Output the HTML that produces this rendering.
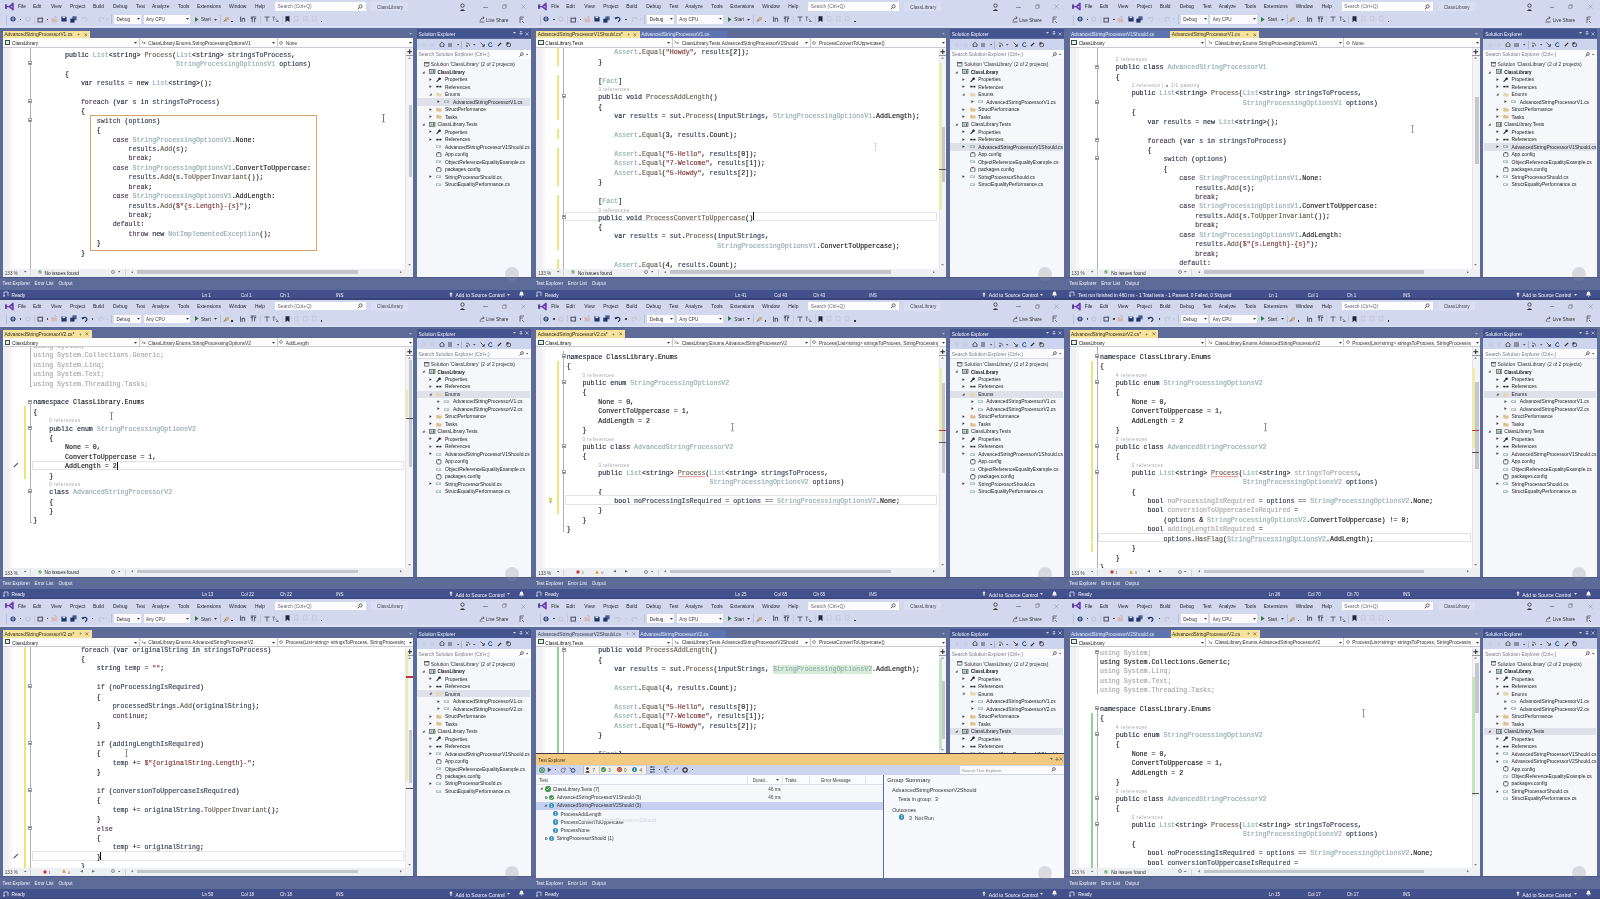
<!DOCTYPE html><html><head><meta charset="utf-8"><style>
html,body{margin:0;padding:0;width:1600px;height:899px;overflow:hidden;background:#5d6b99}
.tile{position:absolute;width:533.333px;height:299.667px;overflow:hidden;background:#5d6b99;filter:blur(0.3px)}
.tile i,.tile b,.tile div{position:absolute;display:block;font-style:normal}
.tile b{white-space:pre}.cd{-webkit-text-stroke:0.15px currentColor}
</style></head><body>
<div class="tile" style="left:0.000px;top:0.000px">
<i style="left:0.00px;top:0.00px;width:533.33px;height:27.70px;background:#d2d8ee;"></i>
<i style="left:0.00px;top:25.90px;width:533.33px;height:1.50px;background:#dce1f4;"></i>
<svg style="position:absolute;left:4.00px;top:2.00px" width="11" height="10" viewBox="0 0 11 10"><rect x="1.0" y="2.4" width="2.1" height="4.4" fill="#5b4596"/><path d="M3 4.6 L5.2 4.6" stroke="#6a48b0" stroke-width="1.2"/><path d="M5.3 4.6 L9.0 1.4 L9.0 7.8 Z" fill="#c6a8ee" stroke="#6a3cb4" stroke-width="1.5" stroke-linejoin="round"/></svg>
<b style="left:18.00px;top:4.46px;font:normal 4.9px/5.88px 'Liberation Sans',sans-serif;color:#1e1e28;">File</b>
<b style="left:33.00px;top:4.46px;font:normal 4.9px/5.88px 'Liberation Sans',sans-serif;color:#1e1e28;">Edit</b>
<b style="left:51.00px;top:4.46px;font:normal 4.9px/5.88px 'Liberation Sans',sans-serif;color:#1e1e28;">View</b>
<b style="left:70.00px;top:4.46px;font:normal 4.9px/5.88px 'Liberation Sans',sans-serif;color:#1e1e28;">Project</b>
<b style="left:93.00px;top:4.46px;font:normal 4.9px/5.88px 'Liberation Sans',sans-serif;color:#1e1e28;">Build</b>
<b style="left:113.00px;top:4.46px;font:normal 4.9px/5.88px 'Liberation Sans',sans-serif;color:#1e1e28;">Debug</b>
<b style="left:136.00px;top:4.46px;font:normal 4.9px/5.88px 'Liberation Sans',sans-serif;color:#1e1e28;">Test</b>
<b style="left:152.00px;top:4.46px;font:normal 4.9px/5.88px 'Liberation Sans',sans-serif;color:#1e1e28;">Analyze</b>
<b style="left:178.00px;top:4.46px;font:normal 4.9px/5.88px 'Liberation Sans',sans-serif;color:#1e1e28;">Tools</b>
<b style="left:197.00px;top:4.46px;font:normal 4.9px/5.88px 'Liberation Sans',sans-serif;color:#1e1e28;">Extensions</b>
<b style="left:229.00px;top:4.46px;font:normal 4.9px/5.88px 'Liberation Sans',sans-serif;color:#1e1e28;">Window</b>
<b style="left:255.00px;top:4.46px;font:normal 4.9px/5.88px 'Liberation Sans',sans-serif;color:#1e1e28;">Help</b>
<i style="left:275.00px;top:2.40px;width:91.00px;height:8.40px;background:#fdfdfe;"></i>
<b style="left:277.50px;top:4.49px;font:normal 4.85px/5.82px 'Liberation Sans',sans-serif;color:#6a6c78;">Search (Ctrl+Q)</b>
<svg style="position:absolute;left:357.00px;top:3.80px" width="6" height="6" viewBox="0 0 6 6"><circle cx="3.6" cy="2.4" r="1.6" fill="none" stroke="#444" stroke-width="0.8"/><path d="M2.5 3.5 L0.8 5.2" stroke="#444" stroke-width="0.9"/></svg>
<i style="left:371.00px;top:2.00px;width:37.00px;height:9.00px;background:#d9def2;"></i>
<b style="left:377.00px;top:4.58px;font:normal 4.7px/5.64px 'Liberation Sans',sans-serif;color:#4a4c58;">ClassLibrary</b>
<svg style="position:absolute;left:459.00px;top:2.50px" width="7" height="8.5" viewBox="0 0 7 8.5"><circle cx="3.5" cy="2.6" r="1.7" fill="none" stroke="#333" stroke-width="0.8"/><path d="M0.8 8 Q3.5 4.3 6.2 8 Z" fill="#333"/></svg>
<i style="left:483.00px;top:6.60px;width:4.50px;height:0.45px;background:#8a8e9c;"></i>
<svg style="position:absolute;left:501.50px;top:4.00px" width="5" height="5" viewBox="0 0 5 5"><path d="M1.3 0.6 L4.4 0.6 L4.4 3.7 M0.6 1.4 L3.6 1.4 L3.6 4.4 L0.6 4.4 Z" stroke="#777b88" stroke-width="0.55" fill="none"/></svg>
<svg style="position:absolute;left:521.00px;top:4.30px" width="5" height="5" viewBox="0 0 5 5"><path d="M0.5 0.5 L4.5 4.5 M4.5 0.5 L0.5 4.5" stroke="#8a8e9c" stroke-width="0.55"/></svg>
<i style="left:6.30px;top:14.50px;width:0.60px;height:10.00px;background:#b9bfd6;"></i>
<svg style="position:absolute;left:10.00px;top:16.20px" width="6" height="6" viewBox="0 0 6 6"><circle cx="3" cy="3" r="2" fill="none" stroke="#1d3a6e" stroke-width="1.2"/><path d="M1.6 3 L4.2 3" stroke="#1d3a6e" stroke-width="0.8"/></svg>
<i style="left:20.00px;top:18.80px;width:1.30px;height:1.10px;background:#444;border-radius:0"></i>
<svg style="position:absolute;left:24.50px;top:16.20px" width="6" height="6" viewBox="0 0 6 6"><circle cx="3" cy="3" r="2" fill="none" stroke="#c0c6dc" stroke-width="1.1"/></svg>
<i style="left:33.50px;top:15.50px;width:0.50px;height:8.00px;background:#c3c8dc;"></i>
<svg style="position:absolute;left:36.50px;top:15.60px" width="7" height="7" viewBox="0 0 7 7"><rect x="1" y="2.2" width="4.4" height="3.8" fill="none" stroke="#4a4e60" stroke-width="1"/><path d="M4.5 0.3 L5.2 1.7 L6.6 2.2 L5.2 2.7" fill="#4a4e60"/></svg>
<i style="left:46.80px;top:18.80px;width:1.30px;height:1.10px;background:#444;border-radius:0"></i>
<svg style="position:absolute;left:50.80px;top:15.80px" width="7" height="7" viewBox="0 0 7 7"><path d="M0.5 2 L2.5 2 L3 2.8 L6 2.8 L6 6.3 L0.5 6.3 Z" fill="#d8b8b0"/><path d="M3.5 0.5 L5.5 1.5" stroke="#b89890" stroke-width="0.8"/></svg>
<svg style="position:absolute;left:61.00px;top:16.30px" width="6" height="6" viewBox="0 0 6 6"><path d="M0.4 0.4 L4.6 0.4 L5.6 1.4 L5.6 5.6 L0.4 5.6 Z" fill="#1d3468"/><rect x="1.6" y="0.4" width="2.6" height="1.8" fill="#d9ddef"/></svg>
<svg style="position:absolute;left:69.50px;top:15.60px" width="7" height="7" viewBox="0 0 7 7"><path d="M2.4 0.3 L6.6 0.3 L6.6 4.3 L2.4 4.3 Z" fill="#4a5d8f"/><path d="M0.3 2.6 L4.5 2.6 L4.5 6.6 L0.3 6.6 Z" fill="#1d3468"/></svg>
<svg style="position:absolute;left:80.50px;top:16.20px" width="7" height="6" viewBox="0 0 7 6"><path d="M1.5 2.5 Q4 0.3 5.8 2.5 Q6.5 4.5 4 5.6" fill="none" stroke="#c3c8dc" stroke-width="1.1"/><path d="M0.4 1 L1.4 3.4 L3.4 2.2 Z" fill="#c3c8dc"/></svg>
<i style="left:92.00px;top:18.80px;width:1.30px;height:1.10px;background:#c3c8dc;border-radius:0"></i>
<svg style="position:absolute;left:97.50px;top:16.20px" width="7" height="6" viewBox="0 0 7 6"><path d="M5.5 2.5 Q3 0.3 1.2 2.5 Q0.5 4.5 3 5.6" fill="none" stroke="#c3c8dc" stroke-width="1.1"/><path d="M6.6 1 L5.6 3.4 L3.6 2.2 Z" fill="#c3c8dc"/></svg>
<i style="left:106.20px;top:18.90px;width:1.80px;height:0.60px;background:#c3c8dc;"></i>
<i style="left:106.80px;top:18.30px;width:0.60px;height:1.80px;background:#c3c8dc;"></i>
<i style="left:111.00px;top:15.00px;width:0.50px;height:8.50px;background:#b9bfd6;"></i>
<i style="left:114.00px;top:15.00px;width:27.00px;height:8.50px;background:#fbfbfd;"></i>
<b style="left:116.50px;top:17.44px;font:normal 4.6px/5.52px 'Liberation Sans',sans-serif;color:#333;">Debug</b>
<svg style="position:absolute;left:137.00px;top:18.40px" width="3" height="2" viewBox="0 0 3 2"><path d="M0 0 L3 0 L1.5 1.8 Z" fill="#333"/></svg>
<i style="left:143.50px;top:15.00px;width:46.50px;height:8.50px;background:#fbfbfd;"></i>
<b style="left:146.00px;top:17.44px;font:normal 4.6px/5.52px 'Liberation Sans',sans-serif;color:#444;">Any CPU</b>
<svg style="position:absolute;left:186.00px;top:18.40px" width="3" height="2" viewBox="0 0 3 2"><path d="M0 0 L3 0 L1.5 1.8 Z" fill="#333"/></svg>
<svg style="position:absolute;left:194.50px;top:16.70px" width="4" height="5" viewBox="0 0 4 5"><path d="M0 0 L3.5 2.5 L0 5 Z" fill="#2c7a3c"/></svg>
<b style="left:201.00px;top:17.34px;font:normal 4.6px/5.52px 'Liberation Sans',sans-serif;color:#333;">Start</b>
<svg style="position:absolute;left:214.00px;top:18.60px" width="3" height="2" viewBox="0 0 3 2"><path d="M0 0 L3 0 L1.5 1.8 Z" fill="#333"/></svg>
<i style="left:220.00px;top:15.00px;width:0.50px;height:8.50px;background:#b9bfd6;"></i>
<svg style="position:absolute;left:222.50px;top:16.20px" width="7" height="6" viewBox="0 0 7 6"><path d="M0.5 5.5 L3 1 L6 1 L6 3.5 L3 5.5 Z" fill="#c9b08a"/><path d="M0.5 5.5 L3 3.5" stroke="#555" stroke-width="0.6"/></svg>
<i style="left:231.30px;top:20.60px;width:1.30px;height:1.30px;background:#333;border-radius:0"></i>
<svg style="position:absolute;left:240.00px;top:16.00px" width="7" height="6.5" viewBox="0 0 7 6.5"><path d="M0.6 0.5 L0.6 5.8 M2.2 2 L2.2 5.8 M2.2 2.3 L4.6 2.3 L4.6 5.8" stroke="#3f4660" stroke-width="0.9" fill="none"/></svg>
<svg style="position:absolute;left:250.00px;top:15.80px" width="7" height="7" viewBox="0 0 7 7"><path d="M0.8 1 L6.2 1 M0.8 2.6 L3 2.6 M4 2.6 L6.2 2.6 M2.2 1 L2.2 6.3 M4.6 2.6 L4.6 6.3" stroke="#454c64" stroke-width="0.9" fill="none"/></svg>
<i style="left:259.50px;top:15.50px;width:0.50px;height:8.00px;background:#c3c8dc;"></i>
<svg style="position:absolute;left:263.50px;top:16.20px" width="6" height="6" viewBox="0 0 6 6"><path d="M0.5 1 L5.5 1 M3 1 L3 5.6" stroke="#5b6275" stroke-width="1.0" fill="none"/></svg>
<svg style="position:absolute;left:272.00px;top:16.20px" width="7" height="6" viewBox="0 0 7 6"><path d="M0.5 1 L3 1 M1.7 1 L1.7 5 M3.5 3 L6.5 5.5 M4 5.5 L6.5 5.5" stroke="#6d7389" stroke-width="0.9" fill="none"/></svg>
<i style="left:281.50px;top:15.50px;width:0.50px;height:8.00px;background:#c3c8dc;"></i>
<svg style="position:absolute;left:285.00px;top:16.00px" width="5" height="6.5" viewBox="0 0 5 6.5"><path d="M0.5 0.3 L4.5 0.3 L4.5 6.2 L2.5 4.6 L0.5 6.2 Z" fill="#1f2640"/></svg>
<svg style="position:absolute;left:294.00px;top:16.00px" width="6" height="6.5" viewBox="0 0 6 6.5"><path d="M0.5 0.5 L4 0.5 L4 5.5 L2.2 4.2 L0.5 5.5 Z" fill="none" stroke="#c3c8dc" stroke-width="0.8"/></svg>
<svg style="position:absolute;left:303.00px;top:16.00px" width="6" height="6.5" viewBox="0 0 6 6.5"><path d="M0.5 0.5 L4 0.5 L4 5.5 L2.2 4.2 L0.5 5.5 Z" fill="none" stroke="#c3c8dc" stroke-width="0.8"/></svg>
<svg style="position:absolute;left:312.00px;top:16.00px" width="6" height="6.5" viewBox="0 0 6 6.5"><path d="M0.5 0.5 L4 0.5 L4 5.5 L2.2 4.2 L0.5 5.5 Z" fill="none" stroke="#c3c8dc" stroke-width="0.8"/></svg>
<i style="left:321.00px;top:20.60px;width:1.30px;height:1.30px;background:#333;border-radius:0"></i>
<svg style="position:absolute;left:478.50px;top:16.30px" width="7" height="6.5" viewBox="0 0 7 6.5"><path d="M0.5 6 L5.5 6 M1.2 4.8 Q2 1.6 4.8 1.8 M3.8 0.6 L5.2 1.8 L3.8 3" stroke="#333" stroke-width="0.7" fill="none"/></svg>
<b style="left:486.00px;top:17.58px;font:normal 4.7px/5.64px 'Liberation Sans',sans-serif;color:#333;">Live Share</b>
<svg style="position:absolute;left:519.00px;top:15.50px" width="6" height="8" viewBox="0 0 6 8"><path d="M1 1 L5 1 M1 3 L4 3 M1 1 L1 7 M3 5 L5 7" stroke="#444" stroke-width="0.7" fill="none"/></svg>
<i style="left:0.00px;top:27.70px;width:533.33px;height:249.20px;background:#5d6b99;"></i>
<i style="left:3.00px;top:30.60px;width:87.30px;height:7.70px;background:#f5e29c;"></i>
<b style="left:4.40px;top:32.29px;font:normal 4.85px/5.82px 'Liberation Sans',sans-serif;color:#2e2a1c;">AdvancedStringProcessorV1.cs</b>
<svg style="position:absolute;left:77.30px;top:33.00px" width="3" height="3" viewBox="0 0 3 3"><path d="M0.5 1.5 L2.5 1.5 M1.5 0.5 L1.5 2.5" stroke="#6b6248" stroke-width="0.6"/></svg>
<svg style="position:absolute;left:83.80px;top:32.60px" width="3.6" height="3.6" viewBox="0 0 3.6 3.6"><path d="M0.4 0.4 L3.2 3.2 M3.2 0.4 L0.4 3.2" stroke="#7a5a30" stroke-width="0.7"/></svg>
<svg style="position:absolute;left:408.80px;top:33.30px" width="3" height="2" viewBox="0 0 3 2"><path d="M0 0 L3 0 L1.5 1.8 Z" fill="#aab2d0"/></svg>
<i style="left:3.00px;top:38.30px;width:410.00px;height:9.10px;background:#fdfdfe;"></i>
<i style="left:3.00px;top:46.80px;width:410.00px;height:0.60px;background:#c9ccd6;"></i>
<i style="left:138.70px;top:38.30px;width:0.60px;height:9.10px;background:#c9ccd6;"></i>
<i style="left:276.70px;top:38.30px;width:0.60px;height:9.10px;background:#c9ccd6;"></i>
<i style="left:4.60px;top:40.00px;width:5.60px;height:5.00px;background:#e8ece8;border:0.8px solid #35503f;box-sizing:border-box"></i>
<b style="left:12.00px;top:41.18px;font:normal 4.7px/5.64px 'Liberation Sans',sans-serif;color:#222;width:120px;overflow:hidden">ClassLibrary</b>
<svg style="position:absolute;left:134.00px;top:42.30px" width="3" height="2" viewBox="0 0 3 2"><path d="M0 0 L3 0 L1.5 1.8 Z" fill="#333"/></svg>
<svg style="position:absolute;left:141.00px;top:40.30px" width="4.5" height="4.5" viewBox="0 0 4.5 4.5"><path d="M0.5 3.5 L2 2 L0.5 0.5" stroke="#8a6a30" stroke-width="0.6" fill="none"/><rect x="2.5" y="2" width="2" height="2" fill="#998"/></svg>
<b style="left:148.30px;top:41.12px;font:normal 4.8px/5.76px 'Liberation Sans',sans-serif;color:#333;width:122px;overflow:hidden">ClassLibrary.Enums.StringProcessingOptionsV1</b>
<svg style="position:absolute;left:272.00px;top:42.30px" width="3" height="2" viewBox="0 0 3 2"><path d="M0 0 L3 0 L1.5 1.8 Z" fill="#333"/></svg>
<svg style="position:absolute;left:279.00px;top:40.50px" width="4" height="4" viewBox="0 0 4 4"><circle cx="2" cy="2" r="1.4" fill="none" stroke="#555" stroke-width="0.6"/></svg>
<b style="left:285.70px;top:41.12px;font:normal 4.8px/5.76px 'Liberation Sans',sans-serif;color:#333;width:119px;overflow:hidden">None</b>
<svg style="position:absolute;left:409.00px;top:42.30px" width="3" height="2" viewBox="0 0 3 2"><path d="M0 0 L3 0 L1.5 1.8 Z" fill="#333"/></svg>
<i style="left:3.00px;top:47.60px;width:410.00px;height:221.20px;background:#ffffff;"></i>
<i style="left:3.00px;top:47.60px;width:9.00px;height:221.20px;background:#f0f0f2;"></i>
<i style="left:9.00px;top:47.60px;width:3.00px;height:221.20px;background:#f7f7f9;"></i>
<i style="left:30.00px;top:47.60px;width:0.60px;height:221.20px;background:#b0b0b8;"></i>
<i style="left:416.60px;top:29.20px;width:114.20px;height:9.20px;background:#44548e;"></i>
<b style="left:418.50px;top:32.49px;font:normal 4.85px/5.82px 'Liberation Sans',sans-serif;color:#f0f2fa;">Solution Explorer</b>
<svg style="position:absolute;left:512.50px;top:32.20px" width="3" height="2.5" viewBox="0 0 3 2.5"><path d="M0 0 L3 0 L1.5 1.8 Z" fill="#dde"/></svg>
<svg style="position:absolute;left:518.50px;top:31.20px" width="4" height="4.5" viewBox="0 0 4 4.5"><path d="M2 0.3 L2 4.2 M0.3 2.6 L3.7 2.6 M0.8 0.5 L3.2 0.5" stroke="#dde" stroke-width="0.6"/></svg>
<svg style="position:absolute;left:524.50px;top:31.50px" width="4" height="4" viewBox="0 0 4 4"><path d="M0.4 0.4 L3.6 3.6 M3.6 0.4 L0.4 3.6" stroke="#dde" stroke-width="0.6"/></svg>
<i style="left:416.60px;top:38.50px;width:114.20px;height:11.00px;background:#cdd5ee;"></i>
<div style="left:0;top:1px">
<i style="left:421.50px;top:41.60px;width:4.40px;height:4.40px;background:#c7cde2;border-radius:50%"></i>
<i style="left:430.00px;top:41.60px;width:4.40px;height:4.40px;background:#c7cde2;border-radius:50%"></i>
<svg style="position:absolute;left:438.50px;top:41.00px" width="6" height="5" viewBox="0 0 6 5"><path d="M0.5 2.6 L3 0.3 L5.5 2.6 M1.2 2.4 L1.2 4.8 L4.8 4.8 L4.8 2.4" stroke="#333" stroke-width="0.8" fill="none"/></svg>
<i style="left:447.50px;top:41.60px;width:4.40px;height:4.40px;background:#8a8fa3;"></i>
<svg style="position:absolute;left:456.50px;top:43.40px" width="2.5" height="1.6" viewBox="0 0 2.5 1.6"><path d="M0 0 L2.5 0 L1.25 1.5 Z" fill="#444"/></svg>
<i style="left:461.00px;top:40.20px;width:0.50px;height:7.60px;background:#aeb5cc;"></i>
<svg style="position:absolute;left:464.50px;top:41.00px" width="6" height="5.5" viewBox="0 0 6 5.5"><path d="M1 1 Q4.5 0.5 4.8 4" stroke="#555" stroke-width="0.8" fill="none"/><circle cx="2" cy="4" r="1" fill="#555"/></svg>
<svg style="position:absolute;left:473.00px;top:43.40px" width="2.5" height="1.6" viewBox="0 0 2.5 1.6"><path d="M0 0 L2.5 0 L1.25 1.5 Z" fill="#444"/></svg>
<svg style="position:absolute;left:479.50px;top:41.00px" width="5" height="5" viewBox="0 0 5 5"><path d="M0.5 0.5 L4 4 M2 4.3 L4.3 4.3 L4.3 2" stroke="#333" stroke-width="0.8" fill="none"/></svg>
<svg style="position:absolute;left:488.30px;top:40.90px" width="5" height="5.5" viewBox="0 0 5 5.5"><path d="M4 1.4 A2 2 0 1 0 4.3 3.6" stroke="#1e4a8a" stroke-width="1.0" fill="none"/></svg>
<svg style="position:absolute;left:497.00px;top:41.20px" width="5" height="5" viewBox="0 0 5 5"><path d="M0.8 4.2 L4.2 0.8" stroke="#222" stroke-width="1.2"/></svg>
<svg style="position:absolute;left:505.50px;top:40.90px" width="5.5" height="5.5" viewBox="0 0 5.5 5.5"><circle cx="2.7" cy="2.9" r="2" fill="none" stroke="#333" stroke-width="0.8"/><rect x="0.5" y="0.3" width="2" height="2" fill="#333"/></svg>
</div>
<i style="left:416.60px;top:49.50px;width:114.20px;height:9.50px;background:#fcfcfe;"></i>
<i style="left:416.60px;top:58.60px;width:114.20px;height:0.50px;background:#d8dbe6;"></i>
<b style="left:418.50px;top:52.43px;font:normal 4.95px/5.94px 'Liberation Sans',sans-serif;color:#7d7f89;">Search Solution Explorer (Ctrl+;)</b>
<svg style="position:absolute;left:518.50px;top:51.60px" width="5" height="5" viewBox="0 0 5 5"><circle cx="3" cy="2" r="1.4" fill="none" stroke="#444" stroke-width="0.7"/><path d="M2 3 L0.5 4.6" stroke="#444" stroke-width="0.8"/></svg>
<svg style="position:absolute;left:525.50px;top:53.60px" width="2.5" height="1.6" viewBox="0 0 2.5 1.6"><path d="M0 0 L2.5 0 L1.25 1.5 Z" fill="#555"/></svg>
<i style="left:416.60px;top:59.00px;width:114.20px;height:217.90px;background:#f6f7fb;"></i>
<svg style="position:absolute;left:424.00px;top:62.00px" width="5.5" height="5" viewBox="0 0 5.5 5"><rect x="0.4" y="0.4" width="4.6" height="3.6" fill="none" stroke="#444" stroke-width="0.6"/><rect x="0.4" y="0.4" width="4.6" height="1" fill="#444"/><path d="M1.5 4.6 L4 4.6" stroke="#666" stroke-width="0.5"/></svg>
<b style="left:430.80px;top:62.33px;font:normal 4.95px/5.94px 'Liberation Sans',sans-serif;color:#333;">Solution 'ClassLibrary' (2 of 2 projects)</b>
<svg style="position:absolute;left:421.80px;top:70.59px" width="3" height="3" viewBox="0 0 3 3"><path d="M2.6 0.3 L2.6 2.6 L0.3 2.6 Z" fill="#333"/></svg>
<svg style="position:absolute;left:429.00px;top:69.49px" width="6.5" height="5" viewBox="0 0 6.5 5"><rect x="0.4" y="0.4" width="5.6" height="4.2" fill="#e9ecef" stroke="#4a5a4e" stroke-width="0.7"/><path d="M1.5 2 L3 2 M1.5 3.2 L3 3.2" stroke="#444" stroke-width="0.6"/><rect x="3.8" y="1.4" width="1.5" height="2.4" fill="#3d6b4d"/></svg>
<b style="left:437.60px;top:70.09px;font:bold 4.5px/5.4px 'Liberation Sans',sans-serif;color:#111;">ClassLibrary</b>
<svg style="position:absolute;left:429.10px;top:77.88px" width="3" height="3.2" viewBox="0 0 3 3.2"><path d="M0.5 0.2 L2.7 1.6 L0.5 3.0 Z" fill="#333"/></svg>
<svg style="position:absolute;left:436.30px;top:76.98px" width="5.5" height="5.5" viewBox="0 0 5.5 5.5"><path d="M0.6 4.8 L3 2.4" stroke="#222" stroke-width="1.1"/><circle cx="3.6" cy="1.8" r="1.3" fill="#222"/></svg>
<b style="left:444.90px;top:77.31px;font:normal 4.95px/5.94px 'Liberation Sans',sans-serif;color:#222;">Properties</b>
<svg style="position:absolute;left:429.10px;top:85.37px" width="3" height="3.2" viewBox="0 0 3 3.2"><path d="M0.5 0.2 L2.7 1.6 L0.5 3.0 Z" fill="#333"/></svg>
<svg style="position:absolute;left:436.30px;top:84.47px" width="6" height="5" viewBox="0 0 6 5"><rect x="0.3" y="1.8" width="2" height="1.6" fill="#222"/><rect x="3.4" y="1.8" width="2" height="1.6" fill="#222"/><path d="M2 2.6 L3.6 2.6" stroke="#222" stroke-width="0.5"/></svg>
<b style="left:444.90px;top:84.80px;font:normal 4.95px/5.94px 'Liberation Sans',sans-serif;color:#222;">References</b>
<svg style="position:absolute;left:429.10px;top:93.06px" width="3" height="3" viewBox="0 0 3 3"><path d="M2.6 0.3 L2.6 2.6 L0.3 2.6 Z" fill="#333"/></svg>
<svg style="position:absolute;left:436.30px;top:91.96px" width="6" height="5" viewBox="0 0 6 5"><path d="M0.3 0.8 L2.4 0.8 L3 1.5 L5.6 1.5 L5.6 4.5 L0.3 4.5 Z" fill="#e6d6b0"/></svg>
<b style="left:444.90px;top:92.29px;font:normal 4.95px/5.94px 'Liberation Sans',sans-serif;color:#222;">Enums</b>
<i style="left:417.10px;top:98.35px;width:112.70px;height:7.30px;background:#dfe1ea;"></i>
<svg style="position:absolute;left:437.20px;top:100.35px" width="3" height="3.2" viewBox="0 0 3 3.2"><path d="M0.5 0.2 L2.7 1.6 L0.5 3.0 Z" fill="#333"/></svg>
<svg style="position:absolute;left:444.40px;top:99.45px" width="6" height="5" viewBox="0 0 6 5"><text x="0" y="4" font-family="Liberation Sans" font-size="4" font-weight="bold" fill="#6a8a78">C#</text></svg>
<b style="left:453.00px;top:99.78px;font:normal 4.95px/5.94px 'Liberation Sans',sans-serif;color:#222;">AdvancedStringProcessorV1.cs</b>
<svg style="position:absolute;left:429.10px;top:107.84px" width="3" height="3.2" viewBox="0 0 3 3.2"><path d="M0.5 0.2 L2.7 1.6 L0.5 3.0 Z" fill="#333"/></svg>
<svg style="position:absolute;left:436.30px;top:106.94px" width="6" height="5" viewBox="0 0 6 5"><path d="M0.3 0.8 L2.4 0.8 L3 1.5 L5.6 1.5 L5.6 4.5 L0.3 4.5 Z" fill="#dcc18c"/></svg>
<b style="left:444.90px;top:107.27px;font:normal 4.95px/5.94px 'Liberation Sans',sans-serif;color:#222;">StructPerformance</b>
<svg style="position:absolute;left:429.10px;top:115.33px" width="3" height="3.2" viewBox="0 0 3 3.2"><path d="M0.5 0.2 L2.7 1.6 L0.5 3.0 Z" fill="#333"/></svg>
<svg style="position:absolute;left:436.30px;top:114.43px" width="6" height="5" viewBox="0 0 6 5"><path d="M0.3 0.8 L2.4 0.8 L3 1.5 L5.6 1.5 L5.6 4.5 L0.3 4.5 Z" fill="#dcc18c"/></svg>
<b style="left:444.90px;top:114.76px;font:normal 4.95px/5.94px 'Liberation Sans',sans-serif;color:#222;">Tasks</b>
<svg style="position:absolute;left:421.80px;top:123.02px" width="3" height="3" viewBox="0 0 3 3"><path d="M2.6 0.3 L2.6 2.6 L0.3 2.6 Z" fill="#333"/></svg>
<svg style="position:absolute;left:429.00px;top:121.92px" width="6.5" height="5" viewBox="0 0 6.5 5"><rect x="0.4" y="0.4" width="5.6" height="4.2" fill="#e9ecef" stroke="#4a5a4e" stroke-width="0.7"/><path d="M1.5 2 L3 2 M1.5 3.2 L3 3.2" stroke="#444" stroke-width="0.6"/><rect x="3.8" y="1.4" width="1.5" height="2.4" fill="#3d6b4d"/></svg>
<b style="left:437.60px;top:122.25px;font:normal 4.95px/5.94px 'Liberation Sans',sans-serif;color:#222;">ClassLibrary.Tests</b>
<svg style="position:absolute;left:429.10px;top:130.31px" width="3" height="3.2" viewBox="0 0 3 3.2"><path d="M0.5 0.2 L2.7 1.6 L0.5 3.0 Z" fill="#333"/></svg>
<svg style="position:absolute;left:436.30px;top:129.41px" width="5.5" height="5.5" viewBox="0 0 5.5 5.5"><path d="M0.6 4.8 L3 2.4" stroke="#222" stroke-width="1.1"/><circle cx="3.6" cy="1.8" r="1.3" fill="#222"/></svg>
<b style="left:444.90px;top:129.74px;font:normal 4.95px/5.94px 'Liberation Sans',sans-serif;color:#222;">Properties</b>
<svg style="position:absolute;left:429.10px;top:137.80px" width="3" height="3.2" viewBox="0 0 3 3.2"><path d="M0.5 0.2 L2.7 1.6 L0.5 3.0 Z" fill="#333"/></svg>
<svg style="position:absolute;left:436.30px;top:136.90px" width="6" height="5" viewBox="0 0 6 5"><rect x="0.3" y="1.8" width="2" height="1.6" fill="#222"/><rect x="3.4" y="1.8" width="2" height="1.6" fill="#222"/><path d="M2 2.6 L3.6 2.6" stroke="#222" stroke-width="0.5"/></svg>
<b style="left:444.90px;top:137.23px;font:normal 4.95px/5.94px 'Liberation Sans',sans-serif;color:#222;">References</b>
<svg style="position:absolute;left:436.30px;top:144.39px" width="6" height="5" viewBox="0 0 6 5"><text x="0" y="4" font-family="Liberation Sans" font-size="4" font-weight="bold" fill="#6a8a78">C#</text></svg>
<b style="left:444.90px;top:144.72px;font:normal 4.95px/5.94px 'Liberation Sans',sans-serif;color:#222;">AdvancedStringProcessorV1Should.cs</b>
<svg style="position:absolute;left:436.30px;top:151.88px" width="6" height="5.5" viewBox="0 0 6 5.5"><rect x="0.6" y="0.6" width="4.4" height="4.4" rx="1.2" fill="none" stroke="#333" stroke-width="0.7"/><path d="M2.8 0 L2.8 1.6" stroke="#333" stroke-width="0.7"/></svg>
<b style="left:444.90px;top:152.21px;font:normal 4.95px/5.94px 'Liberation Sans',sans-serif;color:#222;">App.config</b>
<svg style="position:absolute;left:436.30px;top:159.37px" width="6" height="5" viewBox="0 0 6 5"><text x="0" y="4" font-family="Liberation Sans" font-size="4" font-weight="bold" fill="#6a8a78">C#</text></svg>
<b style="left:444.90px;top:159.70px;font:normal 4.95px/5.94px 'Liberation Sans',sans-serif;color:#222;">ObjectReferenceEqualityExample.cs</b>
<svg style="position:absolute;left:436.30px;top:166.86px" width="6" height="5.5" viewBox="0 0 6 5.5"><rect x="0.6" y="0.6" width="4.4" height="4.4" rx="1.2" fill="none" stroke="#333" stroke-width="0.7"/><path d="M2.8 0 L2.8 1.6" stroke="#333" stroke-width="0.7"/></svg>
<b style="left:444.90px;top:167.19px;font:normal 4.95px/5.94px 'Liberation Sans',sans-serif;color:#222;">packages.config</b>
<svg style="position:absolute;left:429.10px;top:175.25px" width="3" height="3.2" viewBox="0 0 3 3.2"><path d="M0.5 0.2 L2.7 1.6 L0.5 3.0 Z" fill="#333"/></svg>
<svg style="position:absolute;left:436.30px;top:174.35px" width="6" height="5" viewBox="0 0 6 5"><text x="0" y="4" font-family="Liberation Sans" font-size="4" font-weight="bold" fill="#6a8a78">C#</text></svg>
<b style="left:444.90px;top:174.68px;font:normal 4.95px/5.94px 'Liberation Sans',sans-serif;color:#222;">StringProcessorShould.cs</b>
<svg style="position:absolute;left:436.30px;top:181.84px" width="6" height="5" viewBox="0 0 6 5"><text x="0" y="4" font-family="Liberation Sans" font-size="4" font-weight="bold" fill="#6a8a78">C#</text></svg>
<b style="left:444.90px;top:182.17px;font:normal 4.95px/5.94px 'Liberation Sans',sans-serif;color:#222;">StructEqualityPerformance.cs</b>
<i style="left:0.00px;top:276.90px;width:533.33px;height:12.80px;background:#5d6b99;"></i>
<i style="left:0.00px;top:276.90px;width:533.33px;height:0.90px;background:#4f5a88;"></i>
<b style="left:2.60px;top:281.38px;font:normal 4.7px/5.64px 'Liberation Sans',sans-serif;color:#eef0f8;">Test Explorer</b>
<b style="left:34.50px;top:281.38px;font:normal 4.7px/5.64px 'Liberation Sans',sans-serif;color:#eef0f8;">Error List</b>
<b style="left:58.40px;top:281.38px;font:normal 4.7px/5.64px 'Liberation Sans',sans-serif;color:#eef0f8;">Output</b>
<i style="left:0.00px;top:289.70px;width:533.33px;height:9.97px;background:#42508c;"></i>
<i style="left:0.00px;top:298.30px;width:533.33px;height:1.37px;background:#384276;"></i>
<svg style="position:absolute;left:2.50px;top:291.20px" width="6" height="6" viewBox="0 0 6 6"><path d="M1 5.5 L1 1 L5 1 L5 5 M0.2 4.3 L1 5.5 L1.8 4.3" stroke="#eef" stroke-width="0.7" fill="none"/></svg>
<b style="left:11.50px;top:292.55px;font:normal 4.75px/5.7px 'Liberation Sans',sans-serif;color:#f2f3f8;">Ready</b>
<b style="left:202.00px;top:292.60px;font:normal 4.5px/5.4px 'Liberation Sans',sans-serif;color:#f2f3f8;">Ln 1</b>
<b style="left:241.00px;top:292.60px;font:normal 4.5px/5.4px 'Liberation Sans',sans-serif;color:#f2f3f8;">Col 1</b>
<b style="left:280.00px;top:292.60px;font:normal 4.5px/5.4px 'Liberation Sans',sans-serif;color:#f2f3f8;">Ch 1</b>
<b style="left:336.00px;top:292.60px;font:normal 4.5px/5.4px 'Liberation Sans',sans-serif;color:#f2f3f8;">INS</b>
<svg style="position:absolute;left:449.00px;top:291.60px" width="4" height="5" viewBox="0 0 4 5"><path d="M2 0.3 L3.8 2.3 L2.6 2.3 L2.6 4.8 L1.4 4.8 L1.4 2.3 L0.2 2.3 Z" fill="#f2f3f8"/></svg>
<b style="left:455.50px;top:292.40px;font:normal 5.0px/6.0px 'Liberation Sans',sans-serif;color:#f2f3f8;">Add to Source Control</b>
<svg style="position:absolute;left:507.00px;top:293.50px" width="3" height="2" viewBox="0 0 3 2"><path d="M0 0 L3 0 L1.5 1.8 Z" fill="#f2f3f8"/></svg>
<svg style="position:absolute;left:519.00px;top:291.00px" width="5" height="6" viewBox="0 0 5 6"><path d="M2.5 0.3 Q4.3 0.8 4.3 3 L4.8 4.5 L0.2 4.5 L0.7 3 Q0.7 0.8 2.5 0.3 Z M1.8 5 L3.2 5 L2.5 5.8 Z" fill="#f2f3f8"/></svg>
<div style="left:3.0px;top:47.6px;width:402.20px;height:221.20px;overflow:hidden">
<b style="left:30.30px;top:3.19px;font:normal 6.62px/9.42px 'Liberation Mono',monospace" class="cd">        <span style="color:#262a40">public</span> <span style="color:#93acb0">List</span><span style="color:#202020">&lt;</span><span style="color:#262a40">string</span><span style="color:#202020">&gt;</span> <span style="color:#6a6054">Process</span><span style="color:#202020">(</span><span style="color:#93acb0">List</span><span style="color:#202020">&lt;</span><span style="color:#262a40">string</span><span style="color:#202020">&gt;</span> <span style="color:#3c4156">stringsToProcess</span><span style="color:#202020">,</span></b>
<b style="left:30.30px;top:12.61px;font:normal 6.62px/9.42px 'Liberation Mono',monospace" class="cd">                                    <span style="color:#93acb0">StringProcessingOptionsV1</span> <span style="color:#3c4156">options</span><span style="color:#202020">)</span></b>
<b style="left:30.30px;top:22.03px;font:normal 6.62px/9.42px 'Liberation Mono',monospace" class="cd">        <span style="color:#202020">{</span></b>
<b style="left:30.30px;top:31.45px;font:normal 6.62px/9.42px 'Liberation Mono',monospace" class="cd">            <span style="color:#262a40">var</span> <span style="color:#3c4156">results</span> <span style="color:#202020">=</span> <span style="color:#262a40">new</span> <span style="color:#93acb0">List</span><span style="color:#202020">&lt;</span><span style="color:#262a40">string</span><span style="color:#202020">&gt;</span><span style="color:#202020">(</span><span style="color:#202020">)</span><span style="color:#202020">;</span></b>
<b style="left:30.30px;top:40.87px;font:normal 6.62px/9.42px 'Liberation Mono',monospace" class="cd"></b>
<b style="left:30.30px;top:50.29px;font:normal 6.62px/9.42px 'Liberation Mono',monospace" class="cd">            <span style="color:#4a3850">foreach</span> <span style="color:#202020">(</span><span style="color:#262a40">var</span> <span style="color:#3c4156">s</span> <span style="color:#262a40">in</span> <span style="color:#3c4156">stringsToProcess</span><span style="color:#202020">)</span></b>
<b style="left:30.30px;top:59.71px;font:normal 6.62px/9.42px 'Liberation Mono',monospace" class="cd">            <span style="color:#202020">{</span></b>
<b style="left:30.30px;top:69.13px;font:normal 6.62px/9.42px 'Liberation Mono',monospace" class="cd">                <span style="color:#4a3850">switch</span> <span style="color:#202020">(</span><span style="color:#3c4156">options</span><span style="color:#202020">)</span></b>
<b style="left:30.30px;top:78.55px;font:normal 6.62px/9.42px 'Liberation Mono',monospace" class="cd">                <span style="color:#202020">{</span></b>
<b style="left:30.30px;top:87.97px;font:normal 6.62px/9.42px 'Liberation Mono',monospace" class="cd">                    <span style="color:#4a3850">case</span> <span style="color:#93acb0">StringProcessingOptionsV1</span><span style="color:#202020">.</span><span style="color:#202020">None</span><span style="color:#202020">:</span></b>
<b style="left:30.30px;top:97.39px;font:normal 6.62px/9.42px 'Liberation Mono',monospace" class="cd">                        <span style="color:#3c4156">results</span><span style="color:#202020">.</span><span style="color:#6a6054">Add</span><span style="color:#202020">(</span><span style="color:#3c4156">s</span><span style="color:#202020">)</span><span style="color:#202020">;</span></b>
<b style="left:30.30px;top:106.81px;font:normal 6.62px/9.42px 'Liberation Mono',monospace" class="cd">                        <span style="color:#4a3850">break</span><span style="color:#202020">;</span></b>
<b style="left:30.30px;top:116.23px;font:normal 6.62px/9.42px 'Liberation Mono',monospace" class="cd">                    <span style="color:#4a3850">case</span> <span style="color:#93acb0">StringProcessingOptionsV1</span><span style="color:#202020">.</span><span style="color:#202020">ConvertToUppercase</span><span style="color:#202020">:</span></b>
<b style="left:30.30px;top:125.65px;font:normal 6.62px/9.42px 'Liberation Mono',monospace" class="cd">                        <span style="color:#3c4156">results</span><span style="color:#202020">.</span><span style="color:#6a6054">Add</span><span style="color:#202020">(</span><span style="color:#3c4156">s</span><span style="color:#202020">.</span><span style="color:#6a6054">ToUpperInvariant</span><span style="color:#202020">(</span><span style="color:#202020">)</span><span style="color:#202020">)</span><span style="color:#202020">;</span></b>
<b style="left:30.30px;top:135.07px;font:normal 6.62px/9.42px 'Liberation Mono',monospace" class="cd">                        <span style="color:#4a3850">break</span><span style="color:#202020">;</span></b>
<b style="left:30.30px;top:144.49px;font:normal 6.62px/9.42px 'Liberation Mono',monospace" class="cd">                    <span style="color:#4a3850">case</span> <span style="color:#93acb0">StringProcessingOptionsV1</span><span style="color:#202020">.</span><span style="color:#202020">AddLength</span><span style="color:#202020">:</span></b>
<b style="left:30.30px;top:153.91px;font:normal 6.62px/9.42px 'Liberation Mono',monospace" class="cd">                        <span style="color:#3c4156">results</span><span style="color:#202020">.</span><span style="color:#6a6054">Add</span><span style="color:#202020">(</span><span style="color:#7e3434">$"{s.Length}-{s}"</span><span style="color:#202020">)</span><span style="color:#202020">;</span></b>
<b style="left:30.30px;top:163.33px;font:normal 6.62px/9.42px 'Liberation Mono',monospace" class="cd">                        <span style="color:#4a3850">break</span><span style="color:#202020">;</span></b>
<b style="left:30.30px;top:172.75px;font:normal 6.62px/9.42px 'Liberation Mono',monospace" class="cd">                    <span style="color:#4a3850">default</span><span style="color:#202020">:</span></b>
<b style="left:30.30px;top:182.17px;font:normal 6.62px/9.42px 'Liberation Mono',monospace" class="cd">                        <span style="color:#4a3850">throw</span> <span style="color:#262a40">new</span> <span style="color:#93acb0">NotImplementedException</span><span style="color:#202020">(</span><span style="color:#202020">)</span><span style="color:#202020">;</span></b>
<b style="left:30.30px;top:191.59px;font:normal 6.62px/9.42px 'Liberation Mono',monospace" class="cd">                <span style="color:#202020">}</span></b>
<b style="left:30.30px;top:201.01px;font:normal 6.62px/9.42px 'Liberation Mono',monospace" class="cd">            <span style="color:#202020">}</span></b>
</div>
<i style="left:28.3px;top:60.82px;width:4px;height:4px;background:#fff;border:0.6px solid #a0a0a8;box-sizing:border-box"></i>
<i style="left:29.30px;top:62.52px;width:2.00px;height:0.60px;background:#777;"></i>
<i style="left:28.3px;top:99.00px;width:4px;height:4px;background:#fff;border:0.6px solid #a0a0a8;box-sizing:border-box"></i>
<i style="left:29.30px;top:100.70px;width:2.00px;height:0.60px;background:#777;"></i>
<i style="left:28.3px;top:117.84px;width:4px;height:4px;background:#fff;border:0.6px solid #a0a0a8;box-sizing:border-box"></i>
<i style="left:29.30px;top:119.54px;width:2.00px;height:0.60px;background:#777;"></i>
<i style="left:90.10px;top:114.60px;width:227.10px;height:136.10px;background:transparent;border:1.7px solid #d2a46c;box-sizing:border-box"></i>
<svg style="position:absolute;left:381.50px;top:114.30px" width="3" height="8.4" viewBox="0 0 3 8.4"><path d="M0.3 0.4 L1.2 0.4 L1.5 0.8 L1.8 0.4 L2.7 0.4 M1.5 0.8 L1.5 7.6 M0.3 8.0 L1.2 8.0 L1.5 7.6 L1.8 8.0 L2.7 8.0" stroke="#222" stroke-width="0.6" fill="none"/></svg>
<i style="left:405.20px;top:47.60px;width:7.80px;height:221.20px;background:#f4f4f6;"></i>
<i style="left:405.20px;top:47.60px;width:0.50px;height:221.20px;background:#e4e4ea;"></i>
<svg style="position:absolute;left:406.60px;top:49.20px" width="5.5" height="5.5" viewBox="0 0 5.5 5.5"><path d="M2.75 0.3 L2.75 5.2 M0.3 2.75 L5.2 2.75" stroke="#222" stroke-width="1.0"/></svg>
<i style="left:405.70px;top:55.20px;width:7.30px;height:0.50px;background:#999;"></i>
<svg style="position:absolute;left:407.70px;top:57.40px" width="3" height="2" viewBox="0 0 3 2"><path d="M0 1.8 L3 1.8 L1.5 0 Z" fill="#888"/></svg>
<i style="left:408.50px;top:105.00px;width:3.60px;height:72.00px;background:#c6c7cc;"></i>
<svg style="position:absolute;left:407.70px;top:264.30px" width="3" height="2" viewBox="0 0 3 2"><path d="M0 0 L3 0 L1.5 1.8 Z" fill="#888"/></svg>
<i style="left:3.00px;top:268.80px;width:410.00px;height:8.10px;background:#eeeff3;"></i>
<b style="left:4.80px;top:270.89px;font:normal 4.6px/5.52px 'Liberation Sans',sans-serif;color:#444;">133 %</b>
<svg style="position:absolute;left:24.00px;top:271.20px" width="2.5" height="1.6" viewBox="0 0 2.5 1.6"><path d="M0 0 L2.5 0 L1.25 1.5 Z" fill="#555"/></svg>
<i style="left:30.00px;top:269.40px;width:0.50px;height:6.90px;background:#d6d8e0;"></i>
<svg style="position:absolute;left:37.50px;top:270.20px" width="4" height="4" viewBox="0 0 4 4"><circle cx="2" cy="2" r="1.7" fill="#5aa55a"/><path d="M1 2 L1.8 2.8 L3 1.2" stroke="#fff" stroke-width="0.5" fill="none"/></svg>
<b style="left:44.50px;top:270.77px;font:normal 4.8px/5.76px 'Liberation Sans',sans-serif;color:#222;">No issues found</b>
<svg style="position:absolute;left:111.00px;top:270.00px" width="4" height="4" viewBox="0 0 4 4"><circle cx="2" cy="2" r="1.5" fill="none" stroke="#555" stroke-width="0.6"/></svg>
<svg style="position:absolute;left:117.50px;top:271.20px" width="2.5" height="1.6" viewBox="0 0 2.5 1.6"><path d="M0 0 L2.5 0 L1.25 1.5 Z" fill="#555"/></svg>
<i style="left:124.50px;top:269.40px;width:0.50px;height:6.90px;background:#d6d8e0;"></i>
<svg style="position:absolute;left:131.00px;top:270.80px" width="2" height="2.5" viewBox="0 0 2 2.5"><path d="M2 0 L0 1.25 L2 2.5 Z" fill="#777"/></svg>
<i style="left:137.00px;top:270.20px;width:220.70px;height:3.40px;background:#c4c5cb;"></i>
<svg style="position:absolute;left:400.00px;top:270.80px" width="2" height="2.5" viewBox="0 0 2 2.5"><path d="M0 0 L2 1.25 L0 2.5 Z" fill="#777"/></svg>
<i style="left:505.0px;top:267.0px;width:14px;height:14px;border-radius:50%;background:rgba(140,140,150,0.28)"></i>
</div>
<div class="tile" style="left:533.333px;top:0.000px">
<i style="left:0.00px;top:0.00px;width:533.33px;height:27.70px;background:#d2d8ee;"></i>
<i style="left:0.00px;top:25.90px;width:533.33px;height:1.50px;background:#dce1f4;"></i>
<svg style="position:absolute;left:4.00px;top:2.00px" width="11" height="10" viewBox="0 0 11 10"><rect x="1.0" y="2.4" width="2.1" height="4.4" fill="#5b4596"/><path d="M3 4.6 L5.2 4.6" stroke="#6a48b0" stroke-width="1.2"/><path d="M5.3 4.6 L9.0 1.4 L9.0 7.8 Z" fill="#c6a8ee" stroke="#6a3cb4" stroke-width="1.5" stroke-linejoin="round"/></svg>
<b style="left:18.00px;top:4.46px;font:normal 4.9px/5.88px 'Liberation Sans',sans-serif;color:#1e1e28;">File</b>
<b style="left:33.00px;top:4.46px;font:normal 4.9px/5.88px 'Liberation Sans',sans-serif;color:#1e1e28;">Edit</b>
<b style="left:51.00px;top:4.46px;font:normal 4.9px/5.88px 'Liberation Sans',sans-serif;color:#1e1e28;">View</b>
<b style="left:70.00px;top:4.46px;font:normal 4.9px/5.88px 'Liberation Sans',sans-serif;color:#1e1e28;">Project</b>
<b style="left:93.00px;top:4.46px;font:normal 4.9px/5.88px 'Liberation Sans',sans-serif;color:#1e1e28;">Build</b>
<b style="left:113.00px;top:4.46px;font:normal 4.9px/5.88px 'Liberation Sans',sans-serif;color:#1e1e28;">Debug</b>
<b style="left:136.00px;top:4.46px;font:normal 4.9px/5.88px 'Liberation Sans',sans-serif;color:#1e1e28;">Test</b>
<b style="left:152.00px;top:4.46px;font:normal 4.9px/5.88px 'Liberation Sans',sans-serif;color:#1e1e28;">Analyze</b>
<b style="left:178.00px;top:4.46px;font:normal 4.9px/5.88px 'Liberation Sans',sans-serif;color:#1e1e28;">Tools</b>
<b style="left:197.00px;top:4.46px;font:normal 4.9px/5.88px 'Liberation Sans',sans-serif;color:#1e1e28;">Extensions</b>
<b style="left:229.00px;top:4.46px;font:normal 4.9px/5.88px 'Liberation Sans',sans-serif;color:#1e1e28;">Window</b>
<b style="left:255.00px;top:4.46px;font:normal 4.9px/5.88px 'Liberation Sans',sans-serif;color:#1e1e28;">Help</b>
<i style="left:275.00px;top:2.40px;width:91.00px;height:8.40px;background:#fdfdfe;"></i>
<b style="left:277.50px;top:4.49px;font:normal 4.85px/5.82px 'Liberation Sans',sans-serif;color:#6a6c78;">Search (Ctrl+Q)</b>
<svg style="position:absolute;left:357.00px;top:3.80px" width="6" height="6" viewBox="0 0 6 6"><circle cx="3.6" cy="2.4" r="1.6" fill="none" stroke="#444" stroke-width="0.8"/><path d="M2.5 3.5 L0.8 5.2" stroke="#444" stroke-width="0.9"/></svg>
<i style="left:371.00px;top:2.00px;width:37.00px;height:9.00px;background:#d9def2;"></i>
<b style="left:377.00px;top:4.58px;font:normal 4.7px/5.64px 'Liberation Sans',sans-serif;color:#4a4c58;">ClassLibrary</b>
<svg style="position:absolute;left:459.00px;top:2.50px" width="7" height="8.5" viewBox="0 0 7 8.5"><circle cx="3.5" cy="2.6" r="1.7" fill="none" stroke="#333" stroke-width="0.8"/><path d="M0.8 8 Q3.5 4.3 6.2 8 Z" fill="#333"/></svg>
<i style="left:483.00px;top:6.60px;width:4.50px;height:0.45px;background:#8a8e9c;"></i>
<svg style="position:absolute;left:501.50px;top:4.00px" width="5" height="5" viewBox="0 0 5 5"><path d="M1.3 0.6 L4.4 0.6 L4.4 3.7 M0.6 1.4 L3.6 1.4 L3.6 4.4 L0.6 4.4 Z" stroke="#777b88" stroke-width="0.55" fill="none"/></svg>
<svg style="position:absolute;left:521.00px;top:4.30px" width="5" height="5" viewBox="0 0 5 5"><path d="M0.5 0.5 L4.5 4.5 M4.5 0.5 L0.5 4.5" stroke="#8a8e9c" stroke-width="0.55"/></svg>
<i style="left:6.30px;top:14.50px;width:0.60px;height:10.00px;background:#b9bfd6;"></i>
<svg style="position:absolute;left:10.00px;top:16.20px" width="6" height="6" viewBox="0 0 6 6"><circle cx="3" cy="3" r="2" fill="none" stroke="#1d3a6e" stroke-width="1.2"/><path d="M1.6 3 L4.2 3" stroke="#1d3a6e" stroke-width="0.8"/></svg>
<i style="left:20.00px;top:18.80px;width:1.30px;height:1.10px;background:#444;border-radius:0"></i>
<svg style="position:absolute;left:24.50px;top:16.20px" width="6" height="6" viewBox="0 0 6 6"><circle cx="3" cy="3" r="2" fill="none" stroke="#c0c6dc" stroke-width="1.1"/></svg>
<i style="left:33.50px;top:15.50px;width:0.50px;height:8.00px;background:#c3c8dc;"></i>
<svg style="position:absolute;left:36.50px;top:15.60px" width="7" height="7" viewBox="0 0 7 7"><rect x="1" y="2.2" width="4.4" height="3.8" fill="none" stroke="#4a4e60" stroke-width="1"/><path d="M4.5 0.3 L5.2 1.7 L6.6 2.2 L5.2 2.7" fill="#4a4e60"/></svg>
<i style="left:46.80px;top:18.80px;width:1.30px;height:1.10px;background:#444;border-radius:0"></i>
<svg style="position:absolute;left:50.80px;top:15.80px" width="7" height="7" viewBox="0 0 7 7"><path d="M0.5 2 L2.5 2 L3 2.8 L6 2.8 L6 6.3 L0.5 6.3 Z" fill="#d8b8b0"/><path d="M3.5 0.5 L5.5 1.5" stroke="#b89890" stroke-width="0.8"/></svg>
<svg style="position:absolute;left:61.00px;top:16.30px" width="6" height="6" viewBox="0 0 6 6"><path d="M0.4 0.4 L4.6 0.4 L5.6 1.4 L5.6 5.6 L0.4 5.6 Z" fill="#1d3468"/><rect x="1.6" y="0.4" width="2.6" height="1.8" fill="#d9ddef"/></svg>
<svg style="position:absolute;left:69.50px;top:15.60px" width="7" height="7" viewBox="0 0 7 7"><path d="M2.4 0.3 L6.6 0.3 L6.6 4.3 L2.4 4.3 Z" fill="#4a5d8f"/><path d="M0.3 2.6 L4.5 2.6 L4.5 6.6 L0.3 6.6 Z" fill="#1d3468"/></svg>
<svg style="position:absolute;left:80.50px;top:16.20px" width="7" height="6" viewBox="0 0 7 6"><path d="M1.5 2.5 Q4 0.3 5.8 2.5 Q6.5 4.5 4 5.6" fill="none" stroke="#1d3468" stroke-width="1.1"/><path d="M0.4 1 L1.4 3.4 L3.4 2.2 Z" fill="#1d3468"/></svg>
<i style="left:92.00px;top:18.80px;width:1.30px;height:1.10px;background:#444;border-radius:0"></i>
<svg style="position:absolute;left:97.50px;top:16.20px" width="7" height="6" viewBox="0 0 7 6"><path d="M5.5 2.5 Q3 0.3 1.2 2.5 Q0.5 4.5 3 5.6" fill="none" stroke="#c3c8dc" stroke-width="1.1"/><path d="M6.6 1 L5.6 3.4 L3.6 2.2 Z" fill="#c3c8dc"/></svg>
<i style="left:106.20px;top:18.90px;width:1.80px;height:0.60px;background:#c3c8dc;"></i>
<i style="left:106.80px;top:18.30px;width:0.60px;height:1.80px;background:#c3c8dc;"></i>
<i style="left:111.00px;top:15.00px;width:0.50px;height:8.50px;background:#b9bfd6;"></i>
<i style="left:114.00px;top:15.00px;width:27.00px;height:8.50px;background:#fbfbfd;"></i>
<b style="left:116.50px;top:17.44px;font:normal 4.6px/5.52px 'Liberation Sans',sans-serif;color:#333;">Debug</b>
<svg style="position:absolute;left:137.00px;top:18.40px" width="3" height="2" viewBox="0 0 3 2"><path d="M0 0 L3 0 L1.5 1.8 Z" fill="#333"/></svg>
<i style="left:143.50px;top:15.00px;width:46.50px;height:8.50px;background:#fbfbfd;"></i>
<b style="left:146.00px;top:17.44px;font:normal 4.6px/5.52px 'Liberation Sans',sans-serif;color:#444;">Any CPU</b>
<svg style="position:absolute;left:186.00px;top:18.40px" width="3" height="2" viewBox="0 0 3 2"><path d="M0 0 L3 0 L1.5 1.8 Z" fill="#333"/></svg>
<svg style="position:absolute;left:194.50px;top:16.70px" width="4" height="5" viewBox="0 0 4 5"><path d="M0 0 L3.5 2.5 L0 5 Z" fill="#2c7a3c"/></svg>
<b style="left:201.00px;top:17.34px;font:normal 4.6px/5.52px 'Liberation Sans',sans-serif;color:#333;">Start</b>
<svg style="position:absolute;left:214.00px;top:18.60px" width="3" height="2" viewBox="0 0 3 2"><path d="M0 0 L3 0 L1.5 1.8 Z" fill="#333"/></svg>
<i style="left:220.00px;top:15.00px;width:0.50px;height:8.50px;background:#b9bfd6;"></i>
<svg style="position:absolute;left:222.50px;top:16.20px" width="7" height="6" viewBox="0 0 7 6"><path d="M0.5 5.5 L3 1 L6 1 L6 3.5 L3 5.5 Z" fill="#c9b08a"/><path d="M0.5 5.5 L3 3.5" stroke="#555" stroke-width="0.6"/></svg>
<i style="left:231.30px;top:20.60px;width:1.30px;height:1.30px;background:#333;border-radius:0"></i>
<svg style="position:absolute;left:240.00px;top:16.00px" width="7" height="6.5" viewBox="0 0 7 6.5"><path d="M0.6 0.5 L0.6 5.8 M2.2 2 L2.2 5.8 M2.2 2.3 L4.6 2.3 L4.6 5.8" stroke="#3f4660" stroke-width="0.9" fill="none"/></svg>
<svg style="position:absolute;left:250.00px;top:15.80px" width="7" height="7" viewBox="0 0 7 7"><path d="M0.8 1 L6.2 1 M0.8 2.6 L3 2.6 M4 2.6 L6.2 2.6 M2.2 1 L2.2 6.3 M4.6 2.6 L4.6 6.3" stroke="#454c64" stroke-width="0.9" fill="none"/></svg>
<i style="left:259.50px;top:15.50px;width:0.50px;height:8.00px;background:#c3c8dc;"></i>
<svg style="position:absolute;left:263.50px;top:16.20px" width="6" height="6" viewBox="0 0 6 6"><path d="M0.5 1 L5.5 1 M3 1 L3 5.6" stroke="#5b6275" stroke-width="1.0" fill="none"/></svg>
<svg style="position:absolute;left:272.00px;top:16.20px" width="7" height="6" viewBox="0 0 7 6"><path d="M0.5 1 L3 1 M1.7 1 L1.7 5 M3.5 3 L6.5 5.5 M4 5.5 L6.5 5.5" stroke="#6d7389" stroke-width="0.9" fill="none"/></svg>
<i style="left:281.50px;top:15.50px;width:0.50px;height:8.00px;background:#c3c8dc;"></i>
<svg style="position:absolute;left:285.00px;top:16.00px" width="5" height="6.5" viewBox="0 0 5 6.5"><path d="M0.5 0.3 L4.5 0.3 L4.5 6.2 L2.5 4.6 L0.5 6.2 Z" fill="#1f2640"/></svg>
<svg style="position:absolute;left:294.00px;top:16.00px" width="6" height="6.5" viewBox="0 0 6 6.5"><path d="M0.5 0.5 L4 0.5 L4 5.5 L2.2 4.2 L0.5 5.5 Z" fill="none" stroke="#c3c8dc" stroke-width="0.8"/></svg>
<svg style="position:absolute;left:303.00px;top:16.00px" width="6" height="6.5" viewBox="0 0 6 6.5"><path d="M0.5 0.5 L4 0.5 L4 5.5 L2.2 4.2 L0.5 5.5 Z" fill="none" stroke="#c3c8dc" stroke-width="0.8"/></svg>
<svg style="position:absolute;left:312.00px;top:16.00px" width="6" height="6.5" viewBox="0 0 6 6.5"><path d="M0.5 0.5 L4 0.5 L4 5.5 L2.2 4.2 L0.5 5.5 Z" fill="none" stroke="#c3c8dc" stroke-width="0.8"/></svg>
<i style="left:321.00px;top:20.60px;width:1.30px;height:1.30px;background:#333;border-radius:0"></i>
<svg style="position:absolute;left:478.50px;top:16.30px" width="7" height="6.5" viewBox="0 0 7 6.5"><path d="M0.5 6 L5.5 6 M1.2 4.8 Q2 1.6 4.8 1.8 M3.8 0.6 L5.2 1.8 L3.8 3" stroke="#333" stroke-width="0.7" fill="none"/></svg>
<b style="left:486.00px;top:17.58px;font:normal 4.7px/5.64px 'Liberation Sans',sans-serif;color:#333;">Live Share</b>
<svg style="position:absolute;left:519.00px;top:15.50px" width="6" height="8" viewBox="0 0 6 8"><path d="M1 1 L5 1 M1 3 L4 3 M1 1 L1 7 M3 5 L5 7" stroke="#444" stroke-width="0.7" fill="none"/></svg>
<i style="left:0.00px;top:27.70px;width:533.33px;height:249.20px;background:#5d6b99;"></i>
<i style="left:3.00px;top:30.60px;width:103.50px;height:7.70px;background:#f5e29c;"></i>
<b style="left:4.40px;top:32.29px;font:normal 4.85px/5.82px 'Liberation Sans',sans-serif;color:#2e2a1c;">AdvancedStringProcessorV1Should.cs*</b>
<svg style="position:absolute;left:93.50px;top:33.00px" width="3" height="3" viewBox="0 0 3 3"><path d="M0.5 1.5 L2.5 1.5 M1.5 0.5 L1.5 2.5" stroke="#6b6248" stroke-width="0.6"/></svg>
<svg style="position:absolute;left:100.00px;top:32.60px" width="3.6" height="3.6" viewBox="0 0 3.6 3.6"><path d="M0.4 0.4 L3.2 3.2 M3.2 0.4 L0.4 3.2" stroke="#7a5a30" stroke-width="0.7"/></svg>
<i style="left:106.50px;top:30.60px;width:87.50px;height:7.70px;background:#5e74b0;"></i>
<b style="left:107.90px;top:32.29px;font:normal 4.85px/5.82px 'Liberation Sans',sans-serif;color:#e8ecf8;">AdvancedStringProcessorV1.cs</b>
<svg style="position:absolute;left:408.80px;top:33.30px" width="3" height="2" viewBox="0 0 3 2"><path d="M0 0 L3 0 L1.5 1.8 Z" fill="#aab2d0"/></svg>
<i style="left:3.00px;top:38.30px;width:410.00px;height:9.10px;background:#fdfdfe;"></i>
<i style="left:3.00px;top:46.80px;width:410.00px;height:0.60px;background:#c9ccd6;"></i>
<i style="left:138.70px;top:38.30px;width:0.60px;height:9.10px;background:#c9ccd6;"></i>
<i style="left:276.70px;top:38.30px;width:0.60px;height:9.10px;background:#c9ccd6;"></i>
<i style="left:4.60px;top:40.00px;width:5.60px;height:5.00px;background:#e8ece8;border:0.8px solid #35503f;box-sizing:border-box"></i>
<b style="left:12.00px;top:41.18px;font:normal 4.7px/5.64px 'Liberation Sans',sans-serif;color:#222;width:120px;overflow:hidden">ClassLibrary.Tests</b>
<svg style="position:absolute;left:134.00px;top:42.30px" width="3" height="2" viewBox="0 0 3 2"><path d="M0 0 L3 0 L1.5 1.8 Z" fill="#333"/></svg>
<svg style="position:absolute;left:141.00px;top:40.30px" width="4.5" height="4.5" viewBox="0 0 4.5 4.5"><path d="M0.5 3.5 L2 2 L0.5 0.5" stroke="#8a6a30" stroke-width="0.6" fill="none"/><rect x="2.5" y="2" width="2" height="2" fill="#998"/></svg>
<b style="left:148.30px;top:41.12px;font:normal 4.8px/5.76px 'Liberation Sans',sans-serif;color:#333;width:122px;overflow:hidden">ClassLibrary.Tests.AdvancedStringProcessorV1Should</b>
<svg style="position:absolute;left:272.00px;top:42.30px" width="3" height="2" viewBox="0 0 3 2"><path d="M0 0 L3 0 L1.5 1.8 Z" fill="#333"/></svg>
<svg style="position:absolute;left:279.00px;top:40.50px" width="4" height="4" viewBox="0 0 4 4"><circle cx="2" cy="2" r="1.4" fill="none" stroke="#555" stroke-width="0.6"/></svg>
<b style="left:285.70px;top:41.12px;font:normal 4.8px/5.76px 'Liberation Sans',sans-serif;color:#333;width:119px;overflow:hidden">ProcessConvertToUppercase()</b>
<svg style="position:absolute;left:409.00px;top:42.30px" width="3" height="2" viewBox="0 0 3 2"><path d="M0 0 L3 0 L1.5 1.8 Z" fill="#333"/></svg>
<i style="left:3.00px;top:47.60px;width:410.00px;height:221.20px;background:#ffffff;"></i>
<i style="left:3.00px;top:47.60px;width:9.00px;height:221.20px;background:#f0f0f2;"></i>
<i style="left:9.00px;top:47.60px;width:3.00px;height:221.20px;background:#f7f7f9;"></i>
<i style="left:30.00px;top:47.60px;width:0.60px;height:221.20px;background:#b0b0b8;"></i>
<i style="left:416.60px;top:29.20px;width:114.20px;height:9.20px;background:#44548e;"></i>
<b style="left:418.50px;top:32.49px;font:normal 4.85px/5.82px 'Liberation Sans',sans-serif;color:#f0f2fa;">Solution Explorer</b>
<svg style="position:absolute;left:512.50px;top:32.20px" width="3" height="2.5" viewBox="0 0 3 2.5"><path d="M0 0 L3 0 L1.5 1.8 Z" fill="#dde"/></svg>
<svg style="position:absolute;left:518.50px;top:31.20px" width="4" height="4.5" viewBox="0 0 4 4.5"><path d="M2 0.3 L2 4.2 M0.3 2.6 L3.7 2.6 M0.8 0.5 L3.2 0.5" stroke="#dde" stroke-width="0.6"/></svg>
<svg style="position:absolute;left:524.50px;top:31.50px" width="4" height="4" viewBox="0 0 4 4"><path d="M0.4 0.4 L3.6 3.6 M3.6 0.4 L0.4 3.6" stroke="#dde" stroke-width="0.6"/></svg>
<i style="left:416.60px;top:38.50px;width:114.20px;height:11.00px;background:#cdd5ee;"></i>
<div style="left:0;top:1px">
<i style="left:421.50px;top:41.60px;width:4.40px;height:4.40px;background:#c7cde2;border-radius:50%"></i>
<i style="left:430.00px;top:41.60px;width:4.40px;height:4.40px;background:#c7cde2;border-radius:50%"></i>
<svg style="position:absolute;left:438.50px;top:41.00px" width="6" height="5" viewBox="0 0 6 5"><path d="M0.5 2.6 L3 0.3 L5.5 2.6 M1.2 2.4 L1.2 4.8 L4.8 4.8 L4.8 2.4" stroke="#333" stroke-width="0.8" fill="none"/></svg>
<i style="left:447.50px;top:41.60px;width:4.40px;height:4.40px;background:#8a8fa3;"></i>
<svg style="position:absolute;left:456.50px;top:43.40px" width="2.5" height="1.6" viewBox="0 0 2.5 1.6"><path d="M0 0 L2.5 0 L1.25 1.5 Z" fill="#444"/></svg>
<i style="left:461.00px;top:40.20px;width:0.50px;height:7.60px;background:#aeb5cc;"></i>
<svg style="position:absolute;left:464.50px;top:41.00px" width="6" height="5.5" viewBox="0 0 6 5.5"><path d="M1 1 Q4.5 0.5 4.8 4" stroke="#555" stroke-width="0.8" fill="none"/><circle cx="2" cy="4" r="1" fill="#555"/></svg>
<svg style="position:absolute;left:473.00px;top:43.40px" width="2.5" height="1.6" viewBox="0 0 2.5 1.6"><path d="M0 0 L2.5 0 L1.25 1.5 Z" fill="#444"/></svg>
<svg style="position:absolute;left:479.50px;top:41.00px" width="5" height="5" viewBox="0 0 5 5"><path d="M0.5 0.5 L4 4 M2 4.3 L4.3 4.3 L4.3 2" stroke="#333" stroke-width="0.8" fill="none"/></svg>
<svg style="position:absolute;left:488.30px;top:40.90px" width="5" height="5.5" viewBox="0 0 5 5.5"><path d="M4 1.4 A2 2 0 1 0 4.3 3.6" stroke="#1e4a8a" stroke-width="1.0" fill="none"/></svg>
<svg style="position:absolute;left:497.00px;top:41.20px" width="5" height="5" viewBox="0 0 5 5"><path d="M0.8 4.2 L4.2 0.8" stroke="#222" stroke-width="1.2"/></svg>
<svg style="position:absolute;left:505.50px;top:40.90px" width="5.5" height="5.5" viewBox="0 0 5.5 5.5"><circle cx="2.7" cy="2.9" r="2" fill="none" stroke="#333" stroke-width="0.8"/><rect x="0.5" y="0.3" width="2" height="2" fill="#333"/></svg>
</div>
<i style="left:416.60px;top:49.50px;width:114.20px;height:9.50px;background:#fcfcfe;"></i>
<i style="left:416.60px;top:58.60px;width:114.20px;height:0.50px;background:#d8dbe6;"></i>
<b style="left:418.50px;top:52.43px;font:normal 4.95px/5.94px 'Liberation Sans',sans-serif;color:#7d7f89;">Search Solution Explorer (Ctrl+;)</b>
<svg style="position:absolute;left:518.50px;top:51.60px" width="5" height="5" viewBox="0 0 5 5"><circle cx="3" cy="2" r="1.4" fill="none" stroke="#444" stroke-width="0.7"/><path d="M2 3 L0.5 4.6" stroke="#444" stroke-width="0.8"/></svg>
<svg style="position:absolute;left:525.50px;top:53.60px" width="2.5" height="1.6" viewBox="0 0 2.5 1.6"><path d="M0 0 L2.5 0 L1.25 1.5 Z" fill="#555"/></svg>
<i style="left:416.60px;top:59.00px;width:114.20px;height:217.90px;background:#f6f7fb;"></i>
<svg style="position:absolute;left:424.00px;top:62.00px" width="5.5" height="5" viewBox="0 0 5.5 5"><rect x="0.4" y="0.4" width="4.6" height="3.6" fill="none" stroke="#444" stroke-width="0.6"/><rect x="0.4" y="0.4" width="4.6" height="1" fill="#444"/><path d="M1.5 4.6 L4 4.6" stroke="#666" stroke-width="0.5"/></svg>
<b style="left:430.80px;top:62.33px;font:normal 4.95px/5.94px 'Liberation Sans',sans-serif;color:#333;">Solution 'ClassLibrary' (2 of 2 projects)</b>
<svg style="position:absolute;left:421.80px;top:70.59px" width="3" height="3" viewBox="0 0 3 3"><path d="M2.6 0.3 L2.6 2.6 L0.3 2.6 Z" fill="#333"/></svg>
<svg style="position:absolute;left:429.00px;top:69.49px" width="6.5" height="5" viewBox="0 0 6.5 5"><rect x="0.4" y="0.4" width="5.6" height="4.2" fill="#e9ecef" stroke="#4a5a4e" stroke-width="0.7"/><path d="M1.5 2 L3 2 M1.5 3.2 L3 3.2" stroke="#444" stroke-width="0.6"/><rect x="3.8" y="1.4" width="1.5" height="2.4" fill="#3d6b4d"/></svg>
<b style="left:437.60px;top:70.09px;font:bold 4.5px/5.4px 'Liberation Sans',sans-serif;color:#111;">ClassLibrary</b>
<svg style="position:absolute;left:429.10px;top:77.88px" width="3" height="3.2" viewBox="0 0 3 3.2"><path d="M0.5 0.2 L2.7 1.6 L0.5 3.0 Z" fill="#333"/></svg>
<svg style="position:absolute;left:436.30px;top:76.98px" width="5.5" height="5.5" viewBox="0 0 5.5 5.5"><path d="M0.6 4.8 L3 2.4" stroke="#222" stroke-width="1.1"/><circle cx="3.6" cy="1.8" r="1.3" fill="#222"/></svg>
<b style="left:444.90px;top:77.31px;font:normal 4.95px/5.94px 'Liberation Sans',sans-serif;color:#222;">Properties</b>
<svg style="position:absolute;left:429.10px;top:85.37px" width="3" height="3.2" viewBox="0 0 3 3.2"><path d="M0.5 0.2 L2.7 1.6 L0.5 3.0 Z" fill="#333"/></svg>
<svg style="position:absolute;left:436.30px;top:84.47px" width="6" height="5" viewBox="0 0 6 5"><rect x="0.3" y="1.8" width="2" height="1.6" fill="#222"/><rect x="3.4" y="1.8" width="2" height="1.6" fill="#222"/><path d="M2 2.6 L3.6 2.6" stroke="#222" stroke-width="0.5"/></svg>
<b style="left:444.90px;top:84.80px;font:normal 4.95px/5.94px 'Liberation Sans',sans-serif;color:#222;">References</b>
<svg style="position:absolute;left:429.10px;top:93.06px" width="3" height="3" viewBox="0 0 3 3"><path d="M2.6 0.3 L2.6 2.6 L0.3 2.6 Z" fill="#333"/></svg>
<svg style="position:absolute;left:436.30px;top:91.96px" width="6" height="5" viewBox="0 0 6 5"><path d="M0.3 0.8 L2.4 0.8 L3 1.5 L5.6 1.5 L5.6 4.5 L0.3 4.5 Z" fill="#e6d6b0"/></svg>
<b style="left:444.90px;top:92.29px;font:normal 4.95px/5.94px 'Liberation Sans',sans-serif;color:#222;">Enums</b>
<svg style="position:absolute;left:437.20px;top:100.35px" width="3" height="3.2" viewBox="0 0 3 3.2"><path d="M0.5 0.2 L2.7 1.6 L0.5 3.0 Z" fill="#333"/></svg>
<svg style="position:absolute;left:444.40px;top:99.45px" width="6" height="5" viewBox="0 0 6 5"><text x="0" y="4" font-family="Liberation Sans" font-size="4" font-weight="bold" fill="#6a8a78">C#</text></svg>
<b style="left:453.00px;top:99.78px;font:normal 4.95px/5.94px 'Liberation Sans',sans-serif;color:#222;">AdvancedStringProcessorV1.cs</b>
<svg style="position:absolute;left:429.10px;top:107.84px" width="3" height="3.2" viewBox="0 0 3 3.2"><path d="M0.5 0.2 L2.7 1.6 L0.5 3.0 Z" fill="#333"/></svg>
<svg style="position:absolute;left:436.30px;top:106.94px" width="6" height="5" viewBox="0 0 6 5"><path d="M0.3 0.8 L2.4 0.8 L3 1.5 L5.6 1.5 L5.6 4.5 L0.3 4.5 Z" fill="#dcc18c"/></svg>
<b style="left:444.90px;top:107.27px;font:normal 4.95px/5.94px 'Liberation Sans',sans-serif;color:#222;">StructPerformance</b>
<svg style="position:absolute;left:429.10px;top:115.33px" width="3" height="3.2" viewBox="0 0 3 3.2"><path d="M0.5 0.2 L2.7 1.6 L0.5 3.0 Z" fill="#333"/></svg>
<svg style="position:absolute;left:436.30px;top:114.43px" width="6" height="5" viewBox="0 0 6 5"><path d="M0.3 0.8 L2.4 0.8 L3 1.5 L5.6 1.5 L5.6 4.5 L0.3 4.5 Z" fill="#dcc18c"/></svg>
<b style="left:444.90px;top:114.76px;font:normal 4.95px/5.94px 'Liberation Sans',sans-serif;color:#222;">Tasks</b>
<svg style="position:absolute;left:421.80px;top:123.02px" width="3" height="3" viewBox="0 0 3 3"><path d="M2.6 0.3 L2.6 2.6 L0.3 2.6 Z" fill="#333"/></svg>
<svg style="position:absolute;left:429.00px;top:121.92px" width="6.5" height="5" viewBox="0 0 6.5 5"><rect x="0.4" y="0.4" width="5.6" height="4.2" fill="#e9ecef" stroke="#4a5a4e" stroke-width="0.7"/><path d="M1.5 2 L3 2 M1.5 3.2 L3 3.2" stroke="#444" stroke-width="0.6"/><rect x="3.8" y="1.4" width="1.5" height="2.4" fill="#3d6b4d"/></svg>
<b style="left:437.60px;top:122.25px;font:normal 4.95px/5.94px 'Liberation Sans',sans-serif;color:#222;">ClassLibrary.Tests</b>
<svg style="position:absolute;left:429.10px;top:130.31px" width="3" height="3.2" viewBox="0 0 3 3.2"><path d="M0.5 0.2 L2.7 1.6 L0.5 3.0 Z" fill="#333"/></svg>
<svg style="position:absolute;left:436.30px;top:129.41px" width="5.5" height="5.5" viewBox="0 0 5.5 5.5"><path d="M0.6 4.8 L3 2.4" stroke="#222" stroke-width="1.1"/><circle cx="3.6" cy="1.8" r="1.3" fill="#222"/></svg>
<b style="left:444.90px;top:129.74px;font:normal 4.95px/5.94px 'Liberation Sans',sans-serif;color:#222;">Properties</b>
<svg style="position:absolute;left:429.10px;top:137.80px" width="3" height="3.2" viewBox="0 0 3 3.2"><path d="M0.5 0.2 L2.7 1.6 L0.5 3.0 Z" fill="#333"/></svg>
<svg style="position:absolute;left:436.30px;top:136.90px" width="6" height="5" viewBox="0 0 6 5"><rect x="0.3" y="1.8" width="2" height="1.6" fill="#222"/><rect x="3.4" y="1.8" width="2" height="1.6" fill="#222"/><path d="M2 2.6 L3.6 2.6" stroke="#222" stroke-width="0.5"/></svg>
<b style="left:444.90px;top:137.23px;font:normal 4.95px/5.94px 'Liberation Sans',sans-serif;color:#222;">References</b>
<i style="left:417.10px;top:143.29px;width:112.70px;height:7.30px;background:#dfe1ea;"></i>
<svg style="position:absolute;left:429.10px;top:145.29px" width="3" height="3.2" viewBox="0 0 3 3.2"><path d="M0.5 0.2 L2.7 1.6 L0.5 3.0 Z" fill="#333"/></svg>
<svg style="position:absolute;left:436.30px;top:144.39px" width="6" height="5" viewBox="0 0 6 5"><text x="0" y="4" font-family="Liberation Sans" font-size="4" font-weight="bold" fill="#6a8a78">C#</text></svg>
<b style="left:444.90px;top:144.72px;font:normal 4.95px/5.94px 'Liberation Sans',sans-serif;color:#222;">AdvancedStringProcessorV1Should.cs</b>
<svg style="position:absolute;left:436.30px;top:151.88px" width="6" height="5.5" viewBox="0 0 6 5.5"><rect x="0.6" y="0.6" width="4.4" height="4.4" rx="1.2" fill="none" stroke="#333" stroke-width="0.7"/><path d="M2.8 0 L2.8 1.6" stroke="#333" stroke-width="0.7"/></svg>
<b style="left:444.90px;top:152.21px;font:normal 4.95px/5.94px 'Liberation Sans',sans-serif;color:#222;">App.config</b>
<svg style="position:absolute;left:436.30px;top:159.37px" width="6" height="5" viewBox="0 0 6 5"><text x="0" y="4" font-family="Liberation Sans" font-size="4" font-weight="bold" fill="#6a8a78">C#</text></svg>
<b style="left:444.90px;top:159.70px;font:normal 4.95px/5.94px 'Liberation Sans',sans-serif;color:#222;">ObjectReferenceEqualityExample.cs</b>
<svg style="position:absolute;left:436.30px;top:166.86px" width="6" height="5.5" viewBox="0 0 6 5.5"><rect x="0.6" y="0.6" width="4.4" height="4.4" rx="1.2" fill="none" stroke="#333" stroke-width="0.7"/><path d="M2.8 0 L2.8 1.6" stroke="#333" stroke-width="0.7"/></svg>
<b style="left:444.90px;top:167.19px;font:normal 4.95px/5.94px 'Liberation Sans',sans-serif;color:#222;">packages.config</b>
<svg style="position:absolute;left:429.10px;top:175.25px" width="3" height="3.2" viewBox="0 0 3 3.2"><path d="M0.5 0.2 L2.7 1.6 L0.5 3.0 Z" fill="#333"/></svg>
<svg style="position:absolute;left:436.30px;top:174.35px" width="6" height="5" viewBox="0 0 6 5"><text x="0" y="4" font-family="Liberation Sans" font-size="4" font-weight="bold" fill="#6a8a78">C#</text></svg>
<b style="left:444.90px;top:174.68px;font:normal 4.95px/5.94px 'Liberation Sans',sans-serif;color:#222;">StringProcessorShould.cs</b>
<svg style="position:absolute;left:436.30px;top:181.84px" width="6" height="5" viewBox="0 0 6 5"><text x="0" y="4" font-family="Liberation Sans" font-size="4" font-weight="bold" fill="#6a8a78">C#</text></svg>
<b style="left:444.90px;top:182.17px;font:normal 4.95px/5.94px 'Liberation Sans',sans-serif;color:#222;">StructEqualityPerformance.cs</b>
<i style="left:0.00px;top:276.90px;width:533.33px;height:12.80px;background:#5d6b99;"></i>
<i style="left:0.00px;top:276.90px;width:533.33px;height:0.90px;background:#4f5a88;"></i>
<b style="left:2.60px;top:281.38px;font:normal 4.7px/5.64px 'Liberation Sans',sans-serif;color:#eef0f8;">Test Explorer</b>
<b style="left:34.50px;top:281.38px;font:normal 4.7px/5.64px 'Liberation Sans',sans-serif;color:#eef0f8;">Error List</b>
<b style="left:58.40px;top:281.38px;font:normal 4.7px/5.64px 'Liberation Sans',sans-serif;color:#eef0f8;">Output</b>
<i style="left:0.00px;top:289.70px;width:533.33px;height:9.97px;background:#42508c;"></i>
<i style="left:0.00px;top:298.30px;width:533.33px;height:1.37px;background:#384276;"></i>
<svg style="position:absolute;left:2.50px;top:291.20px" width="6" height="6" viewBox="0 0 6 6"><path d="M1 5.5 L1 1 L5 1 L5 5 M0.2 4.3 L1 5.5 L1.8 4.3" stroke="#eef" stroke-width="0.7" fill="none"/></svg>
<b style="left:11.50px;top:292.55px;font:normal 4.75px/5.7px 'Liberation Sans',sans-serif;color:#f2f3f8;">Ready</b>
<b style="left:202.00px;top:292.60px;font:normal 4.5px/5.4px 'Liberation Sans',sans-serif;color:#f2f3f8;">Ln 41</b>
<b style="left:241.00px;top:292.60px;font:normal 4.5px/5.4px 'Liberation Sans',sans-serif;color:#f2f3f8;">Col 43</b>
<b style="left:280.00px;top:292.60px;font:normal 4.5px/5.4px 'Liberation Sans',sans-serif;color:#f2f3f8;">Ch 43</b>
<b style="left:336.00px;top:292.60px;font:normal 4.5px/5.4px 'Liberation Sans',sans-serif;color:#f2f3f8;">INS</b>
<svg style="position:absolute;left:449.00px;top:291.60px" width="4" height="5" viewBox="0 0 4 5"><path d="M2 0.3 L3.8 2.3 L2.6 2.3 L2.6 4.8 L1.4 4.8 L1.4 2.3 L0.2 2.3 Z" fill="#f2f3f8"/></svg>
<b style="left:455.50px;top:292.40px;font:normal 5.0px/6.0px 'Liberation Sans',sans-serif;color:#f2f3f8;">Add to Source Control</b>
<svg style="position:absolute;left:507.00px;top:293.50px" width="3" height="2" viewBox="0 0 3 2"><path d="M0 0 L3 0 L1.5 1.8 Z" fill="#f2f3f8"/></svg>
<svg style="position:absolute;left:519.00px;top:291.00px" width="5" height="6" viewBox="0 0 5 6"><path d="M2.5 0.3 Q4.3 0.8 4.3 3 L4.8 4.5 L0.2 4.5 L0.7 3 Q0.7 0.8 2.5 0.3 Z M1.8 5 L3.2 5 L2.5 5.8 Z" fill="#f2f3f8"/></svg>
<div style="left:3.0px;top:47.6px;width:402.20px;height:221.20px;overflow:hidden">
<i style="left:21.00px;top:-0.71px;width:1.9px;height:9.42px;background:#e8e87a"></i>
<b style="left:30.30px;top:0.89px;font:normal 6.62px/9.42px 'Liberation Mono',monospace" class="cd">            <span style="color:#93acb0">Assert</span><span style="color:#202020">.</span><span style="color:#6a6054">Equal</span><span style="color:#202020">(</span><span style="color:#7e3434">"Howdy"</span><span style="color:#202020">,</span> <span style="color:#3c4156">results</span><span style="color:#202020">[</span><span style="color:#202020">2</span><span style="color:#202020">]</span><span style="color:#202020">)</span><span style="color:#202020">;</span></b>
<i style="left:21.00px;top:8.71px;width:1.9px;height:9.42px;background:#e8e87a"></i>
<b style="left:30.30px;top:10.31px;font:normal 6.62px/9.42px 'Liberation Mono',monospace" class="cd">        <span style="color:#202020">}</span></b>
<b style="left:30.30px;top:19.73px;font:normal 6.62px/9.42px 'Liberation Mono',monospace" class="cd"></b>
<i style="left:21.00px;top:27.55px;width:1.9px;height:9.42px;background:#e8e87a"></i>
<b style="left:30.30px;top:29.15px;font:normal 6.62px/9.42px 'Liberation Mono',monospace" class="cd">        <span style="color:#202020">[</span><span style="color:#93acb0">Fact</span><span style="color:#202020">]</span></b>
<b style="left:62.06px;top:39.68px;font:normal 4.6px/6px 'Liberation Sans',sans-serif;letter-spacing:0.5px;color:#a2a2aa">0 references</b>
<i style="left:21.00px;top:36.97px;width:1.9px;height:16.62px;background:#e8e87a"></i>
<b style="left:30.30px;top:45.77px;font:normal 6.62px/9.42px 'Liberation Mono',monospace" class="cd">        <span style="color:#262a40">public</span> <span style="color:#262a40">void</span> <span style="color:#6a6054">ProcessAddLength</span><span style="color:#202020">(</span><span style="color:#202020">)</span></b>
<i style="left:21.00px;top:53.59px;width:1.9px;height:9.42px;background:#e8e87a"></i>
<b style="left:30.30px;top:55.19px;font:normal 6.62px/9.42px 'Liberation Mono',monospace" class="cd">        <span style="color:#202020">{</span></b>
<i style="left:21.00px;top:63.01px;width:1.9px;height:9.42px;background:#e8e87a"></i>
<b style="left:30.30px;top:64.61px;font:normal 6.62px/9.42px 'Liberation Mono',monospace" class="cd">            <span style="color:#262a40">var</span> <span style="color:#3c4156">results</span> <span style="color:#202020">=</span> <span style="color:#3c4156">sut</span><span style="color:#202020">.</span><span style="color:#6a6054">Process</span><span style="color:#202020">(</span><span style="color:#3c4156">inputStrings</span><span style="color:#202020">,</span> <span style="color:#93acb0">StringProcessingOptionsV1</span><span style="color:#202020">.</span><span style="color:#202020">AddLength</span><span style="color:#202020">)</span><span style="color:#202020">;</span></b>
<b style="left:30.30px;top:74.03px;font:normal 6.62px/9.42px 'Liberation Mono',monospace" class="cd"></b>
<i style="left:21.00px;top:81.85px;width:1.9px;height:9.42px;background:#e8e87a"></i>
<b style="left:30.30px;top:83.45px;font:normal 6.62px/9.42px 'Liberation Mono',monospace" class="cd">            <span style="color:#93acb0">Assert</span><span style="color:#202020">.</span><span style="color:#6a6054">Equal</span><span style="color:#202020">(</span><span style="color:#202020">3</span><span style="color:#202020">,</span> <span style="color:#3c4156">results</span><span style="color:#202020">.</span><span style="color:#202020">Count</span><span style="color:#202020">)</span><span style="color:#202020">;</span></b>
<b style="left:30.30px;top:92.87px;font:normal 6.62px/9.42px 'Liberation Mono',monospace" class="cd"></b>
<i style="left:21.00px;top:100.69px;width:1.9px;height:9.42px;background:#e8e87a"></i>
<b style="left:30.30px;top:102.29px;font:normal 6.62px/9.42px 'Liberation Mono',monospace" class="cd">            <span style="color:#93acb0">Assert</span><span style="color:#202020">.</span><span style="color:#6a6054">Equal</span><span style="color:#202020">(</span><span style="color:#7e3434">"5-Hello"</span><span style="color:#202020">,</span> <span style="color:#3c4156">results</span><span style="color:#202020">[</span><span style="color:#202020">0</span><span style="color:#202020">]</span><span style="color:#202020">)</span><span style="color:#202020">;</span></b>
<i style="left:21.00px;top:110.11px;width:1.9px;height:9.42px;background:#e8e87a"></i>
<b style="left:30.30px;top:111.71px;font:normal 6.62px/9.42px 'Liberation Mono',monospace" class="cd">            <span style="color:#93acb0">Assert</span><span style="color:#202020">.</span><span style="color:#6a6054">Equal</span><span style="color:#202020">(</span><span style="color:#7e3434">"7-Welcome"</span><span style="color:#202020">,</span> <span style="color:#3c4156">results</span><span style="color:#202020">[</span><span style="color:#202020">1</span><span style="color:#202020">]</span><span style="color:#202020">)</span><span style="color:#202020">;</span></b>
<i style="left:21.00px;top:119.53px;width:1.9px;height:9.42px;background:#e8e87a"></i>
<b style="left:30.30px;top:121.13px;font:normal 6.62px/9.42px 'Liberation Mono',monospace" class="cd">            <span style="color:#93acb0">Assert</span><span style="color:#202020">.</span><span style="color:#6a6054">Equal</span><span style="color:#202020">(</span><span style="color:#7e3434">"5-Howdy"</span><span style="color:#202020">,</span> <span style="color:#3c4156">results</span><span style="color:#202020">[</span><span style="color:#202020">2</span><span style="color:#202020">]</span><span style="color:#202020">)</span><span style="color:#202020">;</span></b>
<i style="left:21.00px;top:128.95px;width:1.9px;height:9.42px;background:#e8e87a"></i>
<b style="left:30.30px;top:130.55px;font:normal 6.62px/9.42px 'Liberation Mono',monospace" class="cd">        <span style="color:#202020">}</span></b>
<b style="left:30.30px;top:139.97px;font:normal 6.62px/9.42px 'Liberation Mono',monospace" class="cd"></b>
<i style="left:21.00px;top:147.79px;width:1.9px;height:9.42px;background:#e8e87a"></i>
<b style="left:30.30px;top:149.39px;font:normal 6.62px/9.42px 'Liberation Mono',monospace" class="cd">        <span style="color:#202020">[</span><span style="color:#93acb0">Fact</span><span style="color:#202020">]</span></b>
<b style="left:62.06px;top:159.92px;font:normal 4.6px/6px 'Liberation Sans',sans-serif;letter-spacing:0.5px;color:#a2a2aa">0 references</b>
<i style="left:21.00px;top:157.21px;width:1.9px;height:16.62px;background:#e8e87a"></i>
<i style="left:28.50px;top:164.41px;width:372.50px;height:9.42px;border:0.6px solid #e2e2e6;box-sizing:border-box"></i>
<b style="left:30.30px;top:166.01px;font:normal 6.62px/9.42px 'Liberation Mono',monospace" class="cd">        <span style="color:#262a40">public</span> <span style="color:#262a40">void</span> <span style="color:#6a6054">ProcessConvertToUppercase</span><span style="color:#202020">(</span><span style="color:#202020">)</span></b>
<i style="left:21.00px;top:173.83px;width:1.9px;height:9.42px;background:#e8e87a"></i>
<b style="left:30.30px;top:175.43px;font:normal 6.62px/9.42px 'Liberation Mono',monospace" class="cd">        <span style="color:#202020">{</span></b>
<i style="left:21.00px;top:183.25px;width:1.9px;height:9.42px;background:#e8e87a"></i>
<b style="left:30.30px;top:184.85px;font:normal 6.62px/9.42px 'Liberation Mono',monospace" class="cd">            <span style="color:#262a40">var</span> <span style="color:#3c4156">results</span> <span style="color:#202020">=</span> <span style="color:#3c4156">sut</span><span style="color:#202020">.</span><span style="color:#6a6054">Process</span><span style="color:#202020">(</span><span style="color:#3c4156">inputStrings</span><span style="color:#202020">,</span></b>
<i style="left:21.00px;top:192.67px;width:1.9px;height:9.42px;background:#e8e87a"></i>
<b style="left:30.30px;top:194.27px;font:normal 6.62px/9.42px 'Liberation Mono',monospace" class="cd">                                      <span style="color:#93acb0">StringProcessingOptionsV1</span><span style="color:#202020">.</span><span style="color:#202020">ConvertToUppercase</span><span style="color:#202020">)</span><span style="color:#202020">;</span></b>
<b style="left:30.30px;top:203.69px;font:normal 6.62px/9.42px 'Liberation Mono',monospace" class="cd"></b>
<i style="left:21.00px;top:211.51px;width:1.9px;height:9.42px;background:#e8e87a"></i>
<b style="left:30.30px;top:213.11px;font:normal 6.62px/9.42px 'Liberation Mono',monospace" class="cd">            <span style="color:#93acb0">Assert</span><span style="color:#202020">.</span><span style="color:#6a6054">Equal</span><span style="color:#202020">(</span><span style="color:#202020">4</span><span style="color:#202020">,</span> <span style="color:#3c4156">results</span><span style="color:#202020">.</span><span style="color:#202020">Count</span><span style="color:#202020">)</span><span style="color:#202020">;</span></b>
<b style="left:30.30px;top:222.53px;font:normal 6.62px/9.42px 'Liberation Mono',monospace" class="cd"></b>
</div>
<i style="left:28.3px;top:94.48px;width:4px;height:4px;background:#fff;border:0.6px solid #a0a0a8;box-sizing:border-box"></i>
<i style="left:29.30px;top:96.18px;width:2.00px;height:0.60px;background:#777;"></i>
<i style="left:28.3px;top:214.72px;width:4px;height:4px;background:#fff;border:0.6px solid #a0a0a8;box-sizing:border-box"></i>
<i style="left:29.30px;top:216.42px;width:2.00px;height:0.60px;background:#777;"></i>
<i style="left:220.00px;top:212.40px;width:0.60px;height:8.00px;background:#111;"></i>
<svg style="position:absolute;left:340.50px;top:142.80px" width="3" height="8.4" viewBox="0 0 3 8.4"><path d="M0.3 0.4 L1.2 0.4 L1.5 0.8 L1.8 0.4 L2.7 0.4 M1.5 0.8 L1.5 7.6 M0.3 8.0 L1.2 8.0 L1.5 7.6 L1.8 8.0 L2.7 8.0" stroke="#bbb" stroke-width="0.6" fill="none"/></svg>
<i style="left:405.20px;top:47.60px;width:7.80px;height:221.20px;background:#f4f4f6;"></i>
<i style="left:405.20px;top:47.60px;width:0.50px;height:221.20px;background:#e4e4ea;"></i>
<svg style="position:absolute;left:406.60px;top:49.20px" width="5.5" height="5.5" viewBox="0 0 5.5 5.5"><path d="M2.75 0.3 L2.75 5.2 M0.3 2.75 L5.2 2.75" stroke="#222" stroke-width="1.0"/></svg>
<i style="left:405.70px;top:55.20px;width:7.30px;height:0.50px;background:#999;"></i>
<svg style="position:absolute;left:407.70px;top:57.40px" width="3" height="2" viewBox="0 0 3 2"><path d="M0 1.8 L3 1.8 L1.5 0 Z" fill="#888"/></svg>
<i style="left:408.50px;top:126.80px;width:3.60px;height:54.90px;background:#c6c7cc;"></i>
<svg style="position:absolute;left:407.70px;top:264.30px" width="3" height="2" viewBox="0 0 3 2"><path d="M0 0 L3 0 L1.5 1.8 Z" fill="#888"/></svg>
<i style="left:405.80px;top:63.00px;width:2.60px;height:147.00px;background:#ecebb0;"></i>
<i style="left:405.80px;top:168.50px;width:6.80px;height:1.00px;background:#555;"></i>
<i style="left:3.00px;top:268.80px;width:410.00px;height:8.10px;background:#eeeff3;"></i>
<b style="left:4.80px;top:270.89px;font:normal 4.6px/5.52px 'Liberation Sans',sans-serif;color:#444;">133 %</b>
<svg style="position:absolute;left:24.00px;top:271.20px" width="2.5" height="1.6" viewBox="0 0 2.5 1.6"><path d="M0 0 L2.5 0 L1.25 1.5 Z" fill="#555"/></svg>
<i style="left:30.00px;top:269.40px;width:0.50px;height:6.90px;background:#d6d8e0;"></i>
<svg style="position:absolute;left:37.50px;top:270.20px" width="4" height="4" viewBox="0 0 4 4"><circle cx="2" cy="2" r="1.7" fill="#5aa55a"/><path d="M1 2 L1.8 2.8 L3 1.2" stroke="#fff" stroke-width="0.5" fill="none"/></svg>
<b style="left:44.50px;top:270.77px;font:normal 4.8px/5.76px 'Liberation Sans',sans-serif;color:#222;">No issues found</b>
<svg style="position:absolute;left:111.00px;top:270.00px" width="4" height="4" viewBox="0 0 4 4"><circle cx="2" cy="2" r="1.5" fill="none" stroke="#555" stroke-width="0.6"/></svg>
<svg style="position:absolute;left:117.50px;top:271.20px" width="2.5" height="1.6" viewBox="0 0 2.5 1.6"><path d="M0 0 L2.5 0 L1.25 1.5 Z" fill="#555"/></svg>
<i style="left:124.50px;top:269.40px;width:0.50px;height:6.90px;background:#d6d8e0;"></i>
<svg style="position:absolute;left:131.00px;top:270.80px" width="2" height="2.5" viewBox="0 0 2 2.5"><path d="M2 0 L0 1.25 L2 2.5 Z" fill="#777"/></svg>
<i style="left:137.00px;top:270.20px;width:220.70px;height:3.40px;background:#c4c5cb;"></i>
<svg style="position:absolute;left:400.00px;top:270.80px" width="2" height="2.5" viewBox="0 0 2 2.5"><path d="M0 0 L2 1.25 L0 2.5 Z" fill="#777"/></svg>
<i style="left:505.0px;top:267.0px;width:14px;height:14px;border-radius:50%;background:rgba(140,140,150,0.28)"></i>
</div>
<div class="tile" style="left:1066.667px;top:0.000px">
<i style="left:0.00px;top:0.00px;width:533.33px;height:27.70px;background:#d2d8ee;"></i>
<i style="left:0.00px;top:25.90px;width:533.33px;height:1.50px;background:#dce1f4;"></i>
<svg style="position:absolute;left:4.00px;top:2.00px" width="11" height="10" viewBox="0 0 11 10"><rect x="1.0" y="2.4" width="2.1" height="4.4" fill="#5b4596"/><path d="M3 4.6 L5.2 4.6" stroke="#6a48b0" stroke-width="1.2"/><path d="M5.3 4.6 L9.0 1.4 L9.0 7.8 Z" fill="#c6a8ee" stroke="#6a3cb4" stroke-width="1.5" stroke-linejoin="round"/></svg>
<b style="left:18.00px;top:4.46px;font:normal 4.9px/5.88px 'Liberation Sans',sans-serif;color:#1e1e28;">File</b>
<b style="left:33.00px;top:4.46px;font:normal 4.9px/5.88px 'Liberation Sans',sans-serif;color:#1e1e28;">Edit</b>
<b style="left:51.00px;top:4.46px;font:normal 4.9px/5.88px 'Liberation Sans',sans-serif;color:#1e1e28;">View</b>
<b style="left:70.00px;top:4.46px;font:normal 4.9px/5.88px 'Liberation Sans',sans-serif;color:#1e1e28;">Project</b>
<b style="left:93.00px;top:4.46px;font:normal 4.9px/5.88px 'Liberation Sans',sans-serif;color:#1e1e28;">Build</b>
<b style="left:113.00px;top:4.46px;font:normal 4.9px/5.88px 'Liberation Sans',sans-serif;color:#1e1e28;">Debug</b>
<b style="left:136.00px;top:4.46px;font:normal 4.9px/5.88px 'Liberation Sans',sans-serif;color:#1e1e28;">Test</b>
<b style="left:152.00px;top:4.46px;font:normal 4.9px/5.88px 'Liberation Sans',sans-serif;color:#1e1e28;">Analyze</b>
<b style="left:178.00px;top:4.46px;font:normal 4.9px/5.88px 'Liberation Sans',sans-serif;color:#1e1e28;">Tools</b>
<b style="left:197.00px;top:4.46px;font:normal 4.9px/5.88px 'Liberation Sans',sans-serif;color:#1e1e28;">Extensions</b>
<b style="left:229.00px;top:4.46px;font:normal 4.9px/5.88px 'Liberation Sans',sans-serif;color:#1e1e28;">Window</b>
<b style="left:255.00px;top:4.46px;font:normal 4.9px/5.88px 'Liberation Sans',sans-serif;color:#1e1e28;">Help</b>
<i style="left:275.00px;top:2.40px;width:91.00px;height:8.40px;background:#fdfdfe;"></i>
<b style="left:277.50px;top:4.49px;font:normal 4.85px/5.82px 'Liberation Sans',sans-serif;color:#6a6c78;">Search (Ctrl+Q)</b>
<svg style="position:absolute;left:357.00px;top:3.80px" width="6" height="6" viewBox="0 0 6 6"><circle cx="3.6" cy="2.4" r="1.6" fill="none" stroke="#444" stroke-width="0.8"/><path d="M2.5 3.5 L0.8 5.2" stroke="#444" stroke-width="0.9"/></svg>
<i style="left:371.00px;top:2.00px;width:37.00px;height:9.00px;background:#d9def2;"></i>
<b style="left:377.00px;top:4.58px;font:normal 4.7px/5.64px 'Liberation Sans',sans-serif;color:#4a4c58;">ClassLibrary</b>
<svg style="position:absolute;left:459.00px;top:2.50px" width="7" height="8.5" viewBox="0 0 7 8.5"><circle cx="3.5" cy="2.6" r="1.7" fill="none" stroke="#333" stroke-width="0.8"/><path d="M0.8 8 Q3.5 4.3 6.2 8 Z" fill="#333"/></svg>
<i style="left:483.00px;top:6.60px;width:4.50px;height:0.45px;background:#8a8e9c;"></i>
<svg style="position:absolute;left:501.50px;top:4.00px" width="5" height="5" viewBox="0 0 5 5"><path d="M1.3 0.6 L4.4 0.6 L4.4 3.7 M0.6 1.4 L3.6 1.4 L3.6 4.4 L0.6 4.4 Z" stroke="#777b88" stroke-width="0.55" fill="none"/></svg>
<svg style="position:absolute;left:521.00px;top:4.30px" width="5" height="5" viewBox="0 0 5 5"><path d="M0.5 0.5 L4.5 4.5 M4.5 0.5 L0.5 4.5" stroke="#8a8e9c" stroke-width="0.55"/></svg>
<i style="left:6.30px;top:14.50px;width:0.60px;height:10.00px;background:#b9bfd6;"></i>
<svg style="position:absolute;left:10.00px;top:16.20px" width="6" height="6" viewBox="0 0 6 6"><circle cx="3" cy="3" r="2" fill="none" stroke="#1d3a6e" stroke-width="1.2"/><path d="M1.6 3 L4.2 3" stroke="#1d3a6e" stroke-width="0.8"/></svg>
<i style="left:20.00px;top:18.80px;width:1.30px;height:1.10px;background:#444;border-radius:0"></i>
<svg style="position:absolute;left:24.50px;top:16.20px" width="6" height="6" viewBox="0 0 6 6"><circle cx="3" cy="3" r="2" fill="none" stroke="#c0c6dc" stroke-width="1.1"/></svg>
<i style="left:33.50px;top:15.50px;width:0.50px;height:8.00px;background:#c3c8dc;"></i>
<svg style="position:absolute;left:36.50px;top:15.60px" width="7" height="7" viewBox="0 0 7 7"><rect x="1" y="2.2" width="4.4" height="3.8" fill="none" stroke="#4a4e60" stroke-width="1"/><path d="M4.5 0.3 L5.2 1.7 L6.6 2.2 L5.2 2.7" fill="#4a4e60"/></svg>
<i style="left:46.80px;top:18.80px;width:1.30px;height:1.10px;background:#444;border-radius:0"></i>
<svg style="position:absolute;left:50.80px;top:15.80px" width="7" height="7" viewBox="0 0 7 7"><path d="M0.5 2 L2.5 2 L3 2.8 L6 2.8 L6 6.3 L0.5 6.3 Z" fill="#d8b8b0"/><path d="M3.5 0.5 L5.5 1.5" stroke="#b89890" stroke-width="0.8"/></svg>
<svg style="position:absolute;left:61.00px;top:16.30px" width="6" height="6" viewBox="0 0 6 6"><path d="M0.4 0.4 L4.6 0.4 L5.6 1.4 L5.6 5.6 L0.4 5.6 Z" fill="#1d3468"/><rect x="1.6" y="0.4" width="2.6" height="1.8" fill="#d9ddef"/></svg>
<svg style="position:absolute;left:69.50px;top:15.60px" width="7" height="7" viewBox="0 0 7 7"><path d="M2.4 0.3 L6.6 0.3 L6.6 4.3 L2.4 4.3 Z" fill="#4a5d8f"/><path d="M0.3 2.6 L4.5 2.6 L4.5 6.6 L0.3 6.6 Z" fill="#1d3468"/></svg>
<svg style="position:absolute;left:80.50px;top:16.20px" width="7" height="6" viewBox="0 0 7 6"><path d="M1.5 2.5 Q4 0.3 5.8 2.5 Q6.5 4.5 4 5.6" fill="none" stroke="#c3c8dc" stroke-width="1.1"/><path d="M0.4 1 L1.4 3.4 L3.4 2.2 Z" fill="#c3c8dc"/></svg>
<i style="left:92.00px;top:18.80px;width:1.30px;height:1.10px;background:#c3c8dc;border-radius:0"></i>
<svg style="position:absolute;left:97.50px;top:16.20px" width="7" height="6" viewBox="0 0 7 6"><path d="M5.5 2.5 Q3 0.3 1.2 2.5 Q0.5 4.5 3 5.6" fill="none" stroke="#c3c8dc" stroke-width="1.1"/><path d="M6.6 1 L5.6 3.4 L3.6 2.2 Z" fill="#c3c8dc"/></svg>
<i style="left:106.20px;top:18.90px;width:1.80px;height:0.60px;background:#c3c8dc;"></i>
<i style="left:106.80px;top:18.30px;width:0.60px;height:1.80px;background:#c3c8dc;"></i>
<i style="left:111.00px;top:15.00px;width:0.50px;height:8.50px;background:#b9bfd6;"></i>
<i style="left:114.00px;top:15.00px;width:27.00px;height:8.50px;background:#fbfbfd;"></i>
<b style="left:116.50px;top:17.44px;font:normal 4.6px/5.52px 'Liberation Sans',sans-serif;color:#333;">Debug</b>
<svg style="position:absolute;left:137.00px;top:18.40px" width="3" height="2" viewBox="0 0 3 2"><path d="M0 0 L3 0 L1.5 1.8 Z" fill="#333"/></svg>
<i style="left:143.50px;top:15.00px;width:46.50px;height:8.50px;background:#fbfbfd;"></i>
<b style="left:146.00px;top:17.44px;font:normal 4.6px/5.52px 'Liberation Sans',sans-serif;color:#444;">Any CPU</b>
<svg style="position:absolute;left:186.00px;top:18.40px" width="3" height="2" viewBox="0 0 3 2"><path d="M0 0 L3 0 L1.5 1.8 Z" fill="#333"/></svg>
<svg style="position:absolute;left:194.50px;top:16.70px" width="4" height="5" viewBox="0 0 4 5"><path d="M0 0 L3.5 2.5 L0 5 Z" fill="#2c7a3c"/></svg>
<b style="left:201.00px;top:17.34px;font:normal 4.6px/5.52px 'Liberation Sans',sans-serif;color:#333;">Start</b>
<svg style="position:absolute;left:214.00px;top:18.60px" width="3" height="2" viewBox="0 0 3 2"><path d="M0 0 L3 0 L1.5 1.8 Z" fill="#333"/></svg>
<i style="left:220.00px;top:15.00px;width:0.50px;height:8.50px;background:#b9bfd6;"></i>
<svg style="position:absolute;left:222.50px;top:16.20px" width="7" height="6" viewBox="0 0 7 6"><path d="M0.5 5.5 L3 1 L6 1 L6 3.5 L3 5.5 Z" fill="#c9b08a"/><path d="M0.5 5.5 L3 3.5" stroke="#555" stroke-width="0.6"/></svg>
<i style="left:231.30px;top:20.60px;width:1.30px;height:1.30px;background:#333;border-radius:0"></i>
<svg style="position:absolute;left:240.00px;top:16.00px" width="7" height="6.5" viewBox="0 0 7 6.5"><path d="M0.6 0.5 L0.6 5.8 M2.2 2 L2.2 5.8 M2.2 2.3 L4.6 2.3 L4.6 5.8" stroke="#3f4660" stroke-width="0.9" fill="none"/></svg>
<svg style="position:absolute;left:250.00px;top:15.80px" width="7" height="7" viewBox="0 0 7 7"><path d="M0.8 1 L6.2 1 M0.8 2.6 L3 2.6 M4 2.6 L6.2 2.6 M2.2 1 L2.2 6.3 M4.6 2.6 L4.6 6.3" stroke="#454c64" stroke-width="0.9" fill="none"/></svg>
<i style="left:259.50px;top:15.50px;width:0.50px;height:8.00px;background:#c3c8dc;"></i>
<svg style="position:absolute;left:263.50px;top:16.20px" width="6" height="6" viewBox="0 0 6 6"><path d="M0.5 1 L5.5 1 M3 1 L3 5.6" stroke="#5b6275" stroke-width="1.0" fill="none"/></svg>
<svg style="position:absolute;left:272.00px;top:16.20px" width="7" height="6" viewBox="0 0 7 6"><path d="M0.5 1 L3 1 M1.7 1 L1.7 5 M3.5 3 L6.5 5.5 M4 5.5 L6.5 5.5" stroke="#6d7389" stroke-width="0.9" fill="none"/></svg>
<i style="left:281.50px;top:15.50px;width:0.50px;height:8.00px;background:#c3c8dc;"></i>
<svg style="position:absolute;left:285.00px;top:16.00px" width="5" height="6.5" viewBox="0 0 5 6.5"><path d="M0.5 0.3 L4.5 0.3 L4.5 6.2 L2.5 4.6 L0.5 6.2 Z" fill="#1f2640"/></svg>
<svg style="position:absolute;left:294.00px;top:16.00px" width="6" height="6.5" viewBox="0 0 6 6.5"><path d="M0.5 0.5 L4 0.5 L4 5.5 L2.2 4.2 L0.5 5.5 Z" fill="none" stroke="#c3c8dc" stroke-width="0.8"/></svg>
<svg style="position:absolute;left:303.00px;top:16.00px" width="6" height="6.5" viewBox="0 0 6 6.5"><path d="M0.5 0.5 L4 0.5 L4 5.5 L2.2 4.2 L0.5 5.5 Z" fill="none" stroke="#c3c8dc" stroke-width="0.8"/></svg>
<svg style="position:absolute;left:312.00px;top:16.00px" width="6" height="6.5" viewBox="0 0 6 6.5"><path d="M0.5 0.5 L4 0.5 L4 5.5 L2.2 4.2 L0.5 5.5 Z" fill="none" stroke="#c3c8dc" stroke-width="0.8"/></svg>
<i style="left:321.00px;top:20.60px;width:1.30px;height:1.30px;background:#333;border-radius:0"></i>
<svg style="position:absolute;left:478.50px;top:16.30px" width="7" height="6.5" viewBox="0 0 7 6.5"><path d="M0.5 6 L5.5 6 M1.2 4.8 Q2 1.6 4.8 1.8 M3.8 0.6 L5.2 1.8 L3.8 3" stroke="#333" stroke-width="0.7" fill="none"/></svg>
<b style="left:486.00px;top:17.58px;font:normal 4.7px/5.64px 'Liberation Sans',sans-serif;color:#333;">Live Share</b>
<svg style="position:absolute;left:519.00px;top:15.50px" width="6" height="8" viewBox="0 0 6 8"><path d="M1 1 L5 1 M1 3 L4 3 M1 1 L1 7 M3 5 L5 7" stroke="#444" stroke-width="0.7" fill="none"/></svg>
<i style="left:0.00px;top:27.70px;width:533.33px;height:249.20px;background:#5d6b99;"></i>
<i style="left:3.00px;top:30.60px;width:100.80px;height:7.70px;background:#5e74b0;"></i>
<b style="left:4.40px;top:32.29px;font:normal 4.85px/5.82px 'Liberation Sans',sans-serif;color:#e8ecf8;">AdvancedStringProcessorV1Should.cs</b>
<i style="left:103.80px;top:30.60px;width:88.90px;height:7.70px;background:#f5e29c;"></i>
<b style="left:105.20px;top:32.29px;font:normal 4.85px/5.82px 'Liberation Sans',sans-serif;color:#2e2a1c;">AdvancedStringProcessorV1.cs</b>
<svg style="position:absolute;left:179.70px;top:33.00px" width="3" height="3" viewBox="0 0 3 3"><path d="M0.5 1.5 L2.5 1.5 M1.5 0.5 L1.5 2.5" stroke="#6b6248" stroke-width="0.6"/></svg>
<svg style="position:absolute;left:186.20px;top:32.60px" width="3.6" height="3.6" viewBox="0 0 3.6 3.6"><path d="M0.4 0.4 L3.2 3.2 M3.2 0.4 L0.4 3.2" stroke="#7a5a30" stroke-width="0.7"/></svg>
<svg style="position:absolute;left:408.80px;top:33.30px" width="3" height="2" viewBox="0 0 3 2"><path d="M0 0 L3 0 L1.5 1.8 Z" fill="#aab2d0"/></svg>
<i style="left:3.00px;top:38.30px;width:410.00px;height:9.10px;background:#fdfdfe;"></i>
<i style="left:3.00px;top:46.80px;width:410.00px;height:0.60px;background:#c9ccd6;"></i>
<i style="left:138.70px;top:38.30px;width:0.60px;height:9.10px;background:#c9ccd6;"></i>
<i style="left:276.70px;top:38.30px;width:0.60px;height:9.10px;background:#c9ccd6;"></i>
<i style="left:4.60px;top:40.00px;width:5.60px;height:5.00px;background:#e8ece8;border:0.8px solid #35503f;box-sizing:border-box"></i>
<b style="left:12.00px;top:41.18px;font:normal 4.7px/5.64px 'Liberation Sans',sans-serif;color:#222;width:120px;overflow:hidden">ClassLibrary</b>
<svg style="position:absolute;left:134.00px;top:42.30px" width="3" height="2" viewBox="0 0 3 2"><path d="M0 0 L3 0 L1.5 1.8 Z" fill="#333"/></svg>
<svg style="position:absolute;left:141.00px;top:40.30px" width="4.5" height="4.5" viewBox="0 0 4.5 4.5"><path d="M0.5 3.5 L2 2 L0.5 0.5" stroke="#8a6a30" stroke-width="0.6" fill="none"/><rect x="2.5" y="2" width="2" height="2" fill="#998"/></svg>
<b style="left:148.30px;top:41.12px;font:normal 4.8px/5.76px 'Liberation Sans',sans-serif;color:#333;width:122px;overflow:hidden">ClassLibrary.Enums.StringProcessingOptionsV1</b>
<svg style="position:absolute;left:272.00px;top:42.30px" width="3" height="2" viewBox="0 0 3 2"><path d="M0 0 L3 0 L1.5 1.8 Z" fill="#333"/></svg>
<svg style="position:absolute;left:279.00px;top:40.50px" width="4" height="4" viewBox="0 0 4 4"><circle cx="2" cy="2" r="1.4" fill="none" stroke="#555" stroke-width="0.6"/></svg>
<b style="left:285.70px;top:41.12px;font:normal 4.8px/5.76px 'Liberation Sans',sans-serif;color:#333;width:119px;overflow:hidden">None</b>
<svg style="position:absolute;left:409.00px;top:42.30px" width="3" height="2" viewBox="0 0 3 2"><path d="M0 0 L3 0 L1.5 1.8 Z" fill="#333"/></svg>
<i style="left:3.00px;top:47.60px;width:410.00px;height:221.20px;background:#ffffff;"></i>
<i style="left:3.00px;top:47.60px;width:9.00px;height:221.20px;background:#f0f0f2;"></i>
<i style="left:9.00px;top:47.60px;width:3.00px;height:221.20px;background:#f7f7f9;"></i>
<i style="left:30.00px;top:47.60px;width:0.60px;height:221.20px;background:#b0b0b8;"></i>
<i style="left:416.60px;top:29.20px;width:114.20px;height:9.20px;background:#44548e;"></i>
<b style="left:418.50px;top:32.49px;font:normal 4.85px/5.82px 'Liberation Sans',sans-serif;color:#f0f2fa;">Solution Explorer</b>
<svg style="position:absolute;left:512.50px;top:32.20px" width="3" height="2.5" viewBox="0 0 3 2.5"><path d="M0 0 L3 0 L1.5 1.8 Z" fill="#dde"/></svg>
<svg style="position:absolute;left:518.50px;top:31.20px" width="4" height="4.5" viewBox="0 0 4 4.5"><path d="M2 0.3 L2 4.2 M0.3 2.6 L3.7 2.6 M0.8 0.5 L3.2 0.5" stroke="#dde" stroke-width="0.6"/></svg>
<svg style="position:absolute;left:524.50px;top:31.50px" width="4" height="4" viewBox="0 0 4 4"><path d="M0.4 0.4 L3.6 3.6 M3.6 0.4 L0.4 3.6" stroke="#dde" stroke-width="0.6"/></svg>
<i style="left:416.60px;top:38.50px;width:114.20px;height:11.00px;background:#cdd5ee;"></i>
<div style="left:0;top:1px">
<i style="left:421.50px;top:41.60px;width:4.40px;height:4.40px;background:#c7cde2;border-radius:50%"></i>
<i style="left:430.00px;top:41.60px;width:4.40px;height:4.40px;background:#c7cde2;border-radius:50%"></i>
<svg style="position:absolute;left:438.50px;top:41.00px" width="6" height="5" viewBox="0 0 6 5"><path d="M0.5 2.6 L3 0.3 L5.5 2.6 M1.2 2.4 L1.2 4.8 L4.8 4.8 L4.8 2.4" stroke="#333" stroke-width="0.8" fill="none"/></svg>
<i style="left:447.50px;top:41.60px;width:4.40px;height:4.40px;background:#8a8fa3;"></i>
<svg style="position:absolute;left:456.50px;top:43.40px" width="2.5" height="1.6" viewBox="0 0 2.5 1.6"><path d="M0 0 L2.5 0 L1.25 1.5 Z" fill="#444"/></svg>
<i style="left:461.00px;top:40.20px;width:0.50px;height:7.60px;background:#aeb5cc;"></i>
<svg style="position:absolute;left:464.50px;top:41.00px" width="6" height="5.5" viewBox="0 0 6 5.5"><path d="M1 1 Q4.5 0.5 4.8 4" stroke="#555" stroke-width="0.8" fill="none"/><circle cx="2" cy="4" r="1" fill="#555"/></svg>
<svg style="position:absolute;left:473.00px;top:43.40px" width="2.5" height="1.6" viewBox="0 0 2.5 1.6"><path d="M0 0 L2.5 0 L1.25 1.5 Z" fill="#444"/></svg>
<svg style="position:absolute;left:479.50px;top:41.00px" width="5" height="5" viewBox="0 0 5 5"><path d="M0.5 0.5 L4 4 M2 4.3 L4.3 4.3 L4.3 2" stroke="#333" stroke-width="0.8" fill="none"/></svg>
<svg style="position:absolute;left:488.30px;top:40.90px" width="5" height="5.5" viewBox="0 0 5 5.5"><path d="M4 1.4 A2 2 0 1 0 4.3 3.6" stroke="#1e4a8a" stroke-width="1.0" fill="none"/></svg>
<svg style="position:absolute;left:497.00px;top:41.20px" width="5" height="5" viewBox="0 0 5 5"><path d="M0.8 4.2 L4.2 0.8" stroke="#222" stroke-width="1.2"/></svg>
<svg style="position:absolute;left:505.50px;top:40.90px" width="5.5" height="5.5" viewBox="0 0 5.5 5.5"><circle cx="2.7" cy="2.9" r="2" fill="none" stroke="#333" stroke-width="0.8"/><rect x="0.5" y="0.3" width="2" height="2" fill="#333"/></svg>
</div>
<i style="left:416.60px;top:49.50px;width:114.20px;height:9.50px;background:#fcfcfe;"></i>
<i style="left:416.60px;top:58.60px;width:114.20px;height:0.50px;background:#d8dbe6;"></i>
<b style="left:418.50px;top:52.43px;font:normal 4.95px/5.94px 'Liberation Sans',sans-serif;color:#7d7f89;">Search Solution Explorer (Ctrl+;)</b>
<svg style="position:absolute;left:518.50px;top:51.60px" width="5" height="5" viewBox="0 0 5 5"><circle cx="3" cy="2" r="1.4" fill="none" stroke="#444" stroke-width="0.7"/><path d="M2 3 L0.5 4.6" stroke="#444" stroke-width="0.8"/></svg>
<svg style="position:absolute;left:525.50px;top:53.60px" width="2.5" height="1.6" viewBox="0 0 2.5 1.6"><path d="M0 0 L2.5 0 L1.25 1.5 Z" fill="#555"/></svg>
<i style="left:416.60px;top:59.00px;width:114.20px;height:217.90px;background:#f6f7fb;"></i>
<svg style="position:absolute;left:424.00px;top:62.00px" width="5.5" height="5" viewBox="0 0 5.5 5"><rect x="0.4" y="0.4" width="4.6" height="3.6" fill="none" stroke="#444" stroke-width="0.6"/><rect x="0.4" y="0.4" width="4.6" height="1" fill="#444"/><path d="M1.5 4.6 L4 4.6" stroke="#666" stroke-width="0.5"/></svg>
<b style="left:430.80px;top:62.33px;font:normal 4.95px/5.94px 'Liberation Sans',sans-serif;color:#333;">Solution 'ClassLibrary' (2 of 2 projects)</b>
<svg style="position:absolute;left:421.80px;top:70.59px" width="3" height="3" viewBox="0 0 3 3"><path d="M2.6 0.3 L2.6 2.6 L0.3 2.6 Z" fill="#333"/></svg>
<svg style="position:absolute;left:429.00px;top:69.49px" width="6.5" height="5" viewBox="0 0 6.5 5"><rect x="0.4" y="0.4" width="5.6" height="4.2" fill="#e9ecef" stroke="#4a5a4e" stroke-width="0.7"/><path d="M1.5 2 L3 2 M1.5 3.2 L3 3.2" stroke="#444" stroke-width="0.6"/><rect x="3.8" y="1.4" width="1.5" height="2.4" fill="#3d6b4d"/></svg>
<b style="left:437.60px;top:70.09px;font:bold 4.5px/5.4px 'Liberation Sans',sans-serif;color:#111;">ClassLibrary</b>
<svg style="position:absolute;left:429.10px;top:77.88px" width="3" height="3.2" viewBox="0 0 3 3.2"><path d="M0.5 0.2 L2.7 1.6 L0.5 3.0 Z" fill="#333"/></svg>
<svg style="position:absolute;left:436.30px;top:76.98px" width="5.5" height="5.5" viewBox="0 0 5.5 5.5"><path d="M0.6 4.8 L3 2.4" stroke="#222" stroke-width="1.1"/><circle cx="3.6" cy="1.8" r="1.3" fill="#222"/></svg>
<b style="left:444.90px;top:77.31px;font:normal 4.95px/5.94px 'Liberation Sans',sans-serif;color:#222;">Properties</b>
<svg style="position:absolute;left:429.10px;top:85.37px" width="3" height="3.2" viewBox="0 0 3 3.2"><path d="M0.5 0.2 L2.7 1.6 L0.5 3.0 Z" fill="#333"/></svg>
<svg style="position:absolute;left:436.30px;top:84.47px" width="6" height="5" viewBox="0 0 6 5"><rect x="0.3" y="1.8" width="2" height="1.6" fill="#222"/><rect x="3.4" y="1.8" width="2" height="1.6" fill="#222"/><path d="M2 2.6 L3.6 2.6" stroke="#222" stroke-width="0.5"/></svg>
<b style="left:444.90px;top:84.80px;font:normal 4.95px/5.94px 'Liberation Sans',sans-serif;color:#222;">References</b>
<svg style="position:absolute;left:429.10px;top:93.06px" width="3" height="3" viewBox="0 0 3 3"><path d="M2.6 0.3 L2.6 2.6 L0.3 2.6 Z" fill="#333"/></svg>
<svg style="position:absolute;left:436.30px;top:91.96px" width="6" height="5" viewBox="0 0 6 5"><path d="M0.3 0.8 L2.4 0.8 L3 1.5 L5.6 1.5 L5.6 4.5 L0.3 4.5 Z" fill="#e6d6b0"/></svg>
<b style="left:444.90px;top:92.29px;font:normal 4.95px/5.94px 'Liberation Sans',sans-serif;color:#222;">Enums</b>
<svg style="position:absolute;left:437.20px;top:100.35px" width="3" height="3.2" viewBox="0 0 3 3.2"><path d="M0.5 0.2 L2.7 1.6 L0.5 3.0 Z" fill="#333"/></svg>
<svg style="position:absolute;left:444.40px;top:99.45px" width="6" height="5" viewBox="0 0 6 5"><text x="0" y="4" font-family="Liberation Sans" font-size="4" font-weight="bold" fill="#6a8a78">C#</text></svg>
<b style="left:453.00px;top:99.78px;font:normal 4.95px/5.94px 'Liberation Sans',sans-serif;color:#222;">AdvancedStringProcessorV1.cs</b>
<svg style="position:absolute;left:429.10px;top:107.84px" width="3" height="3.2" viewBox="0 0 3 3.2"><path d="M0.5 0.2 L2.7 1.6 L0.5 3.0 Z" fill="#333"/></svg>
<svg style="position:absolute;left:436.30px;top:106.94px" width="6" height="5" viewBox="0 0 6 5"><path d="M0.3 0.8 L2.4 0.8 L3 1.5 L5.6 1.5 L5.6 4.5 L0.3 4.5 Z" fill="#dcc18c"/></svg>
<b style="left:444.90px;top:107.27px;font:normal 4.95px/5.94px 'Liberation Sans',sans-serif;color:#222;">StructPerformance</b>
<svg style="position:absolute;left:429.10px;top:115.33px" width="3" height="3.2" viewBox="0 0 3 3.2"><path d="M0.5 0.2 L2.7 1.6 L0.5 3.0 Z" fill="#333"/></svg>
<svg style="position:absolute;left:436.30px;top:114.43px" width="6" height="5" viewBox="0 0 6 5"><path d="M0.3 0.8 L2.4 0.8 L3 1.5 L5.6 1.5 L5.6 4.5 L0.3 4.5 Z" fill="#dcc18c"/></svg>
<b style="left:444.90px;top:114.76px;font:normal 4.95px/5.94px 'Liberation Sans',sans-serif;color:#222;">Tasks</b>
<svg style="position:absolute;left:421.80px;top:123.02px" width="3" height="3" viewBox="0 0 3 3"><path d="M2.6 0.3 L2.6 2.6 L0.3 2.6 Z" fill="#333"/></svg>
<svg style="position:absolute;left:429.00px;top:121.92px" width="6.5" height="5" viewBox="0 0 6.5 5"><rect x="0.4" y="0.4" width="5.6" height="4.2" fill="#e9ecef" stroke="#4a5a4e" stroke-width="0.7"/><path d="M1.5 2 L3 2 M1.5 3.2 L3 3.2" stroke="#444" stroke-width="0.6"/><rect x="3.8" y="1.4" width="1.5" height="2.4" fill="#3d6b4d"/></svg>
<b style="left:437.60px;top:122.25px;font:normal 4.95px/5.94px 'Liberation Sans',sans-serif;color:#222;">ClassLibrary.Tests</b>
<svg style="position:absolute;left:429.10px;top:130.31px" width="3" height="3.2" viewBox="0 0 3 3.2"><path d="M0.5 0.2 L2.7 1.6 L0.5 3.0 Z" fill="#333"/></svg>
<svg style="position:absolute;left:436.30px;top:129.41px" width="5.5" height="5.5" viewBox="0 0 5.5 5.5"><path d="M0.6 4.8 L3 2.4" stroke="#222" stroke-width="1.1"/><circle cx="3.6" cy="1.8" r="1.3" fill="#222"/></svg>
<b style="left:444.90px;top:129.74px;font:normal 4.95px/5.94px 'Liberation Sans',sans-serif;color:#222;">Properties</b>
<svg style="position:absolute;left:429.10px;top:137.80px" width="3" height="3.2" viewBox="0 0 3 3.2"><path d="M0.5 0.2 L2.7 1.6 L0.5 3.0 Z" fill="#333"/></svg>
<svg style="position:absolute;left:436.30px;top:136.90px" width="6" height="5" viewBox="0 0 6 5"><rect x="0.3" y="1.8" width="2" height="1.6" fill="#222"/><rect x="3.4" y="1.8" width="2" height="1.6" fill="#222"/><path d="M2 2.6 L3.6 2.6" stroke="#222" stroke-width="0.5"/></svg>
<b style="left:444.90px;top:137.23px;font:normal 4.95px/5.94px 'Liberation Sans',sans-serif;color:#222;">References</b>
<i style="left:417.10px;top:143.29px;width:112.70px;height:7.30px;background:#dfe1ea;"></i>
<svg style="position:absolute;left:429.10px;top:145.29px" width="3" height="3.2" viewBox="0 0 3 3.2"><path d="M0.5 0.2 L2.7 1.6 L0.5 3.0 Z" fill="#333"/></svg>
<svg style="position:absolute;left:436.30px;top:144.39px" width="6" height="5" viewBox="0 0 6 5"><text x="0" y="4" font-family="Liberation Sans" font-size="4" font-weight="bold" fill="#6a8a78">C#</text></svg>
<b style="left:444.90px;top:144.72px;font:normal 4.95px/5.94px 'Liberation Sans',sans-serif;color:#222;">AdvancedStringProcessorV1Should.cs</b>
<svg style="position:absolute;left:436.30px;top:151.88px" width="6" height="5.5" viewBox="0 0 6 5.5"><rect x="0.6" y="0.6" width="4.4" height="4.4" rx="1.2" fill="none" stroke="#333" stroke-width="0.7"/><path d="M2.8 0 L2.8 1.6" stroke="#333" stroke-width="0.7"/></svg>
<b style="left:444.90px;top:152.21px;font:normal 4.95px/5.94px 'Liberation Sans',sans-serif;color:#222;">App.config</b>
<svg style="position:absolute;left:436.30px;top:159.37px" width="6" height="5" viewBox="0 0 6 5"><text x="0" y="4" font-family="Liberation Sans" font-size="4" font-weight="bold" fill="#6a8a78">C#</text></svg>
<b style="left:444.90px;top:159.70px;font:normal 4.95px/5.94px 'Liberation Sans',sans-serif;color:#222;">ObjectReferenceEqualityExample.cs</b>
<svg style="position:absolute;left:436.30px;top:166.86px" width="6" height="5.5" viewBox="0 0 6 5.5"><rect x="0.6" y="0.6" width="4.4" height="4.4" rx="1.2" fill="none" stroke="#333" stroke-width="0.7"/><path d="M2.8 0 L2.8 1.6" stroke="#333" stroke-width="0.7"/></svg>
<b style="left:444.90px;top:167.19px;font:normal 4.95px/5.94px 'Liberation Sans',sans-serif;color:#222;">packages.config</b>
<svg style="position:absolute;left:429.10px;top:175.25px" width="3" height="3.2" viewBox="0 0 3 3.2"><path d="M0.5 0.2 L2.7 1.6 L0.5 3.0 Z" fill="#333"/></svg>
<svg style="position:absolute;left:436.30px;top:174.35px" width="6" height="5" viewBox="0 0 6 5"><text x="0" y="4" font-family="Liberation Sans" font-size="4" font-weight="bold" fill="#6a8a78">C#</text></svg>
<b style="left:444.90px;top:174.68px;font:normal 4.95px/5.94px 'Liberation Sans',sans-serif;color:#222;">StringProcessorShould.cs</b>
<svg style="position:absolute;left:436.30px;top:181.84px" width="6" height="5" viewBox="0 0 6 5"><text x="0" y="4" font-family="Liberation Sans" font-size="4" font-weight="bold" fill="#6a8a78">C#</text></svg>
<b style="left:444.90px;top:182.17px;font:normal 4.95px/5.94px 'Liberation Sans',sans-serif;color:#222;">StructEqualityPerformance.cs</b>
<i style="left:0.00px;top:276.90px;width:533.33px;height:12.80px;background:#5d6b99;"></i>
<i style="left:0.00px;top:276.90px;width:533.33px;height:0.90px;background:#4f5a88;"></i>
<b style="left:2.60px;top:281.38px;font:normal 4.7px/5.64px 'Liberation Sans',sans-serif;color:#eef0f8;">Test Explorer</b>
<b style="left:34.50px;top:281.38px;font:normal 4.7px/5.64px 'Liberation Sans',sans-serif;color:#eef0f8;">Error List</b>
<b style="left:58.40px;top:281.38px;font:normal 4.7px/5.64px 'Liberation Sans',sans-serif;color:#eef0f8;">Output</b>
<i style="left:0.00px;top:289.70px;width:533.33px;height:9.97px;background:#42508c;"></i>
<i style="left:0.00px;top:298.30px;width:533.33px;height:1.37px;background:#384276;"></i>
<svg style="position:absolute;left:2.50px;top:291.20px" width="6" height="6" viewBox="0 0 6 6"><path d="M1 5.5 L1 1 L5 1 L5 5 M0.2 4.3 L1 5.5 L1.8 4.3" stroke="#eef" stroke-width="0.7" fill="none"/></svg>
<b style="left:11.50px;top:292.55px;font:normal 4.75px/5.7px 'Liberation Sans',sans-serif;color:#f2f3f8;">Test run finished in 460 ms - 1 Total tests - 1 Passed, 0 Failed, 0 Skipped</b>
<b style="left:202.00px;top:292.60px;font:normal 4.5px/5.4px 'Liberation Sans',sans-serif;color:#f2f3f8;">Ln 1</b>
<b style="left:241.00px;top:292.60px;font:normal 4.5px/5.4px 'Liberation Sans',sans-serif;color:#f2f3f8;">Col 1</b>
<b style="left:280.00px;top:292.60px;font:normal 4.5px/5.4px 'Liberation Sans',sans-serif;color:#f2f3f8;">Ch 1</b>
<b style="left:336.00px;top:292.60px;font:normal 4.5px/5.4px 'Liberation Sans',sans-serif;color:#f2f3f8;">INS</b>
<svg style="position:absolute;left:449.00px;top:291.60px" width="4" height="5" viewBox="0 0 4 5"><path d="M2 0.3 L3.8 2.3 L2.6 2.3 L2.6 4.8 L1.4 4.8 L1.4 2.3 L0.2 2.3 Z" fill="#f2f3f8"/></svg>
<b style="left:455.50px;top:292.40px;font:normal 5.0px/6.0px 'Liberation Sans',sans-serif;color:#f2f3f8;">Add to Source Control</b>
<svg style="position:absolute;left:507.00px;top:293.50px" width="3" height="2" viewBox="0 0 3 2"><path d="M0 0 L3 0 L1.5 1.8 Z" fill="#f2f3f8"/></svg>
<svg style="position:absolute;left:519.00px;top:291.00px" width="5" height="6" viewBox="0 0 5 6"><path d="M2.5 0.3 Q4.3 0.8 4.3 3 L4.8 4.5 L0.2 4.5 L0.7 3 Q0.7 0.8 2.5 0.3 Z M1.8 5 L3.2 5 L2.5 5.8 Z" fill="#f2f3f8"/></svg>
<div style="left:3.0px;top:47.6px;width:402.20px;height:221.20px;overflow:hidden">
<b style="left:46.18px;top:9.70px;font:normal 4.6px/6px 'Liberation Sans',sans-serif;letter-spacing:0.5px;color:#a2a2aa">2 references</b>
<b style="left:30.30px;top:15.79px;font:normal 6.62px/9.42px 'Liberation Mono',monospace" class="cd">    <span style="color:#262a40">public</span> <span style="color:#262a40">class</span> <span style="color:#93acb0">AdvancedStringProcessorV1</span></b>
<b style="left:30.30px;top:25.21px;font:normal 6.62px/9.42px 'Liberation Mono',monospace" class="cd">    <span style="color:#202020">{</span></b>
<b style="left:62.06px;top:35.74px;font:normal 4.6px/6px 'Liberation Sans',sans-serif;letter-spacing:0.5px;color:#a2a2aa">1 reference | <span style="color:#5a9a5a">●</span> 1/1 passing</b>
<b style="left:30.30px;top:41.83px;font:normal 6.62px/9.42px 'Liberation Mono',monospace" class="cd">        <span style="color:#262a40">public</span> <span style="color:#93acb0">List</span><span style="color:#202020">&lt;</span><span style="color:#262a40">string</span><span style="color:#202020">&gt;</span> <span style="color:#6a6054">Process</span><span style="color:#202020">(</span><span style="color:#93acb0">List</span><span style="color:#202020">&lt;</span><span style="color:#262a40">string</span><span style="color:#202020">&gt;</span> <span style="color:#3c4156">stringsToProcess</span><span style="color:#202020">,</span></b>
<b style="left:30.30px;top:51.25px;font:normal 6.62px/9.42px 'Liberation Mono',monospace" class="cd">                                    <span style="color:#93acb0">StringProcessingOptionsV1</span> <span style="color:#3c4156">options</span><span style="color:#202020">)</span></b>
<b style="left:30.30px;top:60.67px;font:normal 6.62px/9.42px 'Liberation Mono',monospace" class="cd">        <span style="color:#202020">{</span></b>
<b style="left:30.30px;top:70.09px;font:normal 6.62px/9.42px 'Liberation Mono',monospace" class="cd">            <span style="color:#262a40">var</span> <span style="color:#3c4156">results</span> <span style="color:#202020">=</span> <span style="color:#262a40">new</span> <span style="color:#93acb0">List</span><span style="color:#202020">&lt;</span><span style="color:#262a40">string</span><span style="color:#202020">&gt;</span><span style="color:#202020">(</span><span style="color:#202020">)</span><span style="color:#202020">;</span></b>
<b style="left:30.30px;top:79.51px;font:normal 6.62px/9.42px 'Liberation Mono',monospace" class="cd"></b>
<b style="left:30.30px;top:88.93px;font:normal 6.62px/9.42px 'Liberation Mono',monospace" class="cd">            <span style="color:#4a3850">foreach</span> <span style="color:#202020">(</span><span style="color:#262a40">var</span> <span style="color:#3c4156">s</span> <span style="color:#262a40">in</span> <span style="color:#3c4156">stringsToProcess</span><span style="color:#202020">)</span></b>
<b style="left:30.30px;top:98.35px;font:normal 6.62px/9.42px 'Liberation Mono',monospace" class="cd">            <span style="color:#202020">{</span></b>
<b style="left:30.30px;top:107.77px;font:normal 6.62px/9.42px 'Liberation Mono',monospace" class="cd">                <span style="color:#4a3850">switch</span> <span style="color:#202020">(</span><span style="color:#3c4156">options</span><span style="color:#202020">)</span></b>
<b style="left:30.30px;top:117.19px;font:normal 6.62px/9.42px 'Liberation Mono',monospace" class="cd">                <span style="color:#202020">{</span></b>
<b style="left:30.30px;top:126.61px;font:normal 6.62px/9.42px 'Liberation Mono',monospace" class="cd">                    <span style="color:#4a3850">case</span> <span style="color:#93acb0">StringProcessingOptionsV1</span><span style="color:#202020">.</span><span style="color:#202020">None</span><span style="color:#202020">:</span></b>
<b style="left:30.30px;top:136.03px;font:normal 6.62px/9.42px 'Liberation Mono',monospace" class="cd">                        <span style="color:#3c4156">results</span><span style="color:#202020">.</span><span style="color:#6a6054">Add</span><span style="color:#202020">(</span><span style="color:#3c4156">s</span><span style="color:#202020">)</span><span style="color:#202020">;</span></b>
<b style="left:30.30px;top:145.45px;font:normal 6.62px/9.42px 'Liberation Mono',monospace" class="cd">                        <span style="color:#4a3850">break</span><span style="color:#202020">;</span></b>
<b style="left:30.30px;top:154.87px;font:normal 6.62px/9.42px 'Liberation Mono',monospace" class="cd">                    <span style="color:#4a3850">case</span> <span style="color:#93acb0">StringProcessingOptionsV1</span><span style="color:#202020">.</span><span style="color:#202020">ConvertToUppercase</span><span style="color:#202020">:</span></b>
<b style="left:30.30px;top:164.29px;font:normal 6.62px/9.42px 'Liberation Mono',monospace" class="cd">                        <span style="color:#3c4156">results</span><span style="color:#202020">.</span><span style="color:#6a6054">Add</span><span style="color:#202020">(</span><span style="color:#3c4156">s</span><span style="color:#202020">.</span><span style="color:#6a6054">ToUpperInvariant</span><span style="color:#202020">(</span><span style="color:#202020">)</span><span style="color:#202020">)</span><span style="color:#202020">;</span></b>
<b style="left:30.30px;top:173.71px;font:normal 6.62px/9.42px 'Liberation Mono',monospace" class="cd">                        <span style="color:#4a3850">break</span><span style="color:#202020">;</span></b>
<b style="left:30.30px;top:183.13px;font:normal 6.62px/9.42px 'Liberation Mono',monospace" class="cd">                    <span style="color:#4a3850">case</span> <span style="color:#93acb0">StringProcessingOptionsV1</span><span style="color:#202020">.</span><span style="color:#202020">AddLength</span><span style="color:#202020">:</span></b>
<b style="left:30.30px;top:192.55px;font:normal 6.62px/9.42px 'Liberation Mono',monospace" class="cd">                        <span style="color:#3c4156">results</span><span style="color:#202020">.</span><span style="color:#6a6054">Add</span><span style="color:#202020">(</span><span style="color:#7e3434">$"{s.Length}-{s}"</span><span style="color:#202020">)</span><span style="color:#202020">;</span></b>
<b style="left:30.30px;top:201.97px;font:normal 6.62px/9.42px 'Liberation Mono',monospace" class="cd">                        <span style="color:#4a3850">break</span><span style="color:#202020">;</span></b>
<b style="left:30.30px;top:211.39px;font:normal 6.62px/9.42px 'Liberation Mono',monospace" class="cd">                    <span style="color:#4a3850">default</span><span style="color:#202020">:</span></b>
<b style="left:30.30px;top:220.81px;font:normal 6.62px/9.42px 'Liberation Mono',monospace" class="cd">                        <span style="color:#4a3850">throw</span> <span style="color:#262a40">new</span> <span style="color:#93acb0">NotImplementedException</span><span style="color:#202020">(</span><span style="color:#202020">)</span><span style="color:#202020">;</span></b>
</div>
<i style="left:28.3px;top:64.50px;width:4px;height:4px;background:#fff;border:0.6px solid #a0a0a8;box-sizing:border-box"></i>
<i style="left:29.30px;top:66.20px;width:2.00px;height:0.60px;background:#777;"></i>
<i style="left:28.3px;top:99.96px;width:4px;height:4px;background:#fff;border:0.6px solid #a0a0a8;box-sizing:border-box"></i>
<i style="left:29.30px;top:101.66px;width:2.00px;height:0.60px;background:#777;"></i>
<i style="left:28.3px;top:137.64px;width:4px;height:4px;background:#fff;border:0.6px solid #a0a0a8;box-sizing:border-box"></i>
<i style="left:29.30px;top:139.34px;width:2.00px;height:0.60px;background:#777;"></i>
<i style="left:28.3px;top:156.48px;width:4px;height:4px;background:#fff;border:0.6px solid #a0a0a8;box-sizing:border-box"></i>
<i style="left:29.30px;top:158.18px;width:2.00px;height:0.60px;background:#777;"></i>
<svg style="position:absolute;left:344.50px;top:124.80px" width="3" height="8.4" viewBox="0 0 3 8.4"><path d="M0.3 0.4 L1.2 0.4 L1.5 0.8 L1.8 0.4 L2.7 0.4 M1.5 0.8 L1.5 7.6 M0.3 8.0 L1.2 8.0 L1.5 7.6 L1.8 8.0 L2.7 8.0" stroke="#555" stroke-width="0.6" fill="none"/></svg>
<i style="left:405.20px;top:47.60px;width:7.80px;height:221.20px;background:#f4f4f6;"></i>
<i style="left:405.20px;top:47.60px;width:0.50px;height:221.20px;background:#e4e4ea;"></i>
<svg style="position:absolute;left:406.60px;top:49.20px" width="5.5" height="5.5" viewBox="0 0 5.5 5.5"><path d="M2.75 0.3 L2.75 5.2 M0.3 2.75 L5.2 2.75" stroke="#222" stroke-width="1.0"/></svg>
<i style="left:405.70px;top:55.20px;width:7.30px;height:0.50px;background:#999;"></i>
<svg style="position:absolute;left:407.70px;top:57.40px" width="3" height="2" viewBox="0 0 3 2"><path d="M0 1.8 L3 1.8 L1.5 0 Z" fill="#888"/></svg>
<i style="left:408.50px;top:97.00px;width:3.60px;height:67.00px;background:#c6c7cc;"></i>
<svg style="position:absolute;left:407.70px;top:264.30px" width="3" height="2" viewBox="0 0 3 2"><path d="M0 0 L3 0 L1.5 1.8 Z" fill="#888"/></svg>
<i style="left:3.00px;top:268.80px;width:410.00px;height:8.10px;background:#eeeff3;"></i>
<b style="left:4.80px;top:270.89px;font:normal 4.6px/5.52px 'Liberation Sans',sans-serif;color:#444;">133 %</b>
<svg style="position:absolute;left:24.00px;top:271.20px" width="2.5" height="1.6" viewBox="0 0 2.5 1.6"><path d="M0 0 L2.5 0 L1.25 1.5 Z" fill="#555"/></svg>
<i style="left:30.00px;top:269.40px;width:0.50px;height:6.90px;background:#d6d8e0;"></i>
<svg style="position:absolute;left:37.50px;top:270.20px" width="4" height="4" viewBox="0 0 4 4"><circle cx="2" cy="2" r="1.7" fill="#5aa55a"/><path d="M1 2 L1.8 2.8 L3 1.2" stroke="#fff" stroke-width="0.5" fill="none"/></svg>
<b style="left:44.50px;top:270.77px;font:normal 4.8px/5.76px 'Liberation Sans',sans-serif;color:#222;">No issues found</b>
<svg style="position:absolute;left:111.00px;top:270.00px" width="4" height="4" viewBox="0 0 4 4"><circle cx="2" cy="2" r="1.5" fill="none" stroke="#555" stroke-width="0.6"/></svg>
<svg style="position:absolute;left:117.50px;top:271.20px" width="2.5" height="1.6" viewBox="0 0 2.5 1.6"><path d="M0 0 L2.5 0 L1.25 1.5 Z" fill="#555"/></svg>
<i style="left:124.50px;top:269.40px;width:0.50px;height:6.90px;background:#d6d8e0;"></i>
<svg style="position:absolute;left:131.00px;top:270.80px" width="2" height="2.5" viewBox="0 0 2 2.5"><path d="M2 0 L0 1.25 L2 2.5 Z" fill="#777"/></svg>
<i style="left:137.00px;top:270.20px;width:220.70px;height:3.40px;background:#c4c5cb;"></i>
<svg style="position:absolute;left:400.00px;top:270.80px" width="2" height="2.5" viewBox="0 0 2 2.5"><path d="M0 0 L2 1.25 L0 2.5 Z" fill="#777"/></svg>
<i style="left:505.0px;top:267.0px;width:14px;height:14px;border-radius:50%;background:rgba(140,140,150,0.28)"></i>
</div>
<div class="tile" style="left:0.000px;top:299.667px">
<i style="left:0.00px;top:0.00px;width:533.33px;height:27.70px;background:#d2d8ee;"></i>
<i style="left:0.00px;top:25.90px;width:533.33px;height:1.50px;background:#dce1f4;"></i>
<svg style="position:absolute;left:4.00px;top:2.00px" width="11" height="10" viewBox="0 0 11 10"><rect x="1.0" y="2.4" width="2.1" height="4.4" fill="#5b4596"/><path d="M3 4.6 L5.2 4.6" stroke="#6a48b0" stroke-width="1.2"/><path d="M5.3 4.6 L9.0 1.4 L9.0 7.8 Z" fill="#c6a8ee" stroke="#6a3cb4" stroke-width="1.5" stroke-linejoin="round"/></svg>
<b style="left:18.00px;top:4.46px;font:normal 4.9px/5.88px 'Liberation Sans',sans-serif;color:#1e1e28;">File</b>
<b style="left:33.00px;top:4.46px;font:normal 4.9px/5.88px 'Liberation Sans',sans-serif;color:#1e1e28;">Edit</b>
<b style="left:51.00px;top:4.46px;font:normal 4.9px/5.88px 'Liberation Sans',sans-serif;color:#1e1e28;">View</b>
<b style="left:70.00px;top:4.46px;font:normal 4.9px/5.88px 'Liberation Sans',sans-serif;color:#1e1e28;">Project</b>
<b style="left:93.00px;top:4.46px;font:normal 4.9px/5.88px 'Liberation Sans',sans-serif;color:#1e1e28;">Build</b>
<b style="left:113.00px;top:4.46px;font:normal 4.9px/5.88px 'Liberation Sans',sans-serif;color:#1e1e28;">Debug</b>
<b style="left:136.00px;top:4.46px;font:normal 4.9px/5.88px 'Liberation Sans',sans-serif;color:#1e1e28;">Test</b>
<b style="left:152.00px;top:4.46px;font:normal 4.9px/5.88px 'Liberation Sans',sans-serif;color:#1e1e28;">Analyze</b>
<b style="left:178.00px;top:4.46px;font:normal 4.9px/5.88px 'Liberation Sans',sans-serif;color:#1e1e28;">Tools</b>
<b style="left:197.00px;top:4.46px;font:normal 4.9px/5.88px 'Liberation Sans',sans-serif;color:#1e1e28;">Extensions</b>
<b style="left:229.00px;top:4.46px;font:normal 4.9px/5.88px 'Liberation Sans',sans-serif;color:#1e1e28;">Window</b>
<b style="left:255.00px;top:4.46px;font:normal 4.9px/5.88px 'Liberation Sans',sans-serif;color:#1e1e28;">Help</b>
<i style="left:275.00px;top:2.40px;width:91.00px;height:8.40px;background:#fdfdfe;"></i>
<b style="left:277.50px;top:4.49px;font:normal 4.85px/5.82px 'Liberation Sans',sans-serif;color:#6a6c78;">Search (Ctrl+Q)</b>
<svg style="position:absolute;left:357.00px;top:3.80px" width="6" height="6" viewBox="0 0 6 6"><circle cx="3.6" cy="2.4" r="1.6" fill="none" stroke="#444" stroke-width="0.8"/><path d="M2.5 3.5 L0.8 5.2" stroke="#444" stroke-width="0.9"/></svg>
<i style="left:371.00px;top:2.00px;width:37.00px;height:9.00px;background:#d9def2;"></i>
<b style="left:377.00px;top:4.58px;font:normal 4.7px/5.64px 'Liberation Sans',sans-serif;color:#4a4c58;">ClassLibrary</b>
<svg style="position:absolute;left:459.00px;top:2.50px" width="7" height="8.5" viewBox="0 0 7 8.5"><circle cx="3.5" cy="2.6" r="1.7" fill="none" stroke="#333" stroke-width="0.8"/><path d="M0.8 8 Q3.5 4.3 6.2 8 Z" fill="#333"/></svg>
<i style="left:483.00px;top:6.60px;width:4.50px;height:0.45px;background:#8a8e9c;"></i>
<svg style="position:absolute;left:501.50px;top:4.00px" width="5" height="5" viewBox="0 0 5 5"><path d="M1.3 0.6 L4.4 0.6 L4.4 3.7 M0.6 1.4 L3.6 1.4 L3.6 4.4 L0.6 4.4 Z" stroke="#777b88" stroke-width="0.55" fill="none"/></svg>
<svg style="position:absolute;left:521.00px;top:4.30px" width="5" height="5" viewBox="0 0 5 5"><path d="M0.5 0.5 L4.5 4.5 M4.5 0.5 L0.5 4.5" stroke="#8a8e9c" stroke-width="0.55"/></svg>
<i style="left:6.30px;top:14.50px;width:0.60px;height:10.00px;background:#b9bfd6;"></i>
<svg style="position:absolute;left:10.00px;top:16.20px" width="6" height="6" viewBox="0 0 6 6"><circle cx="3" cy="3" r="2" fill="none" stroke="#1d3a6e" stroke-width="1.2"/><path d="M1.6 3 L4.2 3" stroke="#1d3a6e" stroke-width="0.8"/></svg>
<i style="left:20.00px;top:18.80px;width:1.30px;height:1.10px;background:#444;border-radius:0"></i>
<svg style="position:absolute;left:24.50px;top:16.20px" width="6" height="6" viewBox="0 0 6 6"><circle cx="3" cy="3" r="2" fill="none" stroke="#c0c6dc" stroke-width="1.1"/></svg>
<i style="left:33.50px;top:15.50px;width:0.50px;height:8.00px;background:#c3c8dc;"></i>
<svg style="position:absolute;left:36.50px;top:15.60px" width="7" height="7" viewBox="0 0 7 7"><rect x="1" y="2.2" width="4.4" height="3.8" fill="none" stroke="#4a4e60" stroke-width="1"/><path d="M4.5 0.3 L5.2 1.7 L6.6 2.2 L5.2 2.7" fill="#4a4e60"/></svg>
<i style="left:46.80px;top:18.80px;width:1.30px;height:1.10px;background:#444;border-radius:0"></i>
<svg style="position:absolute;left:50.80px;top:15.80px" width="7" height="7" viewBox="0 0 7 7"><path d="M0.5 2 L2.5 2 L3 2.8 L6 2.8 L6 6.3 L0.5 6.3 Z" fill="#d8b8b0"/><path d="M3.5 0.5 L5.5 1.5" stroke="#b89890" stroke-width="0.8"/></svg>
<svg style="position:absolute;left:61.00px;top:16.30px" width="6" height="6" viewBox="0 0 6 6"><path d="M0.4 0.4 L4.6 0.4 L5.6 1.4 L5.6 5.6 L0.4 5.6 Z" fill="#1d3468"/><rect x="1.6" y="0.4" width="2.6" height="1.8" fill="#d9ddef"/></svg>
<svg style="position:absolute;left:69.50px;top:15.60px" width="7" height="7" viewBox="0 0 7 7"><path d="M2.4 0.3 L6.6 0.3 L6.6 4.3 L2.4 4.3 Z" fill="#4a5d8f"/><path d="M0.3 2.6 L4.5 2.6 L4.5 6.6 L0.3 6.6 Z" fill="#1d3468"/></svg>
<svg style="position:absolute;left:80.50px;top:16.20px" width="7" height="6" viewBox="0 0 7 6"><path d="M1.5 2.5 Q4 0.3 5.8 2.5 Q6.5 4.5 4 5.6" fill="none" stroke="#1d3468" stroke-width="1.1"/><path d="M0.4 1 L1.4 3.4 L3.4 2.2 Z" fill="#1d3468"/></svg>
<i style="left:92.00px;top:18.80px;width:1.30px;height:1.10px;background:#444;border-radius:0"></i>
<svg style="position:absolute;left:97.50px;top:16.20px" width="7" height="6" viewBox="0 0 7 6"><path d="M5.5 2.5 Q3 0.3 1.2 2.5 Q0.5 4.5 3 5.6" fill="none" stroke="#c3c8dc" stroke-width="1.1"/><path d="M6.6 1 L5.6 3.4 L3.6 2.2 Z" fill="#c3c8dc"/></svg>
<i style="left:106.20px;top:18.90px;width:1.80px;height:0.60px;background:#c3c8dc;"></i>
<i style="left:106.80px;top:18.30px;width:0.60px;height:1.80px;background:#c3c8dc;"></i>
<i style="left:111.00px;top:15.00px;width:0.50px;height:8.50px;background:#b9bfd6;"></i>
<i style="left:114.00px;top:15.00px;width:27.00px;height:8.50px;background:#fbfbfd;"></i>
<b style="left:116.50px;top:17.44px;font:normal 4.6px/5.52px 'Liberation Sans',sans-serif;color:#333;">Debug</b>
<svg style="position:absolute;left:137.00px;top:18.40px" width="3" height="2" viewBox="0 0 3 2"><path d="M0 0 L3 0 L1.5 1.8 Z" fill="#333"/></svg>
<i style="left:143.50px;top:15.00px;width:46.50px;height:8.50px;background:#fbfbfd;"></i>
<b style="left:146.00px;top:17.44px;font:normal 4.6px/5.52px 'Liberation Sans',sans-serif;color:#444;">Any CPU</b>
<svg style="position:absolute;left:186.00px;top:18.40px" width="3" height="2" viewBox="0 0 3 2"><path d="M0 0 L3 0 L1.5 1.8 Z" fill="#333"/></svg>
<svg style="position:absolute;left:194.50px;top:16.70px" width="4" height="5" viewBox="0 0 4 5"><path d="M0 0 L3.5 2.5 L0 5 Z" fill="#2c7a3c"/></svg>
<b style="left:201.00px;top:17.34px;font:normal 4.6px/5.52px 'Liberation Sans',sans-serif;color:#333;">Start</b>
<svg style="position:absolute;left:214.00px;top:18.60px" width="3" height="2" viewBox="0 0 3 2"><path d="M0 0 L3 0 L1.5 1.8 Z" fill="#333"/></svg>
<i style="left:220.00px;top:15.00px;width:0.50px;height:8.50px;background:#b9bfd6;"></i>
<svg style="position:absolute;left:222.50px;top:16.20px" width="7" height="6" viewBox="0 0 7 6"><path d="M0.5 5.5 L3 1 L6 1 L6 3.5 L3 5.5 Z" fill="#c9b08a"/><path d="M0.5 5.5 L3 3.5" stroke="#555" stroke-width="0.6"/></svg>
<i style="left:231.30px;top:20.60px;width:1.30px;height:1.30px;background:#333;border-radius:0"></i>
<svg style="position:absolute;left:240.00px;top:16.00px" width="7" height="6.5" viewBox="0 0 7 6.5"><path d="M0.6 0.5 L0.6 5.8 M2.2 2 L2.2 5.8 M2.2 2.3 L4.6 2.3 L4.6 5.8" stroke="#3f4660" stroke-width="0.9" fill="none"/></svg>
<svg style="position:absolute;left:250.00px;top:15.80px" width="7" height="7" viewBox="0 0 7 7"><path d="M0.8 1 L6.2 1 M0.8 2.6 L3 2.6 M4 2.6 L6.2 2.6 M2.2 1 L2.2 6.3 M4.6 2.6 L4.6 6.3" stroke="#454c64" stroke-width="0.9" fill="none"/></svg>
<i style="left:259.50px;top:15.50px;width:0.50px;height:8.00px;background:#c3c8dc;"></i>
<svg style="position:absolute;left:263.50px;top:16.20px" width="6" height="6" viewBox="0 0 6 6"><path d="M0.5 1 L5.5 1 M3 1 L3 5.6" stroke="#5b6275" stroke-width="1.0" fill="none"/></svg>
<svg style="position:absolute;left:272.00px;top:16.20px" width="7" height="6" viewBox="0 0 7 6"><path d="M0.5 1 L3 1 M1.7 1 L1.7 5 M3.5 3 L6.5 5.5 M4 5.5 L6.5 5.5" stroke="#6d7389" stroke-width="0.9" fill="none"/></svg>
<i style="left:281.50px;top:15.50px;width:0.50px;height:8.00px;background:#c3c8dc;"></i>
<svg style="position:absolute;left:285.00px;top:16.00px" width="5" height="6.5" viewBox="0 0 5 6.5"><path d="M0.5 0.3 L4.5 0.3 L4.5 6.2 L2.5 4.6 L0.5 6.2 Z" fill="#1f2640"/></svg>
<svg style="position:absolute;left:294.00px;top:16.00px" width="6" height="6.5" viewBox="0 0 6 6.5"><path d="M0.5 0.5 L4 0.5 L4 5.5 L2.2 4.2 L0.5 5.5 Z" fill="none" stroke="#c3c8dc" stroke-width="0.8"/></svg>
<svg style="position:absolute;left:303.00px;top:16.00px" width="6" height="6.5" viewBox="0 0 6 6.5"><path d="M0.5 0.5 L4 0.5 L4 5.5 L2.2 4.2 L0.5 5.5 Z" fill="none" stroke="#c3c8dc" stroke-width="0.8"/></svg>
<svg style="position:absolute;left:312.00px;top:16.00px" width="6" height="6.5" viewBox="0 0 6 6.5"><path d="M0.5 0.5 L4 0.5 L4 5.5 L2.2 4.2 L0.5 5.5 Z" fill="none" stroke="#c3c8dc" stroke-width="0.8"/></svg>
<i style="left:321.00px;top:20.60px;width:1.30px;height:1.30px;background:#333;border-radius:0"></i>
<svg style="position:absolute;left:478.50px;top:16.30px" width="7" height="6.5" viewBox="0 0 7 6.5"><path d="M0.5 6 L5.5 6 M1.2 4.8 Q2 1.6 4.8 1.8 M3.8 0.6 L5.2 1.8 L3.8 3" stroke="#333" stroke-width="0.7" fill="none"/></svg>
<b style="left:486.00px;top:17.58px;font:normal 4.7px/5.64px 'Liberation Sans',sans-serif;color:#333;">Live Share</b>
<svg style="position:absolute;left:519.00px;top:15.50px" width="6" height="8" viewBox="0 0 6 8"><path d="M1 1 L5 1 M1 3 L4 3 M1 1 L1 7 M3 5 L5 7" stroke="#444" stroke-width="0.7" fill="none"/></svg>
<i style="left:0.00px;top:27.70px;width:533.33px;height:249.20px;background:#5d6b99;"></i>
<i style="left:3.00px;top:30.60px;width:88.70px;height:7.70px;background:#f5e29c;"></i>
<b style="left:4.40px;top:32.29px;font:normal 4.85px/5.82px 'Liberation Sans',sans-serif;color:#2e2a1c;">AdvancedStringProcessorV2.cs*</b>
<svg style="position:absolute;left:78.70px;top:33.00px" width="3" height="3" viewBox="0 0 3 3"><path d="M0.5 1.5 L2.5 1.5 M1.5 0.5 L1.5 2.5" stroke="#6b6248" stroke-width="0.6"/></svg>
<svg style="position:absolute;left:85.20px;top:32.60px" width="3.6" height="3.6" viewBox="0 0 3.6 3.6"><path d="M0.4 0.4 L3.2 3.2 M3.2 0.4 L0.4 3.2" stroke="#7a5a30" stroke-width="0.7"/></svg>
<svg style="position:absolute;left:408.80px;top:33.30px" width="3" height="2" viewBox="0 0 3 2"><path d="M0 0 L3 0 L1.5 1.8 Z" fill="#aab2d0"/></svg>
<i style="left:3.00px;top:38.30px;width:410.00px;height:9.10px;background:#fdfdfe;"></i>
<i style="left:3.00px;top:46.80px;width:410.00px;height:0.60px;background:#c9ccd6;"></i>
<i style="left:138.70px;top:38.30px;width:0.60px;height:9.10px;background:#c9ccd6;"></i>
<i style="left:276.70px;top:38.30px;width:0.60px;height:9.10px;background:#c9ccd6;"></i>
<i style="left:4.60px;top:40.00px;width:5.60px;height:5.00px;background:#e8ece8;border:0.8px solid #35503f;box-sizing:border-box"></i>
<b style="left:12.00px;top:41.18px;font:normal 4.7px/5.64px 'Liberation Sans',sans-serif;color:#222;width:120px;overflow:hidden">ClassLibrary</b>
<svg style="position:absolute;left:134.00px;top:42.30px" width="3" height="2" viewBox="0 0 3 2"><path d="M0 0 L3 0 L1.5 1.8 Z" fill="#333"/></svg>
<svg style="position:absolute;left:141.00px;top:40.30px" width="4.5" height="4.5" viewBox="0 0 4.5 4.5"><path d="M0.5 3.5 L2 2 L0.5 0.5" stroke="#8a6a30" stroke-width="0.6" fill="none"/><rect x="2.5" y="2" width="2" height="2" fill="#998"/></svg>
<b style="left:148.30px;top:41.12px;font:normal 4.8px/5.76px 'Liberation Sans',sans-serif;color:#333;width:122px;overflow:hidden">ClassLibrary.Enums.StringProcessingOptionsV2</b>
<svg style="position:absolute;left:272.00px;top:42.30px" width="3" height="2" viewBox="0 0 3 2"><path d="M0 0 L3 0 L1.5 1.8 Z" fill="#333"/></svg>
<svg style="position:absolute;left:279.00px;top:40.50px" width="4" height="4" viewBox="0 0 4 4"><circle cx="2" cy="2" r="1.4" fill="none" stroke="#555" stroke-width="0.6"/></svg>
<b style="left:285.70px;top:41.12px;font:normal 4.8px/5.76px 'Liberation Sans',sans-serif;color:#333;width:119px;overflow:hidden">AddLength</b>
<svg style="position:absolute;left:409.00px;top:42.30px" width="3" height="2" viewBox="0 0 3 2"><path d="M0 0 L3 0 L1.5 1.8 Z" fill="#333"/></svg>
<i style="left:3.00px;top:47.60px;width:410.00px;height:221.20px;background:#ffffff;"></i>
<i style="left:3.00px;top:47.60px;width:9.00px;height:221.20px;background:#f0f0f2;"></i>
<i style="left:9.00px;top:47.60px;width:3.00px;height:221.20px;background:#f7f7f9;"></i>
<i style="left:416.60px;top:29.20px;width:114.20px;height:9.20px;background:#44548e;"></i>
<b style="left:418.50px;top:32.49px;font:normal 4.85px/5.82px 'Liberation Sans',sans-serif;color:#f0f2fa;">Solution Explorer</b>
<svg style="position:absolute;left:512.50px;top:32.20px" width="3" height="2.5" viewBox="0 0 3 2.5"><path d="M0 0 L3 0 L1.5 1.8 Z" fill="#dde"/></svg>
<svg style="position:absolute;left:518.50px;top:31.20px" width="4" height="4.5" viewBox="0 0 4 4.5"><path d="M2 0.3 L2 4.2 M0.3 2.6 L3.7 2.6 M0.8 0.5 L3.2 0.5" stroke="#dde" stroke-width="0.6"/></svg>
<svg style="position:absolute;left:524.50px;top:31.50px" width="4" height="4" viewBox="0 0 4 4"><path d="M0.4 0.4 L3.6 3.6 M3.6 0.4 L0.4 3.6" stroke="#dde" stroke-width="0.6"/></svg>
<i style="left:416.60px;top:38.50px;width:114.20px;height:11.00px;background:#cdd5ee;"></i>
<div style="left:0;top:1px">
<i style="left:421.50px;top:41.60px;width:4.40px;height:4.40px;background:#c7cde2;border-radius:50%"></i>
<i style="left:430.00px;top:41.60px;width:4.40px;height:4.40px;background:#c7cde2;border-radius:50%"></i>
<svg style="position:absolute;left:438.50px;top:41.00px" width="6" height="5" viewBox="0 0 6 5"><path d="M0.5 2.6 L3 0.3 L5.5 2.6 M1.2 2.4 L1.2 4.8 L4.8 4.8 L4.8 2.4" stroke="#333" stroke-width="0.8" fill="none"/></svg>
<i style="left:447.50px;top:41.60px;width:4.40px;height:4.40px;background:#8a8fa3;"></i>
<svg style="position:absolute;left:456.50px;top:43.40px" width="2.5" height="1.6" viewBox="0 0 2.5 1.6"><path d="M0 0 L2.5 0 L1.25 1.5 Z" fill="#444"/></svg>
<i style="left:461.00px;top:40.20px;width:0.50px;height:7.60px;background:#aeb5cc;"></i>
<svg style="position:absolute;left:464.50px;top:41.00px" width="6" height="5.5" viewBox="0 0 6 5.5"><path d="M1 1 Q4.5 0.5 4.8 4" stroke="#555" stroke-width="0.8" fill="none"/><circle cx="2" cy="4" r="1" fill="#555"/></svg>
<svg style="position:absolute;left:473.00px;top:43.40px" width="2.5" height="1.6" viewBox="0 0 2.5 1.6"><path d="M0 0 L2.5 0 L1.25 1.5 Z" fill="#444"/></svg>
<svg style="position:absolute;left:479.50px;top:41.00px" width="5" height="5" viewBox="0 0 5 5"><path d="M0.5 0.5 L4 4 M2 4.3 L4.3 4.3 L4.3 2" stroke="#333" stroke-width="0.8" fill="none"/></svg>
<svg style="position:absolute;left:488.30px;top:40.90px" width="5" height="5.5" viewBox="0 0 5 5.5"><path d="M4 1.4 A2 2 0 1 0 4.3 3.6" stroke="#1e4a8a" stroke-width="1.0" fill="none"/></svg>
<svg style="position:absolute;left:497.00px;top:41.20px" width="5" height="5" viewBox="0 0 5 5"><path d="M0.8 4.2 L4.2 0.8" stroke="#222" stroke-width="1.2"/></svg>
<svg style="position:absolute;left:505.50px;top:40.90px" width="5.5" height="5.5" viewBox="0 0 5.5 5.5"><circle cx="2.7" cy="2.9" r="2" fill="none" stroke="#333" stroke-width="0.8"/><rect x="0.5" y="0.3" width="2" height="2" fill="#333"/></svg>
</div>
<i style="left:416.60px;top:49.50px;width:114.20px;height:9.50px;background:#fcfcfe;"></i>
<i style="left:416.60px;top:58.60px;width:114.20px;height:0.50px;background:#d8dbe6;"></i>
<b style="left:418.50px;top:52.43px;font:normal 4.95px/5.94px 'Liberation Sans',sans-serif;color:#7d7f89;">Search Solution Explorer (Ctrl+;)</b>
<svg style="position:absolute;left:518.50px;top:51.60px" width="5" height="5" viewBox="0 0 5 5"><circle cx="3" cy="2" r="1.4" fill="none" stroke="#444" stroke-width="0.7"/><path d="M2 3 L0.5 4.6" stroke="#444" stroke-width="0.8"/></svg>
<svg style="position:absolute;left:525.50px;top:53.60px" width="2.5" height="1.6" viewBox="0 0 2.5 1.6"><path d="M0 0 L2.5 0 L1.25 1.5 Z" fill="#555"/></svg>
<i style="left:416.60px;top:59.00px;width:114.20px;height:217.90px;background:#f6f7fb;"></i>
<svg style="position:absolute;left:424.00px;top:62.00px" width="5.5" height="5" viewBox="0 0 5.5 5"><rect x="0.4" y="0.4" width="4.6" height="3.6" fill="none" stroke="#444" stroke-width="0.6"/><rect x="0.4" y="0.4" width="4.6" height="1" fill="#444"/><path d="M1.5 4.6 L4 4.6" stroke="#666" stroke-width="0.5"/></svg>
<b style="left:430.80px;top:62.33px;font:normal 4.95px/5.94px 'Liberation Sans',sans-serif;color:#333;">Solution 'ClassLibrary' (2 of 2 projects)</b>
<svg style="position:absolute;left:421.80px;top:70.59px" width="3" height="3" viewBox="0 0 3 3"><path d="M2.6 0.3 L2.6 2.6 L0.3 2.6 Z" fill="#333"/></svg>
<svg style="position:absolute;left:429.00px;top:69.49px" width="6.5" height="5" viewBox="0 0 6.5 5"><rect x="0.4" y="0.4" width="5.6" height="4.2" fill="#e9ecef" stroke="#4a5a4e" stroke-width="0.7"/><path d="M1.5 2 L3 2 M1.5 3.2 L3 3.2" stroke="#444" stroke-width="0.6"/><rect x="3.8" y="1.4" width="1.5" height="2.4" fill="#3d6b4d"/></svg>
<b style="left:437.60px;top:70.09px;font:bold 4.5px/5.4px 'Liberation Sans',sans-serif;color:#111;">ClassLibrary</b>
<svg style="position:absolute;left:429.10px;top:77.88px" width="3" height="3.2" viewBox="0 0 3 3.2"><path d="M0.5 0.2 L2.7 1.6 L0.5 3.0 Z" fill="#333"/></svg>
<svg style="position:absolute;left:436.30px;top:76.98px" width="5.5" height="5.5" viewBox="0 0 5.5 5.5"><path d="M0.6 4.8 L3 2.4" stroke="#222" stroke-width="1.1"/><circle cx="3.6" cy="1.8" r="1.3" fill="#222"/></svg>
<b style="left:444.90px;top:77.31px;font:normal 4.95px/5.94px 'Liberation Sans',sans-serif;color:#222;">Properties</b>
<svg style="position:absolute;left:429.10px;top:85.37px" width="3" height="3.2" viewBox="0 0 3 3.2"><path d="M0.5 0.2 L2.7 1.6 L0.5 3.0 Z" fill="#333"/></svg>
<svg style="position:absolute;left:436.30px;top:84.47px" width="6" height="5" viewBox="0 0 6 5"><rect x="0.3" y="1.8" width="2" height="1.6" fill="#222"/><rect x="3.4" y="1.8" width="2" height="1.6" fill="#222"/><path d="M2 2.6 L3.6 2.6" stroke="#222" stroke-width="0.5"/></svg>
<b style="left:444.90px;top:84.80px;font:normal 4.95px/5.94px 'Liberation Sans',sans-serif;color:#222;">References</b>
<i style="left:417.10px;top:90.86px;width:112.70px;height:7.30px;background:#dfe1ea;"></i>
<svg style="position:absolute;left:429.10px;top:93.06px" width="3" height="3" viewBox="0 0 3 3"><path d="M2.6 0.3 L2.6 2.6 L0.3 2.6 Z" fill="#333"/></svg>
<svg style="position:absolute;left:436.30px;top:91.96px" width="6" height="5" viewBox="0 0 6 5"><path d="M0.3 0.8 L2.4 0.8 L3 1.5 L5.6 1.5 L5.6 4.5 L0.3 4.5 Z" fill="#e6d6b0"/></svg>
<b style="left:444.90px;top:92.29px;font:normal 4.95px/5.94px 'Liberation Sans',sans-serif;color:#222;">Enums</b>
<svg style="position:absolute;left:437.20px;top:100.35px" width="3" height="3.2" viewBox="0 0 3 3.2"><path d="M0.5 0.2 L2.7 1.6 L0.5 3.0 Z" fill="#333"/></svg>
<svg style="position:absolute;left:444.40px;top:99.45px" width="6" height="5" viewBox="0 0 6 5"><text x="0" y="4" font-family="Liberation Sans" font-size="4" font-weight="bold" fill="#6a8a78">C#</text></svg>
<b style="left:453.00px;top:99.78px;font:normal 4.95px/5.94px 'Liberation Sans',sans-serif;color:#222;">AdvancedStringProcessorV1.cs</b>
<svg style="position:absolute;left:437.20px;top:107.84px" width="3" height="3.2" viewBox="0 0 3 3.2"><path d="M0.5 0.2 L2.7 1.6 L0.5 3.0 Z" fill="#333"/></svg>
<svg style="position:absolute;left:444.40px;top:106.94px" width="6" height="5" viewBox="0 0 6 5"><text x="0" y="4" font-family="Liberation Sans" font-size="4" font-weight="bold" fill="#6a8a78">C#</text></svg>
<b style="left:453.00px;top:107.27px;font:normal 4.95px/5.94px 'Liberation Sans',sans-serif;color:#222;">AdvancedStringProcessorV2.cs</b>
<svg style="position:absolute;left:429.10px;top:115.33px" width="3" height="3.2" viewBox="0 0 3 3.2"><path d="M0.5 0.2 L2.7 1.6 L0.5 3.0 Z" fill="#333"/></svg>
<svg style="position:absolute;left:436.30px;top:114.43px" width="6" height="5" viewBox="0 0 6 5"><path d="M0.3 0.8 L2.4 0.8 L3 1.5 L5.6 1.5 L5.6 4.5 L0.3 4.5 Z" fill="#dcc18c"/></svg>
<b style="left:444.90px;top:114.76px;font:normal 4.95px/5.94px 'Liberation Sans',sans-serif;color:#222;">StructPerformance</b>
<svg style="position:absolute;left:429.10px;top:122.82px" width="3" height="3.2" viewBox="0 0 3 3.2"><path d="M0.5 0.2 L2.7 1.6 L0.5 3.0 Z" fill="#333"/></svg>
<svg style="position:absolute;left:436.30px;top:121.92px" width="6" height="5" viewBox="0 0 6 5"><path d="M0.3 0.8 L2.4 0.8 L3 1.5 L5.6 1.5 L5.6 4.5 L0.3 4.5 Z" fill="#dcc18c"/></svg>
<b style="left:444.90px;top:122.25px;font:normal 4.95px/5.94px 'Liberation Sans',sans-serif;color:#222;">Tasks</b>
<svg style="position:absolute;left:421.80px;top:130.51px" width="3" height="3" viewBox="0 0 3 3"><path d="M2.6 0.3 L2.6 2.6 L0.3 2.6 Z" fill="#333"/></svg>
<svg style="position:absolute;left:429.00px;top:129.41px" width="6.5" height="5" viewBox="0 0 6.5 5"><rect x="0.4" y="0.4" width="5.6" height="4.2" fill="#e9ecef" stroke="#4a5a4e" stroke-width="0.7"/><path d="M1.5 2 L3 2 M1.5 3.2 L3 3.2" stroke="#444" stroke-width="0.6"/><rect x="3.8" y="1.4" width="1.5" height="2.4" fill="#3d6b4d"/></svg>
<b style="left:437.60px;top:129.74px;font:normal 4.95px/5.94px 'Liberation Sans',sans-serif;color:#222;">ClassLibrary.Tests</b>
<svg style="position:absolute;left:429.10px;top:137.80px" width="3" height="3.2" viewBox="0 0 3 3.2"><path d="M0.5 0.2 L2.7 1.6 L0.5 3.0 Z" fill="#333"/></svg>
<svg style="position:absolute;left:436.30px;top:136.90px" width="5.5" height="5.5" viewBox="0 0 5.5 5.5"><path d="M0.6 4.8 L3 2.4" stroke="#222" stroke-width="1.1"/><circle cx="3.6" cy="1.8" r="1.3" fill="#222"/></svg>
<b style="left:444.90px;top:137.23px;font:normal 4.95px/5.94px 'Liberation Sans',sans-serif;color:#222;">Properties</b>
<svg style="position:absolute;left:429.10px;top:145.29px" width="3" height="3.2" viewBox="0 0 3 3.2"><path d="M0.5 0.2 L2.7 1.6 L0.5 3.0 Z" fill="#333"/></svg>
<svg style="position:absolute;left:436.30px;top:144.39px" width="6" height="5" viewBox="0 0 6 5"><rect x="0.3" y="1.8" width="2" height="1.6" fill="#222"/><rect x="3.4" y="1.8" width="2" height="1.6" fill="#222"/><path d="M2 2.6 L3.6 2.6" stroke="#222" stroke-width="0.5"/></svg>
<b style="left:444.90px;top:144.72px;font:normal 4.95px/5.94px 'Liberation Sans',sans-serif;color:#222;">References</b>
<svg style="position:absolute;left:429.10px;top:152.78px" width="3" height="3.2" viewBox="0 0 3 3.2"><path d="M0.5 0.2 L2.7 1.6 L0.5 3.0 Z" fill="#333"/></svg>
<svg style="position:absolute;left:436.30px;top:151.88px" width="6" height="5" viewBox="0 0 6 5"><text x="0" y="4" font-family="Liberation Sans" font-size="4" font-weight="bold" fill="#6a8a78">C#</text></svg>
<b style="left:444.90px;top:152.21px;font:normal 4.95px/5.94px 'Liberation Sans',sans-serif;color:#222;">AdvancedStringProcessorV1Should.cs</b>
<svg style="position:absolute;left:436.30px;top:159.37px" width="6" height="5.5" viewBox="0 0 6 5.5"><rect x="0.6" y="0.6" width="4.4" height="4.4" rx="1.2" fill="none" stroke="#333" stroke-width="0.7"/><path d="M2.8 0 L2.8 1.6" stroke="#333" stroke-width="0.7"/></svg>
<b style="left:444.90px;top:159.70px;font:normal 4.95px/5.94px 'Liberation Sans',sans-serif;color:#222;">App.config</b>
<svg style="position:absolute;left:436.30px;top:166.86px" width="6" height="5" viewBox="0 0 6 5"><text x="0" y="4" font-family="Liberation Sans" font-size="4" font-weight="bold" fill="#6a8a78">C#</text></svg>
<b style="left:444.90px;top:167.19px;font:normal 4.95px/5.94px 'Liberation Sans',sans-serif;color:#222;">ObjectReferenceEqualityExample.cs</b>
<svg style="position:absolute;left:436.30px;top:174.35px" width="6" height="5.5" viewBox="0 0 6 5.5"><rect x="0.6" y="0.6" width="4.4" height="4.4" rx="1.2" fill="none" stroke="#333" stroke-width="0.7"/><path d="M2.8 0 L2.8 1.6" stroke="#333" stroke-width="0.7"/></svg>
<b style="left:444.90px;top:174.68px;font:normal 4.95px/5.94px 'Liberation Sans',sans-serif;color:#222;">packages.config</b>
<svg style="position:absolute;left:429.10px;top:182.74px" width="3" height="3.2" viewBox="0 0 3 3.2"><path d="M0.5 0.2 L2.7 1.6 L0.5 3.0 Z" fill="#333"/></svg>
<svg style="position:absolute;left:436.30px;top:181.84px" width="6" height="5" viewBox="0 0 6 5"><text x="0" y="4" font-family="Liberation Sans" font-size="4" font-weight="bold" fill="#6a8a78">C#</text></svg>
<b style="left:444.90px;top:182.17px;font:normal 4.95px/5.94px 'Liberation Sans',sans-serif;color:#222;">StringProcessorShould.cs</b>
<svg style="position:absolute;left:436.30px;top:189.33px" width="6" height="5" viewBox="0 0 6 5"><text x="0" y="4" font-family="Liberation Sans" font-size="4" font-weight="bold" fill="#6a8a78">C#</text></svg>
<b style="left:444.90px;top:189.66px;font:normal 4.95px/5.94px 'Liberation Sans',sans-serif;color:#222;">StructEqualityPerformance.cs</b>
<i style="left:0.00px;top:276.90px;width:533.33px;height:12.80px;background:#5d6b99;"></i>
<i style="left:0.00px;top:276.90px;width:533.33px;height:0.90px;background:#4f5a88;"></i>
<b style="left:2.60px;top:281.38px;font:normal 4.7px/5.64px 'Liberation Sans',sans-serif;color:#eef0f8;">Test Explorer</b>
<b style="left:34.50px;top:281.38px;font:normal 4.7px/5.64px 'Liberation Sans',sans-serif;color:#eef0f8;">Error List</b>
<b style="left:58.40px;top:281.38px;font:normal 4.7px/5.64px 'Liberation Sans',sans-serif;color:#eef0f8;">Output</b>
<i style="left:0.00px;top:289.70px;width:533.33px;height:9.97px;background:#42508c;"></i>
<i style="left:0.00px;top:298.30px;width:533.33px;height:1.37px;background:#384276;"></i>
<svg style="position:absolute;left:2.50px;top:291.20px" width="6" height="6" viewBox="0 0 6 6"><path d="M1 5.5 L1 1 L5 1 L5 5 M0.2 4.3 L1 5.5 L1.8 4.3" stroke="#eef" stroke-width="0.7" fill="none"/></svg>
<b style="left:11.50px;top:292.55px;font:normal 4.75px/5.7px 'Liberation Sans',sans-serif;color:#f2f3f8;">Ready</b>
<b style="left:202.00px;top:292.60px;font:normal 4.5px/5.4px 'Liberation Sans',sans-serif;color:#f2f3f8;">Ln 13</b>
<b style="left:241.00px;top:292.60px;font:normal 4.5px/5.4px 'Liberation Sans',sans-serif;color:#f2f3f8;">Col 22</b>
<b style="left:280.00px;top:292.60px;font:normal 4.5px/5.4px 'Liberation Sans',sans-serif;color:#f2f3f8;">Ch 22</b>
<b style="left:336.00px;top:292.60px;font:normal 4.5px/5.4px 'Liberation Sans',sans-serif;color:#f2f3f8;">INS</b>
<svg style="position:absolute;left:449.00px;top:291.60px" width="4" height="5" viewBox="0 0 4 5"><path d="M2 0.3 L3.8 2.3 L2.6 2.3 L2.6 4.8 L1.4 4.8 L1.4 2.3 L0.2 2.3 Z" fill="#f2f3f8"/></svg>
<b style="left:455.50px;top:292.40px;font:normal 5.0px/6.0px 'Liberation Sans',sans-serif;color:#f2f3f8;">Add to Source Control</b>
<svg style="position:absolute;left:507.00px;top:293.50px" width="3" height="2" viewBox="0 0 3 2"><path d="M0 0 L3 0 L1.5 1.8 Z" fill="#f2f3f8"/></svg>
<svg style="position:absolute;left:519.00px;top:291.00px" width="5" height="6" viewBox="0 0 5 6"><path d="M2.5 0.3 Q4.3 0.8 4.3 3 L4.8 4.5 L0.2 4.5 L0.7 3 Q0.7 0.8 2.5 0.3 Z M1.8 5 L3.2 5 L2.5 5.8 Z" fill="#f2f3f8"/></svg>
<div style="left:3.0px;top:47.6px;width:402.20px;height:221.20px;overflow:hidden">
<b style="left:30.30px;top:-5.31px;font:normal 6.62px/9.42px 'Liberation Mono',monospace" class="cd"><span style="color:#a8a8ac">using System;</span></b>
<b style="left:30.30px;top:4.11px;font:normal 6.62px/9.42px 'Liberation Mono',monospace" class="cd"><span style="color:#a8a8ac">using System.Collections.Generic;</span></b>
<b style="left:30.30px;top:13.53px;font:normal 6.62px/9.42px 'Liberation Mono',monospace" class="cd"><span style="color:#a8a8ac">using System.Linq;</span></b>
<b style="left:30.30px;top:22.95px;font:normal 6.62px/9.42px 'Liberation Mono',monospace" class="cd"><span style="color:#a8a8ac">using System.Text;</span></b>
<b style="left:30.30px;top:32.37px;font:normal 6.62px/9.42px 'Liberation Mono',monospace" class="cd"><span style="color:#a8a8ac">using System.Threading.Tasks;</span></b>
<b style="left:30.30px;top:41.79px;font:normal 6.62px/9.42px 'Liberation Mono',monospace" class="cd"></b>
<b style="left:30.30px;top:51.21px;font:normal 6.62px/9.42px 'Liberation Mono',monospace" class="cd"><span style="color:#262a40">namespace</span> <span style="color:#202020">ClassLibrary</span><span style="color:#202020">.</span><span style="color:#202020">Enums</span></b>
<i style="left:21.00px;top:59.03px;width:1.9px;height:9.42px;background:#e8e87a"></i>
<b style="left:30.30px;top:60.63px;font:normal 6.62px/9.42px 'Liberation Mono',monospace" class="cd"><span style="color:#202020">{</span></b>
<b style="left:46.18px;top:71.16px;font:normal 4.6px/6px 'Liberation Sans',sans-serif;letter-spacing:0.5px;color:#a2a2aa">0 references</b>
<i style="left:21.00px;top:68.45px;width:1.9px;height:16.62px;background:#e8e87a"></i>
<b style="left:30.30px;top:77.25px;font:normal 6.62px/9.42px 'Liberation Mono',monospace" class="cd">    <span style="color:#262a40">public</span> <span style="color:#262a40">enum</span> <span style="color:#93acb0">StringProcessingOptionsV2</span></b>
<i style="left:21.00px;top:85.07px;width:1.9px;height:9.42px;background:#e8e87a"></i>
<b style="left:30.30px;top:86.67px;font:normal 6.62px/9.42px 'Liberation Mono',monospace" class="cd">    <span style="color:#202020">{</span></b>
<i style="left:21.00px;top:94.49px;width:1.9px;height:9.42px;background:#e8e87a"></i>
<b style="left:30.30px;top:96.09px;font:normal 6.62px/9.42px 'Liberation Mono',monospace" class="cd">        <span style="color:#202020">None</span> <span style="color:#202020">=</span> <span style="color:#202020">0</span><span style="color:#202020">,</span></b>
<i style="left:21.00px;top:103.91px;width:1.9px;height:9.42px;background:#e8e87a"></i>
<b style="left:30.30px;top:105.51px;font:normal 6.62px/9.42px 'Liberation Mono',monospace" class="cd">        <span style="color:#202020">ConvertToUppercase</span> <span style="color:#202020">=</span> <span style="color:#202020">1</span><span style="color:#202020">,</span></b>
<i style="left:21.00px;top:113.33px;width:1.9px;height:9.42px;background:#e8e87a"></i>
<i style="left:28.50px;top:113.33px;width:372.50px;height:9.42px;border:0.6px solid #e2e2e6;box-sizing:border-box"></i>
<b style="left:30.30px;top:114.93px;font:normal 6.62px/9.42px 'Liberation Mono',monospace" class="cd">        <span style="color:#202020">AddLength</span> <span style="color:#202020">=</span> <span style="color:#202020">2</span></b>
<i style="left:21.00px;top:122.75px;width:1.9px;height:9.42px;background:#e8e87a"></i>
<b style="left:30.30px;top:124.35px;font:normal 6.62px/9.42px 'Liberation Mono',monospace" class="cd">    <span style="color:#202020">}</span></b>
<b style="left:46.18px;top:134.88px;font:normal 4.6px/6px 'Liberation Sans',sans-serif;letter-spacing:0.5px;color:#a2a2aa">0 references</b>
<b style="left:30.30px;top:140.97px;font:normal 6.62px/9.42px 'Liberation Mono',monospace" class="cd">    <span style="color:#262a40">class</span> <span style="color:#93acb0">AdvancedStringProcessorV2</span></b>
<b style="left:30.30px;top:150.39px;font:normal 6.62px/9.42px 'Liberation Mono',monospace" class="cd">    <span style="color:#202020">{</span></b>
<b style="left:30.30px;top:159.81px;font:normal 6.62px/9.42px 'Liberation Mono',monospace" class="cd">    <span style="color:#202020">}</span></b>
<b style="left:30.30px;top:169.23px;font:normal 6.62px/9.42px 'Liberation Mono',monospace" class="cd"><span style="color:#202020">}</span></b>
</div>
<i style="left:30.00px;top:47.60px;width:0.60px;height:39.48px;background:#b0b0b8;"></i>
<i style="left:30.00px;top:86.68px;width:1.80px;height:0.60px;background:#b0b0b8;"></i>
<i style="left:30.00px;top:101.92px;width:0.60px;height:121.02px;background:#b0b0b8;"></i>
<i style="left:30.00px;top:222.54px;width:1.80px;height:0.60px;background:#b0b0b8;"></i>
<i style="left:28.3px;top:99.92px;width:4px;height:4px;background:#fff;border:0.6px solid #a0a0a8;box-sizing:border-box"></i>
<i style="left:29.30px;top:101.62px;width:2.00px;height:0.60px;background:#777;"></i>
<i style="left:28.3px;top:125.96px;width:4px;height:4px;background:#fff;border:0.6px solid #a0a0a8;box-sizing:border-box"></i>
<i style="left:29.30px;top:127.66px;width:2.00px;height:0.60px;background:#777;"></i>
<i style="left:28.3px;top:189.68px;width:4px;height:4px;background:#fff;border:0.6px solid #a0a0a8;box-sizing:border-box"></i>
<i style="left:29.30px;top:191.38px;width:2.00px;height:0.60px;background:#777;"></i>
<i style="left:116.50px;top:162.34px;width:0.60px;height:8.00px;background:#111;"></i>
<svg style="position:absolute;left:109.50px;top:112.10px" width="3" height="8.4" viewBox="0 0 3 8.4"><path d="M0.3 0.4 L1.2 0.4 L1.5 0.8 L1.8 0.4 L2.7 0.4 M1.5 0.8 L1.5 7.6 M0.3 8.0 L1.2 8.0 L1.5 7.6 L1.8 8.0 L2.7 8.0" stroke="#333" stroke-width="0.6" fill="none"/></svg>
<svg style="position:absolute;left:13.00px;top:162.64px" width="6" height="6" viewBox="0 0 6 6"><path d="M0.8 5.2 L4.8 1.2" stroke="#555" stroke-width="1.2"/></svg>
<i style="left:405.20px;top:47.60px;width:7.80px;height:221.20px;background:#f4f4f6;"></i>
<i style="left:405.20px;top:47.60px;width:0.50px;height:221.20px;background:#e4e4ea;"></i>
<svg style="position:absolute;left:406.60px;top:49.20px" width="5.5" height="5.5" viewBox="0 0 5.5 5.5"><path d="M2.75 0.3 L2.75 5.2 M0.3 2.75 L5.2 2.75" stroke="#222" stroke-width="1.0"/></svg>
<i style="left:405.70px;top:55.20px;width:7.30px;height:0.50px;background:#999;"></i>
<svg style="position:absolute;left:407.70px;top:57.40px" width="3" height="2" viewBox="0 0 3 2"><path d="M0 1.8 L3 1.8 L1.5 0 Z" fill="#888"/></svg>
<i style="left:408.50px;top:60.30px;width:3.60px;height:106.70px;background:#c6c7cc;"></i>
<svg style="position:absolute;left:407.70px;top:264.30px" width="3" height="2" viewBox="0 0 3 2"><path d="M0 0 L3 0 L1.5 1.8 Z" fill="#888"/></svg>
<i style="left:405.80px;top:90.00px;width:2.60px;height:27.00px;background:#ecebb0;"></i>
<i style="left:405.80px;top:118.30px;width:6.80px;height:1.00px;background:#555;"></i>
<i style="left:3.00px;top:268.80px;width:410.00px;height:8.10px;background:#eeeff3;"></i>
<b style="left:4.80px;top:270.89px;font:normal 4.6px/5.52px 'Liberation Sans',sans-serif;color:#444;">133 %</b>
<svg style="position:absolute;left:24.00px;top:271.20px" width="2.5" height="1.6" viewBox="0 0 2.5 1.6"><path d="M0 0 L2.5 0 L1.25 1.5 Z" fill="#555"/></svg>
<i style="left:30.00px;top:269.40px;width:0.50px;height:6.90px;background:#d6d8e0;"></i>
<svg style="position:absolute;left:37.50px;top:270.20px" width="4" height="4" viewBox="0 0 4 4"><circle cx="2" cy="2" r="1.7" fill="#5aa55a"/><path d="M1 2 L1.8 2.8 L3 1.2" stroke="#fff" stroke-width="0.5" fill="none"/></svg>
<b style="left:44.50px;top:270.77px;font:normal 4.8px/5.76px 'Liberation Sans',sans-serif;color:#222;">No issues found</b>
<svg style="position:absolute;left:111.00px;top:270.00px" width="4" height="4" viewBox="0 0 4 4"><circle cx="2" cy="2" r="1.5" fill="none" stroke="#555" stroke-width="0.6"/></svg>
<svg style="position:absolute;left:117.50px;top:271.20px" width="2.5" height="1.6" viewBox="0 0 2.5 1.6"><path d="M0 0 L2.5 0 L1.25 1.5 Z" fill="#555"/></svg>
<i style="left:124.50px;top:269.40px;width:0.50px;height:6.90px;background:#d6d8e0;"></i>
<svg style="position:absolute;left:131.00px;top:270.80px" width="2" height="2.5" viewBox="0 0 2 2.5"><path d="M2 0 L0 1.25 L2 2.5 Z" fill="#777"/></svg>
<i style="left:137.00px;top:270.20px;width:220.70px;height:3.40px;background:#c4c5cb;"></i>
<svg style="position:absolute;left:400.00px;top:270.80px" width="2" height="2.5" viewBox="0 0 2 2.5"><path d="M0 0 L2 1.25 L0 2.5 Z" fill="#777"/></svg>
<i style="left:505.0px;top:267.0px;width:14px;height:14px;border-radius:50%;background:rgba(140,140,150,0.28)"></i>
</div>
<div class="tile" style="left:533.333px;top:299.667px">
<i style="left:0.00px;top:0.00px;width:533.33px;height:27.70px;background:#d2d8ee;"></i>
<i style="left:0.00px;top:25.90px;width:533.33px;height:1.50px;background:#dce1f4;"></i>
<svg style="position:absolute;left:4.00px;top:2.00px" width="11" height="10" viewBox="0 0 11 10"><rect x="1.0" y="2.4" width="2.1" height="4.4" fill="#5b4596"/><path d="M3 4.6 L5.2 4.6" stroke="#6a48b0" stroke-width="1.2"/><path d="M5.3 4.6 L9.0 1.4 L9.0 7.8 Z" fill="#c6a8ee" stroke="#6a3cb4" stroke-width="1.5" stroke-linejoin="round"/></svg>
<b style="left:18.00px;top:4.46px;font:normal 4.9px/5.88px 'Liberation Sans',sans-serif;color:#1e1e28;">File</b>
<b style="left:33.00px;top:4.46px;font:normal 4.9px/5.88px 'Liberation Sans',sans-serif;color:#1e1e28;">Edit</b>
<b style="left:51.00px;top:4.46px;font:normal 4.9px/5.88px 'Liberation Sans',sans-serif;color:#1e1e28;">View</b>
<b style="left:70.00px;top:4.46px;font:normal 4.9px/5.88px 'Liberation Sans',sans-serif;color:#1e1e28;">Project</b>
<b style="left:93.00px;top:4.46px;font:normal 4.9px/5.88px 'Liberation Sans',sans-serif;color:#1e1e28;">Build</b>
<b style="left:113.00px;top:4.46px;font:normal 4.9px/5.88px 'Liberation Sans',sans-serif;color:#1e1e28;">Debug</b>
<b style="left:136.00px;top:4.46px;font:normal 4.9px/5.88px 'Liberation Sans',sans-serif;color:#1e1e28;">Test</b>
<b style="left:152.00px;top:4.46px;font:normal 4.9px/5.88px 'Liberation Sans',sans-serif;color:#1e1e28;">Analyze</b>
<b style="left:178.00px;top:4.46px;font:normal 4.9px/5.88px 'Liberation Sans',sans-serif;color:#1e1e28;">Tools</b>
<b style="left:197.00px;top:4.46px;font:normal 4.9px/5.88px 'Liberation Sans',sans-serif;color:#1e1e28;">Extensions</b>
<b style="left:229.00px;top:4.46px;font:normal 4.9px/5.88px 'Liberation Sans',sans-serif;color:#1e1e28;">Window</b>
<b style="left:255.00px;top:4.46px;font:normal 4.9px/5.88px 'Liberation Sans',sans-serif;color:#1e1e28;">Help</b>
<i style="left:275.00px;top:2.40px;width:91.00px;height:8.40px;background:#fdfdfe;"></i>
<b style="left:277.50px;top:4.49px;font:normal 4.85px/5.82px 'Liberation Sans',sans-serif;color:#6a6c78;">Search (Ctrl+Q)</b>
<svg style="position:absolute;left:357.00px;top:3.80px" width="6" height="6" viewBox="0 0 6 6"><circle cx="3.6" cy="2.4" r="1.6" fill="none" stroke="#444" stroke-width="0.8"/><path d="M2.5 3.5 L0.8 5.2" stroke="#444" stroke-width="0.9"/></svg>
<i style="left:371.00px;top:2.00px;width:37.00px;height:9.00px;background:#d9def2;"></i>
<b style="left:377.00px;top:4.58px;font:normal 4.7px/5.64px 'Liberation Sans',sans-serif;color:#4a4c58;">ClassLibrary</b>
<svg style="position:absolute;left:459.00px;top:2.50px" width="7" height="8.5" viewBox="0 0 7 8.5"><circle cx="3.5" cy="2.6" r="1.7" fill="none" stroke="#333" stroke-width="0.8"/><path d="M0.8 8 Q3.5 4.3 6.2 8 Z" fill="#333"/></svg>
<i style="left:483.00px;top:6.60px;width:4.50px;height:0.45px;background:#8a8e9c;"></i>
<svg style="position:absolute;left:501.50px;top:4.00px" width="5" height="5" viewBox="0 0 5 5"><path d="M1.3 0.6 L4.4 0.6 L4.4 3.7 M0.6 1.4 L3.6 1.4 L3.6 4.4 L0.6 4.4 Z" stroke="#777b88" stroke-width="0.55" fill="none"/></svg>
<svg style="position:absolute;left:521.00px;top:4.30px" width="5" height="5" viewBox="0 0 5 5"><path d="M0.5 0.5 L4.5 4.5 M4.5 0.5 L0.5 4.5" stroke="#8a8e9c" stroke-width="0.55"/></svg>
<i style="left:6.30px;top:14.50px;width:0.60px;height:10.00px;background:#b9bfd6;"></i>
<svg style="position:absolute;left:10.00px;top:16.20px" width="6" height="6" viewBox="0 0 6 6"><circle cx="3" cy="3" r="2" fill="none" stroke="#1d3a6e" stroke-width="1.2"/><path d="M1.6 3 L4.2 3" stroke="#1d3a6e" stroke-width="0.8"/></svg>
<i style="left:20.00px;top:18.80px;width:1.30px;height:1.10px;background:#444;border-radius:0"></i>
<svg style="position:absolute;left:24.50px;top:16.20px" width="6" height="6" viewBox="0 0 6 6"><circle cx="3" cy="3" r="2" fill="none" stroke="#c0c6dc" stroke-width="1.1"/></svg>
<i style="left:33.50px;top:15.50px;width:0.50px;height:8.00px;background:#c3c8dc;"></i>
<svg style="position:absolute;left:36.50px;top:15.60px" width="7" height="7" viewBox="0 0 7 7"><rect x="1" y="2.2" width="4.4" height="3.8" fill="none" stroke="#4a4e60" stroke-width="1"/><path d="M4.5 0.3 L5.2 1.7 L6.6 2.2 L5.2 2.7" fill="#4a4e60"/></svg>
<i style="left:46.80px;top:18.80px;width:1.30px;height:1.10px;background:#444;border-radius:0"></i>
<svg style="position:absolute;left:50.80px;top:15.80px" width="7" height="7" viewBox="0 0 7 7"><path d="M0.5 2 L2.5 2 L3 2.8 L6 2.8 L6 6.3 L0.5 6.3 Z" fill="#d8b8b0"/><path d="M3.5 0.5 L5.5 1.5" stroke="#b89890" stroke-width="0.8"/></svg>
<svg style="position:absolute;left:61.00px;top:16.30px" width="6" height="6" viewBox="0 0 6 6"><path d="M0.4 0.4 L4.6 0.4 L5.6 1.4 L5.6 5.6 L0.4 5.6 Z" fill="#1d3468"/><rect x="1.6" y="0.4" width="2.6" height="1.8" fill="#d9ddef"/></svg>
<svg style="position:absolute;left:69.50px;top:15.60px" width="7" height="7" viewBox="0 0 7 7"><path d="M2.4 0.3 L6.6 0.3 L6.6 4.3 L2.4 4.3 Z" fill="#4a5d8f"/><path d="M0.3 2.6 L4.5 2.6 L4.5 6.6 L0.3 6.6 Z" fill="#1d3468"/></svg>
<svg style="position:absolute;left:80.50px;top:16.20px" width="7" height="6" viewBox="0 0 7 6"><path d="M1.5 2.5 Q4 0.3 5.8 2.5 Q6.5 4.5 4 5.6" fill="none" stroke="#1d3468" stroke-width="1.1"/><path d="M0.4 1 L1.4 3.4 L3.4 2.2 Z" fill="#1d3468"/></svg>
<i style="left:92.00px;top:18.80px;width:1.30px;height:1.10px;background:#444;border-radius:0"></i>
<svg style="position:absolute;left:97.50px;top:16.20px" width="7" height="6" viewBox="0 0 7 6"><path d="M5.5 2.5 Q3 0.3 1.2 2.5 Q0.5 4.5 3 5.6" fill="none" stroke="#c3c8dc" stroke-width="1.1"/><path d="M6.6 1 L5.6 3.4 L3.6 2.2 Z" fill="#c3c8dc"/></svg>
<i style="left:106.20px;top:18.90px;width:1.80px;height:0.60px;background:#c3c8dc;"></i>
<i style="left:106.80px;top:18.30px;width:0.60px;height:1.80px;background:#c3c8dc;"></i>
<i style="left:111.00px;top:15.00px;width:0.50px;height:8.50px;background:#b9bfd6;"></i>
<i style="left:114.00px;top:15.00px;width:27.00px;height:8.50px;background:#fbfbfd;"></i>
<b style="left:116.50px;top:17.44px;font:normal 4.6px/5.52px 'Liberation Sans',sans-serif;color:#333;">Debug</b>
<svg style="position:absolute;left:137.00px;top:18.40px" width="3" height="2" viewBox="0 0 3 2"><path d="M0 0 L3 0 L1.5 1.8 Z" fill="#333"/></svg>
<i style="left:143.50px;top:15.00px;width:46.50px;height:8.50px;background:#fbfbfd;"></i>
<b style="left:146.00px;top:17.44px;font:normal 4.6px/5.52px 'Liberation Sans',sans-serif;color:#444;">Any CPU</b>
<svg style="position:absolute;left:186.00px;top:18.40px" width="3" height="2" viewBox="0 0 3 2"><path d="M0 0 L3 0 L1.5 1.8 Z" fill="#333"/></svg>
<svg style="position:absolute;left:194.50px;top:16.70px" width="4" height="5" viewBox="0 0 4 5"><path d="M0 0 L3.5 2.5 L0 5 Z" fill="#2c7a3c"/></svg>
<b style="left:201.00px;top:17.34px;font:normal 4.6px/5.52px 'Liberation Sans',sans-serif;color:#333;">Start</b>
<svg style="position:absolute;left:214.00px;top:18.60px" width="3" height="2" viewBox="0 0 3 2"><path d="M0 0 L3 0 L1.5 1.8 Z" fill="#333"/></svg>
<i style="left:220.00px;top:15.00px;width:0.50px;height:8.50px;background:#b9bfd6;"></i>
<svg style="position:absolute;left:222.50px;top:16.20px" width="7" height="6" viewBox="0 0 7 6"><path d="M0.5 5.5 L3 1 L6 1 L6 3.5 L3 5.5 Z" fill="#c9b08a"/><path d="M0.5 5.5 L3 3.5" stroke="#555" stroke-width="0.6"/></svg>
<i style="left:231.30px;top:20.60px;width:1.30px;height:1.30px;background:#333;border-radius:0"></i>
<svg style="position:absolute;left:240.00px;top:16.00px" width="7" height="6.5" viewBox="0 0 7 6.5"><path d="M0.6 0.5 L0.6 5.8 M2.2 2 L2.2 5.8 M2.2 2.3 L4.6 2.3 L4.6 5.8" stroke="#3f4660" stroke-width="0.9" fill="none"/></svg>
<svg style="position:absolute;left:250.00px;top:15.80px" width="7" height="7" viewBox="0 0 7 7"><path d="M0.8 1 L6.2 1 M0.8 2.6 L3 2.6 M4 2.6 L6.2 2.6 M2.2 1 L2.2 6.3 M4.6 2.6 L4.6 6.3" stroke="#454c64" stroke-width="0.9" fill="none"/></svg>
<i style="left:259.50px;top:15.50px;width:0.50px;height:8.00px;background:#c3c8dc;"></i>
<svg style="position:absolute;left:263.50px;top:16.20px" width="6" height="6" viewBox="0 0 6 6"><path d="M0.5 1 L5.5 1 M3 1 L3 5.6" stroke="#5b6275" stroke-width="1.0" fill="none"/></svg>
<svg style="position:absolute;left:272.00px;top:16.20px" width="7" height="6" viewBox="0 0 7 6"><path d="M0.5 1 L3 1 M1.7 1 L1.7 5 M3.5 3 L6.5 5.5 M4 5.5 L6.5 5.5" stroke="#6d7389" stroke-width="0.9" fill="none"/></svg>
<i style="left:281.50px;top:15.50px;width:0.50px;height:8.00px;background:#c3c8dc;"></i>
<svg style="position:absolute;left:285.00px;top:16.00px" width="5" height="6.5" viewBox="0 0 5 6.5"><path d="M0.5 0.3 L4.5 0.3 L4.5 6.2 L2.5 4.6 L0.5 6.2 Z" fill="#1f2640"/></svg>
<svg style="position:absolute;left:294.00px;top:16.00px" width="6" height="6.5" viewBox="0 0 6 6.5"><path d="M0.5 0.5 L4 0.5 L4 5.5 L2.2 4.2 L0.5 5.5 Z" fill="none" stroke="#c3c8dc" stroke-width="0.8"/></svg>
<svg style="position:absolute;left:303.00px;top:16.00px" width="6" height="6.5" viewBox="0 0 6 6.5"><path d="M0.5 0.5 L4 0.5 L4 5.5 L2.2 4.2 L0.5 5.5 Z" fill="none" stroke="#c3c8dc" stroke-width="0.8"/></svg>
<svg style="position:absolute;left:312.00px;top:16.00px" width="6" height="6.5" viewBox="0 0 6 6.5"><path d="M0.5 0.5 L4 0.5 L4 5.5 L2.2 4.2 L0.5 5.5 Z" fill="none" stroke="#c3c8dc" stroke-width="0.8"/></svg>
<i style="left:321.00px;top:20.60px;width:1.30px;height:1.30px;background:#333;border-radius:0"></i>
<svg style="position:absolute;left:478.50px;top:16.30px" width="7" height="6.5" viewBox="0 0 7 6.5"><path d="M0.5 6 L5.5 6 M1.2 4.8 Q2 1.6 4.8 1.8 M3.8 0.6 L5.2 1.8 L3.8 3" stroke="#333" stroke-width="0.7" fill="none"/></svg>
<b style="left:486.00px;top:17.58px;font:normal 4.7px/5.64px 'Liberation Sans',sans-serif;color:#333;">Live Share</b>
<svg style="position:absolute;left:519.00px;top:15.50px" width="6" height="8" viewBox="0 0 6 8"><path d="M1 1 L5 1 M1 3 L4 3 M1 1 L1 7 M3 5 L5 7" stroke="#444" stroke-width="0.7" fill="none"/></svg>
<i style="left:0.00px;top:27.70px;width:533.33px;height:249.20px;background:#5d6b99;"></i>
<i style="left:3.00px;top:30.60px;width:88.80px;height:7.70px;background:#f5e29c;"></i>
<b style="left:4.40px;top:32.29px;font:normal 4.85px/5.82px 'Liberation Sans',sans-serif;color:#2e2a1c;">AdvancedStringProcessorV2.cs*</b>
<svg style="position:absolute;left:78.80px;top:33.00px" width="3" height="3" viewBox="0 0 3 3"><path d="M0.5 1.5 L2.5 1.5 M1.5 0.5 L1.5 2.5" stroke="#6b6248" stroke-width="0.6"/></svg>
<svg style="position:absolute;left:85.30px;top:32.60px" width="3.6" height="3.6" viewBox="0 0 3.6 3.6"><path d="M0.4 0.4 L3.2 3.2 M3.2 0.4 L0.4 3.2" stroke="#7a5a30" stroke-width="0.7"/></svg>
<svg style="position:absolute;left:408.80px;top:33.30px" width="3" height="2" viewBox="0 0 3 2"><path d="M0 0 L3 0 L1.5 1.8 Z" fill="#aab2d0"/></svg>
<i style="left:3.00px;top:38.30px;width:410.00px;height:9.10px;background:#fdfdfe;"></i>
<i style="left:3.00px;top:46.80px;width:410.00px;height:0.60px;background:#c9ccd6;"></i>
<i style="left:138.70px;top:38.30px;width:0.60px;height:9.10px;background:#c9ccd6;"></i>
<i style="left:276.70px;top:38.30px;width:0.60px;height:9.10px;background:#c9ccd6;"></i>
<i style="left:4.60px;top:40.00px;width:5.60px;height:5.00px;background:#e8ece8;border:0.8px solid #35503f;box-sizing:border-box"></i>
<b style="left:12.00px;top:41.18px;font:normal 4.7px/5.64px 'Liberation Sans',sans-serif;color:#222;width:120px;overflow:hidden">ClassLibrary</b>
<svg style="position:absolute;left:134.00px;top:42.30px" width="3" height="2" viewBox="0 0 3 2"><path d="M0 0 L3 0 L1.5 1.8 Z" fill="#333"/></svg>
<svg style="position:absolute;left:141.00px;top:40.30px" width="4.5" height="4.5" viewBox="0 0 4.5 4.5"><path d="M0.5 3.5 L2 2 L0.5 0.5" stroke="#8a6a30" stroke-width="0.6" fill="none"/><rect x="2.5" y="2" width="2" height="2" fill="#998"/></svg>
<b style="left:148.30px;top:41.12px;font:normal 4.8px/5.76px 'Liberation Sans',sans-serif;color:#333;width:122px;overflow:hidden">ClassLibrary.Enums.AdvancedStringProcessorV2</b>
<svg style="position:absolute;left:272.00px;top:42.30px" width="3" height="2" viewBox="0 0 3 2"><path d="M0 0 L3 0 L1.5 1.8 Z" fill="#333"/></svg>
<svg style="position:absolute;left:279.00px;top:40.50px" width="4" height="4" viewBox="0 0 4 4"><circle cx="2" cy="2" r="1.4" fill="none" stroke="#555" stroke-width="0.6"/></svg>
<b style="left:285.70px;top:41.12px;font:normal 4.8px/5.76px 'Liberation Sans',sans-serif;color:#333;width:119px;overflow:hidden">Process(List&lt;string&gt; stringsToProcess, StringProcessingOptionsV2 options)</b>
<svg style="position:absolute;left:409.00px;top:42.30px" width="3" height="2" viewBox="0 0 3 2"><path d="M0 0 L3 0 L1.5 1.8 Z" fill="#333"/></svg>
<i style="left:3.00px;top:47.60px;width:410.00px;height:221.20px;background:#ffffff;"></i>
<i style="left:3.00px;top:47.60px;width:9.00px;height:221.20px;background:#f0f0f2;"></i>
<i style="left:9.00px;top:47.60px;width:3.00px;height:221.20px;background:#f7f7f9;"></i>
<i style="left:416.60px;top:29.20px;width:114.20px;height:9.20px;background:#44548e;"></i>
<b style="left:418.50px;top:32.49px;font:normal 4.85px/5.82px 'Liberation Sans',sans-serif;color:#f0f2fa;">Solution Explorer</b>
<svg style="position:absolute;left:512.50px;top:32.20px" width="3" height="2.5" viewBox="0 0 3 2.5"><path d="M0 0 L3 0 L1.5 1.8 Z" fill="#dde"/></svg>
<svg style="position:absolute;left:518.50px;top:31.20px" width="4" height="4.5" viewBox="0 0 4 4.5"><path d="M2 0.3 L2 4.2 M0.3 2.6 L3.7 2.6 M0.8 0.5 L3.2 0.5" stroke="#dde" stroke-width="0.6"/></svg>
<svg style="position:absolute;left:524.50px;top:31.50px" width="4" height="4" viewBox="0 0 4 4"><path d="M0.4 0.4 L3.6 3.6 M3.6 0.4 L0.4 3.6" stroke="#dde" stroke-width="0.6"/></svg>
<i style="left:416.60px;top:38.50px;width:114.20px;height:11.00px;background:#cdd5ee;"></i>
<div style="left:0;top:1px">
<i style="left:421.50px;top:41.60px;width:4.40px;height:4.40px;background:#c7cde2;border-radius:50%"></i>
<i style="left:430.00px;top:41.60px;width:4.40px;height:4.40px;background:#c7cde2;border-radius:50%"></i>
<svg style="position:absolute;left:438.50px;top:41.00px" width="6" height="5" viewBox="0 0 6 5"><path d="M0.5 2.6 L3 0.3 L5.5 2.6 M1.2 2.4 L1.2 4.8 L4.8 4.8 L4.8 2.4" stroke="#333" stroke-width="0.8" fill="none"/></svg>
<i style="left:447.50px;top:41.60px;width:4.40px;height:4.40px;background:#8a8fa3;"></i>
<svg style="position:absolute;left:456.50px;top:43.40px" width="2.5" height="1.6" viewBox="0 0 2.5 1.6"><path d="M0 0 L2.5 0 L1.25 1.5 Z" fill="#444"/></svg>
<i style="left:461.00px;top:40.20px;width:0.50px;height:7.60px;background:#aeb5cc;"></i>
<svg style="position:absolute;left:464.50px;top:41.00px" width="6" height="5.5" viewBox="0 0 6 5.5"><path d="M1 1 Q4.5 0.5 4.8 4" stroke="#555" stroke-width="0.8" fill="none"/><circle cx="2" cy="4" r="1" fill="#555"/></svg>
<svg style="position:absolute;left:473.00px;top:43.40px" width="2.5" height="1.6" viewBox="0 0 2.5 1.6"><path d="M0 0 L2.5 0 L1.25 1.5 Z" fill="#444"/></svg>
<svg style="position:absolute;left:479.50px;top:41.00px" width="5" height="5" viewBox="0 0 5 5"><path d="M0.5 0.5 L4 4 M2 4.3 L4.3 4.3 L4.3 2" stroke="#333" stroke-width="0.8" fill="none"/></svg>
<svg style="position:absolute;left:488.30px;top:40.90px" width="5" height="5.5" viewBox="0 0 5 5.5"><path d="M4 1.4 A2 2 0 1 0 4.3 3.6" stroke="#1e4a8a" stroke-width="1.0" fill="none"/></svg>
<svg style="position:absolute;left:497.00px;top:41.20px" width="5" height="5" viewBox="0 0 5 5"><path d="M0.8 4.2 L4.2 0.8" stroke="#222" stroke-width="1.2"/></svg>
<svg style="position:absolute;left:505.50px;top:40.90px" width="5.5" height="5.5" viewBox="0 0 5.5 5.5"><circle cx="2.7" cy="2.9" r="2" fill="none" stroke="#333" stroke-width="0.8"/><rect x="0.5" y="0.3" width="2" height="2" fill="#333"/></svg>
</div>
<i style="left:416.60px;top:49.50px;width:114.20px;height:9.50px;background:#fcfcfe;"></i>
<i style="left:416.60px;top:58.60px;width:114.20px;height:0.50px;background:#d8dbe6;"></i>
<b style="left:418.50px;top:52.43px;font:normal 4.95px/5.94px 'Liberation Sans',sans-serif;color:#7d7f89;">Search Solution Explorer (Ctrl+;)</b>
<svg style="position:absolute;left:518.50px;top:51.60px" width="5" height="5" viewBox="0 0 5 5"><circle cx="3" cy="2" r="1.4" fill="none" stroke="#444" stroke-width="0.7"/><path d="M2 3 L0.5 4.6" stroke="#444" stroke-width="0.8"/></svg>
<svg style="position:absolute;left:525.50px;top:53.60px" width="2.5" height="1.6" viewBox="0 0 2.5 1.6"><path d="M0 0 L2.5 0 L1.25 1.5 Z" fill="#555"/></svg>
<i style="left:416.60px;top:59.00px;width:114.20px;height:217.90px;background:#f6f7fb;"></i>
<svg style="position:absolute;left:424.00px;top:62.00px" width="5.5" height="5" viewBox="0 0 5.5 5"><rect x="0.4" y="0.4" width="4.6" height="3.6" fill="none" stroke="#444" stroke-width="0.6"/><rect x="0.4" y="0.4" width="4.6" height="1" fill="#444"/><path d="M1.5 4.6 L4 4.6" stroke="#666" stroke-width="0.5"/></svg>
<b style="left:430.80px;top:62.33px;font:normal 4.95px/5.94px 'Liberation Sans',sans-serif;color:#333;">Solution 'ClassLibrary' (2 of 2 projects)</b>
<svg style="position:absolute;left:421.80px;top:70.59px" width="3" height="3" viewBox="0 0 3 3"><path d="M2.6 0.3 L2.6 2.6 L0.3 2.6 Z" fill="#333"/></svg>
<svg style="position:absolute;left:429.00px;top:69.49px" width="6.5" height="5" viewBox="0 0 6.5 5"><rect x="0.4" y="0.4" width="5.6" height="4.2" fill="#e9ecef" stroke="#4a5a4e" stroke-width="0.7"/><path d="M1.5 2 L3 2 M1.5 3.2 L3 3.2" stroke="#444" stroke-width="0.6"/><rect x="3.8" y="1.4" width="1.5" height="2.4" fill="#3d6b4d"/></svg>
<b style="left:437.60px;top:70.09px;font:bold 4.5px/5.4px 'Liberation Sans',sans-serif;color:#111;">ClassLibrary</b>
<svg style="position:absolute;left:429.10px;top:77.88px" width="3" height="3.2" viewBox="0 0 3 3.2"><path d="M0.5 0.2 L2.7 1.6 L0.5 3.0 Z" fill="#333"/></svg>
<svg style="position:absolute;left:436.30px;top:76.98px" width="5.5" height="5.5" viewBox="0 0 5.5 5.5"><path d="M0.6 4.8 L3 2.4" stroke="#222" stroke-width="1.1"/><circle cx="3.6" cy="1.8" r="1.3" fill="#222"/></svg>
<b style="left:444.90px;top:77.31px;font:normal 4.95px/5.94px 'Liberation Sans',sans-serif;color:#222;">Properties</b>
<svg style="position:absolute;left:429.10px;top:85.37px" width="3" height="3.2" viewBox="0 0 3 3.2"><path d="M0.5 0.2 L2.7 1.6 L0.5 3.0 Z" fill="#333"/></svg>
<svg style="position:absolute;left:436.30px;top:84.47px" width="6" height="5" viewBox="0 0 6 5"><rect x="0.3" y="1.8" width="2" height="1.6" fill="#222"/><rect x="3.4" y="1.8" width="2" height="1.6" fill="#222"/><path d="M2 2.6 L3.6 2.6" stroke="#222" stroke-width="0.5"/></svg>
<b style="left:444.90px;top:84.80px;font:normal 4.95px/5.94px 'Liberation Sans',sans-serif;color:#222;">References</b>
<i style="left:417.10px;top:90.86px;width:112.70px;height:7.30px;background:#dfe1ea;"></i>
<svg style="position:absolute;left:429.10px;top:93.06px" width="3" height="3" viewBox="0 0 3 3"><path d="M2.6 0.3 L2.6 2.6 L0.3 2.6 Z" fill="#333"/></svg>
<svg style="position:absolute;left:436.30px;top:91.96px" width="6" height="5" viewBox="0 0 6 5"><path d="M0.3 0.8 L2.4 0.8 L3 1.5 L5.6 1.5 L5.6 4.5 L0.3 4.5 Z" fill="#e6d6b0"/></svg>
<b style="left:444.90px;top:92.29px;font:normal 4.95px/5.94px 'Liberation Sans',sans-serif;color:#222;">Enums</b>
<svg style="position:absolute;left:437.20px;top:100.35px" width="3" height="3.2" viewBox="0 0 3 3.2"><path d="M0.5 0.2 L2.7 1.6 L0.5 3.0 Z" fill="#333"/></svg>
<svg style="position:absolute;left:444.40px;top:99.45px" width="6" height="5" viewBox="0 0 6 5"><text x="0" y="4" font-family="Liberation Sans" font-size="4" font-weight="bold" fill="#6a8a78">C#</text></svg>
<b style="left:453.00px;top:99.78px;font:normal 4.95px/5.94px 'Liberation Sans',sans-serif;color:#222;">AdvancedStringProcessorV1.cs</b>
<svg style="position:absolute;left:437.20px;top:107.84px" width="3" height="3.2" viewBox="0 0 3 3.2"><path d="M0.5 0.2 L2.7 1.6 L0.5 3.0 Z" fill="#333"/></svg>
<svg style="position:absolute;left:444.40px;top:106.94px" width="6" height="5" viewBox="0 0 6 5"><text x="0" y="4" font-family="Liberation Sans" font-size="4" font-weight="bold" fill="#6a8a78">C#</text></svg>
<b style="left:453.00px;top:107.27px;font:normal 4.95px/5.94px 'Liberation Sans',sans-serif;color:#222;">AdvancedStringProcessorV2.cs</b>
<svg style="position:absolute;left:429.10px;top:115.33px" width="3" height="3.2" viewBox="0 0 3 3.2"><path d="M0.5 0.2 L2.7 1.6 L0.5 3.0 Z" fill="#333"/></svg>
<svg style="position:absolute;left:436.30px;top:114.43px" width="6" height="5" viewBox="0 0 6 5"><path d="M0.3 0.8 L2.4 0.8 L3 1.5 L5.6 1.5 L5.6 4.5 L0.3 4.5 Z" fill="#dcc18c"/></svg>
<b style="left:444.90px;top:114.76px;font:normal 4.95px/5.94px 'Liberation Sans',sans-serif;color:#222;">StructPerformance</b>
<svg style="position:absolute;left:429.10px;top:122.82px" width="3" height="3.2" viewBox="0 0 3 3.2"><path d="M0.5 0.2 L2.7 1.6 L0.5 3.0 Z" fill="#333"/></svg>
<svg style="position:absolute;left:436.30px;top:121.92px" width="6" height="5" viewBox="0 0 6 5"><path d="M0.3 0.8 L2.4 0.8 L3 1.5 L5.6 1.5 L5.6 4.5 L0.3 4.5 Z" fill="#dcc18c"/></svg>
<b style="left:444.90px;top:122.25px;font:normal 4.95px/5.94px 'Liberation Sans',sans-serif;color:#222;">Tasks</b>
<svg style="position:absolute;left:421.80px;top:130.51px" width="3" height="3" viewBox="0 0 3 3"><path d="M2.6 0.3 L2.6 2.6 L0.3 2.6 Z" fill="#333"/></svg>
<svg style="position:absolute;left:429.00px;top:129.41px" width="6.5" height="5" viewBox="0 0 6.5 5"><rect x="0.4" y="0.4" width="5.6" height="4.2" fill="#e9ecef" stroke="#4a5a4e" stroke-width="0.7"/><path d="M1.5 2 L3 2 M1.5 3.2 L3 3.2" stroke="#444" stroke-width="0.6"/><rect x="3.8" y="1.4" width="1.5" height="2.4" fill="#3d6b4d"/></svg>
<b style="left:437.60px;top:129.74px;font:normal 4.95px/5.94px 'Liberation Sans',sans-serif;color:#222;">ClassLibrary.Tests</b>
<svg style="position:absolute;left:429.10px;top:137.80px" width="3" height="3.2" viewBox="0 0 3 3.2"><path d="M0.5 0.2 L2.7 1.6 L0.5 3.0 Z" fill="#333"/></svg>
<svg style="position:absolute;left:436.30px;top:136.90px" width="5.5" height="5.5" viewBox="0 0 5.5 5.5"><path d="M0.6 4.8 L3 2.4" stroke="#222" stroke-width="1.1"/><circle cx="3.6" cy="1.8" r="1.3" fill="#222"/></svg>
<b style="left:444.90px;top:137.23px;font:normal 4.95px/5.94px 'Liberation Sans',sans-serif;color:#222;">Properties</b>
<svg style="position:absolute;left:429.10px;top:145.29px" width="3" height="3.2" viewBox="0 0 3 3.2"><path d="M0.5 0.2 L2.7 1.6 L0.5 3.0 Z" fill="#333"/></svg>
<svg style="position:absolute;left:436.30px;top:144.39px" width="6" height="5" viewBox="0 0 6 5"><rect x="0.3" y="1.8" width="2" height="1.6" fill="#222"/><rect x="3.4" y="1.8" width="2" height="1.6" fill="#222"/><path d="M2 2.6 L3.6 2.6" stroke="#222" stroke-width="0.5"/></svg>
<b style="left:444.90px;top:144.72px;font:normal 4.95px/5.94px 'Liberation Sans',sans-serif;color:#222;">References</b>
<svg style="position:absolute;left:429.10px;top:152.78px" width="3" height="3.2" viewBox="0 0 3 3.2"><path d="M0.5 0.2 L2.7 1.6 L0.5 3.0 Z" fill="#333"/></svg>
<svg style="position:absolute;left:436.30px;top:151.88px" width="6" height="5" viewBox="0 0 6 5"><text x="0" y="4" font-family="Liberation Sans" font-size="4" font-weight="bold" fill="#6a8a78">C#</text></svg>
<b style="left:444.90px;top:152.21px;font:normal 4.95px/5.94px 'Liberation Sans',sans-serif;color:#222;">AdvancedStringProcessorV1Should.cs</b>
<svg style="position:absolute;left:436.30px;top:159.37px" width="6" height="5.5" viewBox="0 0 6 5.5"><rect x="0.6" y="0.6" width="4.4" height="4.4" rx="1.2" fill="none" stroke="#333" stroke-width="0.7"/><path d="M2.8 0 L2.8 1.6" stroke="#333" stroke-width="0.7"/></svg>
<b style="left:444.90px;top:159.70px;font:normal 4.95px/5.94px 'Liberation Sans',sans-serif;color:#222;">App.config</b>
<svg style="position:absolute;left:436.30px;top:166.86px" width="6" height="5" viewBox="0 0 6 5"><text x="0" y="4" font-family="Liberation Sans" font-size="4" font-weight="bold" fill="#6a8a78">C#</text></svg>
<b style="left:444.90px;top:167.19px;font:normal 4.95px/5.94px 'Liberation Sans',sans-serif;color:#222;">ObjectReferenceEqualityExample.cs</b>
<svg style="position:absolute;left:436.30px;top:174.35px" width="6" height="5.5" viewBox="0 0 6 5.5"><rect x="0.6" y="0.6" width="4.4" height="4.4" rx="1.2" fill="none" stroke="#333" stroke-width="0.7"/><path d="M2.8 0 L2.8 1.6" stroke="#333" stroke-width="0.7"/></svg>
<b style="left:444.90px;top:174.68px;font:normal 4.95px/5.94px 'Liberation Sans',sans-serif;color:#222;">packages.config</b>
<svg style="position:absolute;left:429.10px;top:182.74px" width="3" height="3.2" viewBox="0 0 3 3.2"><path d="M0.5 0.2 L2.7 1.6 L0.5 3.0 Z" fill="#333"/></svg>
<svg style="position:absolute;left:436.30px;top:181.84px" width="6" height="5" viewBox="0 0 6 5"><text x="0" y="4" font-family="Liberation Sans" font-size="4" font-weight="bold" fill="#6a8a78">C#</text></svg>
<b style="left:444.90px;top:182.17px;font:normal 4.95px/5.94px 'Liberation Sans',sans-serif;color:#222;">StringProcessorShould.cs</b>
<svg style="position:absolute;left:436.30px;top:189.33px" width="6" height="5" viewBox="0 0 6 5"><text x="0" y="4" font-family="Liberation Sans" font-size="4" font-weight="bold" fill="#6a8a78">C#</text></svg>
<b style="left:444.90px;top:189.66px;font:normal 4.95px/5.94px 'Liberation Sans',sans-serif;color:#222;">StructEqualityPerformance.cs</b>
<i style="left:0.00px;top:276.90px;width:533.33px;height:12.80px;background:#5d6b99;"></i>
<i style="left:0.00px;top:276.90px;width:533.33px;height:0.90px;background:#4f5a88;"></i>
<b style="left:2.60px;top:281.38px;font:normal 4.7px/5.64px 'Liberation Sans',sans-serif;color:#eef0f8;">Test Explorer</b>
<b style="left:34.50px;top:281.38px;font:normal 4.7px/5.64px 'Liberation Sans',sans-serif;color:#eef0f8;">Error List</b>
<b style="left:58.40px;top:281.38px;font:normal 4.7px/5.64px 'Liberation Sans',sans-serif;color:#eef0f8;">Output</b>
<i style="left:0.00px;top:289.70px;width:533.33px;height:9.97px;background:#42508c;"></i>
<i style="left:0.00px;top:298.30px;width:533.33px;height:1.37px;background:#384276;"></i>
<svg style="position:absolute;left:2.50px;top:291.20px" width="6" height="6" viewBox="0 0 6 6"><path d="M1 5.5 L1 1 L5 1 L5 5 M0.2 4.3 L1 5.5 L1.8 4.3" stroke="#eef" stroke-width="0.7" fill="none"/></svg>
<b style="left:11.50px;top:292.55px;font:normal 4.75px/5.7px 'Liberation Sans',sans-serif;color:#f2f3f8;">Ready</b>
<b style="left:202.00px;top:292.60px;font:normal 4.5px/5.4px 'Liberation Sans',sans-serif;color:#f2f3f8;">Ln 25</b>
<b style="left:241.00px;top:292.60px;font:normal 4.5px/5.4px 'Liberation Sans',sans-serif;color:#f2f3f8;">Col 65</b>
<b style="left:280.00px;top:292.60px;font:normal 4.5px/5.4px 'Liberation Sans',sans-serif;color:#f2f3f8;">Ch 65</b>
<b style="left:336.00px;top:292.60px;font:normal 4.5px/5.4px 'Liberation Sans',sans-serif;color:#f2f3f8;">INS</b>
<svg style="position:absolute;left:449.00px;top:291.60px" width="4" height="5" viewBox="0 0 4 5"><path d="M2 0.3 L3.8 2.3 L2.6 2.3 L2.6 4.8 L1.4 4.8 L1.4 2.3 L0.2 2.3 Z" fill="#f2f3f8"/></svg>
<b style="left:455.50px;top:292.40px;font:normal 5.0px/6.0px 'Liberation Sans',sans-serif;color:#f2f3f8;">Add to Source Control</b>
<svg style="position:absolute;left:507.00px;top:293.50px" width="3" height="2" viewBox="0 0 3 2"><path d="M0 0 L3 0 L1.5 1.8 Z" fill="#f2f3f8"/></svg>
<svg style="position:absolute;left:519.00px;top:291.00px" width="5" height="6" viewBox="0 0 5 6"><path d="M2.5 0.3 Q4.3 0.8 4.3 3 L4.8 4.5 L0.2 4.5 L0.7 3 Q0.7 0.8 2.5 0.3 Z M1.8 5 L3.2 5 L2.5 5.8 Z" fill="#f2f3f8"/></svg>
<i style="left:30.00px;top:51.00px;width:0.60px;height:181.72px;background:#b0b0b8;"></i>
<div style="left:3.0px;top:47.6px;width:402.20px;height:221.20px;overflow:hidden">
<b style="left:30.30px;top:5.69px;font:normal 6.62px/9.42px 'Liberation Mono',monospace" class="cd"><span style="color:#262a40">namespace</span> <span style="color:#202020">ClassLibrary</span><span style="color:#202020">.</span><span style="color:#202020">Enums</span></b>
<i style="left:21.00px;top:13.51px;width:1.9px;height:9.42px;background:#e8e87a"></i>
<b style="left:30.30px;top:15.11px;font:normal 6.62px/9.42px 'Liberation Mono',monospace" class="cd"><span style="color:#202020">{</span></b>
<b style="left:46.18px;top:25.64px;font:normal 4.6px/6px 'Liberation Sans',sans-serif;letter-spacing:0.5px;color:#a2a2aa">0 references</b>
<i style="left:21.00px;top:22.93px;width:1.9px;height:16.62px;background:#e8e87a"></i>
<b style="left:30.30px;top:31.73px;font:normal 6.62px/9.42px 'Liberation Mono',monospace" class="cd">    <span style="color:#262a40">public</span> <span style="color:#262a40">enum</span> <span style="color:#93acb0">StringProcessingOptionsV2</span></b>
<i style="left:21.00px;top:39.55px;width:1.9px;height:9.42px;background:#e8e87a"></i>
<b style="left:30.30px;top:41.15px;font:normal 6.62px/9.42px 'Liberation Mono',monospace" class="cd">    <span style="color:#202020">{</span></b>
<i style="left:21.00px;top:48.97px;width:1.9px;height:9.42px;background:#e8e87a"></i>
<b style="left:30.30px;top:50.57px;font:normal 6.62px/9.42px 'Liberation Mono',monospace" class="cd">        <span style="color:#202020">None</span> <span style="color:#202020">=</span> <span style="color:#202020">0</span><span style="color:#202020">,</span></b>
<i style="left:21.00px;top:58.39px;width:1.9px;height:9.42px;background:#e8e87a"></i>
<b style="left:30.30px;top:59.99px;font:normal 6.62px/9.42px 'Liberation Mono',monospace" class="cd">        <span style="color:#202020">ConvertToUppercase</span> <span style="color:#202020">=</span> <span style="color:#202020">1</span><span style="color:#202020">,</span></b>
<i style="left:21.00px;top:67.81px;width:1.9px;height:9.42px;background:#e8e87a"></i>
<b style="left:30.30px;top:69.41px;font:normal 6.62px/9.42px 'Liberation Mono',monospace" class="cd">        <span style="color:#202020">AddLength</span> <span style="color:#202020">=</span> <span style="color:#202020">2</span></b>
<i style="left:21.00px;top:77.23px;width:1.9px;height:9.42px;background:#e8e87a"></i>
<b style="left:30.30px;top:78.83px;font:normal 6.62px/9.42px 'Liberation Mono',monospace" class="cd">    <span style="color:#202020">}</span></b>
<b style="left:46.18px;top:89.36px;font:normal 4.6px/6px 'Liberation Sans',sans-serif;letter-spacing:0.5px;color:#a2a2aa">0 references</b>
<i style="left:21.00px;top:86.65px;width:1.9px;height:16.62px;background:#e8e87a"></i>
<b style="left:30.30px;top:95.45px;font:normal 6.62px/9.42px 'Liberation Mono',monospace" class="cd">    <span style="color:#262a40">public</span> <span style="color:#262a40">class</span> <span style="color:#93acb0">AdvancedStringProcessorV2</span></b>
<i style="left:21.00px;top:103.27px;width:1.9px;height:9.42px;background:#e8e87a"></i>
<b style="left:30.30px;top:104.87px;font:normal 6.62px/9.42px 'Liberation Mono',monospace" class="cd">    <span style="color:#202020">{</span></b>
<b style="left:62.06px;top:115.40px;font:normal 4.6px/6px 'Liberation Sans',sans-serif;letter-spacing:0.5px;color:#a2a2aa">0 references</b>
<i style="left:21.00px;top:112.69px;width:1.9px;height:16.62px;background:#e8e87a"></i>
<b style="left:30.30px;top:121.49px;font:normal 6.62px/9.42px 'Liberation Mono',monospace" class="cd">        <span style="color:#262a40">public</span> <span style="color:#93acb0">List</span><span style="color:#202020">&lt;</span><span style="color:#262a40">string</span><span style="color:#202020">&gt;</span> <span style="color:#6a6054">Process</span><span style="color:#202020">(</span><span style="color:#93acb0">List</span><span style="color:#202020">&lt;</span><span style="color:#262a40">string</span><span style="color:#202020">&gt;</span> <span style="color:#3c4156">stringsToProcess</span><span style="color:#202020">,</span></b>
<i style="left:21.00px;top:129.31px;width:1.9px;height:9.42px;background:#e8e87a"></i>
<b style="left:30.30px;top:130.91px;font:normal 6.62px/9.42px 'Liberation Mono',monospace" class="cd">                                    <span style="color:#93acb0">StringProcessingOptionsV2</span> <span style="color:#3c4156">options</span><span style="color:#202020">)</span></b>
<i style="left:21.00px;top:138.73px;width:1.9px;height:9.42px;background:#e8e87a"></i>
<b style="left:30.30px;top:140.33px;font:normal 6.62px/9.42px 'Liberation Mono',monospace" class="cd">        <span style="color:#202020">{</span></b>
<i style="left:21.00px;top:148.15px;width:1.9px;height:9.42px;background:#e8e87a"></i>
<i style="left:28.50px;top:148.15px;width:372.50px;height:9.42px;border:0.6px solid #e2e2e6;box-sizing:border-box"></i>
<b style="left:30.30px;top:149.75px;font:normal 6.62px/9.42px 'Liberation Mono',monospace" class="cd">            <span style="color:#262a40">bool</span> <span style="color:#3c4156">noProcessingIsRequired</span> <span style="color:#202020">=</span> <span style="color:#3c4156">options</span> <span style="color:#202020">=</span><span style="color:#202020">=</span> <span style="color:#93acb0">StringProcessingOptionsV2</span><span style="color:#202020">.</span><span style="color:#202020">None</span><span style="color:#202020">;</span></b>
<i style="left:21.00px;top:157.57px;width:1.9px;height:9.42px;background:#e8e87a"></i>
<b style="left:30.30px;top:159.17px;font:normal 6.62px/9.42px 'Liberation Mono',monospace" class="cd">        <span style="color:#202020">}</span></b>
<b style="left:30.30px;top:168.59px;font:normal 6.62px/9.42px 'Liberation Mono',monospace" class="cd">    <span style="color:#202020">}</span></b>
<b style="left:30.30px;top:178.01px;font:normal 6.62px/9.42px 'Liberation Mono',monospace" class="cd"><span style="color:#202020">}</span></b>
</div>
<i style="left:28.3px;top:54.40px;width:4px;height:4px;background:#fff;border:0.6px solid #a0a0a8;box-sizing:border-box"></i>
<i style="left:29.30px;top:56.10px;width:2.00px;height:0.60px;background:#777;"></i>
<i style="left:28.3px;top:80.44px;width:4px;height:4px;background:#fff;border:0.6px solid #a0a0a8;box-sizing:border-box"></i>
<i style="left:29.30px;top:82.14px;width:2.00px;height:0.60px;background:#777;"></i>
<i style="left:28.3px;top:144.16px;width:4px;height:4px;background:#fff;border:0.6px solid #a0a0a8;box-sizing:border-box"></i>
<i style="left:29.30px;top:145.86px;width:2.00px;height:0.60px;background:#777;"></i>
<i style="left:28.3px;top:170.20px;width:4px;height:4px;background:#fff;border:0.6px solid #a0a0a8;box-sizing:border-box"></i>
<i style="left:29.30px;top:171.90px;width:2.00px;height:0.60px;background:#777;"></i>
<svg style="position:absolute;left:144.46px;top:176.80px" width="27.790000000000003" height="1.5" viewBox="0 0 27.790000000000003 1.5"><path d="M0 1.2 L0.80 0.2 L1.60 1.2 L2.40 0.2 L3.20 1.2 L4.00 0.2 L4.80 1.2 L5.60 0.2 L6.40 1.2 L7.20 0.2 L8.00 1.2 L8.80 0.2 L9.60 1.2 L10.40 0.2 L11.20 1.2 L12.00 0.2 L12.80 1.2 L13.60 0.2 L14.40 1.2 L15.20 0.2 L16.00 1.2 L16.80 0.2 L17.60 1.2 L18.40 0.2 L19.20 1.2 L20.00 0.2 L20.80 1.2 L21.60 0.2 L22.40 1.2 L23.20 0.2 L24.00 1.2 L24.80 0.2 L25.60 1.2 L26.40 0.2 L27.20 1.2" stroke="#d03a3a" stroke-width="0.5" fill="none"/></svg>
<svg style="position:absolute;left:14.50px;top:197.46px" width="5" height="6" viewBox="0 0 5 6"><circle cx="2.5" cy="2.3" r="1.8" fill="#e8d25a"/><rect x="1.6" y="4" width="1.8" height="1.6" fill="#888"/></svg>
<svg style="position:absolute;left:197.50px;top:123.60px" width="3" height="8.4" viewBox="0 0 3 8.4"><path d="M0.3 0.4 L1.2 0.4 L1.5 0.8 L1.8 0.4 L2.7 0.4 M1.5 0.8 L1.5 7.6 M0.3 8.0 L1.2 8.0 L1.5 7.6 L1.8 8.0 L2.7 8.0" stroke="#444" stroke-width="0.6" fill="none"/></svg>
<i style="left:405.20px;top:47.60px;width:7.80px;height:221.20px;background:#f4f4f6;"></i>
<i style="left:405.20px;top:47.60px;width:0.50px;height:221.20px;background:#e4e4ea;"></i>
<svg style="position:absolute;left:406.60px;top:49.20px" width="5.5" height="5.5" viewBox="0 0 5.5 5.5"><path d="M2.75 0.3 L2.75 5.2 M0.3 2.75 L5.2 2.75" stroke="#222" stroke-width="1.0"/></svg>
<i style="left:405.70px;top:55.20px;width:7.30px;height:0.50px;background:#999;"></i>
<svg style="position:absolute;left:407.70px;top:57.40px" width="3" height="2" viewBox="0 0 3 2"><path d="M0 1.8 L3 1.8 L1.5 0 Z" fill="#888"/></svg>
<i style="left:408.50px;top:83.50px;width:3.60px;height:90.20px;background:#c6c7cc;"></i>
<svg style="position:absolute;left:407.70px;top:264.30px" width="3" height="2" viewBox="0 0 3 2"><path d="M0 0 L3 0 L1.5 1.8 Z" fill="#888"/></svg>
<i style="left:405.80px;top:68.00px;width:2.60px;height:73.00px;background:#ecebb0;"></i>
<i style="left:405.80px;top:130.50px;width:6.80px;height:1.20px;background:#c03040;"></i>
<i style="left:405.80px;top:142.80px;width:6.80px;height:1.00px;background:#555;"></i>
<i style="left:3.00px;top:268.80px;width:410.00px;height:8.10px;background:#eeeff3;"></i>
<b style="left:4.80px;top:270.89px;font:normal 4.6px/5.52px 'Liberation Sans',sans-serif;color:#444;">133 %</b>
<svg style="position:absolute;left:24.00px;top:271.20px" width="2.5" height="1.6" viewBox="0 0 2.5 1.6"><path d="M0 0 L2.5 0 L1.25 1.5 Z" fill="#555"/></svg>
<i style="left:30.00px;top:269.40px;width:0.50px;height:6.90px;background:#d6d8e0;"></i>
<svg style="position:absolute;left:43.00px;top:270.20px" width="4" height="4" viewBox="0 0 4 4"><circle cx="2" cy="2" r="1.7" fill="#c53a3a"/></svg>
<b style="left:48.50px;top:271.25px;font:normal 4.0px/4.8px 'Liberation Sans',sans-serif;color:#666;">1</b>
<svg style="position:absolute;left:62.00px;top:270.10px" width="4" height="4" viewBox="0 0 4 4"><path d="M2 0.2 L3.9 3.8 L0.1 3.8 Z" fill="#d9a12e"/></svg>
<b style="left:68.00px;top:271.25px;font:normal 4.0px/4.8px 'Liberation Sans',sans-serif;color:#666;">0</b>
<svg style="position:absolute;left:80.00px;top:270.80px" width="3" height="2.5" viewBox="0 0 3 2.5"><path d="M0 1.25 L3 0 L3 2.5 Z" fill="#666"/></svg>
<svg style="position:absolute;left:92.00px;top:270.80px" width="3" height="2.5" viewBox="0 0 3 2.5"><path d="M3 1.25 L0 0 L0 2.5 Z" fill="#666"/></svg>
<svg style="position:absolute;left:111.00px;top:270.00px" width="4" height="4" viewBox="0 0 4 4"><circle cx="2" cy="2" r="1.5" fill="none" stroke="#555" stroke-width="0.6"/></svg>
<svg style="position:absolute;left:117.50px;top:271.20px" width="2.5" height="1.6" viewBox="0 0 2.5 1.6"><path d="M0 0 L2.5 0 L1.25 1.5 Z" fill="#555"/></svg>
<i style="left:124.50px;top:269.40px;width:0.50px;height:6.90px;background:#d6d8e0;"></i>
<svg style="position:absolute;left:131.00px;top:270.80px" width="2" height="2.5" viewBox="0 0 2 2.5"><path d="M2 0 L0 1.25 L2 2.5 Z" fill="#777"/></svg>
<i style="left:137.00px;top:270.20px;width:220.70px;height:3.40px;background:#c4c5cb;"></i>
<svg style="position:absolute;left:400.00px;top:270.80px" width="2" height="2.5" viewBox="0 0 2 2.5"><path d="M0 0 L2 1.25 L0 2.5 Z" fill="#777"/></svg>
<i style="left:505.0px;top:267.0px;width:14px;height:14px;border-radius:50%;background:rgba(140,140,150,0.28)"></i>
</div>
<div class="tile" style="left:1066.667px;top:299.667px">
<i style="left:0.00px;top:0.00px;width:533.33px;height:27.70px;background:#d2d8ee;"></i>
<i style="left:0.00px;top:25.90px;width:533.33px;height:1.50px;background:#dce1f4;"></i>
<svg style="position:absolute;left:4.00px;top:2.00px" width="11" height="10" viewBox="0 0 11 10"><rect x="1.0" y="2.4" width="2.1" height="4.4" fill="#5b4596"/><path d="M3 4.6 L5.2 4.6" stroke="#6a48b0" stroke-width="1.2"/><path d="M5.3 4.6 L9.0 1.4 L9.0 7.8 Z" fill="#c6a8ee" stroke="#6a3cb4" stroke-width="1.5" stroke-linejoin="round"/></svg>
<b style="left:18.00px;top:4.46px;font:normal 4.9px/5.88px 'Liberation Sans',sans-serif;color:#1e1e28;">File</b>
<b style="left:33.00px;top:4.46px;font:normal 4.9px/5.88px 'Liberation Sans',sans-serif;color:#1e1e28;">Edit</b>
<b style="left:51.00px;top:4.46px;font:normal 4.9px/5.88px 'Liberation Sans',sans-serif;color:#1e1e28;">View</b>
<b style="left:70.00px;top:4.46px;font:normal 4.9px/5.88px 'Liberation Sans',sans-serif;color:#1e1e28;">Project</b>
<b style="left:93.00px;top:4.46px;font:normal 4.9px/5.88px 'Liberation Sans',sans-serif;color:#1e1e28;">Build</b>
<b style="left:113.00px;top:4.46px;font:normal 4.9px/5.88px 'Liberation Sans',sans-serif;color:#1e1e28;">Debug</b>
<b style="left:136.00px;top:4.46px;font:normal 4.9px/5.88px 'Liberation Sans',sans-serif;color:#1e1e28;">Test</b>
<b style="left:152.00px;top:4.46px;font:normal 4.9px/5.88px 'Liberation Sans',sans-serif;color:#1e1e28;">Analyze</b>
<b style="left:178.00px;top:4.46px;font:normal 4.9px/5.88px 'Liberation Sans',sans-serif;color:#1e1e28;">Tools</b>
<b style="left:197.00px;top:4.46px;font:normal 4.9px/5.88px 'Liberation Sans',sans-serif;color:#1e1e28;">Extensions</b>
<b style="left:229.00px;top:4.46px;font:normal 4.9px/5.88px 'Liberation Sans',sans-serif;color:#1e1e28;">Window</b>
<b style="left:255.00px;top:4.46px;font:normal 4.9px/5.88px 'Liberation Sans',sans-serif;color:#1e1e28;">Help</b>
<i style="left:275.00px;top:2.40px;width:91.00px;height:8.40px;background:#fdfdfe;"></i>
<b style="left:277.50px;top:4.49px;font:normal 4.85px/5.82px 'Liberation Sans',sans-serif;color:#6a6c78;">Search (Ctrl+Q)</b>
<svg style="position:absolute;left:357.00px;top:3.80px" width="6" height="6" viewBox="0 0 6 6"><circle cx="3.6" cy="2.4" r="1.6" fill="none" stroke="#444" stroke-width="0.8"/><path d="M2.5 3.5 L0.8 5.2" stroke="#444" stroke-width="0.9"/></svg>
<i style="left:371.00px;top:2.00px;width:37.00px;height:9.00px;background:#d9def2;"></i>
<b style="left:377.00px;top:4.58px;font:normal 4.7px/5.64px 'Liberation Sans',sans-serif;color:#4a4c58;">ClassLibrary</b>
<svg style="position:absolute;left:459.00px;top:2.50px" width="7" height="8.5" viewBox="0 0 7 8.5"><circle cx="3.5" cy="2.6" r="1.7" fill="none" stroke="#333" stroke-width="0.8"/><path d="M0.8 8 Q3.5 4.3 6.2 8 Z" fill="#333"/></svg>
<i style="left:483.00px;top:6.60px;width:4.50px;height:0.45px;background:#8a8e9c;"></i>
<svg style="position:absolute;left:501.50px;top:4.00px" width="5" height="5" viewBox="0 0 5 5"><path d="M1.3 0.6 L4.4 0.6 L4.4 3.7 M0.6 1.4 L3.6 1.4 L3.6 4.4 L0.6 4.4 Z" stroke="#777b88" stroke-width="0.55" fill="none"/></svg>
<svg style="position:absolute;left:521.00px;top:4.30px" width="5" height="5" viewBox="0 0 5 5"><path d="M0.5 0.5 L4.5 4.5 M4.5 0.5 L0.5 4.5" stroke="#8a8e9c" stroke-width="0.55"/></svg>
<i style="left:6.30px;top:14.50px;width:0.60px;height:10.00px;background:#b9bfd6;"></i>
<svg style="position:absolute;left:10.00px;top:16.20px" width="6" height="6" viewBox="0 0 6 6"><circle cx="3" cy="3" r="2" fill="none" stroke="#1d3a6e" stroke-width="1.2"/><path d="M1.6 3 L4.2 3" stroke="#1d3a6e" stroke-width="0.8"/></svg>
<i style="left:20.00px;top:18.80px;width:1.30px;height:1.10px;background:#444;border-radius:0"></i>
<svg style="position:absolute;left:24.50px;top:16.20px" width="6" height="6" viewBox="0 0 6 6"><circle cx="3" cy="3" r="2" fill="none" stroke="#c0c6dc" stroke-width="1.1"/></svg>
<i style="left:33.50px;top:15.50px;width:0.50px;height:8.00px;background:#c3c8dc;"></i>
<svg style="position:absolute;left:36.50px;top:15.60px" width="7" height="7" viewBox="0 0 7 7"><rect x="1" y="2.2" width="4.4" height="3.8" fill="none" stroke="#4a4e60" stroke-width="1"/><path d="M4.5 0.3 L5.2 1.7 L6.6 2.2 L5.2 2.7" fill="#4a4e60"/></svg>
<i style="left:46.80px;top:18.80px;width:1.30px;height:1.10px;background:#444;border-radius:0"></i>
<svg style="position:absolute;left:50.80px;top:15.80px" width="7" height="7" viewBox="0 0 7 7"><path d="M0.5 2 L2.5 2 L3 2.8 L6 2.8 L6 6.3 L0.5 6.3 Z" fill="#d8b8b0"/><path d="M3.5 0.5 L5.5 1.5" stroke="#b89890" stroke-width="0.8"/></svg>
<svg style="position:absolute;left:61.00px;top:16.30px" width="6" height="6" viewBox="0 0 6 6"><path d="M0.4 0.4 L4.6 0.4 L5.6 1.4 L5.6 5.6 L0.4 5.6 Z" fill="#1d3468"/><rect x="1.6" y="0.4" width="2.6" height="1.8" fill="#d9ddef"/></svg>
<svg style="position:absolute;left:69.50px;top:15.60px" width="7" height="7" viewBox="0 0 7 7"><path d="M2.4 0.3 L6.6 0.3 L6.6 4.3 L2.4 4.3 Z" fill="#4a5d8f"/><path d="M0.3 2.6 L4.5 2.6 L4.5 6.6 L0.3 6.6 Z" fill="#1d3468"/></svg>
<svg style="position:absolute;left:80.50px;top:16.20px" width="7" height="6" viewBox="0 0 7 6"><path d="M1.5 2.5 Q4 0.3 5.8 2.5 Q6.5 4.5 4 5.6" fill="none" stroke="#1d3468" stroke-width="1.1"/><path d="M0.4 1 L1.4 3.4 L3.4 2.2 Z" fill="#1d3468"/></svg>
<i style="left:92.00px;top:18.80px;width:1.30px;height:1.10px;background:#444;border-radius:0"></i>
<svg style="position:absolute;left:97.50px;top:16.20px" width="7" height="6" viewBox="0 0 7 6"><path d="M5.5 2.5 Q3 0.3 1.2 2.5 Q0.5 4.5 3 5.6" fill="none" stroke="#c3c8dc" stroke-width="1.1"/><path d="M6.6 1 L5.6 3.4 L3.6 2.2 Z" fill="#c3c8dc"/></svg>
<i style="left:106.20px;top:18.90px;width:1.80px;height:0.60px;background:#c3c8dc;"></i>
<i style="left:106.80px;top:18.30px;width:0.60px;height:1.80px;background:#c3c8dc;"></i>
<i style="left:111.00px;top:15.00px;width:0.50px;height:8.50px;background:#b9bfd6;"></i>
<i style="left:114.00px;top:15.00px;width:27.00px;height:8.50px;background:#fbfbfd;"></i>
<b style="left:116.50px;top:17.44px;font:normal 4.6px/5.52px 'Liberation Sans',sans-serif;color:#333;">Debug</b>
<svg style="position:absolute;left:137.00px;top:18.40px" width="3" height="2" viewBox="0 0 3 2"><path d="M0 0 L3 0 L1.5 1.8 Z" fill="#333"/></svg>
<i style="left:143.50px;top:15.00px;width:46.50px;height:8.50px;background:#fbfbfd;"></i>
<b style="left:146.00px;top:17.44px;font:normal 4.6px/5.52px 'Liberation Sans',sans-serif;color:#444;">Any CPU</b>
<svg style="position:absolute;left:186.00px;top:18.40px" width="3" height="2" viewBox="0 0 3 2"><path d="M0 0 L3 0 L1.5 1.8 Z" fill="#333"/></svg>
<svg style="position:absolute;left:194.50px;top:16.70px" width="4" height="5" viewBox="0 0 4 5"><path d="M0 0 L3.5 2.5 L0 5 Z" fill="#2c7a3c"/></svg>
<b style="left:201.00px;top:17.34px;font:normal 4.6px/5.52px 'Liberation Sans',sans-serif;color:#333;">Start</b>
<svg style="position:absolute;left:214.00px;top:18.60px" width="3" height="2" viewBox="0 0 3 2"><path d="M0 0 L3 0 L1.5 1.8 Z" fill="#333"/></svg>
<i style="left:220.00px;top:15.00px;width:0.50px;height:8.50px;background:#b9bfd6;"></i>
<svg style="position:absolute;left:222.50px;top:16.20px" width="7" height="6" viewBox="0 0 7 6"><path d="M0.5 5.5 L3 1 L6 1 L6 3.5 L3 5.5 Z" fill="#c9b08a"/><path d="M0.5 5.5 L3 3.5" stroke="#555" stroke-width="0.6"/></svg>
<i style="left:231.30px;top:20.60px;width:1.30px;height:1.30px;background:#333;border-radius:0"></i>
<svg style="position:absolute;left:240.00px;top:16.00px" width="7" height="6.5" viewBox="0 0 7 6.5"><path d="M0.6 0.5 L0.6 5.8 M2.2 2 L2.2 5.8 M2.2 2.3 L4.6 2.3 L4.6 5.8" stroke="#3f4660" stroke-width="0.9" fill="none"/></svg>
<svg style="position:absolute;left:250.00px;top:15.80px" width="7" height="7" viewBox="0 0 7 7"><path d="M0.8 1 L6.2 1 M0.8 2.6 L3 2.6 M4 2.6 L6.2 2.6 M2.2 1 L2.2 6.3 M4.6 2.6 L4.6 6.3" stroke="#454c64" stroke-width="0.9" fill="none"/></svg>
<i style="left:259.50px;top:15.50px;width:0.50px;height:8.00px;background:#c3c8dc;"></i>
<svg style="position:absolute;left:263.50px;top:16.20px" width="6" height="6" viewBox="0 0 6 6"><path d="M0.5 1 L5.5 1 M3 1 L3 5.6" stroke="#5b6275" stroke-width="1.0" fill="none"/></svg>
<svg style="position:absolute;left:272.00px;top:16.20px" width="7" height="6" viewBox="0 0 7 6"><path d="M0.5 1 L3 1 M1.7 1 L1.7 5 M3.5 3 L6.5 5.5 M4 5.5 L6.5 5.5" stroke="#6d7389" stroke-width="0.9" fill="none"/></svg>
<i style="left:281.50px;top:15.50px;width:0.50px;height:8.00px;background:#c3c8dc;"></i>
<svg style="position:absolute;left:285.00px;top:16.00px" width="5" height="6.5" viewBox="0 0 5 6.5"><path d="M0.5 0.3 L4.5 0.3 L4.5 6.2 L2.5 4.6 L0.5 6.2 Z" fill="#1f2640"/></svg>
<svg style="position:absolute;left:294.00px;top:16.00px" width="6" height="6.5" viewBox="0 0 6 6.5"><path d="M0.5 0.5 L4 0.5 L4 5.5 L2.2 4.2 L0.5 5.5 Z" fill="none" stroke="#c3c8dc" stroke-width="0.8"/></svg>
<svg style="position:absolute;left:303.00px;top:16.00px" width="6" height="6.5" viewBox="0 0 6 6.5"><path d="M0.5 0.5 L4 0.5 L4 5.5 L2.2 4.2 L0.5 5.5 Z" fill="none" stroke="#c3c8dc" stroke-width="0.8"/></svg>
<svg style="position:absolute;left:312.00px;top:16.00px" width="6" height="6.5" viewBox="0 0 6 6.5"><path d="M0.5 0.5 L4 0.5 L4 5.5 L2.2 4.2 L0.5 5.5 Z" fill="none" stroke="#c3c8dc" stroke-width="0.8"/></svg>
<i style="left:321.00px;top:20.60px;width:1.30px;height:1.30px;background:#333;border-radius:0"></i>
<svg style="position:absolute;left:478.50px;top:16.30px" width="7" height="6.5" viewBox="0 0 7 6.5"><path d="M0.5 6 L5.5 6 M1.2 4.8 Q2 1.6 4.8 1.8 M3.8 0.6 L5.2 1.8 L3.8 3" stroke="#333" stroke-width="0.7" fill="none"/></svg>
<b style="left:486.00px;top:17.58px;font:normal 4.7px/5.64px 'Liberation Sans',sans-serif;color:#333;">Live Share</b>
<svg style="position:absolute;left:519.00px;top:15.50px" width="6" height="8" viewBox="0 0 6 8"><path d="M1 1 L5 1 M1 3 L4 3 M1 1 L1 7 M3 5 L5 7" stroke="#444" stroke-width="0.7" fill="none"/></svg>
<i style="left:0.00px;top:27.70px;width:533.33px;height:249.20px;background:#5d6b99;"></i>
<i style="left:3.00px;top:30.60px;width:88.80px;height:7.70px;background:#f5e29c;"></i>
<b style="left:4.40px;top:32.29px;font:normal 4.85px/5.82px 'Liberation Sans',sans-serif;color:#2e2a1c;">AdvancedStringProcessorV2.cs*</b>
<svg style="position:absolute;left:78.80px;top:33.00px" width="3" height="3" viewBox="0 0 3 3"><path d="M0.5 1.5 L2.5 1.5 M1.5 0.5 L1.5 2.5" stroke="#6b6248" stroke-width="0.6"/></svg>
<svg style="position:absolute;left:85.30px;top:32.60px" width="3.6" height="3.6" viewBox="0 0 3.6 3.6"><path d="M0.4 0.4 L3.2 3.2 M3.2 0.4 L0.4 3.2" stroke="#7a5a30" stroke-width="0.7"/></svg>
<svg style="position:absolute;left:408.80px;top:33.30px" width="3" height="2" viewBox="0 0 3 2"><path d="M0 0 L3 0 L1.5 1.8 Z" fill="#aab2d0"/></svg>
<i style="left:3.00px;top:38.30px;width:410.00px;height:9.10px;background:#fdfdfe;"></i>
<i style="left:3.00px;top:46.80px;width:410.00px;height:0.60px;background:#c9ccd6;"></i>
<i style="left:138.70px;top:38.30px;width:0.60px;height:9.10px;background:#c9ccd6;"></i>
<i style="left:276.70px;top:38.30px;width:0.60px;height:9.10px;background:#c9ccd6;"></i>
<i style="left:4.60px;top:40.00px;width:5.60px;height:5.00px;background:#e8ece8;border:0.8px solid #35503f;box-sizing:border-box"></i>
<b style="left:12.00px;top:41.18px;font:normal 4.7px/5.64px 'Liberation Sans',sans-serif;color:#222;width:120px;overflow:hidden">ClassLibrary</b>
<svg style="position:absolute;left:134.00px;top:42.30px" width="3" height="2" viewBox="0 0 3 2"><path d="M0 0 L3 0 L1.5 1.8 Z" fill="#333"/></svg>
<svg style="position:absolute;left:141.00px;top:40.30px" width="4.5" height="4.5" viewBox="0 0 4.5 4.5"><path d="M0.5 3.5 L2 2 L0.5 0.5" stroke="#8a6a30" stroke-width="0.6" fill="none"/><rect x="2.5" y="2" width="2" height="2" fill="#998"/></svg>
<b style="left:148.30px;top:41.12px;font:normal 4.8px/5.76px 'Liberation Sans',sans-serif;color:#333;width:122px;overflow:hidden">ClassLibrary.Enums.AdvancedStringProcessorV2</b>
<svg style="position:absolute;left:272.00px;top:42.30px" width="3" height="2" viewBox="0 0 3 2"><path d="M0 0 L3 0 L1.5 1.8 Z" fill="#333"/></svg>
<svg style="position:absolute;left:279.00px;top:40.50px" width="4" height="4" viewBox="0 0 4 4"><circle cx="2" cy="2" r="1.4" fill="none" stroke="#555" stroke-width="0.6"/></svg>
<b style="left:285.70px;top:41.12px;font:normal 4.8px/5.76px 'Liberation Sans',sans-serif;color:#333;width:119px;overflow:hidden">Process(List&lt;string&gt; stringsToProcess, StringProcessingOptionsV2 options)</b>
<svg style="position:absolute;left:409.00px;top:42.30px" width="3" height="2" viewBox="0 0 3 2"><path d="M0 0 L3 0 L1.5 1.8 Z" fill="#333"/></svg>
<i style="left:3.00px;top:47.60px;width:410.00px;height:221.20px;background:#ffffff;"></i>
<i style="left:3.00px;top:47.60px;width:9.00px;height:221.20px;background:#f0f0f2;"></i>
<i style="left:9.00px;top:47.60px;width:3.00px;height:221.20px;background:#f7f7f9;"></i>
<i style="left:30.00px;top:47.60px;width:0.60px;height:221.20px;background:#b0b0b8;"></i>
<i style="left:416.60px;top:29.20px;width:114.20px;height:9.20px;background:#44548e;"></i>
<b style="left:418.50px;top:32.49px;font:normal 4.85px/5.82px 'Liberation Sans',sans-serif;color:#f0f2fa;">Solution Explorer</b>
<svg style="position:absolute;left:512.50px;top:32.20px" width="3" height="2.5" viewBox="0 0 3 2.5"><path d="M0 0 L3 0 L1.5 1.8 Z" fill="#dde"/></svg>
<svg style="position:absolute;left:518.50px;top:31.20px" width="4" height="4.5" viewBox="0 0 4 4.5"><path d="M2 0.3 L2 4.2 M0.3 2.6 L3.7 2.6 M0.8 0.5 L3.2 0.5" stroke="#dde" stroke-width="0.6"/></svg>
<svg style="position:absolute;left:524.50px;top:31.50px" width="4" height="4" viewBox="0 0 4 4"><path d="M0.4 0.4 L3.6 3.6 M3.6 0.4 L0.4 3.6" stroke="#dde" stroke-width="0.6"/></svg>
<i style="left:416.60px;top:38.50px;width:114.20px;height:11.00px;background:#cdd5ee;"></i>
<div style="left:0;top:1px">
<i style="left:421.50px;top:41.60px;width:4.40px;height:4.40px;background:#c7cde2;border-radius:50%"></i>
<i style="left:430.00px;top:41.60px;width:4.40px;height:4.40px;background:#c7cde2;border-radius:50%"></i>
<svg style="position:absolute;left:438.50px;top:41.00px" width="6" height="5" viewBox="0 0 6 5"><path d="M0.5 2.6 L3 0.3 L5.5 2.6 M1.2 2.4 L1.2 4.8 L4.8 4.8 L4.8 2.4" stroke="#333" stroke-width="0.8" fill="none"/></svg>
<i style="left:447.50px;top:41.60px;width:4.40px;height:4.40px;background:#8a8fa3;"></i>
<svg style="position:absolute;left:456.50px;top:43.40px" width="2.5" height="1.6" viewBox="0 0 2.5 1.6"><path d="M0 0 L2.5 0 L1.25 1.5 Z" fill="#444"/></svg>
<i style="left:461.00px;top:40.20px;width:0.50px;height:7.60px;background:#aeb5cc;"></i>
<svg style="position:absolute;left:464.50px;top:41.00px" width="6" height="5.5" viewBox="0 0 6 5.5"><path d="M1 1 Q4.5 0.5 4.8 4" stroke="#555" stroke-width="0.8" fill="none"/><circle cx="2" cy="4" r="1" fill="#555"/></svg>
<svg style="position:absolute;left:473.00px;top:43.40px" width="2.5" height="1.6" viewBox="0 0 2.5 1.6"><path d="M0 0 L2.5 0 L1.25 1.5 Z" fill="#444"/></svg>
<svg style="position:absolute;left:479.50px;top:41.00px" width="5" height="5" viewBox="0 0 5 5"><path d="M0.5 0.5 L4 4 M2 4.3 L4.3 4.3 L4.3 2" stroke="#333" stroke-width="0.8" fill="none"/></svg>
<svg style="position:absolute;left:488.30px;top:40.90px" width="5" height="5.5" viewBox="0 0 5 5.5"><path d="M4 1.4 A2 2 0 1 0 4.3 3.6" stroke="#1e4a8a" stroke-width="1.0" fill="none"/></svg>
<svg style="position:absolute;left:497.00px;top:41.20px" width="5" height="5" viewBox="0 0 5 5"><path d="M0.8 4.2 L4.2 0.8" stroke="#222" stroke-width="1.2"/></svg>
<svg style="position:absolute;left:505.50px;top:40.90px" width="5.5" height="5.5" viewBox="0 0 5.5 5.5"><circle cx="2.7" cy="2.9" r="2" fill="none" stroke="#333" stroke-width="0.8"/><rect x="0.5" y="0.3" width="2" height="2" fill="#333"/></svg>
</div>
<i style="left:416.60px;top:49.50px;width:114.20px;height:9.50px;background:#fcfcfe;"></i>
<i style="left:416.60px;top:58.60px;width:114.20px;height:0.50px;background:#d8dbe6;"></i>
<b style="left:418.50px;top:52.43px;font:normal 4.95px/5.94px 'Liberation Sans',sans-serif;color:#7d7f89;">Search Solution Explorer (Ctrl+;)</b>
<svg style="position:absolute;left:518.50px;top:51.60px" width="5" height="5" viewBox="0 0 5 5"><circle cx="3" cy="2" r="1.4" fill="none" stroke="#444" stroke-width="0.7"/><path d="M2 3 L0.5 4.6" stroke="#444" stroke-width="0.8"/></svg>
<svg style="position:absolute;left:525.50px;top:53.60px" width="2.5" height="1.6" viewBox="0 0 2.5 1.6"><path d="M0 0 L2.5 0 L1.25 1.5 Z" fill="#555"/></svg>
<i style="left:416.60px;top:59.00px;width:114.20px;height:217.90px;background:#f6f7fb;"></i>
<svg style="position:absolute;left:424.00px;top:62.00px" width="5.5" height="5" viewBox="0 0 5.5 5"><rect x="0.4" y="0.4" width="4.6" height="3.6" fill="none" stroke="#444" stroke-width="0.6"/><rect x="0.4" y="0.4" width="4.6" height="1" fill="#444"/><path d="M1.5 4.6 L4 4.6" stroke="#666" stroke-width="0.5"/></svg>
<b style="left:430.80px;top:62.33px;font:normal 4.95px/5.94px 'Liberation Sans',sans-serif;color:#333;">Solution 'ClassLibrary' (2 of 2 projects)</b>
<svg style="position:absolute;left:421.80px;top:70.59px" width="3" height="3" viewBox="0 0 3 3"><path d="M2.6 0.3 L2.6 2.6 L0.3 2.6 Z" fill="#333"/></svg>
<svg style="position:absolute;left:429.00px;top:69.49px" width="6.5" height="5" viewBox="0 0 6.5 5"><rect x="0.4" y="0.4" width="5.6" height="4.2" fill="#e9ecef" stroke="#4a5a4e" stroke-width="0.7"/><path d="M1.5 2 L3 2 M1.5 3.2 L3 3.2" stroke="#444" stroke-width="0.6"/><rect x="3.8" y="1.4" width="1.5" height="2.4" fill="#3d6b4d"/></svg>
<b style="left:437.60px;top:70.09px;font:bold 4.5px/5.4px 'Liberation Sans',sans-serif;color:#111;">ClassLibrary</b>
<svg style="position:absolute;left:429.10px;top:77.88px" width="3" height="3.2" viewBox="0 0 3 3.2"><path d="M0.5 0.2 L2.7 1.6 L0.5 3.0 Z" fill="#333"/></svg>
<svg style="position:absolute;left:436.30px;top:76.98px" width="5.5" height="5.5" viewBox="0 0 5.5 5.5"><path d="M0.6 4.8 L3 2.4" stroke="#222" stroke-width="1.1"/><circle cx="3.6" cy="1.8" r="1.3" fill="#222"/></svg>
<b style="left:444.90px;top:77.31px;font:normal 4.95px/5.94px 'Liberation Sans',sans-serif;color:#222;">Properties</b>
<svg style="position:absolute;left:429.10px;top:85.37px" width="3" height="3.2" viewBox="0 0 3 3.2"><path d="M0.5 0.2 L2.7 1.6 L0.5 3.0 Z" fill="#333"/></svg>
<svg style="position:absolute;left:436.30px;top:84.47px" width="6" height="5" viewBox="0 0 6 5"><rect x="0.3" y="1.8" width="2" height="1.6" fill="#222"/><rect x="3.4" y="1.8" width="2" height="1.6" fill="#222"/><path d="M2 2.6 L3.6 2.6" stroke="#222" stroke-width="0.5"/></svg>
<b style="left:444.90px;top:84.80px;font:normal 4.95px/5.94px 'Liberation Sans',sans-serif;color:#222;">References</b>
<i style="left:417.10px;top:90.86px;width:112.70px;height:7.30px;background:#dfe1ea;"></i>
<svg style="position:absolute;left:429.10px;top:93.06px" width="3" height="3" viewBox="0 0 3 3"><path d="M2.6 0.3 L2.6 2.6 L0.3 2.6 Z" fill="#333"/></svg>
<svg style="position:absolute;left:436.30px;top:91.96px" width="6" height="5" viewBox="0 0 6 5"><path d="M0.3 0.8 L2.4 0.8 L3 1.5 L5.6 1.5 L5.6 4.5 L0.3 4.5 Z" fill="#e6d6b0"/></svg>
<b style="left:444.90px;top:92.29px;font:normal 4.95px/5.94px 'Liberation Sans',sans-serif;color:#222;">Enums</b>
<svg style="position:absolute;left:437.20px;top:100.35px" width="3" height="3.2" viewBox="0 0 3 3.2"><path d="M0.5 0.2 L2.7 1.6 L0.5 3.0 Z" fill="#333"/></svg>
<svg style="position:absolute;left:444.40px;top:99.45px" width="6" height="5" viewBox="0 0 6 5"><text x="0" y="4" font-family="Liberation Sans" font-size="4" font-weight="bold" fill="#6a8a78">C#</text></svg>
<b style="left:453.00px;top:99.78px;font:normal 4.95px/5.94px 'Liberation Sans',sans-serif;color:#222;">AdvancedStringProcessorV1.cs</b>
<svg style="position:absolute;left:437.20px;top:107.84px" width="3" height="3.2" viewBox="0 0 3 3.2"><path d="M0.5 0.2 L2.7 1.6 L0.5 3.0 Z" fill="#333"/></svg>
<svg style="position:absolute;left:444.40px;top:106.94px" width="6" height="5" viewBox="0 0 6 5"><text x="0" y="4" font-family="Liberation Sans" font-size="4" font-weight="bold" fill="#6a8a78">C#</text></svg>
<b style="left:453.00px;top:107.27px;font:normal 4.95px/5.94px 'Liberation Sans',sans-serif;color:#222;">AdvancedStringProcessorV2.cs</b>
<svg style="position:absolute;left:429.10px;top:115.33px" width="3" height="3.2" viewBox="0 0 3 3.2"><path d="M0.5 0.2 L2.7 1.6 L0.5 3.0 Z" fill="#333"/></svg>
<svg style="position:absolute;left:436.30px;top:114.43px" width="6" height="5" viewBox="0 0 6 5"><path d="M0.3 0.8 L2.4 0.8 L3 1.5 L5.6 1.5 L5.6 4.5 L0.3 4.5 Z" fill="#dcc18c"/></svg>
<b style="left:444.90px;top:114.76px;font:normal 4.95px/5.94px 'Liberation Sans',sans-serif;color:#222;">StructPerformance</b>
<svg style="position:absolute;left:429.10px;top:122.82px" width="3" height="3.2" viewBox="0 0 3 3.2"><path d="M0.5 0.2 L2.7 1.6 L0.5 3.0 Z" fill="#333"/></svg>
<svg style="position:absolute;left:436.30px;top:121.92px" width="6" height="5" viewBox="0 0 6 5"><path d="M0.3 0.8 L2.4 0.8 L3 1.5 L5.6 1.5 L5.6 4.5 L0.3 4.5 Z" fill="#dcc18c"/></svg>
<b style="left:444.90px;top:122.25px;font:normal 4.95px/5.94px 'Liberation Sans',sans-serif;color:#222;">Tasks</b>
<svg style="position:absolute;left:421.80px;top:130.51px" width="3" height="3" viewBox="0 0 3 3"><path d="M2.6 0.3 L2.6 2.6 L0.3 2.6 Z" fill="#333"/></svg>
<svg style="position:absolute;left:429.00px;top:129.41px" width="6.5" height="5" viewBox="0 0 6.5 5"><rect x="0.4" y="0.4" width="5.6" height="4.2" fill="#e9ecef" stroke="#4a5a4e" stroke-width="0.7"/><path d="M1.5 2 L3 2 M1.5 3.2 L3 3.2" stroke="#444" stroke-width="0.6"/><rect x="3.8" y="1.4" width="1.5" height="2.4" fill="#3d6b4d"/></svg>
<b style="left:437.60px;top:129.74px;font:normal 4.95px/5.94px 'Liberation Sans',sans-serif;color:#222;">ClassLibrary.Tests</b>
<svg style="position:absolute;left:429.10px;top:137.80px" width="3" height="3.2" viewBox="0 0 3 3.2"><path d="M0.5 0.2 L2.7 1.6 L0.5 3.0 Z" fill="#333"/></svg>
<svg style="position:absolute;left:436.30px;top:136.90px" width="5.5" height="5.5" viewBox="0 0 5.5 5.5"><path d="M0.6 4.8 L3 2.4" stroke="#222" stroke-width="1.1"/><circle cx="3.6" cy="1.8" r="1.3" fill="#222"/></svg>
<b style="left:444.90px;top:137.23px;font:normal 4.95px/5.94px 'Liberation Sans',sans-serif;color:#222;">Properties</b>
<svg style="position:absolute;left:429.10px;top:145.29px" width="3" height="3.2" viewBox="0 0 3 3.2"><path d="M0.5 0.2 L2.7 1.6 L0.5 3.0 Z" fill="#333"/></svg>
<svg style="position:absolute;left:436.30px;top:144.39px" width="6" height="5" viewBox="0 0 6 5"><rect x="0.3" y="1.8" width="2" height="1.6" fill="#222"/><rect x="3.4" y="1.8" width="2" height="1.6" fill="#222"/><path d="M2 2.6 L3.6 2.6" stroke="#222" stroke-width="0.5"/></svg>
<b style="left:444.90px;top:144.72px;font:normal 4.95px/5.94px 'Liberation Sans',sans-serif;color:#222;">References</b>
<svg style="position:absolute;left:429.10px;top:152.78px" width="3" height="3.2" viewBox="0 0 3 3.2"><path d="M0.5 0.2 L2.7 1.6 L0.5 3.0 Z" fill="#333"/></svg>
<svg style="position:absolute;left:436.30px;top:151.88px" width="6" height="5" viewBox="0 0 6 5"><text x="0" y="4" font-family="Liberation Sans" font-size="4" font-weight="bold" fill="#6a8a78">C#</text></svg>
<b style="left:444.90px;top:152.21px;font:normal 4.95px/5.94px 'Liberation Sans',sans-serif;color:#222;">AdvancedStringProcessorV1Should.cs</b>
<svg style="position:absolute;left:436.30px;top:159.37px" width="6" height="5.5" viewBox="0 0 6 5.5"><rect x="0.6" y="0.6" width="4.4" height="4.4" rx="1.2" fill="none" stroke="#333" stroke-width="0.7"/><path d="M2.8 0 L2.8 1.6" stroke="#333" stroke-width="0.7"/></svg>
<b style="left:444.90px;top:159.70px;font:normal 4.95px/5.94px 'Liberation Sans',sans-serif;color:#222;">App.config</b>
<svg style="position:absolute;left:436.30px;top:166.86px" width="6" height="5" viewBox="0 0 6 5"><text x="0" y="4" font-family="Liberation Sans" font-size="4" font-weight="bold" fill="#6a8a78">C#</text></svg>
<b style="left:444.90px;top:167.19px;font:normal 4.95px/5.94px 'Liberation Sans',sans-serif;color:#222;">ObjectReferenceEqualityExample.cs</b>
<svg style="position:absolute;left:436.30px;top:174.35px" width="6" height="5.5" viewBox="0 0 6 5.5"><rect x="0.6" y="0.6" width="4.4" height="4.4" rx="1.2" fill="none" stroke="#333" stroke-width="0.7"/><path d="M2.8 0 L2.8 1.6" stroke="#333" stroke-width="0.7"/></svg>
<b style="left:444.90px;top:174.68px;font:normal 4.95px/5.94px 'Liberation Sans',sans-serif;color:#222;">packages.config</b>
<svg style="position:absolute;left:429.10px;top:182.74px" width="3" height="3.2" viewBox="0 0 3 3.2"><path d="M0.5 0.2 L2.7 1.6 L0.5 3.0 Z" fill="#333"/></svg>
<svg style="position:absolute;left:436.30px;top:181.84px" width="6" height="5" viewBox="0 0 6 5"><text x="0" y="4" font-family="Liberation Sans" font-size="4" font-weight="bold" fill="#6a8a78">C#</text></svg>
<b style="left:444.90px;top:182.17px;font:normal 4.95px/5.94px 'Liberation Sans',sans-serif;color:#222;">StringProcessorShould.cs</b>
<svg style="position:absolute;left:436.30px;top:189.33px" width="6" height="5" viewBox="0 0 6 5"><text x="0" y="4" font-family="Liberation Sans" font-size="4" font-weight="bold" fill="#6a8a78">C#</text></svg>
<b style="left:444.90px;top:189.66px;font:normal 4.95px/5.94px 'Liberation Sans',sans-serif;color:#222;">StructEqualityPerformance.cs</b>
<i style="left:0.00px;top:276.90px;width:533.33px;height:12.80px;background:#5d6b99;"></i>
<i style="left:0.00px;top:276.90px;width:533.33px;height:0.90px;background:#4f5a88;"></i>
<b style="left:2.60px;top:281.38px;font:normal 4.7px/5.64px 'Liberation Sans',sans-serif;color:#eef0f8;">Test Explorer</b>
<b style="left:34.50px;top:281.38px;font:normal 4.7px/5.64px 'Liberation Sans',sans-serif;color:#eef0f8;">Error List</b>
<b style="left:58.40px;top:281.38px;font:normal 4.7px/5.64px 'Liberation Sans',sans-serif;color:#eef0f8;">Output</b>
<i style="left:0.00px;top:289.70px;width:533.33px;height:9.97px;background:#42508c;"></i>
<i style="left:0.00px;top:298.30px;width:533.33px;height:1.37px;background:#384276;"></i>
<svg style="position:absolute;left:2.50px;top:291.20px" width="6" height="6" viewBox="0 0 6 6"><path d="M1 5.5 L1 1 L5 1 L5 5 M0.2 4.3 L1 5.5 L1.8 4.3" stroke="#eef" stroke-width="0.7" fill="none"/></svg>
<b style="left:11.50px;top:292.55px;font:normal 4.75px/5.7px 'Liberation Sans',sans-serif;color:#f2f3f8;">Ready</b>
<b style="left:202.00px;top:292.60px;font:normal 4.5px/5.4px 'Liberation Sans',sans-serif;color:#f2f3f8;">Ln 28</b>
<b style="left:241.00px;top:292.60px;font:normal 4.5px/5.4px 'Liberation Sans',sans-serif;color:#f2f3f8;">Col 70</b>
<b style="left:280.00px;top:292.60px;font:normal 4.5px/5.4px 'Liberation Sans',sans-serif;color:#f2f3f8;">Ch 70</b>
<b style="left:336.00px;top:292.60px;font:normal 4.5px/5.4px 'Liberation Sans',sans-serif;color:#f2f3f8;">INS</b>
<svg style="position:absolute;left:449.00px;top:291.60px" width="4" height="5" viewBox="0 0 4 5"><path d="M2 0.3 L3.8 2.3 L2.6 2.3 L2.6 4.8 L1.4 4.8 L1.4 2.3 L0.2 2.3 Z" fill="#f2f3f8"/></svg>
<b style="left:455.50px;top:292.40px;font:normal 5.0px/6.0px 'Liberation Sans',sans-serif;color:#f2f3f8;">Add to Source Control</b>
<svg style="position:absolute;left:507.00px;top:293.50px" width="3" height="2" viewBox="0 0 3 2"><path d="M0 0 L3 0 L1.5 1.8 Z" fill="#f2f3f8"/></svg>
<svg style="position:absolute;left:519.00px;top:291.00px" width="5" height="6" viewBox="0 0 5 6"><path d="M2.5 0.3 Q4.3 0.8 4.3 3 L4.8 4.5 L0.2 4.5 L0.7 3 Q0.7 0.8 2.5 0.3 Z M1.8 5 L3.2 5 L2.5 5.8 Z" fill="#f2f3f8"/></svg>
<div style="left:3.0px;top:47.6px;width:402.20px;height:221.20px;overflow:hidden">
<b style="left:30.30px;top:5.69px;font:normal 6.62px/9.42px 'Liberation Mono',monospace" class="cd"><span style="color:#262a40">namespace</span> <span style="color:#202020">ClassLibrary</span><span style="color:#202020">.</span><span style="color:#202020">Enums</span></b>
<i style="left:21.00px;top:13.51px;width:1.9px;height:9.42px;background:#e8e87a"></i>
<b style="left:30.30px;top:15.11px;font:normal 6.62px/9.42px 'Liberation Mono',monospace" class="cd"><span style="color:#202020">{</span></b>
<b style="left:46.18px;top:25.64px;font:normal 4.6px/6px 'Liberation Sans',sans-serif;letter-spacing:0.5px;color:#a2a2aa">4 references</b>
<i style="left:21.00px;top:22.93px;width:1.9px;height:16.62px;background:#e8e87a"></i>
<b style="left:30.30px;top:31.73px;font:normal 6.62px/9.42px 'Liberation Mono',monospace" class="cd">    <span style="color:#262a40">public</span> <span style="color:#262a40">enum</span> <span style="color:#93acb0">StringProcessingOptionsV2</span></b>
<i style="left:21.00px;top:39.55px;width:1.9px;height:9.42px;background:#e8e87a"></i>
<b style="left:30.30px;top:41.15px;font:normal 6.62px/9.42px 'Liberation Mono',monospace" class="cd">    <span style="color:#202020">{</span></b>
<i style="left:21.00px;top:48.97px;width:1.9px;height:9.42px;background:#e8e87a"></i>
<b style="left:30.30px;top:50.57px;font:normal 6.62px/9.42px 'Liberation Mono',monospace" class="cd">        <span style="color:#202020">None</span> <span style="color:#202020">=</span> <span style="color:#202020">0</span><span style="color:#202020">,</span></b>
<i style="left:21.00px;top:58.39px;width:1.9px;height:9.42px;background:#e8e87a"></i>
<b style="left:30.30px;top:59.99px;font:normal 6.62px/9.42px 'Liberation Mono',monospace" class="cd">        <span style="color:#202020">ConvertToUppercase</span> <span style="color:#202020">=</span> <span style="color:#202020">1</span><span style="color:#202020">,</span></b>
<i style="left:21.00px;top:67.81px;width:1.9px;height:9.42px;background:#e8e87a"></i>
<b style="left:30.30px;top:69.41px;font:normal 6.62px/9.42px 'Liberation Mono',monospace" class="cd">        <span style="color:#202020">AddLength</span> <span style="color:#202020">=</span> <span style="color:#202020">2</span></b>
<i style="left:21.00px;top:77.23px;width:1.9px;height:9.42px;background:#e8e87a"></i>
<b style="left:30.30px;top:78.83px;font:normal 6.62px/9.42px 'Liberation Mono',monospace" class="cd">    <span style="color:#202020">}</span></b>
<b style="left:46.18px;top:89.36px;font:normal 4.6px/6px 'Liberation Sans',sans-serif;letter-spacing:0.5px;color:#a2a2aa">0 references</b>
<i style="left:21.00px;top:86.65px;width:1.9px;height:16.62px;background:#e8e87a"></i>
<b style="left:30.30px;top:95.45px;font:normal 6.62px/9.42px 'Liberation Mono',monospace" class="cd">    <span style="color:#262a40">public</span> <span style="color:#262a40">class</span> <span style="color:#93acb0">AdvancedStringProcessorV2</span></b>
<i style="left:21.00px;top:103.27px;width:1.9px;height:9.42px;background:#e8e87a"></i>
<b style="left:30.30px;top:104.87px;font:normal 6.62px/9.42px 'Liberation Mono',monospace" class="cd">    <span style="color:#202020">{</span></b>
<b style="left:62.06px;top:115.40px;font:normal 4.6px/6px 'Liberation Sans',sans-serif;letter-spacing:0.5px;color:#a2a2aa">0 references</b>
<i style="left:21.00px;top:112.69px;width:1.9px;height:16.62px;background:#e8e87a"></i>
<b style="left:30.30px;top:121.49px;font:normal 6.62px/9.42px 'Liberation Mono',monospace" class="cd">        <span style="color:#262a40">public</span> <span style="color:#93acb0">List</span><span style="color:#202020">&lt;</span><span style="color:#262a40">string</span><span style="color:#202020">&gt;</span> <span style="color:#6a6054">Process</span><span style="color:#202020">(</span><span style="color:#93acb0">List</span><span style="color:#202020">&lt;</span><span style="color:#262a40">string</span><span style="color:#202020">&gt;</span> <span style="color:#a8a8ac">stringsToProcess</span><span style="color:#202020">,</span></b>
<i style="left:21.00px;top:129.31px;width:1.9px;height:9.42px;background:#e8e87a"></i>
<b style="left:30.30px;top:130.91px;font:normal 6.62px/9.42px 'Liberation Mono',monospace" class="cd">                                    <span style="color:#93acb0">StringProcessingOptionsV2</span> <span style="color:#3c4156">options</span><span style="color:#202020">)</span></b>
<i style="left:21.00px;top:138.73px;width:1.9px;height:9.42px;background:#e8e87a"></i>
<b style="left:30.30px;top:140.33px;font:normal 6.62px/9.42px 'Liberation Mono',monospace" class="cd">        <span style="color:#202020">{</span></b>
<i style="left:21.00px;top:148.15px;width:1.9px;height:9.42px;background:#e8e87a"></i>
<b style="left:30.30px;top:149.75px;font:normal 6.62px/9.42px 'Liberation Mono',monospace" class="cd">            <span style="color:#262a40">bool</span> <span style="color:#a8a8ac">noProcessingIsRequired</span> <span style="color:#202020">=</span> <span style="color:#3c4156">options</span> <span style="color:#202020">=</span><span style="color:#202020">=</span> <span style="color:#93acb0">StringProcessingOptionsV2</span><span style="color:#202020">.</span><span style="color:#202020">None</span><span style="color:#202020">;</span></b>
<i style="left:21.00px;top:157.57px;width:1.9px;height:9.42px;background:#e8e87a"></i>
<b style="left:30.30px;top:159.17px;font:normal 6.62px/9.42px 'Liberation Mono',monospace" class="cd">            <span style="color:#262a40">bool</span> <span style="color:#a8a8ac">conversionToUppercaseIsRequired</span> <span style="color:#202020">=</span></b>
<i style="left:21.00px;top:166.99px;width:1.9px;height:9.42px;background:#e8e87a"></i>
<b style="left:30.30px;top:168.59px;font:normal 6.62px/9.42px 'Liberation Mono',monospace" class="cd">                <span style="color:#202020">(</span><span style="color:#3c4156">options</span> <span style="color:#202020">&amp;</span> <span style="color:#93acb0">StringProcessingOptionsV2</span><span style="color:#202020">.</span><span style="color:#202020">ConvertToUppercase</span><span style="color:#202020">)</span> <span style="color:#202020">!</span><span style="color:#202020">=</span> <span style="color:#202020">0</span><span style="color:#202020">;</span></b>
<i style="left:21.00px;top:176.41px;width:1.9px;height:9.42px;background:#e8e87a"></i>
<b style="left:30.30px;top:178.01px;font:normal 6.62px/9.42px 'Liberation Mono',monospace" class="cd">            <span style="color:#262a40">bool</span> <span style="color:#a8a8ac">addingLengthIsRequired</span> <span style="color:#202020">=</span></b>
<i style="left:21.00px;top:185.83px;width:1.9px;height:9.42px;background:#e8e87a"></i>
<i style="left:28.50px;top:185.83px;width:372.50px;height:9.42px;border:0.6px solid #e2e2e6;box-sizing:border-box"></i>
<b style="left:30.30px;top:187.43px;font:normal 6.62px/9.42px 'Liberation Mono',monospace" class="cd">                <span style="color:#3c4156">options</span><span style="color:#202020">.</span><span style="color:#6a6054">HasFlag</span><span style="color:#202020">(</span><span style="color:#93acb0">StringProcessingOptionsV2</span><span style="color:#202020">.</span><span style="color:#202020">AddLength</span><span style="color:#202020">)</span><span style="color:#202020">;</span></b>
<i style="left:21.00px;top:195.25px;width:1.9px;height:9.42px;background:#e8e87a"></i>
<b style="left:30.30px;top:196.85px;font:normal 6.62px/9.42px 'Liberation Mono',monospace" class="cd">        <span style="color:#202020">}</span></b>
<b style="left:30.30px;top:206.27px;font:normal 6.62px/9.42px 'Liberation Mono',monospace" class="cd">    <span style="color:#202020">}</span></b>
<b style="left:30.30px;top:215.69px;font:normal 6.62px/9.42px 'Liberation Mono',monospace" class="cd"><span style="color:#202020">}</span></b>
</div>
<i style="left:28.3px;top:54.40px;width:4px;height:4px;background:#fff;border:0.6px solid #a0a0a8;box-sizing:border-box"></i>
<i style="left:29.30px;top:56.10px;width:2.00px;height:0.60px;background:#777;"></i>
<i style="left:28.3px;top:80.44px;width:4px;height:4px;background:#fff;border:0.6px solid #a0a0a8;box-sizing:border-box"></i>
<i style="left:29.30px;top:82.14px;width:2.00px;height:0.60px;background:#777;"></i>
<i style="left:28.3px;top:144.16px;width:4px;height:4px;background:#fff;border:0.6px solid #a0a0a8;box-sizing:border-box"></i>
<i style="left:29.30px;top:145.86px;width:2.00px;height:0.60px;background:#777;"></i>
<i style="left:28.3px;top:170.20px;width:4px;height:4px;background:#fff;border:0.6px solid #a0a0a8;box-sizing:border-box"></i>
<i style="left:29.30px;top:171.90px;width:2.00px;height:0.60px;background:#777;"></i>
<svg style="position:absolute;left:144.46px;top:176.80px" width="27.790000000000003" height="1.5" viewBox="0 0 27.790000000000003 1.5"><path d="M0 1.2 L0.80 0.2 L1.60 1.2 L2.40 0.2 L3.20 1.2 L4.00 0.2 L4.80 1.2 L5.60 0.2 L6.40 1.2 L7.20 0.2 L8.00 1.2 L8.80 0.2 L9.60 1.2 L10.40 0.2 L11.20 1.2 L12.00 0.2 L12.80 1.2 L13.60 0.2 L14.40 1.2 L15.20 0.2 L16.00 1.2 L16.80 0.2 L17.60 1.2 L18.40 0.2 L19.20 1.2 L20.00 0.2 L20.80 1.2 L21.60 0.2 L22.40 1.2 L23.20 0.2 L24.00 1.2 L24.80 0.2 L25.60 1.2 L26.40 0.2 L27.20 1.2" stroke="#d03a3a" stroke-width="0.5" fill="none"/></svg>
<svg style="position:absolute;left:197.50px;top:123.60px" width="3" height="8.4" viewBox="0 0 3 8.4"><path d="M0.3 0.4 L1.2 0.4 L1.5 0.8 L1.8 0.4 L2.7 0.4 M1.5 0.8 L1.5 7.6 M0.3 8.0 L1.2 8.0 L1.5 7.6 L1.8 8.0 L2.7 8.0" stroke="#444" stroke-width="0.6" fill="none"/></svg>
<i style="left:405.20px;top:47.60px;width:7.80px;height:221.20px;background:#f4f4f6;"></i>
<i style="left:405.20px;top:47.60px;width:0.50px;height:221.20px;background:#e4e4ea;"></i>
<svg style="position:absolute;left:406.60px;top:49.20px" width="5.5" height="5.5" viewBox="0 0 5.5 5.5"><path d="M2.75 0.3 L2.75 5.2 M0.3 2.75 L5.2 2.75" stroke="#222" stroke-width="1.0"/></svg>
<i style="left:405.70px;top:55.20px;width:7.30px;height:0.50px;background:#999;"></i>
<svg style="position:absolute;left:407.70px;top:57.40px" width="3" height="2" viewBox="0 0 3 2"><path d="M0 1.8 L3 1.8 L1.5 0 Z" fill="#888"/></svg>
<i style="left:408.50px;top:82.00px;width:3.60px;height:87.00px;background:#c6c7cc;"></i>
<svg style="position:absolute;left:407.70px;top:264.30px" width="3" height="2" viewBox="0 0 3 2"><path d="M0 0 L3 0 L1.5 1.8 Z" fill="#888"/></svg>
<i style="left:405.80px;top:68.00px;width:2.60px;height:80.00px;background:#ecebb0;"></i>
<i style="left:405.80px;top:130.50px;width:6.80px;height:1.20px;background:#c03040;"></i>
<i style="left:405.80px;top:152.30px;width:6.80px;height:1.00px;background:#555;"></i>
<i style="left:3.00px;top:268.80px;width:410.00px;height:8.10px;background:#eeeff3;"></i>
<b style="left:4.80px;top:270.89px;font:normal 4.6px/5.52px 'Liberation Sans',sans-serif;color:#444;">133 %</b>
<svg style="position:absolute;left:24.00px;top:271.20px" width="2.5" height="1.6" viewBox="0 0 2.5 1.6"><path d="M0 0 L2.5 0 L1.25 1.5 Z" fill="#555"/></svg>
<i style="left:30.00px;top:269.40px;width:0.50px;height:6.90px;background:#d6d8e0;"></i>
<svg style="position:absolute;left:43.00px;top:270.20px" width="4" height="4" viewBox="0 0 4 4"><circle cx="2" cy="2" r="1.7" fill="#c53a3a"/></svg>
<b style="left:48.50px;top:271.25px;font:normal 4.0px/4.8px 'Liberation Sans',sans-serif;color:#666;">1</b>
<svg style="position:absolute;left:62.00px;top:270.10px" width="4" height="4" viewBox="0 0 4 4"><path d="M2 0.2 L3.9 3.8 L0.1 3.8 Z" fill="#d9a12e"/></svg>
<b style="left:68.00px;top:271.25px;font:normal 4.0px/4.8px 'Liberation Sans',sans-serif;color:#666;">0</b>
<svg style="position:absolute;left:80.00px;top:270.80px" width="3" height="2.5" viewBox="0 0 3 2.5"><path d="M0 1.25 L3 0 L3 2.5 Z" fill="#666"/></svg>
<svg style="position:absolute;left:92.00px;top:270.80px" width="3" height="2.5" viewBox="0 0 3 2.5"><path d="M3 1.25 L0 0 L0 2.5 Z" fill="#666"/></svg>
<svg style="position:absolute;left:111.00px;top:270.00px" width="4" height="4" viewBox="0 0 4 4"><circle cx="2" cy="2" r="1.5" fill="none" stroke="#555" stroke-width="0.6"/></svg>
<svg style="position:absolute;left:117.50px;top:271.20px" width="2.5" height="1.6" viewBox="0 0 2.5 1.6"><path d="M0 0 L2.5 0 L1.25 1.5 Z" fill="#555"/></svg>
<i style="left:124.50px;top:269.40px;width:0.50px;height:6.90px;background:#d6d8e0;"></i>
<svg style="position:absolute;left:131.00px;top:270.80px" width="2" height="2.5" viewBox="0 0 2 2.5"><path d="M2 0 L0 1.25 L2 2.5 Z" fill="#777"/></svg>
<i style="left:137.00px;top:270.20px;width:220.70px;height:3.40px;background:#c4c5cb;"></i>
<svg style="position:absolute;left:400.00px;top:270.80px" width="2" height="2.5" viewBox="0 0 2 2.5"><path d="M0 0 L2 1.25 L0 2.5 Z" fill="#777"/></svg>
<i style="left:505.0px;top:267.0px;width:14px;height:14px;border-radius:50%;background:rgba(140,140,150,0.28)"></i>
</div>
<div class="tile" style="left:0.000px;top:599.333px">
<i style="left:0.00px;top:0.00px;width:533.33px;height:27.70px;background:#d2d8ee;"></i>
<i style="left:0.00px;top:25.90px;width:533.33px;height:1.50px;background:#dce1f4;"></i>
<svg style="position:absolute;left:4.00px;top:2.00px" width="11" height="10" viewBox="0 0 11 10"><rect x="1.0" y="2.4" width="2.1" height="4.4" fill="#5b4596"/><path d="M3 4.6 L5.2 4.6" stroke="#6a48b0" stroke-width="1.2"/><path d="M5.3 4.6 L9.0 1.4 L9.0 7.8 Z" fill="#c6a8ee" stroke="#6a3cb4" stroke-width="1.5" stroke-linejoin="round"/></svg>
<b style="left:18.00px;top:4.46px;font:normal 4.9px/5.88px 'Liberation Sans',sans-serif;color:#1e1e28;">File</b>
<b style="left:33.00px;top:4.46px;font:normal 4.9px/5.88px 'Liberation Sans',sans-serif;color:#1e1e28;">Edit</b>
<b style="left:51.00px;top:4.46px;font:normal 4.9px/5.88px 'Liberation Sans',sans-serif;color:#1e1e28;">View</b>
<b style="left:70.00px;top:4.46px;font:normal 4.9px/5.88px 'Liberation Sans',sans-serif;color:#1e1e28;">Project</b>
<b style="left:93.00px;top:4.46px;font:normal 4.9px/5.88px 'Liberation Sans',sans-serif;color:#1e1e28;">Build</b>
<b style="left:113.00px;top:4.46px;font:normal 4.9px/5.88px 'Liberation Sans',sans-serif;color:#1e1e28;">Debug</b>
<b style="left:136.00px;top:4.46px;font:normal 4.9px/5.88px 'Liberation Sans',sans-serif;color:#1e1e28;">Test</b>
<b style="left:152.00px;top:4.46px;font:normal 4.9px/5.88px 'Liberation Sans',sans-serif;color:#1e1e28;">Analyze</b>
<b style="left:178.00px;top:4.46px;font:normal 4.9px/5.88px 'Liberation Sans',sans-serif;color:#1e1e28;">Tools</b>
<b style="left:197.00px;top:4.46px;font:normal 4.9px/5.88px 'Liberation Sans',sans-serif;color:#1e1e28;">Extensions</b>
<b style="left:229.00px;top:4.46px;font:normal 4.9px/5.88px 'Liberation Sans',sans-serif;color:#1e1e28;">Window</b>
<b style="left:255.00px;top:4.46px;font:normal 4.9px/5.88px 'Liberation Sans',sans-serif;color:#1e1e28;">Help</b>
<i style="left:275.00px;top:2.40px;width:91.00px;height:8.40px;background:#fdfdfe;"></i>
<b style="left:277.50px;top:4.49px;font:normal 4.85px/5.82px 'Liberation Sans',sans-serif;color:#6a6c78;">Search (Ctrl+Q)</b>
<svg style="position:absolute;left:357.00px;top:3.80px" width="6" height="6" viewBox="0 0 6 6"><circle cx="3.6" cy="2.4" r="1.6" fill="none" stroke="#444" stroke-width="0.8"/><path d="M2.5 3.5 L0.8 5.2" stroke="#444" stroke-width="0.9"/></svg>
<i style="left:371.00px;top:2.00px;width:37.00px;height:9.00px;background:#d9def2;"></i>
<b style="left:377.00px;top:4.58px;font:normal 4.7px/5.64px 'Liberation Sans',sans-serif;color:#4a4c58;">ClassLibrary</b>
<svg style="position:absolute;left:459.00px;top:2.50px" width="7" height="8.5" viewBox="0 0 7 8.5"><circle cx="3.5" cy="2.6" r="1.7" fill="none" stroke="#333" stroke-width="0.8"/><path d="M0.8 8 Q3.5 4.3 6.2 8 Z" fill="#333"/></svg>
<i style="left:483.00px;top:6.60px;width:4.50px;height:0.45px;background:#8a8e9c;"></i>
<svg style="position:absolute;left:501.50px;top:4.00px" width="5" height="5" viewBox="0 0 5 5"><path d="M1.3 0.6 L4.4 0.6 L4.4 3.7 M0.6 1.4 L3.6 1.4 L3.6 4.4 L0.6 4.4 Z" stroke="#777b88" stroke-width="0.55" fill="none"/></svg>
<svg style="position:absolute;left:521.00px;top:4.30px" width="5" height="5" viewBox="0 0 5 5"><path d="M0.5 0.5 L4.5 4.5 M4.5 0.5 L0.5 4.5" stroke="#8a8e9c" stroke-width="0.55"/></svg>
<i style="left:6.30px;top:14.50px;width:0.60px;height:10.00px;background:#b9bfd6;"></i>
<svg style="position:absolute;left:10.00px;top:16.20px" width="6" height="6" viewBox="0 0 6 6"><circle cx="3" cy="3" r="2" fill="none" stroke="#1d3a6e" stroke-width="1.2"/><path d="M1.6 3 L4.2 3" stroke="#1d3a6e" stroke-width="0.8"/></svg>
<i style="left:20.00px;top:18.80px;width:1.30px;height:1.10px;background:#444;border-radius:0"></i>
<svg style="position:absolute;left:24.50px;top:16.20px" width="6" height="6" viewBox="0 0 6 6"><circle cx="3" cy="3" r="2" fill="none" stroke="#c0c6dc" stroke-width="1.1"/></svg>
<i style="left:33.50px;top:15.50px;width:0.50px;height:8.00px;background:#c3c8dc;"></i>
<svg style="position:absolute;left:36.50px;top:15.60px" width="7" height="7" viewBox="0 0 7 7"><rect x="1" y="2.2" width="4.4" height="3.8" fill="none" stroke="#4a4e60" stroke-width="1"/><path d="M4.5 0.3 L5.2 1.7 L6.6 2.2 L5.2 2.7" fill="#4a4e60"/></svg>
<i style="left:46.80px;top:18.80px;width:1.30px;height:1.10px;background:#444;border-radius:0"></i>
<svg style="position:absolute;left:50.80px;top:15.80px" width="7" height="7" viewBox="0 0 7 7"><path d="M0.5 2 L2.5 2 L3 2.8 L6 2.8 L6 6.3 L0.5 6.3 Z" fill="#d8b8b0"/><path d="M3.5 0.5 L5.5 1.5" stroke="#b89890" stroke-width="0.8"/></svg>
<svg style="position:absolute;left:61.00px;top:16.30px" width="6" height="6" viewBox="0 0 6 6"><path d="M0.4 0.4 L4.6 0.4 L5.6 1.4 L5.6 5.6 L0.4 5.6 Z" fill="#1d3468"/><rect x="1.6" y="0.4" width="2.6" height="1.8" fill="#d9ddef"/></svg>
<svg style="position:absolute;left:69.50px;top:15.60px" width="7" height="7" viewBox="0 0 7 7"><path d="M2.4 0.3 L6.6 0.3 L6.6 4.3 L2.4 4.3 Z" fill="#4a5d8f"/><path d="M0.3 2.6 L4.5 2.6 L4.5 6.6 L0.3 6.6 Z" fill="#1d3468"/></svg>
<svg style="position:absolute;left:80.50px;top:16.20px" width="7" height="6" viewBox="0 0 7 6"><path d="M1.5 2.5 Q4 0.3 5.8 2.5 Q6.5 4.5 4 5.6" fill="none" stroke="#1d3468" stroke-width="1.1"/><path d="M0.4 1 L1.4 3.4 L3.4 2.2 Z" fill="#1d3468"/></svg>
<i style="left:92.00px;top:18.80px;width:1.30px;height:1.10px;background:#444;border-radius:0"></i>
<svg style="position:absolute;left:97.50px;top:16.20px" width="7" height="6" viewBox="0 0 7 6"><path d="M5.5 2.5 Q3 0.3 1.2 2.5 Q0.5 4.5 3 5.6" fill="none" stroke="#c3c8dc" stroke-width="1.1"/><path d="M6.6 1 L5.6 3.4 L3.6 2.2 Z" fill="#c3c8dc"/></svg>
<i style="left:106.20px;top:18.90px;width:1.80px;height:0.60px;background:#c3c8dc;"></i>
<i style="left:106.80px;top:18.30px;width:0.60px;height:1.80px;background:#c3c8dc;"></i>
<i style="left:111.00px;top:15.00px;width:0.50px;height:8.50px;background:#b9bfd6;"></i>
<i style="left:114.00px;top:15.00px;width:27.00px;height:8.50px;background:#fbfbfd;"></i>
<b style="left:116.50px;top:17.44px;font:normal 4.6px/5.52px 'Liberation Sans',sans-serif;color:#333;">Debug</b>
<svg style="position:absolute;left:137.00px;top:18.40px" width="3" height="2" viewBox="0 0 3 2"><path d="M0 0 L3 0 L1.5 1.8 Z" fill="#333"/></svg>
<i style="left:143.50px;top:15.00px;width:46.50px;height:8.50px;background:#fbfbfd;"></i>
<b style="left:146.00px;top:17.44px;font:normal 4.6px/5.52px 'Liberation Sans',sans-serif;color:#444;">Any CPU</b>
<svg style="position:absolute;left:186.00px;top:18.40px" width="3" height="2" viewBox="0 0 3 2"><path d="M0 0 L3 0 L1.5 1.8 Z" fill="#333"/></svg>
<svg style="position:absolute;left:194.50px;top:16.70px" width="4" height="5" viewBox="0 0 4 5"><path d="M0 0 L3.5 2.5 L0 5 Z" fill="#2c7a3c"/></svg>
<b style="left:201.00px;top:17.34px;font:normal 4.6px/5.52px 'Liberation Sans',sans-serif;color:#333;">Start</b>
<svg style="position:absolute;left:214.00px;top:18.60px" width="3" height="2" viewBox="0 0 3 2"><path d="M0 0 L3 0 L1.5 1.8 Z" fill="#333"/></svg>
<i style="left:220.00px;top:15.00px;width:0.50px;height:8.50px;background:#b9bfd6;"></i>
<svg style="position:absolute;left:222.50px;top:16.20px" width="7" height="6" viewBox="0 0 7 6"><path d="M0.5 5.5 L3 1 L6 1 L6 3.5 L3 5.5 Z" fill="#c9b08a"/><path d="M0.5 5.5 L3 3.5" stroke="#555" stroke-width="0.6"/></svg>
<i style="left:231.30px;top:20.60px;width:1.30px;height:1.30px;background:#333;border-radius:0"></i>
<svg style="position:absolute;left:240.00px;top:16.00px" width="7" height="6.5" viewBox="0 0 7 6.5"><path d="M0.6 0.5 L0.6 5.8 M2.2 2 L2.2 5.8 M2.2 2.3 L4.6 2.3 L4.6 5.8" stroke="#3f4660" stroke-width="0.9" fill="none"/></svg>
<svg style="position:absolute;left:250.00px;top:15.80px" width="7" height="7" viewBox="0 0 7 7"><path d="M0.8 1 L6.2 1 M0.8 2.6 L3 2.6 M4 2.6 L6.2 2.6 M2.2 1 L2.2 6.3 M4.6 2.6 L4.6 6.3" stroke="#454c64" stroke-width="0.9" fill="none"/></svg>
<i style="left:259.50px;top:15.50px;width:0.50px;height:8.00px;background:#c3c8dc;"></i>
<svg style="position:absolute;left:263.50px;top:16.20px" width="6" height="6" viewBox="0 0 6 6"><path d="M0.5 1 L5.5 1 M3 1 L3 5.6" stroke="#5b6275" stroke-width="1.0" fill="none"/></svg>
<svg style="position:absolute;left:272.00px;top:16.20px" width="7" height="6" viewBox="0 0 7 6"><path d="M0.5 1 L3 1 M1.7 1 L1.7 5 M3.5 3 L6.5 5.5 M4 5.5 L6.5 5.5" stroke="#6d7389" stroke-width="0.9" fill="none"/></svg>
<i style="left:281.50px;top:15.50px;width:0.50px;height:8.00px;background:#c3c8dc;"></i>
<svg style="position:absolute;left:285.00px;top:16.00px" width="5" height="6.5" viewBox="0 0 5 6.5"><path d="M0.5 0.3 L4.5 0.3 L4.5 6.2 L2.5 4.6 L0.5 6.2 Z" fill="#1f2640"/></svg>
<svg style="position:absolute;left:294.00px;top:16.00px" width="6" height="6.5" viewBox="0 0 6 6.5"><path d="M0.5 0.5 L4 0.5 L4 5.5 L2.2 4.2 L0.5 5.5 Z" fill="none" stroke="#c3c8dc" stroke-width="0.8"/></svg>
<svg style="position:absolute;left:303.00px;top:16.00px" width="6" height="6.5" viewBox="0 0 6 6.5"><path d="M0.5 0.5 L4 0.5 L4 5.5 L2.2 4.2 L0.5 5.5 Z" fill="none" stroke="#c3c8dc" stroke-width="0.8"/></svg>
<svg style="position:absolute;left:312.00px;top:16.00px" width="6" height="6.5" viewBox="0 0 6 6.5"><path d="M0.5 0.5 L4 0.5 L4 5.5 L2.2 4.2 L0.5 5.5 Z" fill="none" stroke="#c3c8dc" stroke-width="0.8"/></svg>
<i style="left:321.00px;top:20.60px;width:1.30px;height:1.30px;background:#333;border-radius:0"></i>
<svg style="position:absolute;left:478.50px;top:16.30px" width="7" height="6.5" viewBox="0 0 7 6.5"><path d="M0.5 6 L5.5 6 M1.2 4.8 Q2 1.6 4.8 1.8 M3.8 0.6 L5.2 1.8 L3.8 3" stroke="#333" stroke-width="0.7" fill="none"/></svg>
<b style="left:486.00px;top:17.58px;font:normal 4.7px/5.64px 'Liberation Sans',sans-serif;color:#333;">Live Share</b>
<svg style="position:absolute;left:519.00px;top:15.50px" width="6" height="8" viewBox="0 0 6 8"><path d="M1 1 L5 1 M1 3 L4 3 M1 1 L1 7 M3 5 L5 7" stroke="#444" stroke-width="0.7" fill="none"/></svg>
<i style="left:0.00px;top:27.70px;width:533.33px;height:249.20px;background:#5d6b99;"></i>
<i style="left:3.00px;top:30.60px;width:88.80px;height:7.70px;background:#f5e29c;"></i>
<b style="left:4.40px;top:32.29px;font:normal 4.85px/5.82px 'Liberation Sans',sans-serif;color:#2e2a1c;">AdvancedStringProcessorV2.cs*</b>
<svg style="position:absolute;left:78.80px;top:33.00px" width="3" height="3" viewBox="0 0 3 3"><path d="M0.5 1.5 L2.5 1.5 M1.5 0.5 L1.5 2.5" stroke="#6b6248" stroke-width="0.6"/></svg>
<svg style="position:absolute;left:85.30px;top:32.60px" width="3.6" height="3.6" viewBox="0 0 3.6 3.6"><path d="M0.4 0.4 L3.2 3.2 M3.2 0.4 L0.4 3.2" stroke="#7a5a30" stroke-width="0.7"/></svg>
<svg style="position:absolute;left:408.80px;top:33.30px" width="3" height="2" viewBox="0 0 3 2"><path d="M0 0 L3 0 L1.5 1.8 Z" fill="#aab2d0"/></svg>
<i style="left:3.00px;top:38.30px;width:410.00px;height:9.10px;background:#fdfdfe;"></i>
<i style="left:3.00px;top:46.80px;width:410.00px;height:0.60px;background:#c9ccd6;"></i>
<i style="left:138.70px;top:38.30px;width:0.60px;height:9.10px;background:#c9ccd6;"></i>
<i style="left:276.70px;top:38.30px;width:0.60px;height:9.10px;background:#c9ccd6;"></i>
<i style="left:4.60px;top:40.00px;width:5.60px;height:5.00px;background:#e8ece8;border:0.8px solid #35503f;box-sizing:border-box"></i>
<b style="left:12.00px;top:41.18px;font:normal 4.7px/5.64px 'Liberation Sans',sans-serif;color:#222;width:120px;overflow:hidden">ClassLibrary</b>
<svg style="position:absolute;left:134.00px;top:42.30px" width="3" height="2" viewBox="0 0 3 2"><path d="M0 0 L3 0 L1.5 1.8 Z" fill="#333"/></svg>
<svg style="position:absolute;left:141.00px;top:40.30px" width="4.5" height="4.5" viewBox="0 0 4.5 4.5"><path d="M0.5 3.5 L2 2 L0.5 0.5" stroke="#8a6a30" stroke-width="0.6" fill="none"/><rect x="2.5" y="2" width="2" height="2" fill="#998"/></svg>
<b style="left:148.30px;top:41.12px;font:normal 4.8px/5.76px 'Liberation Sans',sans-serif;color:#333;width:122px;overflow:hidden">ClassLibrary.Enums.AdvancedStringProcessorV2</b>
<svg style="position:absolute;left:272.00px;top:42.30px" width="3" height="2" viewBox="0 0 3 2"><path d="M0 0 L3 0 L1.5 1.8 Z" fill="#333"/></svg>
<svg style="position:absolute;left:279.00px;top:40.50px" width="4" height="4" viewBox="0 0 4 4"><circle cx="2" cy="2" r="1.4" fill="none" stroke="#555" stroke-width="0.6"/></svg>
<b style="left:285.70px;top:41.12px;font:normal 4.8px/5.76px 'Liberation Sans',sans-serif;color:#333;width:119px;overflow:hidden">Process(List&lt;string&gt; stringsToProcess, StringProcessingOptionsV2 options)</b>
<svg style="position:absolute;left:409.00px;top:42.30px" width="3" height="2" viewBox="0 0 3 2"><path d="M0 0 L3 0 L1.5 1.8 Z" fill="#333"/></svg>
<i style="left:3.00px;top:47.60px;width:410.00px;height:221.20px;background:#ffffff;"></i>
<i style="left:3.00px;top:47.60px;width:9.00px;height:221.20px;background:#f0f0f2;"></i>
<i style="left:9.00px;top:47.60px;width:3.00px;height:221.20px;background:#f7f7f9;"></i>
<i style="left:30.00px;top:47.60px;width:0.60px;height:221.20px;background:#b0b0b8;"></i>
<i style="left:416.60px;top:29.20px;width:114.20px;height:9.20px;background:#44548e;"></i>
<b style="left:418.50px;top:32.49px;font:normal 4.85px/5.82px 'Liberation Sans',sans-serif;color:#f0f2fa;">Solution Explorer</b>
<svg style="position:absolute;left:512.50px;top:32.20px" width="3" height="2.5" viewBox="0 0 3 2.5"><path d="M0 0 L3 0 L1.5 1.8 Z" fill="#dde"/></svg>
<svg style="position:absolute;left:518.50px;top:31.20px" width="4" height="4.5" viewBox="0 0 4 4.5"><path d="M2 0.3 L2 4.2 M0.3 2.6 L3.7 2.6 M0.8 0.5 L3.2 0.5" stroke="#dde" stroke-width="0.6"/></svg>
<svg style="position:absolute;left:524.50px;top:31.50px" width="4" height="4" viewBox="0 0 4 4"><path d="M0.4 0.4 L3.6 3.6 M3.6 0.4 L0.4 3.6" stroke="#dde" stroke-width="0.6"/></svg>
<i style="left:416.60px;top:38.50px;width:114.20px;height:11.00px;background:#cdd5ee;"></i>
<div style="left:0;top:1px">
<i style="left:421.50px;top:41.60px;width:4.40px;height:4.40px;background:#c7cde2;border-radius:50%"></i>
<i style="left:430.00px;top:41.60px;width:4.40px;height:4.40px;background:#c7cde2;border-radius:50%"></i>
<svg style="position:absolute;left:438.50px;top:41.00px" width="6" height="5" viewBox="0 0 6 5"><path d="M0.5 2.6 L3 0.3 L5.5 2.6 M1.2 2.4 L1.2 4.8 L4.8 4.8 L4.8 2.4" stroke="#333" stroke-width="0.8" fill="none"/></svg>
<i style="left:447.50px;top:41.60px;width:4.40px;height:4.40px;background:#8a8fa3;"></i>
<svg style="position:absolute;left:456.50px;top:43.40px" width="2.5" height="1.6" viewBox="0 0 2.5 1.6"><path d="M0 0 L2.5 0 L1.25 1.5 Z" fill="#444"/></svg>
<i style="left:461.00px;top:40.20px;width:0.50px;height:7.60px;background:#aeb5cc;"></i>
<svg style="position:absolute;left:464.50px;top:41.00px" width="6" height="5.5" viewBox="0 0 6 5.5"><path d="M1 1 Q4.5 0.5 4.8 4" stroke="#555" stroke-width="0.8" fill="none"/><circle cx="2" cy="4" r="1" fill="#555"/></svg>
<svg style="position:absolute;left:473.00px;top:43.40px" width="2.5" height="1.6" viewBox="0 0 2.5 1.6"><path d="M0 0 L2.5 0 L1.25 1.5 Z" fill="#444"/></svg>
<svg style="position:absolute;left:479.50px;top:41.00px" width="5" height="5" viewBox="0 0 5 5"><path d="M0.5 0.5 L4 4 M2 4.3 L4.3 4.3 L4.3 2" stroke="#333" stroke-width="0.8" fill="none"/></svg>
<svg style="position:absolute;left:488.30px;top:40.90px" width="5" height="5.5" viewBox="0 0 5 5.5"><path d="M4 1.4 A2 2 0 1 0 4.3 3.6" stroke="#1e4a8a" stroke-width="1.0" fill="none"/></svg>
<svg style="position:absolute;left:497.00px;top:41.20px" width="5" height="5" viewBox="0 0 5 5"><path d="M0.8 4.2 L4.2 0.8" stroke="#222" stroke-width="1.2"/></svg>
<svg style="position:absolute;left:505.50px;top:40.90px" width="5.5" height="5.5" viewBox="0 0 5.5 5.5"><circle cx="2.7" cy="2.9" r="2" fill="none" stroke="#333" stroke-width="0.8"/><rect x="0.5" y="0.3" width="2" height="2" fill="#333"/></svg>
</div>
<i style="left:416.60px;top:49.50px;width:114.20px;height:9.50px;background:#fcfcfe;"></i>
<i style="left:416.60px;top:58.60px;width:114.20px;height:0.50px;background:#d8dbe6;"></i>
<b style="left:418.50px;top:52.43px;font:normal 4.95px/5.94px 'Liberation Sans',sans-serif;color:#7d7f89;">Search Solution Explorer (Ctrl+;)</b>
<svg style="position:absolute;left:518.50px;top:51.60px" width="5" height="5" viewBox="0 0 5 5"><circle cx="3" cy="2" r="1.4" fill="none" stroke="#444" stroke-width="0.7"/><path d="M2 3 L0.5 4.6" stroke="#444" stroke-width="0.8"/></svg>
<svg style="position:absolute;left:525.50px;top:53.60px" width="2.5" height="1.6" viewBox="0 0 2.5 1.6"><path d="M0 0 L2.5 0 L1.25 1.5 Z" fill="#555"/></svg>
<i style="left:416.60px;top:59.00px;width:114.20px;height:217.90px;background:#f6f7fb;"></i>
<svg style="position:absolute;left:424.00px;top:62.00px" width="5.5" height="5" viewBox="0 0 5.5 5"><rect x="0.4" y="0.4" width="4.6" height="3.6" fill="none" stroke="#444" stroke-width="0.6"/><rect x="0.4" y="0.4" width="4.6" height="1" fill="#444"/><path d="M1.5 4.6 L4 4.6" stroke="#666" stroke-width="0.5"/></svg>
<b style="left:430.80px;top:62.33px;font:normal 4.95px/5.94px 'Liberation Sans',sans-serif;color:#333;">Solution 'ClassLibrary' (2 of 2 projects)</b>
<svg style="position:absolute;left:421.80px;top:70.59px" width="3" height="3" viewBox="0 0 3 3"><path d="M2.6 0.3 L2.6 2.6 L0.3 2.6 Z" fill="#333"/></svg>
<svg style="position:absolute;left:429.00px;top:69.49px" width="6.5" height="5" viewBox="0 0 6.5 5"><rect x="0.4" y="0.4" width="5.6" height="4.2" fill="#e9ecef" stroke="#4a5a4e" stroke-width="0.7"/><path d="M1.5 2 L3 2 M1.5 3.2 L3 3.2" stroke="#444" stroke-width="0.6"/><rect x="3.8" y="1.4" width="1.5" height="2.4" fill="#3d6b4d"/></svg>
<b style="left:437.60px;top:70.09px;font:bold 4.5px/5.4px 'Liberation Sans',sans-serif;color:#111;">ClassLibrary</b>
<svg style="position:absolute;left:429.10px;top:77.88px" width="3" height="3.2" viewBox="0 0 3 3.2"><path d="M0.5 0.2 L2.7 1.6 L0.5 3.0 Z" fill="#333"/></svg>
<svg style="position:absolute;left:436.30px;top:76.98px" width="5.5" height="5.5" viewBox="0 0 5.5 5.5"><path d="M0.6 4.8 L3 2.4" stroke="#222" stroke-width="1.1"/><circle cx="3.6" cy="1.8" r="1.3" fill="#222"/></svg>
<b style="left:444.90px;top:77.31px;font:normal 4.95px/5.94px 'Liberation Sans',sans-serif;color:#222;">Properties</b>
<svg style="position:absolute;left:429.10px;top:85.37px" width="3" height="3.2" viewBox="0 0 3 3.2"><path d="M0.5 0.2 L2.7 1.6 L0.5 3.0 Z" fill="#333"/></svg>
<svg style="position:absolute;left:436.30px;top:84.47px" width="6" height="5" viewBox="0 0 6 5"><rect x="0.3" y="1.8" width="2" height="1.6" fill="#222"/><rect x="3.4" y="1.8" width="2" height="1.6" fill="#222"/><path d="M2 2.6 L3.6 2.6" stroke="#222" stroke-width="0.5"/></svg>
<b style="left:444.90px;top:84.80px;font:normal 4.95px/5.94px 'Liberation Sans',sans-serif;color:#222;">References</b>
<i style="left:417.10px;top:90.86px;width:112.70px;height:7.30px;background:#dfe1ea;"></i>
<svg style="position:absolute;left:429.10px;top:93.06px" width="3" height="3" viewBox="0 0 3 3"><path d="M2.6 0.3 L2.6 2.6 L0.3 2.6 Z" fill="#333"/></svg>
<svg style="position:absolute;left:436.30px;top:91.96px" width="6" height="5" viewBox="0 0 6 5"><path d="M0.3 0.8 L2.4 0.8 L3 1.5 L5.6 1.5 L5.6 4.5 L0.3 4.5 Z" fill="#e6d6b0"/></svg>
<b style="left:444.90px;top:92.29px;font:normal 4.95px/5.94px 'Liberation Sans',sans-serif;color:#222;">Enums</b>
<svg style="position:absolute;left:437.20px;top:100.35px" width="3" height="3.2" viewBox="0 0 3 3.2"><path d="M0.5 0.2 L2.7 1.6 L0.5 3.0 Z" fill="#333"/></svg>
<svg style="position:absolute;left:444.40px;top:99.45px" width="6" height="5" viewBox="0 0 6 5"><text x="0" y="4" font-family="Liberation Sans" font-size="4" font-weight="bold" fill="#6a8a78">C#</text></svg>
<b style="left:453.00px;top:99.78px;font:normal 4.95px/5.94px 'Liberation Sans',sans-serif;color:#222;">AdvancedStringProcessorV1.cs</b>
<svg style="position:absolute;left:437.20px;top:107.84px" width="3" height="3.2" viewBox="0 0 3 3.2"><path d="M0.5 0.2 L2.7 1.6 L0.5 3.0 Z" fill="#333"/></svg>
<svg style="position:absolute;left:444.40px;top:106.94px" width="6" height="5" viewBox="0 0 6 5"><text x="0" y="4" font-family="Liberation Sans" font-size="4" font-weight="bold" fill="#6a8a78">C#</text></svg>
<b style="left:453.00px;top:107.27px;font:normal 4.95px/5.94px 'Liberation Sans',sans-serif;color:#222;">AdvancedStringProcessorV2.cs</b>
<svg style="position:absolute;left:429.10px;top:115.33px" width="3" height="3.2" viewBox="0 0 3 3.2"><path d="M0.5 0.2 L2.7 1.6 L0.5 3.0 Z" fill="#333"/></svg>
<svg style="position:absolute;left:436.30px;top:114.43px" width="6" height="5" viewBox="0 0 6 5"><path d="M0.3 0.8 L2.4 0.8 L3 1.5 L5.6 1.5 L5.6 4.5 L0.3 4.5 Z" fill="#dcc18c"/></svg>
<b style="left:444.90px;top:114.76px;font:normal 4.95px/5.94px 'Liberation Sans',sans-serif;color:#222;">StructPerformance</b>
<svg style="position:absolute;left:429.10px;top:122.82px" width="3" height="3.2" viewBox="0 0 3 3.2"><path d="M0.5 0.2 L2.7 1.6 L0.5 3.0 Z" fill="#333"/></svg>
<svg style="position:absolute;left:436.30px;top:121.92px" width="6" height="5" viewBox="0 0 6 5"><path d="M0.3 0.8 L2.4 0.8 L3 1.5 L5.6 1.5 L5.6 4.5 L0.3 4.5 Z" fill="#dcc18c"/></svg>
<b style="left:444.90px;top:122.25px;font:normal 4.95px/5.94px 'Liberation Sans',sans-serif;color:#222;">Tasks</b>
<svg style="position:absolute;left:421.80px;top:130.51px" width="3" height="3" viewBox="0 0 3 3"><path d="M2.6 0.3 L2.6 2.6 L0.3 2.6 Z" fill="#333"/></svg>
<svg style="position:absolute;left:429.00px;top:129.41px" width="6.5" height="5" viewBox="0 0 6.5 5"><rect x="0.4" y="0.4" width="5.6" height="4.2" fill="#e9ecef" stroke="#4a5a4e" stroke-width="0.7"/><path d="M1.5 2 L3 2 M1.5 3.2 L3 3.2" stroke="#444" stroke-width="0.6"/><rect x="3.8" y="1.4" width="1.5" height="2.4" fill="#3d6b4d"/></svg>
<b style="left:437.60px;top:129.74px;font:normal 4.95px/5.94px 'Liberation Sans',sans-serif;color:#222;">ClassLibrary.Tests</b>
<svg style="position:absolute;left:429.10px;top:137.80px" width="3" height="3.2" viewBox="0 0 3 3.2"><path d="M0.5 0.2 L2.7 1.6 L0.5 3.0 Z" fill="#333"/></svg>
<svg style="position:absolute;left:436.30px;top:136.90px" width="5.5" height="5.5" viewBox="0 0 5.5 5.5"><path d="M0.6 4.8 L3 2.4" stroke="#222" stroke-width="1.1"/><circle cx="3.6" cy="1.8" r="1.3" fill="#222"/></svg>
<b style="left:444.90px;top:137.23px;font:normal 4.95px/5.94px 'Liberation Sans',sans-serif;color:#222;">Properties</b>
<svg style="position:absolute;left:429.10px;top:145.29px" width="3" height="3.2" viewBox="0 0 3 3.2"><path d="M0.5 0.2 L2.7 1.6 L0.5 3.0 Z" fill="#333"/></svg>
<svg style="position:absolute;left:436.30px;top:144.39px" width="6" height="5" viewBox="0 0 6 5"><rect x="0.3" y="1.8" width="2" height="1.6" fill="#222"/><rect x="3.4" y="1.8" width="2" height="1.6" fill="#222"/><path d="M2 2.6 L3.6 2.6" stroke="#222" stroke-width="0.5"/></svg>
<b style="left:444.90px;top:144.72px;font:normal 4.95px/5.94px 'Liberation Sans',sans-serif;color:#222;">References</b>
<svg style="position:absolute;left:429.10px;top:152.78px" width="3" height="3.2" viewBox="0 0 3 3.2"><path d="M0.5 0.2 L2.7 1.6 L0.5 3.0 Z" fill="#333"/></svg>
<svg style="position:absolute;left:436.30px;top:151.88px" width="6" height="5" viewBox="0 0 6 5"><text x="0" y="4" font-family="Liberation Sans" font-size="4" font-weight="bold" fill="#6a8a78">C#</text></svg>
<b style="left:444.90px;top:152.21px;font:normal 4.95px/5.94px 'Liberation Sans',sans-serif;color:#222;">AdvancedStringProcessorV1Should.cs</b>
<svg style="position:absolute;left:436.30px;top:159.37px" width="6" height="5.5" viewBox="0 0 6 5.5"><rect x="0.6" y="0.6" width="4.4" height="4.4" rx="1.2" fill="none" stroke="#333" stroke-width="0.7"/><path d="M2.8 0 L2.8 1.6" stroke="#333" stroke-width="0.7"/></svg>
<b style="left:444.90px;top:159.70px;font:normal 4.95px/5.94px 'Liberation Sans',sans-serif;color:#222;">App.config</b>
<svg style="position:absolute;left:436.30px;top:166.86px" width="6" height="5" viewBox="0 0 6 5"><text x="0" y="4" font-family="Liberation Sans" font-size="4" font-weight="bold" fill="#6a8a78">C#</text></svg>
<b style="left:444.90px;top:167.19px;font:normal 4.95px/5.94px 'Liberation Sans',sans-serif;color:#222;">ObjectReferenceEqualityExample.cs</b>
<svg style="position:absolute;left:436.30px;top:174.35px" width="6" height="5.5" viewBox="0 0 6 5.5"><rect x="0.6" y="0.6" width="4.4" height="4.4" rx="1.2" fill="none" stroke="#333" stroke-width="0.7"/><path d="M2.8 0 L2.8 1.6" stroke="#333" stroke-width="0.7"/></svg>
<b style="left:444.90px;top:174.68px;font:normal 4.95px/5.94px 'Liberation Sans',sans-serif;color:#222;">packages.config</b>
<svg style="position:absolute;left:429.10px;top:182.74px" width="3" height="3.2" viewBox="0 0 3 3.2"><path d="M0.5 0.2 L2.7 1.6 L0.5 3.0 Z" fill="#333"/></svg>
<svg style="position:absolute;left:436.30px;top:181.84px" width="6" height="5" viewBox="0 0 6 5"><text x="0" y="4" font-family="Liberation Sans" font-size="4" font-weight="bold" fill="#6a8a78">C#</text></svg>
<b style="left:444.90px;top:182.17px;font:normal 4.95px/5.94px 'Liberation Sans',sans-serif;color:#222;">StringProcessorShould.cs</b>
<svg style="position:absolute;left:436.30px;top:189.33px" width="6" height="5" viewBox="0 0 6 5"><text x="0" y="4" font-family="Liberation Sans" font-size="4" font-weight="bold" fill="#6a8a78">C#</text></svg>
<b style="left:444.90px;top:189.66px;font:normal 4.95px/5.94px 'Liberation Sans',sans-serif;color:#222;">StructEqualityPerformance.cs</b>
<i style="left:0.00px;top:276.90px;width:533.33px;height:12.80px;background:#5d6b99;"></i>
<i style="left:0.00px;top:276.90px;width:533.33px;height:0.90px;background:#4f5a88;"></i>
<b style="left:2.60px;top:281.38px;font:normal 4.7px/5.64px 'Liberation Sans',sans-serif;color:#eef0f8;">Test Explorer</b>
<b style="left:34.50px;top:281.38px;font:normal 4.7px/5.64px 'Liberation Sans',sans-serif;color:#eef0f8;">Error List</b>
<b style="left:58.40px;top:281.38px;font:normal 4.7px/5.64px 'Liberation Sans',sans-serif;color:#eef0f8;">Output</b>
<i style="left:0.00px;top:289.70px;width:533.33px;height:9.97px;background:#42508c;"></i>
<i style="left:0.00px;top:298.30px;width:533.33px;height:1.37px;background:#384276;"></i>
<svg style="position:absolute;left:2.50px;top:291.20px" width="6" height="6" viewBox="0 0 6 6"><path d="M1 5.5 L1 1 L5 1 L5 5 M0.2 4.3 L1 5.5 L1.8 4.3" stroke="#eef" stroke-width="0.7" fill="none"/></svg>
<b style="left:11.50px;top:292.55px;font:normal 4.75px/5.7px 'Liberation Sans',sans-serif;color:#f2f3f8;">Ready</b>
<b style="left:202.00px;top:292.60px;font:normal 4.5px/5.4px 'Liberation Sans',sans-serif;color:#f2f3f8;">Ln 50</b>
<b style="left:241.00px;top:292.60px;font:normal 4.5px/5.4px 'Liberation Sans',sans-serif;color:#f2f3f8;">Col 18</b>
<b style="left:280.00px;top:292.60px;font:normal 4.5px/5.4px 'Liberation Sans',sans-serif;color:#f2f3f8;">Ch 18</b>
<b style="left:336.00px;top:292.60px;font:normal 4.5px/5.4px 'Liberation Sans',sans-serif;color:#f2f3f8;">INS</b>
<svg style="position:absolute;left:449.00px;top:291.60px" width="4" height="5" viewBox="0 0 4 5"><path d="M2 0.3 L3.8 2.3 L2.6 2.3 L2.6 4.8 L1.4 4.8 L1.4 2.3 L0.2 2.3 Z" fill="#f2f3f8"/></svg>
<b style="left:455.50px;top:292.40px;font:normal 5.0px/6.0px 'Liberation Sans',sans-serif;color:#f2f3f8;">Add to Source Control</b>
<svg style="position:absolute;left:507.00px;top:293.50px" width="3" height="2" viewBox="0 0 3 2"><path d="M0 0 L3 0 L1.5 1.8 Z" fill="#f2f3f8"/></svg>
<svg style="position:absolute;left:519.00px;top:291.00px" width="5" height="6" viewBox="0 0 5 6"><path d="M2.5 0.3 Q4.3 0.8 4.3 3 L4.8 4.5 L0.2 4.5 L0.7 3 Q0.7 0.8 2.5 0.3 Z M1.8 5 L3.2 5 L2.5 5.8 Z" fill="#f2f3f8"/></svg>
<div style="left:3.0px;top:47.6px;width:402.20px;height:221.20px;overflow:hidden">
<i style="left:21.00px;top:-2.91px;width:1.9px;height:9.42px;background:#e8e87a"></i>
<b style="left:30.30px;top:-1.31px;font:normal 6.62px/9.42px 'Liberation Mono',monospace" class="cd">            <span style="color:#4a3850">foreach</span> <span style="color:#202020">(</span><span style="color:#262a40">var</span> <span style="color:#3c4156">originalString</span> <span style="color:#262a40">in</span> <span style="color:#3c4156">stringsToProcess</span><span style="color:#202020">)</span></b>
<i style="left:21.00px;top:6.51px;width:1.9px;height:9.42px;background:#e8e87a"></i>
<b style="left:30.30px;top:8.11px;font:normal 6.62px/9.42px 'Liberation Mono',monospace" class="cd">            <span style="color:#202020">{</span></b>
<i style="left:21.00px;top:15.93px;width:1.9px;height:9.42px;background:#e8e87a"></i>
<b style="left:30.30px;top:17.53px;font:normal 6.62px/9.42px 'Liberation Mono',monospace" class="cd">                <span style="color:#262a40">string</span> <span style="color:#3c4156">temp</span> <span style="color:#202020">=</span> <span style="color:#7e3434">""</span><span style="color:#202020">;</span></b>
<i style="left:21.00px;top:25.35px;width:1.9px;height:9.42px;background:#e8e87a"></i>
<b style="left:30.30px;top:26.95px;font:normal 6.62px/9.42px 'Liberation Mono',monospace" class="cd"></b>
<i style="left:21.00px;top:34.77px;width:1.9px;height:9.42px;background:#e8e87a"></i>
<b style="left:30.30px;top:36.37px;font:normal 6.62px/9.42px 'Liberation Mono',monospace" class="cd">                <span style="color:#4a3850">if</span> <span style="color:#202020">(</span><span style="color:#3c4156">noProcessingIsRequired</span><span style="color:#202020">)</span></b>
<i style="left:21.00px;top:44.19px;width:1.9px;height:9.42px;background:#e8e87a"></i>
<b style="left:30.30px;top:45.79px;font:normal 6.62px/9.42px 'Liberation Mono',monospace" class="cd">                <span style="color:#202020">{</span></b>
<i style="left:21.00px;top:53.61px;width:1.9px;height:9.42px;background:#e8e87a"></i>
<b style="left:30.30px;top:55.21px;font:normal 6.62px/9.42px 'Liberation Mono',monospace" class="cd">                    <span style="color:#3c4156">processedStrings</span><span style="color:#202020">.</span><span style="color:#6a6054">Add</span><span style="color:#202020">(</span><span style="color:#3c4156">originalString</span><span style="color:#202020">)</span><span style="color:#202020">;</span></b>
<i style="left:21.00px;top:63.03px;width:1.9px;height:9.42px;background:#e8e87a"></i>
<b style="left:30.30px;top:64.63px;font:normal 6.62px/9.42px 'Liberation Mono',monospace" class="cd">                    <span style="color:#4a3850">continue</span><span style="color:#202020">;</span></b>
<i style="left:21.00px;top:72.45px;width:1.9px;height:9.42px;background:#e8e87a"></i>
<b style="left:30.30px;top:74.05px;font:normal 6.62px/9.42px 'Liberation Mono',monospace" class="cd">                <span style="color:#202020">}</span></b>
<i style="left:21.00px;top:81.87px;width:1.9px;height:9.42px;background:#e8e87a"></i>
<b style="left:30.30px;top:83.47px;font:normal 6.62px/9.42px 'Liberation Mono',monospace" class="cd"></b>
<i style="left:21.00px;top:91.29px;width:1.9px;height:9.42px;background:#e8e87a"></i>
<b style="left:30.30px;top:92.89px;font:normal 6.62px/9.42px 'Liberation Mono',monospace" class="cd">                <span style="color:#4a3850">if</span> <span style="color:#202020">(</span><span style="color:#3c4156">addingLengthIsRequired</span><span style="color:#202020">)</span></b>
<i style="left:21.00px;top:100.71px;width:1.9px;height:9.42px;background:#e8e87a"></i>
<b style="left:30.30px;top:102.31px;font:normal 6.62px/9.42px 'Liberation Mono',monospace" class="cd">                <span style="color:#202020">{</span></b>
<i style="left:21.00px;top:110.13px;width:1.9px;height:9.42px;background:#e8e87a"></i>
<b style="left:30.30px;top:111.73px;font:normal 6.62px/9.42px 'Liberation Mono',monospace" class="cd">                    <span style="color:#3c4156">temp</span> <span style="color:#202020">+</span><span style="color:#202020">=</span> <span style="color:#7e3434">$"{originalString.Length}-"</span><span style="color:#202020">;</span></b>
<i style="left:21.00px;top:119.55px;width:1.9px;height:9.42px;background:#e8e87a"></i>
<b style="left:30.30px;top:121.15px;font:normal 6.62px/9.42px 'Liberation Mono',monospace" class="cd">                <span style="color:#202020">}</span></b>
<i style="left:21.00px;top:128.97px;width:1.9px;height:9.42px;background:#e8e87a"></i>
<b style="left:30.30px;top:130.57px;font:normal 6.62px/9.42px 'Liberation Mono',monospace" class="cd"></b>
<i style="left:21.00px;top:138.39px;width:1.9px;height:9.42px;background:#e8e87a"></i>
<b style="left:30.30px;top:139.99px;font:normal 6.62px/9.42px 'Liberation Mono',monospace" class="cd">                <span style="color:#4a3850">if</span> <span style="color:#202020">(</span><span style="color:#3c4156">conversionToUppercaseIsRequired</span><span style="color:#202020">)</span></b>
<i style="left:21.00px;top:147.81px;width:1.9px;height:9.42px;background:#e8e87a"></i>
<b style="left:30.30px;top:149.41px;font:normal 6.62px/9.42px 'Liberation Mono',monospace" class="cd">                <span style="color:#202020">{</span></b>
<i style="left:21.00px;top:157.23px;width:1.9px;height:9.42px;background:#e8e87a"></i>
<b style="left:30.30px;top:158.83px;font:normal 6.62px/9.42px 'Liberation Mono',monospace" class="cd">                    <span style="color:#3c4156">temp</span> <span style="color:#202020">+</span><span style="color:#202020">=</span> <span style="color:#3c4156">originalString</span><span style="color:#202020">.</span><span style="color:#6a6054">ToUpperInvariant</span><span style="color:#202020">(</span><span style="color:#202020">)</span><span style="color:#202020">;</span></b>
<i style="left:21.00px;top:166.65px;width:1.9px;height:9.42px;background:#e8e87a"></i>
<b style="left:30.30px;top:168.25px;font:normal 6.62px/9.42px 'Liberation Mono',monospace" class="cd">                <span style="color:#202020">}</span></b>
<i style="left:21.00px;top:176.07px;width:1.9px;height:9.42px;background:#e8e87a"></i>
<b style="left:30.30px;top:177.67px;font:normal 6.62px/9.42px 'Liberation Mono',monospace" class="cd">                <span style="color:#4a3850">else</span></b>
<i style="left:21.00px;top:185.49px;width:1.9px;height:9.42px;background:#e8e87a"></i>
<b style="left:30.30px;top:187.09px;font:normal 6.62px/9.42px 'Liberation Mono',monospace" class="cd">                <span style="color:#202020">{</span></b>
<i style="left:21.00px;top:194.91px;width:1.9px;height:9.42px;background:#e8e87a"></i>
<b style="left:30.30px;top:196.51px;font:normal 6.62px/9.42px 'Liberation Mono',monospace" class="cd">                    <span style="color:#3c4156">temp</span> <span style="color:#202020">+</span><span style="color:#202020">=</span> <span style="color:#3c4156">originalString</span><span style="color:#202020">;</span></b>
<i style="left:21.00px;top:204.33px;width:1.9px;height:9.42px;background:#e8e87a"></i>
<i style="left:28.50px;top:204.33px;width:372.50px;height:9.42px;border:0.6px solid #e2e2e6;box-sizing:border-box"></i>
<b style="left:30.30px;top:205.93px;font:normal 6.62px/9.42px 'Liberation Mono',monospace" class="cd">                <span style="color:#202020">}</span></b>
<i style="left:21.00px;top:213.75px;width:1.9px;height:9.42px;background:#e8e87a"></i>
<b style="left:30.30px;top:215.35px;font:normal 6.62px/9.42px 'Liberation Mono',monospace" class="cd">            <span style="color:#202020">}</span></b>
</div>
<i style="left:28.3px;top:85.08px;width:4px;height:4px;background:#fff;border:0.6px solid #a0a0a8;box-sizing:border-box"></i>
<i style="left:29.30px;top:86.78px;width:2.00px;height:0.60px;background:#777;"></i>
<i style="left:28.3px;top:141.60px;width:4px;height:4px;background:#fff;border:0.6px solid #a0a0a8;box-sizing:border-box"></i>
<i style="left:29.30px;top:143.30px;width:2.00px;height:0.60px;background:#777;"></i>
<i style="left:28.3px;top:188.70px;width:4px;height:4px;background:#fff;border:0.6px solid #a0a0a8;box-sizing:border-box"></i>
<i style="left:29.30px;top:190.40px;width:2.00px;height:0.60px;background:#777;"></i>
<i style="left:28.3px;top:226.38px;width:4px;height:4px;background:#fff;border:0.6px solid #a0a0a8;box-sizing:border-box"></i>
<i style="left:29.30px;top:228.08px;width:2.00px;height:0.60px;background:#777;"></i>
<i style="left:100.00px;top:252.64px;width:0.60px;height:8.00px;background:#111;"></i>
<svg style="position:absolute;left:13.00px;top:253.64px" width="6" height="6" viewBox="0 0 6 6"><path d="M0.8 5.2 L4.8 1.2" stroke="#555" stroke-width="1.2"/></svg>
<svg style="position:absolute;left:125.00px;top:149.50px" width="3" height="8.4" viewBox="0 0 3 8.4"><path d="M0.3 0.4 L1.2 0.4 L1.5 0.8 L1.8 0.4 L2.7 0.4 M1.5 0.8 L1.5 7.6 M0.3 8.0 L1.2 8.0 L1.5 7.6 L1.8 8.0 L2.7 8.0" stroke="#444" stroke-width="0.6" fill="none"/></svg>
<i style="left:405.20px;top:47.60px;width:7.80px;height:221.20px;background:#f4f4f6;"></i>
<i style="left:405.20px;top:47.60px;width:0.50px;height:221.20px;background:#e4e4ea;"></i>
<svg style="position:absolute;left:406.60px;top:49.20px" width="5.5" height="5.5" viewBox="0 0 5.5 5.5"><path d="M2.75 0.3 L2.75 5.2 M0.3 2.75 L5.2 2.75" stroke="#222" stroke-width="1.0"/></svg>
<i style="left:405.70px;top:55.20px;width:7.30px;height:0.50px;background:#999;"></i>
<svg style="position:absolute;left:407.70px;top:57.40px" width="3" height="2" viewBox="0 0 3 2"><path d="M0 1.8 L3 1.8 L1.5 0 Z" fill="#888"/></svg>
<i style="left:408.50px;top:130.90px;width:3.60px;height:53.10px;background:#c6c7cc;"></i>
<svg style="position:absolute;left:407.70px;top:264.30px" width="3" height="2" viewBox="0 0 3 2"><path d="M0 0 L3 0 L1.5 1.8 Z" fill="#888"/></svg>
<i style="left:405.80px;top:52.00px;width:2.60px;height:130.00px;background:#ecebb0;"></i>
<i style="left:405.80px;top:77.00px;width:6.80px;height:1.20px;background:#c03040;"></i>
<i style="left:405.80px;top:188.20px;width:6.80px;height:1.00px;background:#555;"></i>
<i style="left:3.00px;top:268.80px;width:410.00px;height:8.10px;background:#eeeff3;"></i>
<b style="left:4.80px;top:270.89px;font:normal 4.6px/5.52px 'Liberation Sans',sans-serif;color:#444;">133 %</b>
<svg style="position:absolute;left:24.00px;top:271.20px" width="2.5" height="1.6" viewBox="0 0 2.5 1.6"><path d="M0 0 L2.5 0 L1.25 1.5 Z" fill="#555"/></svg>
<i style="left:30.00px;top:269.40px;width:0.50px;height:6.90px;background:#d6d8e0;"></i>
<svg style="position:absolute;left:43.00px;top:270.20px" width="4" height="4" viewBox="0 0 4 4"><circle cx="2" cy="2" r="1.7" fill="#c53a3a"/></svg>
<b style="left:48.50px;top:271.25px;font:normal 4.0px/4.8px 'Liberation Sans',sans-serif;color:#666;">1</b>
<svg style="position:absolute;left:62.00px;top:270.10px" width="4" height="4" viewBox="0 0 4 4"><path d="M2 0.2 L3.9 3.8 L0.1 3.8 Z" fill="#d9a12e"/></svg>
<b style="left:68.00px;top:271.25px;font:normal 4.0px/4.8px 'Liberation Sans',sans-serif;color:#666;">0</b>
<svg style="position:absolute;left:80.00px;top:270.80px" width="3" height="2.5" viewBox="0 0 3 2.5"><path d="M0 1.25 L3 0 L3 2.5 Z" fill="#666"/></svg>
<svg style="position:absolute;left:92.00px;top:270.80px" width="3" height="2.5" viewBox="0 0 3 2.5"><path d="M3 1.25 L0 0 L0 2.5 Z" fill="#666"/></svg>
<svg style="position:absolute;left:111.00px;top:270.00px" width="4" height="4" viewBox="0 0 4 4"><circle cx="2" cy="2" r="1.5" fill="none" stroke="#555" stroke-width="0.6"/></svg>
<svg style="position:absolute;left:117.50px;top:271.20px" width="2.5" height="1.6" viewBox="0 0 2.5 1.6"><path d="M0 0 L2.5 0 L1.25 1.5 Z" fill="#555"/></svg>
<i style="left:124.50px;top:269.40px;width:0.50px;height:6.90px;background:#d6d8e0;"></i>
<svg style="position:absolute;left:131.00px;top:270.80px" width="2" height="2.5" viewBox="0 0 2 2.5"><path d="M2 0 L0 1.25 L2 2.5 Z" fill="#777"/></svg>
<i style="left:137.00px;top:270.20px;width:220.70px;height:3.40px;background:#c4c5cb;"></i>
<svg style="position:absolute;left:400.00px;top:270.80px" width="2" height="2.5" viewBox="0 0 2 2.5"><path d="M0 0 L2 1.25 L0 2.5 Z" fill="#777"/></svg>
<i style="left:505.0px;top:267.0px;width:14px;height:14px;border-radius:50%;background:rgba(140,140,150,0.28)"></i>
</div>
<div class="tile" style="left:533.333px;top:599.333px">
<i style="left:0.00px;top:0.00px;width:533.33px;height:27.70px;background:#d2d8ee;"></i>
<i style="left:0.00px;top:25.90px;width:533.33px;height:1.50px;background:#dce1f4;"></i>
<svg style="position:absolute;left:4.00px;top:2.00px" width="11" height="10" viewBox="0 0 11 10"><rect x="1.0" y="2.4" width="2.1" height="4.4" fill="#5b4596"/><path d="M3 4.6 L5.2 4.6" stroke="#6a48b0" stroke-width="1.2"/><path d="M5.3 4.6 L9.0 1.4 L9.0 7.8 Z" fill="#c6a8ee" stroke="#6a3cb4" stroke-width="1.5" stroke-linejoin="round"/></svg>
<b style="left:18.00px;top:4.46px;font:normal 4.9px/5.88px 'Liberation Sans',sans-serif;color:#1e1e28;">File</b>
<b style="left:33.00px;top:4.46px;font:normal 4.9px/5.88px 'Liberation Sans',sans-serif;color:#1e1e28;">Edit</b>
<b style="left:51.00px;top:4.46px;font:normal 4.9px/5.88px 'Liberation Sans',sans-serif;color:#1e1e28;">View</b>
<b style="left:70.00px;top:4.46px;font:normal 4.9px/5.88px 'Liberation Sans',sans-serif;color:#1e1e28;">Project</b>
<b style="left:93.00px;top:4.46px;font:normal 4.9px/5.88px 'Liberation Sans',sans-serif;color:#1e1e28;">Build</b>
<b style="left:113.00px;top:4.46px;font:normal 4.9px/5.88px 'Liberation Sans',sans-serif;color:#1e1e28;">Debug</b>
<b style="left:136.00px;top:4.46px;font:normal 4.9px/5.88px 'Liberation Sans',sans-serif;color:#1e1e28;">Test</b>
<b style="left:152.00px;top:4.46px;font:normal 4.9px/5.88px 'Liberation Sans',sans-serif;color:#1e1e28;">Analyze</b>
<b style="left:178.00px;top:4.46px;font:normal 4.9px/5.88px 'Liberation Sans',sans-serif;color:#1e1e28;">Tools</b>
<b style="left:197.00px;top:4.46px;font:normal 4.9px/5.88px 'Liberation Sans',sans-serif;color:#1e1e28;">Extensions</b>
<b style="left:229.00px;top:4.46px;font:normal 4.9px/5.88px 'Liberation Sans',sans-serif;color:#1e1e28;">Window</b>
<b style="left:255.00px;top:4.46px;font:normal 4.9px/5.88px 'Liberation Sans',sans-serif;color:#1e1e28;">Help</b>
<i style="left:275.00px;top:2.40px;width:91.00px;height:8.40px;background:#fdfdfe;"></i>
<b style="left:277.50px;top:4.49px;font:normal 4.85px/5.82px 'Liberation Sans',sans-serif;color:#6a6c78;">Search (Ctrl+Q)</b>
<svg style="position:absolute;left:357.00px;top:3.80px" width="6" height="6" viewBox="0 0 6 6"><circle cx="3.6" cy="2.4" r="1.6" fill="none" stroke="#444" stroke-width="0.8"/><path d="M2.5 3.5 L0.8 5.2" stroke="#444" stroke-width="0.9"/></svg>
<i style="left:371.00px;top:2.00px;width:37.00px;height:9.00px;background:#d9def2;"></i>
<b style="left:377.00px;top:4.58px;font:normal 4.7px/5.64px 'Liberation Sans',sans-serif;color:#4a4c58;">ClassLibrary</b>
<svg style="position:absolute;left:459.00px;top:2.50px" width="7" height="8.5" viewBox="0 0 7 8.5"><circle cx="3.5" cy="2.6" r="1.7" fill="none" stroke="#333" stroke-width="0.8"/><path d="M0.8 8 Q3.5 4.3 6.2 8 Z" fill="#333"/></svg>
<i style="left:483.00px;top:6.60px;width:4.50px;height:0.45px;background:#8a8e9c;"></i>
<svg style="position:absolute;left:501.50px;top:4.00px" width="5" height="5" viewBox="0 0 5 5"><path d="M1.3 0.6 L4.4 0.6 L4.4 3.7 M0.6 1.4 L3.6 1.4 L3.6 4.4 L0.6 4.4 Z" stroke="#777b88" stroke-width="0.55" fill="none"/></svg>
<svg style="position:absolute;left:521.00px;top:4.30px" width="5" height="5" viewBox="0 0 5 5"><path d="M0.5 0.5 L4.5 4.5 M4.5 0.5 L0.5 4.5" stroke="#8a8e9c" stroke-width="0.55"/></svg>
<i style="left:6.30px;top:14.50px;width:0.60px;height:10.00px;background:#b9bfd6;"></i>
<svg style="position:absolute;left:10.00px;top:16.20px" width="6" height="6" viewBox="0 0 6 6"><circle cx="3" cy="3" r="2" fill="none" stroke="#1d3a6e" stroke-width="1.2"/><path d="M1.6 3 L4.2 3" stroke="#1d3a6e" stroke-width="0.8"/></svg>
<i style="left:20.00px;top:18.80px;width:1.30px;height:1.10px;background:#444;border-radius:0"></i>
<svg style="position:absolute;left:24.50px;top:16.20px" width="6" height="6" viewBox="0 0 6 6"><circle cx="3" cy="3" r="2" fill="none" stroke="#c0c6dc" stroke-width="1.1"/></svg>
<i style="left:33.50px;top:15.50px;width:0.50px;height:8.00px;background:#c3c8dc;"></i>
<svg style="position:absolute;left:36.50px;top:15.60px" width="7" height="7" viewBox="0 0 7 7"><rect x="1" y="2.2" width="4.4" height="3.8" fill="none" stroke="#4a4e60" stroke-width="1"/><path d="M4.5 0.3 L5.2 1.7 L6.6 2.2 L5.2 2.7" fill="#4a4e60"/></svg>
<i style="left:46.80px;top:18.80px;width:1.30px;height:1.10px;background:#444;border-radius:0"></i>
<svg style="position:absolute;left:50.80px;top:15.80px" width="7" height="7" viewBox="0 0 7 7"><path d="M0.5 2 L2.5 2 L3 2.8 L6 2.8 L6 6.3 L0.5 6.3 Z" fill="#d8b8b0"/><path d="M3.5 0.5 L5.5 1.5" stroke="#b89890" stroke-width="0.8"/></svg>
<svg style="position:absolute;left:61.00px;top:16.30px" width="6" height="6" viewBox="0 0 6 6"><path d="M0.4 0.4 L4.6 0.4 L5.6 1.4 L5.6 5.6 L0.4 5.6 Z" fill="#1d3468"/><rect x="1.6" y="0.4" width="2.6" height="1.8" fill="#d9ddef"/></svg>
<svg style="position:absolute;left:69.50px;top:15.60px" width="7" height="7" viewBox="0 0 7 7"><path d="M2.4 0.3 L6.6 0.3 L6.6 4.3 L2.4 4.3 Z" fill="#4a5d8f"/><path d="M0.3 2.6 L4.5 2.6 L4.5 6.6 L0.3 6.6 Z" fill="#1d3468"/></svg>
<svg style="position:absolute;left:80.50px;top:16.20px" width="7" height="6" viewBox="0 0 7 6"><path d="M1.5 2.5 Q4 0.3 5.8 2.5 Q6.5 4.5 4 5.6" fill="none" stroke="#c3c8dc" stroke-width="1.1"/><path d="M0.4 1 L1.4 3.4 L3.4 2.2 Z" fill="#c3c8dc"/></svg>
<i style="left:92.00px;top:18.80px;width:1.30px;height:1.10px;background:#c3c8dc;border-radius:0"></i>
<svg style="position:absolute;left:97.50px;top:16.20px" width="7" height="6" viewBox="0 0 7 6"><path d="M5.5 2.5 Q3 0.3 1.2 2.5 Q0.5 4.5 3 5.6" fill="none" stroke="#c3c8dc" stroke-width="1.1"/><path d="M6.6 1 L5.6 3.4 L3.6 2.2 Z" fill="#c3c8dc"/></svg>
<i style="left:106.20px;top:18.90px;width:1.80px;height:0.60px;background:#c3c8dc;"></i>
<i style="left:106.80px;top:18.30px;width:0.60px;height:1.80px;background:#c3c8dc;"></i>
<i style="left:111.00px;top:15.00px;width:0.50px;height:8.50px;background:#b9bfd6;"></i>
<i style="left:114.00px;top:15.00px;width:27.00px;height:8.50px;background:#fbfbfd;"></i>
<b style="left:116.50px;top:17.44px;font:normal 4.6px/5.52px 'Liberation Sans',sans-serif;color:#333;">Debug</b>
<svg style="position:absolute;left:137.00px;top:18.40px" width="3" height="2" viewBox="0 0 3 2"><path d="M0 0 L3 0 L1.5 1.8 Z" fill="#333"/></svg>
<i style="left:143.50px;top:15.00px;width:46.50px;height:8.50px;background:#fbfbfd;"></i>
<b style="left:146.00px;top:17.44px;font:normal 4.6px/5.52px 'Liberation Sans',sans-serif;color:#444;">Any CPU</b>
<svg style="position:absolute;left:186.00px;top:18.40px" width="3" height="2" viewBox="0 0 3 2"><path d="M0 0 L3 0 L1.5 1.8 Z" fill="#333"/></svg>
<svg style="position:absolute;left:194.50px;top:16.70px" width="4" height="5" viewBox="0 0 4 5"><path d="M0 0 L3.5 2.5 L0 5 Z" fill="#2c7a3c"/></svg>
<b style="left:201.00px;top:17.34px;font:normal 4.6px/5.52px 'Liberation Sans',sans-serif;color:#333;">Start</b>
<svg style="position:absolute;left:214.00px;top:18.60px" width="3" height="2" viewBox="0 0 3 2"><path d="M0 0 L3 0 L1.5 1.8 Z" fill="#333"/></svg>
<i style="left:220.00px;top:15.00px;width:0.50px;height:8.50px;background:#b9bfd6;"></i>
<svg style="position:absolute;left:222.50px;top:16.20px" width="7" height="6" viewBox="0 0 7 6"><path d="M0.5 5.5 L3 1 L6 1 L6 3.5 L3 5.5 Z" fill="#c9b08a"/><path d="M0.5 5.5 L3 3.5" stroke="#555" stroke-width="0.6"/></svg>
<i style="left:231.30px;top:20.60px;width:1.30px;height:1.30px;background:#333;border-radius:0"></i>
<svg style="position:absolute;left:240.00px;top:16.00px" width="7" height="6.5" viewBox="0 0 7 6.5"><path d="M0.6 0.5 L0.6 5.8 M2.2 2 L2.2 5.8 M2.2 2.3 L4.6 2.3 L4.6 5.8" stroke="#3f4660" stroke-width="0.9" fill="none"/></svg>
<svg style="position:absolute;left:250.00px;top:15.80px" width="7" height="7" viewBox="0 0 7 7"><path d="M0.8 1 L6.2 1 M0.8 2.6 L3 2.6 M4 2.6 L6.2 2.6 M2.2 1 L2.2 6.3 M4.6 2.6 L4.6 6.3" stroke="#454c64" stroke-width="0.9" fill="none"/></svg>
<i style="left:259.50px;top:15.50px;width:0.50px;height:8.00px;background:#c3c8dc;"></i>
<svg style="position:absolute;left:263.50px;top:16.20px" width="6" height="6" viewBox="0 0 6 6"><path d="M0.5 1 L5.5 1 M3 1 L3 5.6" stroke="#5b6275" stroke-width="1.0" fill="none"/></svg>
<svg style="position:absolute;left:272.00px;top:16.20px" width="7" height="6" viewBox="0 0 7 6"><path d="M0.5 1 L3 1 M1.7 1 L1.7 5 M3.5 3 L6.5 5.5 M4 5.5 L6.5 5.5" stroke="#6d7389" stroke-width="0.9" fill="none"/></svg>
<i style="left:281.50px;top:15.50px;width:0.50px;height:8.00px;background:#c3c8dc;"></i>
<svg style="position:absolute;left:285.00px;top:16.00px" width="5" height="6.5" viewBox="0 0 5 6.5"><path d="M0.5 0.3 L4.5 0.3 L4.5 6.2 L2.5 4.6 L0.5 6.2 Z" fill="#1f2640"/></svg>
<svg style="position:absolute;left:294.00px;top:16.00px" width="6" height="6.5" viewBox="0 0 6 6.5"><path d="M0.5 0.5 L4 0.5 L4 5.5 L2.2 4.2 L0.5 5.5 Z" fill="none" stroke="#c3c8dc" stroke-width="0.8"/></svg>
<svg style="position:absolute;left:303.00px;top:16.00px" width="6" height="6.5" viewBox="0 0 6 6.5"><path d="M0.5 0.5 L4 0.5 L4 5.5 L2.2 4.2 L0.5 5.5 Z" fill="none" stroke="#c3c8dc" stroke-width="0.8"/></svg>
<svg style="position:absolute;left:312.00px;top:16.00px" width="6" height="6.5" viewBox="0 0 6 6.5"><path d="M0.5 0.5 L4 0.5 L4 5.5 L2.2 4.2 L0.5 5.5 Z" fill="none" stroke="#c3c8dc" stroke-width="0.8"/></svg>
<i style="left:321.00px;top:20.60px;width:1.30px;height:1.30px;background:#333;border-radius:0"></i>
<svg style="position:absolute;left:478.50px;top:16.30px" width="7" height="6.5" viewBox="0 0 7 6.5"><path d="M0.5 6 L5.5 6 M1.2 4.8 Q2 1.6 4.8 1.8 M3.8 0.6 L5.2 1.8 L3.8 3" stroke="#333" stroke-width="0.7" fill="none"/></svg>
<b style="left:486.00px;top:17.58px;font:normal 4.7px/5.64px 'Liberation Sans',sans-serif;color:#333;">Live Share</b>
<svg style="position:absolute;left:519.00px;top:15.50px" width="6" height="8" viewBox="0 0 6 8"><path d="M1 1 L5 1 M1 3 L4 3 M1 1 L1 7 M3 5 L5 7" stroke="#444" stroke-width="0.7" fill="none"/></svg>
<i style="left:0.00px;top:27.70px;width:533.33px;height:249.20px;background:#5d6b99;"></i>
<i style="left:3.00px;top:30.60px;width:102.50px;height:7.70px;background:#ccd3ec;"></i>
<b style="left:4.40px;top:32.29px;font:normal 4.85px/5.82px 'Liberation Sans',sans-serif;color:#303848;">AdvancedStringProcessorV2Should.cs</b>
<svg style="position:absolute;left:92.50px;top:33.00px" width="3" height="3" viewBox="0 0 3 3"><path d="M0.5 1.5 L2.5 1.5 M1.5 0.5 L1.5 2.5" stroke="#778" stroke-width="0.6"/></svg>
<svg style="position:absolute;left:99.00px;top:32.60px" width="3.6" height="3.6" viewBox="0 0 3.6 3.6"><path d="M0.4 0.4 L3.2 3.2 M3.2 0.4 L0.4 3.2" stroke="#778" stroke-width="0.7"/></svg>
<i style="left:105.50px;top:30.60px;width:87.40px;height:7.70px;background:#5e74b0;"></i>
<b style="left:106.90px;top:32.29px;font:normal 4.85px/5.82px 'Liberation Sans',sans-serif;color:#e8ecf8;">AdvancedStringProcessorV2.cs</b>
<svg style="position:absolute;left:408.80px;top:33.30px" width="3" height="2" viewBox="0 0 3 2"><path d="M0 0 L3 0 L1.5 1.8 Z" fill="#aab2d0"/></svg>
<i style="left:3.00px;top:38.30px;width:410.00px;height:9.10px;background:#fdfdfe;"></i>
<i style="left:3.00px;top:46.80px;width:410.00px;height:0.60px;background:#c9ccd6;"></i>
<i style="left:138.70px;top:38.30px;width:0.60px;height:9.10px;background:#c9ccd6;"></i>
<i style="left:276.70px;top:38.30px;width:0.60px;height:9.10px;background:#c9ccd6;"></i>
<i style="left:4.60px;top:40.00px;width:5.60px;height:5.00px;background:#e8ece8;border:0.8px solid #35503f;box-sizing:border-box"></i>
<b style="left:12.00px;top:41.18px;font:normal 4.7px/5.64px 'Liberation Sans',sans-serif;color:#222;width:120px;overflow:hidden">ClassLibrary.Tests</b>
<svg style="position:absolute;left:134.00px;top:42.30px" width="3" height="2" viewBox="0 0 3 2"><path d="M0 0 L3 0 L1.5 1.8 Z" fill="#333"/></svg>
<svg style="position:absolute;left:141.00px;top:40.30px" width="4.5" height="4.5" viewBox="0 0 4.5 4.5"><path d="M0.5 3.5 L2 2 L0.5 0.5" stroke="#8a6a30" stroke-width="0.6" fill="none"/><rect x="2.5" y="2" width="2" height="2" fill="#998"/></svg>
<b style="left:148.30px;top:41.12px;font:normal 4.8px/5.76px 'Liberation Sans',sans-serif;color:#333;width:122px;overflow:hidden">ClassLibrary.Tests.AdvancedStringProcessorV2Should</b>
<svg style="position:absolute;left:272.00px;top:42.30px" width="3" height="2" viewBox="0 0 3 2"><path d="M0 0 L3 0 L1.5 1.8 Z" fill="#333"/></svg>
<svg style="position:absolute;left:279.00px;top:40.50px" width="4" height="4" viewBox="0 0 4 4"><circle cx="2" cy="2" r="1.4" fill="none" stroke="#555" stroke-width="0.6"/></svg>
<b style="left:285.70px;top:41.12px;font:normal 4.8px/5.76px 'Liberation Sans',sans-serif;color:#333;width:119px;overflow:hidden">ProcessConvertToUppercase()</b>
<svg style="position:absolute;left:409.00px;top:42.30px" width="3" height="2" viewBox="0 0 3 2"><path d="M0 0 L3 0 L1.5 1.8 Z" fill="#333"/></svg>
<i style="left:3.00px;top:47.60px;width:410.00px;height:106.60px;background:#ffffff;"></i>
<i style="left:3.00px;top:47.60px;width:9.00px;height:106.60px;background:#f0f0f2;"></i>
<i style="left:9.00px;top:47.60px;width:3.00px;height:106.60px;background:#f7f7f9;"></i>
<i style="left:30.00px;top:47.60px;width:0.60px;height:106.60px;background:#b0b0b8;"></i>
<i style="left:416.60px;top:29.20px;width:114.20px;height:9.20px;background:#44548e;"></i>
<b style="left:418.50px;top:32.49px;font:normal 4.85px/5.82px 'Liberation Sans',sans-serif;color:#f0f2fa;">Solution Explorer</b>
<svg style="position:absolute;left:512.50px;top:32.20px" width="3" height="2.5" viewBox="0 0 3 2.5"><path d="M0 0 L3 0 L1.5 1.8 Z" fill="#dde"/></svg>
<svg style="position:absolute;left:518.50px;top:31.20px" width="4" height="4.5" viewBox="0 0 4 4.5"><path d="M2 0.3 L2 4.2 M0.3 2.6 L3.7 2.6 M0.8 0.5 L3.2 0.5" stroke="#dde" stroke-width="0.6"/></svg>
<svg style="position:absolute;left:524.50px;top:31.50px" width="4" height="4" viewBox="0 0 4 4"><path d="M0.4 0.4 L3.6 3.6 M3.6 0.4 L0.4 3.6" stroke="#dde" stroke-width="0.6"/></svg>
<i style="left:416.60px;top:38.50px;width:114.20px;height:11.00px;background:#cdd5ee;"></i>
<div style="left:0;top:1px">
<i style="left:421.50px;top:41.60px;width:4.40px;height:4.40px;background:#c7cde2;border-radius:50%"></i>
<i style="left:430.00px;top:41.60px;width:4.40px;height:4.40px;background:#c7cde2;border-radius:50%"></i>
<svg style="position:absolute;left:438.50px;top:41.00px" width="6" height="5" viewBox="0 0 6 5"><path d="M0.5 2.6 L3 0.3 L5.5 2.6 M1.2 2.4 L1.2 4.8 L4.8 4.8 L4.8 2.4" stroke="#333" stroke-width="0.8" fill="none"/></svg>
<i style="left:447.50px;top:41.60px;width:4.40px;height:4.40px;background:#8a8fa3;"></i>
<svg style="position:absolute;left:456.50px;top:43.40px" width="2.5" height="1.6" viewBox="0 0 2.5 1.6"><path d="M0 0 L2.5 0 L1.25 1.5 Z" fill="#444"/></svg>
<i style="left:461.00px;top:40.20px;width:0.50px;height:7.60px;background:#aeb5cc;"></i>
<svg style="position:absolute;left:464.50px;top:41.00px" width="6" height="5.5" viewBox="0 0 6 5.5"><path d="M1 1 Q4.5 0.5 4.8 4" stroke="#555" stroke-width="0.8" fill="none"/><circle cx="2" cy="4" r="1" fill="#555"/></svg>
<svg style="position:absolute;left:473.00px;top:43.40px" width="2.5" height="1.6" viewBox="0 0 2.5 1.6"><path d="M0 0 L2.5 0 L1.25 1.5 Z" fill="#444"/></svg>
<svg style="position:absolute;left:479.50px;top:41.00px" width="5" height="5" viewBox="0 0 5 5"><path d="M0.5 0.5 L4 4 M2 4.3 L4.3 4.3 L4.3 2" stroke="#333" stroke-width="0.8" fill="none"/></svg>
<svg style="position:absolute;left:488.30px;top:40.90px" width="5" height="5.5" viewBox="0 0 5 5.5"><path d="M4 1.4 A2 2 0 1 0 4.3 3.6" stroke="#1e4a8a" stroke-width="1.0" fill="none"/></svg>
<svg style="position:absolute;left:497.00px;top:41.20px" width="5" height="5" viewBox="0 0 5 5"><path d="M0.8 4.2 L4.2 0.8" stroke="#222" stroke-width="1.2"/></svg>
<svg style="position:absolute;left:505.50px;top:40.90px" width="5.5" height="5.5" viewBox="0 0 5.5 5.5"><circle cx="2.7" cy="2.9" r="2" fill="none" stroke="#333" stroke-width="0.8"/><rect x="0.5" y="0.3" width="2" height="2" fill="#333"/></svg>
</div>
<i style="left:416.60px;top:49.50px;width:114.20px;height:9.50px;background:#fcfcfe;"></i>
<i style="left:416.60px;top:58.60px;width:114.20px;height:0.50px;background:#d8dbe6;"></i>
<b style="left:418.50px;top:52.43px;font:normal 4.95px/5.94px 'Liberation Sans',sans-serif;color:#7d7f89;">Search Solution Explorer (Ctrl+;)</b>
<svg style="position:absolute;left:518.50px;top:51.60px" width="5" height="5" viewBox="0 0 5 5"><circle cx="3" cy="2" r="1.4" fill="none" stroke="#444" stroke-width="0.7"/><path d="M2 3 L0.5 4.6" stroke="#444" stroke-width="0.8"/></svg>
<svg style="position:absolute;left:525.50px;top:53.60px" width="2.5" height="1.6" viewBox="0 0 2.5 1.6"><path d="M0 0 L2.5 0 L1.25 1.5 Z" fill="#555"/></svg>
<i style="left:416.60px;top:59.00px;width:114.20px;height:217.90px;background:#f6f7fb;"></i>
<svg style="position:absolute;left:424.00px;top:62.00px" width="5.5" height="5" viewBox="0 0 5.5 5"><rect x="0.4" y="0.4" width="4.6" height="3.6" fill="none" stroke="#444" stroke-width="0.6"/><rect x="0.4" y="0.4" width="4.6" height="1" fill="#444"/><path d="M1.5 4.6 L4 4.6" stroke="#666" stroke-width="0.5"/></svg>
<b style="left:430.80px;top:62.33px;font:normal 4.95px/5.94px 'Liberation Sans',sans-serif;color:#333;">Solution 'ClassLibrary' (2 of 2 projects)</b>
<svg style="position:absolute;left:421.80px;top:70.59px" width="3" height="3" viewBox="0 0 3 3"><path d="M2.6 0.3 L2.6 2.6 L0.3 2.6 Z" fill="#333"/></svg>
<svg style="position:absolute;left:429.00px;top:69.49px" width="6.5" height="5" viewBox="0 0 6.5 5"><rect x="0.4" y="0.4" width="5.6" height="4.2" fill="#e9ecef" stroke="#4a5a4e" stroke-width="0.7"/><path d="M1.5 2 L3 2 M1.5 3.2 L3 3.2" stroke="#444" stroke-width="0.6"/><rect x="3.8" y="1.4" width="1.5" height="2.4" fill="#3d6b4d"/></svg>
<b style="left:437.60px;top:70.09px;font:bold 4.5px/5.4px 'Liberation Sans',sans-serif;color:#111;">ClassLibrary</b>
<svg style="position:absolute;left:429.10px;top:77.88px" width="3" height="3.2" viewBox="0 0 3 3.2"><path d="M0.5 0.2 L2.7 1.6 L0.5 3.0 Z" fill="#333"/></svg>
<svg style="position:absolute;left:436.30px;top:76.98px" width="5.5" height="5.5" viewBox="0 0 5.5 5.5"><path d="M0.6 4.8 L3 2.4" stroke="#222" stroke-width="1.1"/><circle cx="3.6" cy="1.8" r="1.3" fill="#222"/></svg>
<b style="left:444.90px;top:77.31px;font:normal 4.95px/5.94px 'Liberation Sans',sans-serif;color:#222;">Properties</b>
<svg style="position:absolute;left:429.10px;top:85.37px" width="3" height="3.2" viewBox="0 0 3 3.2"><path d="M0.5 0.2 L2.7 1.6 L0.5 3.0 Z" fill="#333"/></svg>
<svg style="position:absolute;left:436.30px;top:84.47px" width="6" height="5" viewBox="0 0 6 5"><rect x="0.3" y="1.8" width="2" height="1.6" fill="#222"/><rect x="3.4" y="1.8" width="2" height="1.6" fill="#222"/><path d="M2 2.6 L3.6 2.6" stroke="#222" stroke-width="0.5"/></svg>
<b style="left:444.90px;top:84.80px;font:normal 4.95px/5.94px 'Liberation Sans',sans-serif;color:#222;">References</b>
<svg style="position:absolute;left:429.10px;top:93.06px" width="3" height="3" viewBox="0 0 3 3"><path d="M2.6 0.3 L2.6 2.6 L0.3 2.6 Z" fill="#333"/></svg>
<svg style="position:absolute;left:436.30px;top:91.96px" width="6" height="5" viewBox="0 0 6 5"><path d="M0.3 0.8 L2.4 0.8 L3 1.5 L5.6 1.5 L5.6 4.5 L0.3 4.5 Z" fill="#e6d6b0"/></svg>
<b style="left:444.90px;top:92.29px;font:normal 4.95px/5.94px 'Liberation Sans',sans-serif;color:#222;">Enums</b>
<svg style="position:absolute;left:437.20px;top:100.35px" width="3" height="3.2" viewBox="0 0 3 3.2"><path d="M0.5 0.2 L2.7 1.6 L0.5 3.0 Z" fill="#333"/></svg>
<svg style="position:absolute;left:444.40px;top:99.45px" width="6" height="5" viewBox="0 0 6 5"><text x="0" y="4" font-family="Liberation Sans" font-size="4" font-weight="bold" fill="#6a8a78">C#</text></svg>
<b style="left:453.00px;top:99.78px;font:normal 4.95px/5.94px 'Liberation Sans',sans-serif;color:#222;">AdvancedStringProcessorV1.cs</b>
<svg style="position:absolute;left:437.20px;top:107.84px" width="3" height="3.2" viewBox="0 0 3 3.2"><path d="M0.5 0.2 L2.7 1.6 L0.5 3.0 Z" fill="#333"/></svg>
<svg style="position:absolute;left:444.40px;top:106.94px" width="6" height="5" viewBox="0 0 6 5"><text x="0" y="4" font-family="Liberation Sans" font-size="4" font-weight="bold" fill="#6a8a78">C#</text></svg>
<b style="left:453.00px;top:107.27px;font:normal 4.95px/5.94px 'Liberation Sans',sans-serif;color:#222;">AdvancedStringProcessorV2.cs</b>
<svg style="position:absolute;left:429.10px;top:115.33px" width="3" height="3.2" viewBox="0 0 3 3.2"><path d="M0.5 0.2 L2.7 1.6 L0.5 3.0 Z" fill="#333"/></svg>
<svg style="position:absolute;left:436.30px;top:114.43px" width="6" height="5" viewBox="0 0 6 5"><path d="M0.3 0.8 L2.4 0.8 L3 1.5 L5.6 1.5 L5.6 4.5 L0.3 4.5 Z" fill="#dcc18c"/></svg>
<b style="left:444.90px;top:114.76px;font:normal 4.95px/5.94px 'Liberation Sans',sans-serif;color:#222;">StructPerformance</b>
<svg style="position:absolute;left:429.10px;top:122.82px" width="3" height="3.2" viewBox="0 0 3 3.2"><path d="M0.5 0.2 L2.7 1.6 L0.5 3.0 Z" fill="#333"/></svg>
<svg style="position:absolute;left:436.30px;top:121.92px" width="6" height="5" viewBox="0 0 6 5"><path d="M0.3 0.8 L2.4 0.8 L3 1.5 L5.6 1.5 L5.6 4.5 L0.3 4.5 Z" fill="#dcc18c"/></svg>
<b style="left:444.90px;top:122.25px;font:normal 4.95px/5.94px 'Liberation Sans',sans-serif;color:#222;">Tasks</b>
<i style="left:417.10px;top:128.31px;width:112.70px;height:7.30px;background:#dfe1ea;"></i>
<svg style="position:absolute;left:421.80px;top:130.51px" width="3" height="3" viewBox="0 0 3 3"><path d="M2.6 0.3 L2.6 2.6 L0.3 2.6 Z" fill="#333"/></svg>
<svg style="position:absolute;left:429.00px;top:129.41px" width="6.5" height="5" viewBox="0 0 6.5 5"><rect x="0.4" y="0.4" width="5.6" height="4.2" fill="#e9ecef" stroke="#4a5a4e" stroke-width="0.7"/><path d="M1.5 2 L3 2 M1.5 3.2 L3 3.2" stroke="#444" stroke-width="0.6"/><rect x="3.8" y="1.4" width="1.5" height="2.4" fill="#3d6b4d"/></svg>
<b style="left:437.60px;top:129.74px;font:normal 4.95px/5.94px 'Liberation Sans',sans-serif;color:#222;">ClassLibrary.Tests</b>
<svg style="position:absolute;left:429.10px;top:137.80px" width="3" height="3.2" viewBox="0 0 3 3.2"><path d="M0.5 0.2 L2.7 1.6 L0.5 3.0 Z" fill="#333"/></svg>
<svg style="position:absolute;left:436.30px;top:136.90px" width="5.5" height="5.5" viewBox="0 0 5.5 5.5"><path d="M0.6 4.8 L3 2.4" stroke="#222" stroke-width="1.1"/><circle cx="3.6" cy="1.8" r="1.3" fill="#222"/></svg>
<b style="left:444.90px;top:137.23px;font:normal 4.95px/5.94px 'Liberation Sans',sans-serif;color:#222;">Properties</b>
<svg style="position:absolute;left:429.10px;top:145.29px" width="3" height="3.2" viewBox="0 0 3 3.2"><path d="M0.5 0.2 L2.7 1.6 L0.5 3.0 Z" fill="#333"/></svg>
<svg style="position:absolute;left:436.30px;top:144.39px" width="6" height="5" viewBox="0 0 6 5"><rect x="0.3" y="1.8" width="2" height="1.6" fill="#222"/><rect x="3.4" y="1.8" width="2" height="1.6" fill="#222"/><path d="M2 2.6 L3.6 2.6" stroke="#222" stroke-width="0.5"/></svg>
<b style="left:444.90px;top:144.72px;font:normal 4.95px/5.94px 'Liberation Sans',sans-serif;color:#222;">References</b>
<svg style="position:absolute;left:429.10px;top:152.78px" width="3" height="3.2" viewBox="0 0 3 3.2"><path d="M0.5 0.2 L2.7 1.6 L0.5 3.0 Z" fill="#333"/></svg>
<svg style="position:absolute;left:436.30px;top:151.88px" width="6" height="5" viewBox="0 0 6 5"><text x="0" y="4" font-family="Liberation Sans" font-size="4" font-weight="bold" fill="#6a8a78">C#</text></svg>
<b style="left:444.90px;top:152.21px;font:normal 4.95px/5.94px 'Liberation Sans',sans-serif;color:#222;">AdvancedStringProcessorV1Should.cs</b>
<svg style="position:absolute;left:429.10px;top:160.27px" width="3" height="3.2" viewBox="0 0 3 3.2"><path d="M0.5 0.2 L2.7 1.6 L0.5 3.0 Z" fill="#333"/></svg>
<svg style="position:absolute;left:436.30px;top:159.37px" width="6" height="5" viewBox="0 0 6 5"><text x="0" y="4" font-family="Liberation Sans" font-size="4" font-weight="bold" fill="#6a8a78">C#</text></svg>
<b style="left:444.90px;top:159.70px;font:normal 4.95px/5.94px 'Liberation Sans',sans-serif;color:#222;">AdvancedStringProcessorV2Should.cs</b>
<svg style="position:absolute;left:436.30px;top:166.86px" width="6" height="5.5" viewBox="0 0 6 5.5"><rect x="0.6" y="0.6" width="4.4" height="4.4" rx="1.2" fill="none" stroke="#333" stroke-width="0.7"/><path d="M2.8 0 L2.8 1.6" stroke="#333" stroke-width="0.7"/></svg>
<b style="left:444.90px;top:167.19px;font:normal 4.95px/5.94px 'Liberation Sans',sans-serif;color:#222;">App.config</b>
<svg style="position:absolute;left:436.30px;top:174.35px" width="6" height="5" viewBox="0 0 6 5"><text x="0" y="4" font-family="Liberation Sans" font-size="4" font-weight="bold" fill="#6a8a78">C#</text></svg>
<b style="left:444.90px;top:174.68px;font:normal 4.95px/5.94px 'Liberation Sans',sans-serif;color:#222;">ObjectReferenceEqualityExample.cs</b>
<svg style="position:absolute;left:436.30px;top:181.84px" width="6" height="5.5" viewBox="0 0 6 5.5"><rect x="0.6" y="0.6" width="4.4" height="4.4" rx="1.2" fill="none" stroke="#333" stroke-width="0.7"/><path d="M2.8 0 L2.8 1.6" stroke="#333" stroke-width="0.7"/></svg>
<b style="left:444.90px;top:182.17px;font:normal 4.95px/5.94px 'Liberation Sans',sans-serif;color:#222;">packages.config</b>
<svg style="position:absolute;left:429.10px;top:190.23px" width="3" height="3.2" viewBox="0 0 3 3.2"><path d="M0.5 0.2 L2.7 1.6 L0.5 3.0 Z" fill="#333"/></svg>
<svg style="position:absolute;left:436.30px;top:189.33px" width="6" height="5" viewBox="0 0 6 5"><text x="0" y="4" font-family="Liberation Sans" font-size="4" font-weight="bold" fill="#6a8a78">C#</text></svg>
<b style="left:444.90px;top:189.66px;font:normal 4.95px/5.94px 'Liberation Sans',sans-serif;color:#222;">StringProcessorShould.cs</b>
<svg style="position:absolute;left:436.30px;top:196.82px" width="6" height="5" viewBox="0 0 6 5"><text x="0" y="4" font-family="Liberation Sans" font-size="4" font-weight="bold" fill="#6a8a78">C#</text></svg>
<b style="left:444.90px;top:197.15px;font:normal 4.95px/5.94px 'Liberation Sans',sans-serif;color:#222;">StructEqualityPerformance.cs</b>
<i style="left:0.00px;top:276.90px;width:533.33px;height:12.80px;background:#5d6b99;"></i>
<i style="left:0.00px;top:276.90px;width:533.33px;height:0.90px;background:#4f5a88;"></i>
<b style="left:2.60px;top:281.38px;font:normal 4.7px/5.64px 'Liberation Sans',sans-serif;color:#eef0f8;">Test Explorer</b>
<b style="left:34.50px;top:281.38px;font:normal 4.7px/5.64px 'Liberation Sans',sans-serif;color:#eef0f8;">Error List</b>
<b style="left:58.40px;top:281.38px;font:normal 4.7px/5.64px 'Liberation Sans',sans-serif;color:#eef0f8;">Output</b>
<i style="left:0.00px;top:289.70px;width:533.33px;height:9.97px;background:#42508c;"></i>
<i style="left:0.00px;top:298.30px;width:533.33px;height:1.37px;background:#384276;"></i>
<svg style="position:absolute;left:2.50px;top:291.20px" width="6" height="6" viewBox="0 0 6 6"><path d="M1 5.5 L1 1 L5 1 L5 5 M0.2 4.3 L1 5.5 L1.8 4.3" stroke="#eef" stroke-width="0.7" fill="none"/></svg>
<b style="left:11.50px;top:292.55px;font:normal 4.75px/5.7px 'Liberation Sans',sans-serif;color:#f2f3f8;">Ready</b>
<b style="left:202.00px;top:292.60px;font:normal 4.5px/5.4px 'Liberation Sans',sans-serif;color:#f2f3f8;"></b>
<b style="left:241.00px;top:292.60px;font:normal 4.5px/5.4px 'Liberation Sans',sans-serif;color:#f2f3f8;"></b>
<b style="left:280.00px;top:292.60px;font:normal 4.5px/5.4px 'Liberation Sans',sans-serif;color:#f2f3f8;"></b>
<svg style="position:absolute;left:449.00px;top:291.60px" width="4" height="5" viewBox="0 0 4 5"><path d="M2 0.3 L3.8 2.3 L2.6 2.3 L2.6 4.8 L1.4 4.8 L1.4 2.3 L0.2 2.3 Z" fill="#f2f3f8"/></svg>
<b style="left:455.50px;top:292.40px;font:normal 5.0px/6.0px 'Liberation Sans',sans-serif;color:#f2f3f8;">Add to Source Control</b>
<svg style="position:absolute;left:507.00px;top:293.50px" width="3" height="2" viewBox="0 0 3 2"><path d="M0 0 L3 0 L1.5 1.8 Z" fill="#f2f3f8"/></svg>
<svg style="position:absolute;left:519.00px;top:291.00px" width="5" height="6" viewBox="0 0 5 6"><path d="M2.5 0.3 Q4.3 0.8 4.3 3 L4.8 4.5 L0.2 4.5 L0.7 3 Q0.7 0.8 2.5 0.3 Z M1.8 5 L3.2 5 L2.5 5.8 Z" fill="#f2f3f8"/></svg>
<i style="left:239.74px;top:66.04px;width:99.25px;height:8.20px;background:#d8ecd8;"></i>
<div style="left:3.0px;top:47.6px;width:402.20px;height:106.60px;overflow:hidden">
<i style="left:21.00px;top:-2.11px;width:1.9px;height:9.42px;background:#8fd48f"></i>
<b style="left:30.30px;top:-0.51px;font:normal 6.62px/9.42px 'Liberation Mono',monospace" class="cd">        <span style="color:#262a40">public</span> <span style="color:#262a40">void</span> <span style="color:#6a6054">ProcessAddLength</span><span style="color:#202020">(</span><span style="color:#202020">)</span></b>
<i style="left:21.00px;top:7.31px;width:1.9px;height:9.42px;background:#8fd48f"></i>
<b style="left:30.30px;top:8.91px;font:normal 6.62px/9.42px 'Liberation Mono',monospace" class="cd">        <span style="color:#202020">{</span></b>
<i style="left:21.00px;top:16.73px;width:1.9px;height:9.42px;background:#8fd48f"></i>
<b style="left:30.30px;top:18.33px;font:normal 6.62px/9.42px 'Liberation Mono',monospace" class="cd">            <span style="color:#262a40">var</span> <span style="color:#3c4156">results</span> <span style="color:#202020">=</span> <span style="color:#3c4156">sut</span><span style="color:#202020">.</span><span style="color:#6a6054">Process</span><span style="color:#202020">(</span><span style="color:#3c4156">inputStrings</span><span style="color:#202020">,</span> <span style="color:#93acb0">StringProcessingOptionsV2</span><span style="color:#202020">.</span><span style="color:#202020">AddLength</span><span style="color:#202020">)</span><span style="color:#202020">;</span></b>
<i style="left:21.00px;top:26.15px;width:1.9px;height:9.42px;background:#8fd48f"></i>
<b style="left:30.30px;top:27.75px;font:normal 6.62px/9.42px 'Liberation Mono',monospace" class="cd"></b>
<i style="left:21.00px;top:35.57px;width:1.9px;height:9.42px;background:#8fd48f"></i>
<b style="left:30.30px;top:37.17px;font:normal 6.62px/9.42px 'Liberation Mono',monospace" class="cd">            <span style="color:#93acb0">Assert</span><span style="color:#202020">.</span><span style="color:#6a6054">Equal</span><span style="color:#202020">(</span><span style="color:#202020">4</span><span style="color:#202020">,</span> <span style="color:#3c4156">results</span><span style="color:#202020">.</span><span style="color:#202020">Count</span><span style="color:#202020">)</span><span style="color:#202020">;</span></b>
<i style="left:21.00px;top:44.99px;width:1.9px;height:9.42px;background:#8fd48f"></i>
<b style="left:30.30px;top:46.59px;font:normal 6.62px/9.42px 'Liberation Mono',monospace" class="cd"></b>
<i style="left:21.00px;top:54.41px;width:1.9px;height:9.42px;background:#8fd48f"></i>
<b style="left:30.30px;top:56.01px;font:normal 6.62px/9.42px 'Liberation Mono',monospace" class="cd">            <span style="color:#93acb0">Assert</span><span style="color:#202020">.</span><span style="color:#6a6054">Equal</span><span style="color:#202020">(</span><span style="color:#7e3434">"5-Hello"</span><span style="color:#202020">,</span> <span style="color:#3c4156">results</span><span style="color:#202020">[</span><span style="color:#202020">0</span><span style="color:#202020">]</span><span style="color:#202020">)</span><span style="color:#202020">;</span></b>
<i style="left:21.00px;top:63.83px;width:1.9px;height:9.42px;background:#8fd48f"></i>
<b style="left:30.30px;top:65.43px;font:normal 6.62px/9.42px 'Liberation Mono',monospace" class="cd">            <span style="color:#93acb0">Assert</span><span style="color:#202020">.</span><span style="color:#6a6054">Equal</span><span style="color:#202020">(</span><span style="color:#7e3434">"7-Welcome"</span><span style="color:#202020">,</span> <span style="color:#3c4156">results</span><span style="color:#202020">[</span><span style="color:#202020">1</span><span style="color:#202020">]</span><span style="color:#202020">)</span><span style="color:#202020">;</span></b>
<i style="left:21.00px;top:73.25px;width:1.9px;height:9.42px;background:#8fd48f"></i>
<b style="left:30.30px;top:74.85px;font:normal 6.62px/9.42px 'Liberation Mono',monospace" class="cd">            <span style="color:#93acb0">Assert</span><span style="color:#202020">.</span><span style="color:#6a6054">Equal</span><span style="color:#202020">(</span><span style="color:#7e3434">"5-Howdy"</span><span style="color:#202020">,</span> <span style="color:#3c4156">results</span><span style="color:#202020">[</span><span style="color:#202020">2</span><span style="color:#202020">]</span><span style="color:#202020">)</span><span style="color:#202020">;</span></b>
<i style="left:21.00px;top:82.67px;width:1.9px;height:9.42px;background:#8fd48f"></i>
<b style="left:30.30px;top:84.27px;font:normal 6.62px/9.42px 'Liberation Mono',monospace" class="cd">        <span style="color:#202020">}</span></b>
<i style="left:21.00px;top:92.09px;width:1.9px;height:9.42px;background:#8fd48f"></i>
<b style="left:30.30px;top:93.69px;font:normal 6.62px/9.42px 'Liberation Mono',monospace" class="cd"></b>
<i style="left:21.00px;top:101.51px;width:1.9px;height:9.42px;background:#8fd48f"></i>
<b style="left:30.30px;top:103.11px;font:normal 6.62px/9.42px 'Liberation Mono',monospace" class="cd">        <span style="color:#202020">[</span><span style="color:#93acb0">Fact</span><span style="color:#202020">]</span></b>
</div>
<i style="left:28.3px;top:48.20px;width:4px;height:4px;background:#fff;border:0.6px solid #a0a0a8;box-sizing:border-box"></i>
<i style="left:29.30px;top:49.90px;width:2.00px;height:0.60px;background:#777;"></i>
<i style="left:405.20px;top:47.60px;width:7.80px;height:106.60px;background:#f4f4f6;"></i>
<i style="left:405.20px;top:47.60px;width:0.50px;height:106.60px;background:#e4e4ea;"></i>
<svg style="position:absolute;left:406.60px;top:49.20px" width="5.5" height="5.5" viewBox="0 0 5.5 5.5"><path d="M2.75 0.3 L2.75 5.2 M0.3 2.75 L5.2 2.75" stroke="#222" stroke-width="1.0"/></svg>
<i style="left:405.70px;top:55.20px;width:7.30px;height:0.50px;background:#999;"></i>
<svg style="position:absolute;left:407.70px;top:57.40px" width="3" height="2" viewBox="0 0 3 2"><path d="M0 1.8 L3 1.8 L1.5 0 Z" fill="#888"/></svg>
<i style="left:408.50px;top:81.70px;width:3.60px;height:58.30px;background:#c6c7cc;"></i>
<svg style="position:absolute;left:407.70px;top:149.70px" width="3" height="2" viewBox="0 0 3 2"><path d="M0 0 L3 0 L1.5 1.8 Z" fill="#888"/></svg>
<i style="left:405.80px;top:60.00px;width:2.60px;height:90.00px;background:#bfe6bf;"></i>
<i style="left:3.00px;top:153.80px;width:527.80px;height:1.20px;background:#3a3a44;"></i>
<i style="left:3.00px;top:155.00px;width:527.80px;height:10.40px;background:#f2c980;"></i>
<b style="left:5.00px;top:158.48px;font:normal 4.7px/5.64px 'Liberation Sans',sans-serif;color:#4a3818;">Test Explorer</b>
<svg style="position:absolute;left:517.00px;top:158.50px" width="3" height="2.5" viewBox="0 0 3 2.5"><path d="M0 0 L3 0 L1.5 1.8 Z" fill="#554"/></svg>
<svg style="position:absolute;left:521.50px;top:157.60px" width="4" height="4.5" viewBox="0 0 4 4.5"><path d="M2 0.3 L2 4.2 M0.3 2.6 L3.7 2.6" stroke="#554" stroke-width="0.6"/></svg>
<svg style="position:absolute;left:526.00px;top:157.80px" width="4" height="4" viewBox="0 0 4 4"><path d="M0.4 0.4 L3.6 3.6 M3.6 0.4 L0.4 3.6" stroke="#554" stroke-width="0.6"/></svg>
<i style="left:3.00px;top:165.40px;width:527.80px;height:10.10px;background:#cdd5ee;"></i>
<svg style="position:absolute;left:5.50px;top:167.40px" width="6" height="6" viewBox="0 0 6 6"><circle cx="3" cy="3" r="2.3" fill="none" stroke="#3a8a50" stroke-width="1.1"/><path d="M2.4 1.6 L4.2 3 L2.4 4.4 Z" fill="#3a8a50"/></svg>
<svg style="position:absolute;left:14.00px;top:167.60px" width="5" height="5.5" viewBox="0 0 5 5.5"><path d="M0.8 0.4 L4.4 2.7 L0.8 5 Z" fill="#3c4a6a"/></svg>
<i style="left:21.50px;top:169.80px;width:1.30px;height:1.00px;background:#444;"></i>
<svg style="position:absolute;left:26.50px;top:167.20px" width="7" height="6.5" viewBox="0 0 7 6.5"><circle cx="3" cy="3.4" r="2" fill="none" stroke="#6a7090" stroke-width="0.8"/><path d="M4.2 0.6 L6 2" stroke="#6a7090" stroke-width="0.8"/></svg>
<svg style="position:absolute;left:35.50px;top:167.60px" width="7" height="6" viewBox="0 0 7 6"><circle cx="4" cy="3.4" r="1.9" fill="none" stroke="#2e4070" stroke-width="1.0"/><path d="M0.5 0.8 L2 2" stroke="#2e4070" stroke-width="0.8"/></svg>
<i style="left:49.60px;top:166.40px;width:0.50px;height:8.40px;background:#b8bed6;"></i>
<i style="left:50.30px;top:166.60px;width:15.60px;height:8.00px;background:#f2efe4;"></i>
<i style="left:65.90px;top:166.60px;width:0.50px;height:8.00px;background:#c8ccdc;"></i>
<svg style="position:absolute;left:52.10px;top:167.40px" width="5" height="6" viewBox="0 0 5 6"><circle cx="2.5" cy="1.6" r="1.3" fill="#333"/><path d="M0.3 5.8 Q2.5 1.8 4.7 5.8 Z" fill="#333"/></svg>
<b style="left:59.10px;top:168.64px;font:normal 4.6px/5.52px 'Liberation Sans',sans-serif;color:#555;">7</b>
<i style="left:66.20px;top:166.60px;width:15.40px;height:8.00px;background:#f2efe4;"></i>
<i style="left:81.60px;top:166.60px;width:0.50px;height:8.00px;background:#c8ccdc;"></i>
<i style="left:67.80px;top:168.10px;width:5.00px;height:5.00px;background:#3a9a4a;border-radius:50%"></i>
<svg style="position:absolute;left:67.80px;top:168.10px" width="5" height="5" viewBox="0 0 5 5"><path d="M1.2 2.6 L2.2 3.6 L3.9 1.5" stroke="#fff" stroke-width="0.7" fill="none"/></svg>
<b style="left:75.00px;top:168.64px;font:normal 4.6px/5.52px 'Liberation Sans',sans-serif;color:#555;">3</b>
<i style="left:81.80px;top:166.60px;width:15.40px;height:8.00px;background:#f2efe4;"></i>
<i style="left:97.20px;top:166.60px;width:0.50px;height:8.00px;background:#c8ccdc;"></i>
<i style="left:83.40px;top:168.10px;width:5.00px;height:5.00px;background:#c03a2a;border-radius:50%"></i>
<svg style="position:absolute;left:83.40px;top:168.10px" width="5" height="5" viewBox="0 0 5 5"><path d="M1.5 1.5 L3.5 3.5 M3.5 1.5 L1.5 3.5" stroke="#fff" stroke-width="0.7"/></svg>
<b style="left:90.60px;top:168.64px;font:normal 4.6px/5.52px 'Liberation Sans',sans-serif;color:#555;">0</b>
<i style="left:97.40px;top:166.60px;width:15.40px;height:8.00px;background:#f2efe4;"></i>
<i style="left:112.80px;top:166.60px;width:0.50px;height:8.00px;background:#c8ccdc;"></i>
<i style="left:99.00px;top:168.10px;width:5.00px;height:5.00px;background:#2a8ab8;border-radius:50%"></i>
<svg style="position:absolute;left:99.00px;top:168.10px" width="5" height="5" viewBox="0 0 5 5"><path d="M2.5 2.2 L2.5 4" stroke="#fff" stroke-width="0.7"/><circle cx="2.5" cy="1.3" r="0.45" fill="#fff"/></svg>
<b style="left:106.20px;top:168.64px;font:normal 4.6px/5.52px 'Liberation Sans',sans-serif;color:#555;">4</b>
<i style="left:112.50px;top:166.40px;width:0.50px;height:8.40px;background:#b8bed6;"></i>
<svg style="position:absolute;left:116.00px;top:167.00px" width="7" height="7" viewBox="0 0 7 7"><path d="M1 1 L6 1 M1 3.5 L6 3.5 M1 6 L6 6 M2.5 0 L2.5 2 M4.5 2.5 L4.5 4.5 M2 5 L2 7" stroke="#3c4660" stroke-width="0.8"/></svg>
<i style="left:125.50px;top:169.80px;width:1.30px;height:1.00px;background:#444;"></i>
<svg style="position:absolute;left:130.50px;top:167.00px" width="6" height="7" viewBox="0 0 6 7"><path d="M1 1 L1 6 L3 6 M1 1 L4 1 M3 3.5 L5 3.5" stroke="#4a5470" stroke-width="0.8" fill="none"/></svg>
<svg style="position:absolute;left:139.50px;top:167.20px" width="6" height="6" viewBox="0 0 6 6"><path d="M1 5 Q1 1 5 1 M3.5 0 L5 1 L3.5 2" stroke="#8a90a8" stroke-width="0.8" fill="none"/></svg>
<svg style="position:absolute;left:148.50px;top:167.30px" width="6" height="6" viewBox="0 0 6 6"><circle cx="3" cy="3" r="2.1" fill="none" stroke="#333" stroke-width="1.3"/></svg>
<i style="left:158.50px;top:169.80px;width:1.30px;height:1.00px;background:#444;"></i>
<i style="left:426.50px;top:166.20px;width:104.00px;height:8.60px;background:#fbfbfd;"></i>
<b style="left:428.50px;top:168.82px;font:normal 4.3px/5.16px 'Liberation Sans',sans-serif;color:#8d8f99;">Search Test Explorer</b>
<svg style="position:absolute;left:518.00px;top:167.50px" width="5" height="5" viewBox="0 0 5 5"><circle cx="3" cy="2" r="1.4" fill="none" stroke="#444" stroke-width="0.7"/><path d="M2 3 L0.5 4.6" stroke="#444" stroke-width="0.8"/></svg>
<i style="left:3.00px;top:175.50px;width:346.50px;height:102.90px;background:#f6f7fb;"></i>
<i style="left:3.00px;top:175.50px;width:346.50px;height:9.30px;background:#fafbfd;"></i>
<i style="left:3.00px;top:184.50px;width:346.50px;height:0.60px;background:#dcdfe8;"></i>
<b style="left:6.00px;top:178.24px;font:normal 4.6px/5.52px 'Liberation Sans',sans-serif;color:#333;">Test</b>
<i style="left:214.00px;top:177.00px;width:0.50px;height:7.00px;background:#dcdfe8;"></i>
<b style="left:219.50px;top:178.30px;font:normal 4.5px/5.4px 'Liberation Sans',sans-serif;color:#444;">Durati...</b>
<svg style="position:absolute;left:243.00px;top:179.30px" width="3" height="2" viewBox="0 0 3 2"><path d="M0 0 L3 0 L1.5 1.8 Z" fill="#444"/></svg>
<i style="left:249.00px;top:177.00px;width:0.50px;height:7.00px;background:#dcdfe8;"></i>
<b style="left:252.00px;top:178.30px;font:normal 4.5px/5.4px 'Liberation Sans',sans-serif;color:#444;">Traits</b>
<i style="left:276.00px;top:177.00px;width:0.50px;height:7.00px;background:#dcdfe8;"></i>
<b style="left:288.00px;top:178.30px;font:normal 4.5px/5.4px 'Liberation Sans',sans-serif;color:#444;">Error Message</b>
<i style="left:332.00px;top:177.00px;width:0.50px;height:7.00px;background:#dcdfe8;"></i>
<svg style="position:absolute;left:6.90px;top:188.10px" width="3" height="3" viewBox="0 0 3 3"><path d="M2.6 0.3 L2.6 2.6 L0.3 2.6 Z" fill="#333"/></svg>
<i style="left:11.80px;top:186.90px;width:5.40px;height:5.40px;background:#3a9a4a;border-radius:50%"></i>
<svg style="position:absolute;left:11.80px;top:186.90px" width="5.4" height="5.4" viewBox="0 0 5.4 5.4"><path d="M1.3 2.8 L2.4 3.9 L4.2 1.6" stroke="#fff" stroke-width="0.75" fill="none"/></svg>
<b style="left:19.50px;top:187.38px;font:normal 4.87px/5.84px 'Liberation Sans',sans-serif;color:#333;">ClassLibrary.Tests (7)</b>
<b style="left:235.00px;top:187.54px;font:normal 4.6px/5.52px 'Liberation Sans',sans-serif;color:#444;">46 ms</b>
<svg style="position:absolute;left:11.60px;top:196.18px" width="3" height="3.2" viewBox="0 0 3 3.2"><path d="M0.6 0.2 L2.6 1.6 L0.6 3.0 Z" fill="none" stroke="#333" stroke-width="0.6"/></svg>
<i style="left:15.60px;top:195.18px;width:5.40px;height:5.40px;background:#3a9a4a;border-radius:50%"></i>
<svg style="position:absolute;left:15.60px;top:195.18px" width="5.4" height="5.4" viewBox="0 0 5.4 5.4"><path d="M1.3 2.8 L2.4 3.9 L4.2 1.6" stroke="#fff" stroke-width="0.75" fill="none"/></svg>
<b style="left:23.30px;top:195.66px;font:normal 4.87px/5.84px 'Liberation Sans',sans-serif;color:#333;">AdvancedStringProcessorV1Should (3)</b>
<b style="left:235.00px;top:195.82px;font:normal 4.6px/5.52px 'Liberation Sans',sans-serif;color:#444;">46 ms</b>
<i style="left:3.00px;top:202.76px;width:346.50px;height:8.20px;background:#c6d0f0;"></i>
<svg style="position:absolute;left:11.10px;top:204.66px" width="3" height="3" viewBox="0 0 3 3"><path d="M2.6 0.3 L2.6 2.6 L0.3 2.6 Z" fill="#333"/></svg>
<i style="left:15.60px;top:203.46px;width:5.40px;height:5.40px;background:#2e92b6;border-radius:50%"></i>
<svg style="position:absolute;left:15.60px;top:203.46px" width="5.4" height="5.4" viewBox="0 0 5.4 5.4"><path d="M2.7 2.4 L2.7 4.3" stroke="#fff" stroke-width="0.75"/><circle cx="2.7" cy="1.4" r="0.5" fill="#fff"/></svg>
<b style="left:23.30px;top:203.94px;font:normal 4.87px/5.84px 'Liberation Sans',sans-serif;color:#333;">AdvancedStringProcessorV2Should (3)</b>
<i style="left:19.40px;top:211.74px;width:5.40px;height:5.40px;background:#2e92b6;border-radius:50%"></i>
<svg style="position:absolute;left:19.40px;top:211.74px" width="5.4" height="5.4" viewBox="0 0 5.4 5.4"><path d="M2.7 2.4 L2.7 4.3" stroke="#fff" stroke-width="0.75"/><circle cx="2.7" cy="1.4" r="0.5" fill="#fff"/></svg>
<b style="left:27.10px;top:212.22px;font:normal 4.87px/5.84px 'Liberation Sans',sans-serif;color:#333;">ProcessAddLength</b>
<i style="left:19.40px;top:220.02px;width:5.40px;height:5.40px;background:#2e92b6;border-radius:50%"></i>
<svg style="position:absolute;left:19.40px;top:220.02px" width="5.4" height="5.4" viewBox="0 0 5.4 5.4"><path d="M2.7 2.4 L2.7 4.3" stroke="#fff" stroke-width="0.75"/><circle cx="2.7" cy="1.4" r="0.5" fill="#fff"/></svg>
<b style="left:27.10px;top:220.50px;font:normal 4.87px/5.84px 'Liberation Sans',sans-serif;color:#333;">ProcessConvertToUppercase</b>
<i style="left:19.40px;top:228.30px;width:5.40px;height:5.40px;background:#2e92b6;border-radius:50%"></i>
<svg style="position:absolute;left:19.40px;top:228.30px" width="5.4" height="5.4" viewBox="0 0 5.4 5.4"><path d="M2.7 2.4 L2.7 4.3" stroke="#fff" stroke-width="0.75"/><circle cx="2.7" cy="1.4" r="0.5" fill="#fff"/></svg>
<b style="left:27.10px;top:228.78px;font:normal 4.87px/5.84px 'Liberation Sans',sans-serif;color:#333;">ProcessNone</b>
<svg style="position:absolute;left:11.60px;top:237.58px" width="3" height="3.2" viewBox="0 0 3 3.2"><path d="M0.6 0.2 L2.6 1.6 L0.6 3.0 Z" fill="none" stroke="#333" stroke-width="0.6"/></svg>
<i style="left:15.60px;top:236.58px;width:5.40px;height:5.40px;background:#2e92b6;border-radius:50%"></i>
<svg style="position:absolute;left:15.60px;top:236.58px" width="5.4" height="5.4" viewBox="0 0 5.4 5.4"><path d="M2.7 2.4 L2.7 4.3" stroke="#fff" stroke-width="0.75"/><circle cx="2.7" cy="1.4" r="0.5" fill="#fff"/></svg>
<b style="left:23.30px;top:237.06px;font:normal 4.87px/5.84px 'Liberation Sans',sans-serif;color:#333;">StringProcessorShould (1)</b>
<b style="left:50.00px;top:219.04px;font:normal 4.6px/5.52px 'Liberation Sans',sans-serif;color:#d6d6dc;">AdvancedStringProcessorV2Should</b>
<i style="left:349.50px;top:175.50px;width:1.20px;height:102.90px;background:#5d6b99;"></i>
<i style="left:350.70px;top:175.50px;width:180.10px;height:102.90px;background:#f8f9fc;"></i>
<b style="left:353.80px;top:177.96px;font:normal 5.9px/7.08px 'Liberation Sans',sans-serif;color:#2a2a2a;">Group Summary</b>
<b style="left:359.00px;top:187.92px;font:normal 5.3px/6.36px 'Liberation Sans',sans-serif;color:#333;">AdvancedStringProcessorV2Should</b>
<b style="left:365.00px;top:196.38px;font:normal 5.2px/6.24px 'Liberation Sans',sans-serif;color:#333;">Tests in group:  3</b>
<b style="left:359.00px;top:207.38px;font:normal 5.2px/6.24px 'Liberation Sans',sans-serif;color:#333;">Outcomes</b>
<i style="left:365.30px;top:214.90px;width:5.60px;height:5.60px;background:#2e92b6;border-radius:50%"></i>
<svg style="position:absolute;left:365.30px;top:214.90px" width="5.6" height="5.6" viewBox="0 0 5.6 5.6"><path d="M2.8 2.5 L2.8 4.4" stroke="#fff" stroke-width="0.75"/><circle cx="2.8" cy="1.5" r="0.5" fill="#fff"/></svg>
<b style="left:375.70px;top:215.38px;font:normal 5.2px/6.24px 'Liberation Sans',sans-serif;color:#333;">3  Not Run</b>
<i style="left:505.0px;top:267.0px;width:14px;height:14px;border-radius:50%;background:rgba(140,140,150,0.28)"></i>
</div>
<div class="tile" style="left:1066.667px;top:599.333px">
<i style="left:0.00px;top:0.00px;width:533.33px;height:27.70px;background:#d2d8ee;"></i>
<i style="left:0.00px;top:25.90px;width:533.33px;height:1.50px;background:#dce1f4;"></i>
<svg style="position:absolute;left:4.00px;top:2.00px" width="11" height="10" viewBox="0 0 11 10"><rect x="1.0" y="2.4" width="2.1" height="4.4" fill="#5b4596"/><path d="M3 4.6 L5.2 4.6" stroke="#6a48b0" stroke-width="1.2"/><path d="M5.3 4.6 L9.0 1.4 L9.0 7.8 Z" fill="#c6a8ee" stroke="#6a3cb4" stroke-width="1.5" stroke-linejoin="round"/></svg>
<b style="left:18.00px;top:4.46px;font:normal 4.9px/5.88px 'Liberation Sans',sans-serif;color:#1e1e28;">File</b>
<b style="left:33.00px;top:4.46px;font:normal 4.9px/5.88px 'Liberation Sans',sans-serif;color:#1e1e28;">Edit</b>
<b style="left:51.00px;top:4.46px;font:normal 4.9px/5.88px 'Liberation Sans',sans-serif;color:#1e1e28;">View</b>
<b style="left:70.00px;top:4.46px;font:normal 4.9px/5.88px 'Liberation Sans',sans-serif;color:#1e1e28;">Project</b>
<b style="left:93.00px;top:4.46px;font:normal 4.9px/5.88px 'Liberation Sans',sans-serif;color:#1e1e28;">Build</b>
<b style="left:113.00px;top:4.46px;font:normal 4.9px/5.88px 'Liberation Sans',sans-serif;color:#1e1e28;">Debug</b>
<b style="left:136.00px;top:4.46px;font:normal 4.9px/5.88px 'Liberation Sans',sans-serif;color:#1e1e28;">Test</b>
<b style="left:152.00px;top:4.46px;font:normal 4.9px/5.88px 'Liberation Sans',sans-serif;color:#1e1e28;">Analyze</b>
<b style="left:178.00px;top:4.46px;font:normal 4.9px/5.88px 'Liberation Sans',sans-serif;color:#1e1e28;">Tools</b>
<b style="left:197.00px;top:4.46px;font:normal 4.9px/5.88px 'Liberation Sans',sans-serif;color:#1e1e28;">Extensions</b>
<b style="left:229.00px;top:4.46px;font:normal 4.9px/5.88px 'Liberation Sans',sans-serif;color:#1e1e28;">Window</b>
<b style="left:255.00px;top:4.46px;font:normal 4.9px/5.88px 'Liberation Sans',sans-serif;color:#1e1e28;">Help</b>
<i style="left:275.00px;top:2.40px;width:91.00px;height:8.40px;background:#fdfdfe;"></i>
<b style="left:277.50px;top:4.49px;font:normal 4.85px/5.82px 'Liberation Sans',sans-serif;color:#6a6c78;">Search (Ctrl+Q)</b>
<svg style="position:absolute;left:357.00px;top:3.80px" width="6" height="6" viewBox="0 0 6 6"><circle cx="3.6" cy="2.4" r="1.6" fill="none" stroke="#444" stroke-width="0.8"/><path d="M2.5 3.5 L0.8 5.2" stroke="#444" stroke-width="0.9"/></svg>
<i style="left:371.00px;top:2.00px;width:37.00px;height:9.00px;background:#d9def2;"></i>
<b style="left:377.00px;top:4.58px;font:normal 4.7px/5.64px 'Liberation Sans',sans-serif;color:#4a4c58;">ClassLibrary</b>
<svg style="position:absolute;left:459.00px;top:2.50px" width="7" height="8.5" viewBox="0 0 7 8.5"><circle cx="3.5" cy="2.6" r="1.7" fill="none" stroke="#333" stroke-width="0.8"/><path d="M0.8 8 Q3.5 4.3 6.2 8 Z" fill="#333"/></svg>
<i style="left:483.00px;top:6.60px;width:4.50px;height:0.45px;background:#8a8e9c;"></i>
<svg style="position:absolute;left:501.50px;top:4.00px" width="5" height="5" viewBox="0 0 5 5"><path d="M1.3 0.6 L4.4 0.6 L4.4 3.7 M0.6 1.4 L3.6 1.4 L3.6 4.4 L0.6 4.4 Z" stroke="#777b88" stroke-width="0.55" fill="none"/></svg>
<svg style="position:absolute;left:521.00px;top:4.30px" width="5" height="5" viewBox="0 0 5 5"><path d="M0.5 0.5 L4.5 4.5 M4.5 0.5 L0.5 4.5" stroke="#8a8e9c" stroke-width="0.55"/></svg>
<i style="left:6.30px;top:14.50px;width:0.60px;height:10.00px;background:#b9bfd6;"></i>
<svg style="position:absolute;left:10.00px;top:16.20px" width="6" height="6" viewBox="0 0 6 6"><circle cx="3" cy="3" r="2" fill="none" stroke="#1d3a6e" stroke-width="1.2"/><path d="M1.6 3 L4.2 3" stroke="#1d3a6e" stroke-width="0.8"/></svg>
<i style="left:20.00px;top:18.80px;width:1.30px;height:1.10px;background:#444;border-radius:0"></i>
<svg style="position:absolute;left:24.50px;top:16.20px" width="6" height="6" viewBox="0 0 6 6"><circle cx="3" cy="3" r="2" fill="none" stroke="#c0c6dc" stroke-width="1.1"/></svg>
<i style="left:33.50px;top:15.50px;width:0.50px;height:8.00px;background:#c3c8dc;"></i>
<svg style="position:absolute;left:36.50px;top:15.60px" width="7" height="7" viewBox="0 0 7 7"><rect x="1" y="2.2" width="4.4" height="3.8" fill="none" stroke="#4a4e60" stroke-width="1"/><path d="M4.5 0.3 L5.2 1.7 L6.6 2.2 L5.2 2.7" fill="#4a4e60"/></svg>
<i style="left:46.80px;top:18.80px;width:1.30px;height:1.10px;background:#444;border-radius:0"></i>
<svg style="position:absolute;left:50.80px;top:15.80px" width="7" height="7" viewBox="0 0 7 7"><path d="M0.5 2 L2.5 2 L3 2.8 L6 2.8 L6 6.3 L0.5 6.3 Z" fill="#d8b8b0"/><path d="M3.5 0.5 L5.5 1.5" stroke="#b89890" stroke-width="0.8"/></svg>
<svg style="position:absolute;left:61.00px;top:16.30px" width="6" height="6" viewBox="0 0 6 6"><path d="M0.4 0.4 L4.6 0.4 L5.6 1.4 L5.6 5.6 L0.4 5.6 Z" fill="#1d3468"/><rect x="1.6" y="0.4" width="2.6" height="1.8" fill="#d9ddef"/></svg>
<svg style="position:absolute;left:69.50px;top:15.60px" width="7" height="7" viewBox="0 0 7 7"><path d="M2.4 0.3 L6.6 0.3 L6.6 4.3 L2.4 4.3 Z" fill="#4a5d8f"/><path d="M0.3 2.6 L4.5 2.6 L4.5 6.6 L0.3 6.6 Z" fill="#1d3468"/></svg>
<svg style="position:absolute;left:80.50px;top:16.20px" width="7" height="6" viewBox="0 0 7 6"><path d="M1.5 2.5 Q4 0.3 5.8 2.5 Q6.5 4.5 4 5.6" fill="none" stroke="#1d3468" stroke-width="1.1"/><path d="M0.4 1 L1.4 3.4 L3.4 2.2 Z" fill="#1d3468"/></svg>
<i style="left:92.00px;top:18.80px;width:1.30px;height:1.10px;background:#444;border-radius:0"></i>
<svg style="position:absolute;left:97.50px;top:16.20px" width="7" height="6" viewBox="0 0 7 6"><path d="M5.5 2.5 Q3 0.3 1.2 2.5 Q0.5 4.5 3 5.6" fill="none" stroke="#c3c8dc" stroke-width="1.1"/><path d="M6.6 1 L5.6 3.4 L3.6 2.2 Z" fill="#c3c8dc"/></svg>
<i style="left:106.20px;top:18.90px;width:1.80px;height:0.60px;background:#c3c8dc;"></i>
<i style="left:106.80px;top:18.30px;width:0.60px;height:1.80px;background:#c3c8dc;"></i>
<i style="left:111.00px;top:15.00px;width:0.50px;height:8.50px;background:#b9bfd6;"></i>
<i style="left:114.00px;top:15.00px;width:27.00px;height:8.50px;background:#fbfbfd;"></i>
<b style="left:116.50px;top:17.44px;font:normal 4.6px/5.52px 'Liberation Sans',sans-serif;color:#333;">Debug</b>
<svg style="position:absolute;left:137.00px;top:18.40px" width="3" height="2" viewBox="0 0 3 2"><path d="M0 0 L3 0 L1.5 1.8 Z" fill="#333"/></svg>
<i style="left:143.50px;top:15.00px;width:46.50px;height:8.50px;background:#fbfbfd;"></i>
<b style="left:146.00px;top:17.44px;font:normal 4.6px/5.52px 'Liberation Sans',sans-serif;color:#444;">Any CPU</b>
<svg style="position:absolute;left:186.00px;top:18.40px" width="3" height="2" viewBox="0 0 3 2"><path d="M0 0 L3 0 L1.5 1.8 Z" fill="#333"/></svg>
<svg style="position:absolute;left:194.50px;top:16.70px" width="4" height="5" viewBox="0 0 4 5"><path d="M0 0 L3.5 2.5 L0 5 Z" fill="#2c7a3c"/></svg>
<b style="left:201.00px;top:17.34px;font:normal 4.6px/5.52px 'Liberation Sans',sans-serif;color:#333;">Start</b>
<svg style="position:absolute;left:214.00px;top:18.60px" width="3" height="2" viewBox="0 0 3 2"><path d="M0 0 L3 0 L1.5 1.8 Z" fill="#333"/></svg>
<i style="left:220.00px;top:15.00px;width:0.50px;height:8.50px;background:#b9bfd6;"></i>
<svg style="position:absolute;left:222.50px;top:16.20px" width="7" height="6" viewBox="0 0 7 6"><path d="M0.5 5.5 L3 1 L6 1 L6 3.5 L3 5.5 Z" fill="#c9b08a"/><path d="M0.5 5.5 L3 3.5" stroke="#555" stroke-width="0.6"/></svg>
<i style="left:231.30px;top:20.60px;width:1.30px;height:1.30px;background:#333;border-radius:0"></i>
<svg style="position:absolute;left:240.00px;top:16.00px" width="7" height="6.5" viewBox="0 0 7 6.5"><path d="M0.6 0.5 L0.6 5.8 M2.2 2 L2.2 5.8 M2.2 2.3 L4.6 2.3 L4.6 5.8" stroke="#3f4660" stroke-width="0.9" fill="none"/></svg>
<svg style="position:absolute;left:250.00px;top:15.80px" width="7" height="7" viewBox="0 0 7 7"><path d="M0.8 1 L6.2 1 M0.8 2.6 L3 2.6 M4 2.6 L6.2 2.6 M2.2 1 L2.2 6.3 M4.6 2.6 L4.6 6.3" stroke="#454c64" stroke-width="0.9" fill="none"/></svg>
<i style="left:259.50px;top:15.50px;width:0.50px;height:8.00px;background:#c3c8dc;"></i>
<svg style="position:absolute;left:263.50px;top:16.20px" width="6" height="6" viewBox="0 0 6 6"><path d="M0.5 1 L5.5 1 M3 1 L3 5.6" stroke="#5b6275" stroke-width="1.0" fill="none"/></svg>
<svg style="position:absolute;left:272.00px;top:16.20px" width="7" height="6" viewBox="0 0 7 6"><path d="M0.5 1 L3 1 M1.7 1 L1.7 5 M3.5 3 L6.5 5.5 M4 5.5 L6.5 5.5" stroke="#6d7389" stroke-width="0.9" fill="none"/></svg>
<i style="left:281.50px;top:15.50px;width:0.50px;height:8.00px;background:#c3c8dc;"></i>
<svg style="position:absolute;left:285.00px;top:16.00px" width="5" height="6.5" viewBox="0 0 5 6.5"><path d="M0.5 0.3 L4.5 0.3 L4.5 6.2 L2.5 4.6 L0.5 6.2 Z" fill="#1f2640"/></svg>
<svg style="position:absolute;left:294.00px;top:16.00px" width="6" height="6.5" viewBox="0 0 6 6.5"><path d="M0.5 0.5 L4 0.5 L4 5.5 L2.2 4.2 L0.5 5.5 Z" fill="none" stroke="#c3c8dc" stroke-width="0.8"/></svg>
<svg style="position:absolute;left:303.00px;top:16.00px" width="6" height="6.5" viewBox="0 0 6 6.5"><path d="M0.5 0.5 L4 0.5 L4 5.5 L2.2 4.2 L0.5 5.5 Z" fill="none" stroke="#c3c8dc" stroke-width="0.8"/></svg>
<svg style="position:absolute;left:312.00px;top:16.00px" width="6" height="6.5" viewBox="0 0 6 6.5"><path d="M0.5 0.5 L4 0.5 L4 5.5 L2.2 4.2 L0.5 5.5 Z" fill="none" stroke="#c3c8dc" stroke-width="0.8"/></svg>
<i style="left:321.00px;top:20.60px;width:1.30px;height:1.30px;background:#333;border-radius:0"></i>
<svg style="position:absolute;left:478.50px;top:16.30px" width="7" height="6.5" viewBox="0 0 7 6.5"><path d="M0.5 6 L5.5 6 M1.2 4.8 Q2 1.6 4.8 1.8 M3.8 0.6 L5.2 1.8 L3.8 3" stroke="#333" stroke-width="0.7" fill="none"/></svg>
<b style="left:486.00px;top:17.58px;font:normal 4.7px/5.64px 'Liberation Sans',sans-serif;color:#333;">Live Share</b>
<svg style="position:absolute;left:519.00px;top:15.50px" width="6" height="8" viewBox="0 0 6 8"><path d="M1 1 L5 1 M1 3 L4 3 M1 1 L1 7 M3 5 L5 7" stroke="#444" stroke-width="0.7" fill="none"/></svg>
<i style="left:0.00px;top:27.70px;width:533.33px;height:249.20px;background:#5d6b99;"></i>
<i style="left:3.00px;top:30.60px;width:101.00px;height:7.70px;background:#5e74b0;"></i>
<b style="left:4.40px;top:32.29px;font:normal 4.85px/5.82px 'Liberation Sans',sans-serif;color:#e8ecf8;">AdvancedStringProcessorV2Should.cs</b>
<i style="left:104.00px;top:30.60px;width:89.00px;height:7.70px;background:#f5e29c;"></i>
<b style="left:105.40px;top:32.29px;font:normal 4.85px/5.82px 'Liberation Sans',sans-serif;color:#2e2a1c;">AdvancedStringProcessorV2.cs</b>
<svg style="position:absolute;left:180.00px;top:33.00px" width="3" height="3" viewBox="0 0 3 3"><path d="M0.5 1.5 L2.5 1.5 M1.5 0.5 L1.5 2.5" stroke="#6b6248" stroke-width="0.6"/></svg>
<svg style="position:absolute;left:186.50px;top:32.60px" width="3.6" height="3.6" viewBox="0 0 3.6 3.6"><path d="M0.4 0.4 L3.2 3.2 M3.2 0.4 L0.4 3.2" stroke="#7a5a30" stroke-width="0.7"/></svg>
<svg style="position:absolute;left:408.80px;top:33.30px" width="3" height="2" viewBox="0 0 3 2"><path d="M0 0 L3 0 L1.5 1.8 Z" fill="#aab2d0"/></svg>
<i style="left:3.00px;top:38.30px;width:410.00px;height:9.10px;background:#fdfdfe;"></i>
<i style="left:3.00px;top:46.80px;width:410.00px;height:0.60px;background:#c9ccd6;"></i>
<i style="left:138.70px;top:38.30px;width:0.60px;height:9.10px;background:#c9ccd6;"></i>
<i style="left:276.70px;top:38.30px;width:0.60px;height:9.10px;background:#c9ccd6;"></i>
<i style="left:4.60px;top:40.00px;width:5.60px;height:5.00px;background:#e8ece8;border:0.8px solid #35503f;box-sizing:border-box"></i>
<b style="left:12.00px;top:41.18px;font:normal 4.7px/5.64px 'Liberation Sans',sans-serif;color:#222;width:120px;overflow:hidden">ClassLibrary</b>
<svg style="position:absolute;left:134.00px;top:42.30px" width="3" height="2" viewBox="0 0 3 2"><path d="M0 0 L3 0 L1.5 1.8 Z" fill="#333"/></svg>
<svg style="position:absolute;left:141.00px;top:40.30px" width="4.5" height="4.5" viewBox="0 0 4.5 4.5"><path d="M0.5 3.5 L2 2 L0.5 0.5" stroke="#8a6a30" stroke-width="0.6" fill="none"/><rect x="2.5" y="2" width="2" height="2" fill="#998"/></svg>
<b style="left:148.30px;top:41.12px;font:normal 4.8px/5.76px 'Liberation Sans',sans-serif;color:#333;width:122px;overflow:hidden">ClassLibrary.Enums.AdvancedStringProcessorV2</b>
<svg style="position:absolute;left:272.00px;top:42.30px" width="3" height="2" viewBox="0 0 3 2"><path d="M0 0 L3 0 L1.5 1.8 Z" fill="#333"/></svg>
<svg style="position:absolute;left:279.00px;top:40.50px" width="4" height="4" viewBox="0 0 4 4"><circle cx="2" cy="2" r="1.4" fill="none" stroke="#555" stroke-width="0.6"/></svg>
<b style="left:285.70px;top:41.12px;font:normal 4.8px/5.76px 'Liberation Sans',sans-serif;color:#333;width:119px;overflow:hidden">Process(List&lt;string&gt; stringsToProcess, StringProcessingOptionsV2 options)</b>
<svg style="position:absolute;left:409.00px;top:42.30px" width="3" height="2" viewBox="0 0 3 2"><path d="M0 0 L3 0 L1.5 1.8 Z" fill="#333"/></svg>
<i style="left:3.00px;top:47.60px;width:410.00px;height:221.20px;background:#ffffff;"></i>
<i style="left:3.00px;top:47.60px;width:9.00px;height:221.20px;background:#f0f0f2;"></i>
<i style="left:9.00px;top:47.60px;width:3.00px;height:221.20px;background:#f7f7f9;"></i>
<i style="left:416.60px;top:29.20px;width:114.20px;height:9.20px;background:#44548e;"></i>
<b style="left:418.50px;top:32.49px;font:normal 4.85px/5.82px 'Liberation Sans',sans-serif;color:#f0f2fa;">Solution Explorer</b>
<svg style="position:absolute;left:512.50px;top:32.20px" width="3" height="2.5" viewBox="0 0 3 2.5"><path d="M0 0 L3 0 L1.5 1.8 Z" fill="#dde"/></svg>
<svg style="position:absolute;left:518.50px;top:31.20px" width="4" height="4.5" viewBox="0 0 4 4.5"><path d="M2 0.3 L2 4.2 M0.3 2.6 L3.7 2.6 M0.8 0.5 L3.2 0.5" stroke="#dde" stroke-width="0.6"/></svg>
<svg style="position:absolute;left:524.50px;top:31.50px" width="4" height="4" viewBox="0 0 4 4"><path d="M0.4 0.4 L3.6 3.6 M3.6 0.4 L0.4 3.6" stroke="#dde" stroke-width="0.6"/></svg>
<i style="left:416.60px;top:38.50px;width:114.20px;height:11.00px;background:#cdd5ee;"></i>
<div style="left:0;top:1px">
<i style="left:421.50px;top:41.60px;width:4.40px;height:4.40px;background:#c7cde2;border-radius:50%"></i>
<i style="left:430.00px;top:41.60px;width:4.40px;height:4.40px;background:#c7cde2;border-radius:50%"></i>
<svg style="position:absolute;left:438.50px;top:41.00px" width="6" height="5" viewBox="0 0 6 5"><path d="M0.5 2.6 L3 0.3 L5.5 2.6 M1.2 2.4 L1.2 4.8 L4.8 4.8 L4.8 2.4" stroke="#333" stroke-width="0.8" fill="none"/></svg>
<i style="left:447.50px;top:41.60px;width:4.40px;height:4.40px;background:#8a8fa3;"></i>
<svg style="position:absolute;left:456.50px;top:43.40px" width="2.5" height="1.6" viewBox="0 0 2.5 1.6"><path d="M0 0 L2.5 0 L1.25 1.5 Z" fill="#444"/></svg>
<i style="left:461.00px;top:40.20px;width:0.50px;height:7.60px;background:#aeb5cc;"></i>
<svg style="position:absolute;left:464.50px;top:41.00px" width="6" height="5.5" viewBox="0 0 6 5.5"><path d="M1 1 Q4.5 0.5 4.8 4" stroke="#555" stroke-width="0.8" fill="none"/><circle cx="2" cy="4" r="1" fill="#555"/></svg>
<svg style="position:absolute;left:473.00px;top:43.40px" width="2.5" height="1.6" viewBox="0 0 2.5 1.6"><path d="M0 0 L2.5 0 L1.25 1.5 Z" fill="#444"/></svg>
<svg style="position:absolute;left:479.50px;top:41.00px" width="5" height="5" viewBox="0 0 5 5"><path d="M0.5 0.5 L4 4 M2 4.3 L4.3 4.3 L4.3 2" stroke="#333" stroke-width="0.8" fill="none"/></svg>
<svg style="position:absolute;left:488.30px;top:40.90px" width="5" height="5.5" viewBox="0 0 5 5.5"><path d="M4 1.4 A2 2 0 1 0 4.3 3.6" stroke="#1e4a8a" stroke-width="1.0" fill="none"/></svg>
<svg style="position:absolute;left:497.00px;top:41.20px" width="5" height="5" viewBox="0 0 5 5"><path d="M0.8 4.2 L4.2 0.8" stroke="#222" stroke-width="1.2"/></svg>
<svg style="position:absolute;left:505.50px;top:40.90px" width="5.5" height="5.5" viewBox="0 0 5.5 5.5"><circle cx="2.7" cy="2.9" r="2" fill="none" stroke="#333" stroke-width="0.8"/><rect x="0.5" y="0.3" width="2" height="2" fill="#333"/></svg>
</div>
<i style="left:416.60px;top:49.50px;width:114.20px;height:9.50px;background:#fcfcfe;"></i>
<i style="left:416.60px;top:58.60px;width:114.20px;height:0.50px;background:#d8dbe6;"></i>
<b style="left:418.50px;top:52.43px;font:normal 4.95px/5.94px 'Liberation Sans',sans-serif;color:#7d7f89;">Search Solution Explorer (Ctrl+;)</b>
<svg style="position:absolute;left:518.50px;top:51.60px" width="5" height="5" viewBox="0 0 5 5"><circle cx="3" cy="2" r="1.4" fill="none" stroke="#444" stroke-width="0.7"/><path d="M2 3 L0.5 4.6" stroke="#444" stroke-width="0.8"/></svg>
<svg style="position:absolute;left:525.50px;top:53.60px" width="2.5" height="1.6" viewBox="0 0 2.5 1.6"><path d="M0 0 L2.5 0 L1.25 1.5 Z" fill="#555"/></svg>
<i style="left:416.60px;top:59.00px;width:114.20px;height:217.90px;background:#f6f7fb;"></i>
<svg style="position:absolute;left:424.00px;top:62.00px" width="5.5" height="5" viewBox="0 0 5.5 5"><rect x="0.4" y="0.4" width="4.6" height="3.6" fill="none" stroke="#444" stroke-width="0.6"/><rect x="0.4" y="0.4" width="4.6" height="1" fill="#444"/><path d="M1.5 4.6 L4 4.6" stroke="#666" stroke-width="0.5"/></svg>
<b style="left:430.80px;top:62.33px;font:normal 4.95px/5.94px 'Liberation Sans',sans-serif;color:#333;">Solution 'ClassLibrary' (2 of 2 projects)</b>
<svg style="position:absolute;left:421.80px;top:70.59px" width="3" height="3" viewBox="0 0 3 3"><path d="M2.6 0.3 L2.6 2.6 L0.3 2.6 Z" fill="#333"/></svg>
<svg style="position:absolute;left:429.00px;top:69.49px" width="6.5" height="5" viewBox="0 0 6.5 5"><rect x="0.4" y="0.4" width="5.6" height="4.2" fill="#e9ecef" stroke="#4a5a4e" stroke-width="0.7"/><path d="M1.5 2 L3 2 M1.5 3.2 L3 3.2" stroke="#444" stroke-width="0.6"/><rect x="3.8" y="1.4" width="1.5" height="2.4" fill="#3d6b4d"/></svg>
<b style="left:437.60px;top:70.09px;font:bold 4.5px/5.4px 'Liberation Sans',sans-serif;color:#111;">ClassLibrary</b>
<svg style="position:absolute;left:429.10px;top:77.88px" width="3" height="3.2" viewBox="0 0 3 3.2"><path d="M0.5 0.2 L2.7 1.6 L0.5 3.0 Z" fill="#333"/></svg>
<svg style="position:absolute;left:436.30px;top:76.98px" width="5.5" height="5.5" viewBox="0 0 5.5 5.5"><path d="M0.6 4.8 L3 2.4" stroke="#222" stroke-width="1.1"/><circle cx="3.6" cy="1.8" r="1.3" fill="#222"/></svg>
<b style="left:444.90px;top:77.31px;font:normal 4.95px/5.94px 'Liberation Sans',sans-serif;color:#222;">Properties</b>
<svg style="position:absolute;left:429.10px;top:85.37px" width="3" height="3.2" viewBox="0 0 3 3.2"><path d="M0.5 0.2 L2.7 1.6 L0.5 3.0 Z" fill="#333"/></svg>
<svg style="position:absolute;left:436.30px;top:84.47px" width="6" height="5" viewBox="0 0 6 5"><rect x="0.3" y="1.8" width="2" height="1.6" fill="#222"/><rect x="3.4" y="1.8" width="2" height="1.6" fill="#222"/><path d="M2 2.6 L3.6 2.6" stroke="#222" stroke-width="0.5"/></svg>
<b style="left:444.90px;top:84.80px;font:normal 4.95px/5.94px 'Liberation Sans',sans-serif;color:#222;">References</b>
<svg style="position:absolute;left:429.10px;top:93.06px" width="3" height="3" viewBox="0 0 3 3"><path d="M2.6 0.3 L2.6 2.6 L0.3 2.6 Z" fill="#333"/></svg>
<svg style="position:absolute;left:436.30px;top:91.96px" width="6" height="5" viewBox="0 0 6 5"><path d="M0.3 0.8 L2.4 0.8 L3 1.5 L5.6 1.5 L5.6 4.5 L0.3 4.5 Z" fill="#e6d6b0"/></svg>
<b style="left:444.90px;top:92.29px;font:normal 4.95px/5.94px 'Liberation Sans',sans-serif;color:#222;">Enums</b>
<svg style="position:absolute;left:437.20px;top:100.35px" width="3" height="3.2" viewBox="0 0 3 3.2"><path d="M0.5 0.2 L2.7 1.6 L0.5 3.0 Z" fill="#333"/></svg>
<svg style="position:absolute;left:444.40px;top:99.45px" width="6" height="5" viewBox="0 0 6 5"><text x="0" y="4" font-family="Liberation Sans" font-size="4" font-weight="bold" fill="#6a8a78">C#</text></svg>
<b style="left:453.00px;top:99.78px;font:normal 4.95px/5.94px 'Liberation Sans',sans-serif;color:#222;">AdvancedStringProcessorV1.cs</b>
<svg style="position:absolute;left:437.20px;top:107.84px" width="3" height="3.2" viewBox="0 0 3 3.2"><path d="M0.5 0.2 L2.7 1.6 L0.5 3.0 Z" fill="#333"/></svg>
<svg style="position:absolute;left:444.40px;top:106.94px" width="6" height="5" viewBox="0 0 6 5"><text x="0" y="4" font-family="Liberation Sans" font-size="4" font-weight="bold" fill="#6a8a78">C#</text></svg>
<b style="left:453.00px;top:107.27px;font:normal 4.95px/5.94px 'Liberation Sans',sans-serif;color:#222;">AdvancedStringProcessorV2.cs</b>
<svg style="position:absolute;left:429.10px;top:115.33px" width="3" height="3.2" viewBox="0 0 3 3.2"><path d="M0.5 0.2 L2.7 1.6 L0.5 3.0 Z" fill="#333"/></svg>
<svg style="position:absolute;left:436.30px;top:114.43px" width="6" height="5" viewBox="0 0 6 5"><path d="M0.3 0.8 L2.4 0.8 L3 1.5 L5.6 1.5 L5.6 4.5 L0.3 4.5 Z" fill="#dcc18c"/></svg>
<b style="left:444.90px;top:114.76px;font:normal 4.95px/5.94px 'Liberation Sans',sans-serif;color:#222;">StructPerformance</b>
<svg style="position:absolute;left:429.10px;top:122.82px" width="3" height="3.2" viewBox="0 0 3 3.2"><path d="M0.5 0.2 L2.7 1.6 L0.5 3.0 Z" fill="#333"/></svg>
<svg style="position:absolute;left:436.30px;top:121.92px" width="6" height="5" viewBox="0 0 6 5"><path d="M0.3 0.8 L2.4 0.8 L3 1.5 L5.6 1.5 L5.6 4.5 L0.3 4.5 Z" fill="#dcc18c"/></svg>
<b style="left:444.90px;top:122.25px;font:normal 4.95px/5.94px 'Liberation Sans',sans-serif;color:#222;">Tasks</b>
<i style="left:417.10px;top:128.31px;width:112.70px;height:7.30px;background:#dfe1ea;"></i>
<svg style="position:absolute;left:421.80px;top:130.51px" width="3" height="3" viewBox="0 0 3 3"><path d="M2.6 0.3 L2.6 2.6 L0.3 2.6 Z" fill="#333"/></svg>
<svg style="position:absolute;left:429.00px;top:129.41px" width="6.5" height="5" viewBox="0 0 6.5 5"><rect x="0.4" y="0.4" width="5.6" height="4.2" fill="#e9ecef" stroke="#4a5a4e" stroke-width="0.7"/><path d="M1.5 2 L3 2 M1.5 3.2 L3 3.2" stroke="#444" stroke-width="0.6"/><rect x="3.8" y="1.4" width="1.5" height="2.4" fill="#3d6b4d"/></svg>
<b style="left:437.60px;top:129.74px;font:normal 4.95px/5.94px 'Liberation Sans',sans-serif;color:#222;">ClassLibrary.Tests</b>
<svg style="position:absolute;left:429.10px;top:137.80px" width="3" height="3.2" viewBox="0 0 3 3.2"><path d="M0.5 0.2 L2.7 1.6 L0.5 3.0 Z" fill="#333"/></svg>
<svg style="position:absolute;left:436.30px;top:136.90px" width="5.5" height="5.5" viewBox="0 0 5.5 5.5"><path d="M0.6 4.8 L3 2.4" stroke="#222" stroke-width="1.1"/><circle cx="3.6" cy="1.8" r="1.3" fill="#222"/></svg>
<b style="left:444.90px;top:137.23px;font:normal 4.95px/5.94px 'Liberation Sans',sans-serif;color:#222;">Properties</b>
<svg style="position:absolute;left:429.10px;top:145.29px" width="3" height="3.2" viewBox="0 0 3 3.2"><path d="M0.5 0.2 L2.7 1.6 L0.5 3.0 Z" fill="#333"/></svg>
<svg style="position:absolute;left:436.30px;top:144.39px" width="6" height="5" viewBox="0 0 6 5"><rect x="0.3" y="1.8" width="2" height="1.6" fill="#222"/><rect x="3.4" y="1.8" width="2" height="1.6" fill="#222"/><path d="M2 2.6 L3.6 2.6" stroke="#222" stroke-width="0.5"/></svg>
<b style="left:444.90px;top:144.72px;font:normal 4.95px/5.94px 'Liberation Sans',sans-serif;color:#222;">References</b>
<svg style="position:absolute;left:429.10px;top:152.78px" width="3" height="3.2" viewBox="0 0 3 3.2"><path d="M0.5 0.2 L2.7 1.6 L0.5 3.0 Z" fill="#333"/></svg>
<svg style="position:absolute;left:436.30px;top:151.88px" width="6" height="5" viewBox="0 0 6 5"><text x="0" y="4" font-family="Liberation Sans" font-size="4" font-weight="bold" fill="#6a8a78">C#</text></svg>
<b style="left:444.90px;top:152.21px;font:normal 4.95px/5.94px 'Liberation Sans',sans-serif;color:#222;">AdvancedStringProcessorV1Should.cs</b>
<svg style="position:absolute;left:429.10px;top:160.27px" width="3" height="3.2" viewBox="0 0 3 3.2"><path d="M0.5 0.2 L2.7 1.6 L0.5 3.0 Z" fill="#333"/></svg>
<svg style="position:absolute;left:436.30px;top:159.37px" width="6" height="5" viewBox="0 0 6 5"><text x="0" y="4" font-family="Liberation Sans" font-size="4" font-weight="bold" fill="#6a8a78">C#</text></svg>
<b style="left:444.90px;top:159.70px;font:normal 4.95px/5.94px 'Liberation Sans',sans-serif;color:#222;">AdvancedStringProcessorV2Should.cs</b>
<svg style="position:absolute;left:436.30px;top:166.86px" width="6" height="5.5" viewBox="0 0 6 5.5"><rect x="0.6" y="0.6" width="4.4" height="4.4" rx="1.2" fill="none" stroke="#333" stroke-width="0.7"/><path d="M2.8 0 L2.8 1.6" stroke="#333" stroke-width="0.7"/></svg>
<b style="left:444.90px;top:167.19px;font:normal 4.95px/5.94px 'Liberation Sans',sans-serif;color:#222;">App.config</b>
<svg style="position:absolute;left:436.30px;top:174.35px" width="6" height="5" viewBox="0 0 6 5"><text x="0" y="4" font-family="Liberation Sans" font-size="4" font-weight="bold" fill="#6a8a78">C#</text></svg>
<b style="left:444.90px;top:174.68px;font:normal 4.95px/5.94px 'Liberation Sans',sans-serif;color:#222;">ObjectReferenceEqualityExample.cs</b>
<svg style="position:absolute;left:436.30px;top:181.84px" width="6" height="5.5" viewBox="0 0 6 5.5"><rect x="0.6" y="0.6" width="4.4" height="4.4" rx="1.2" fill="none" stroke="#333" stroke-width="0.7"/><path d="M2.8 0 L2.8 1.6" stroke="#333" stroke-width="0.7"/></svg>
<b style="left:444.90px;top:182.17px;font:normal 4.95px/5.94px 'Liberation Sans',sans-serif;color:#222;">packages.config</b>
<svg style="position:absolute;left:429.10px;top:190.23px" width="3" height="3.2" viewBox="0 0 3 3.2"><path d="M0.5 0.2 L2.7 1.6 L0.5 3.0 Z" fill="#333"/></svg>
<svg style="position:absolute;left:436.30px;top:189.33px" width="6" height="5" viewBox="0 0 6 5"><text x="0" y="4" font-family="Liberation Sans" font-size="4" font-weight="bold" fill="#6a8a78">C#</text></svg>
<b style="left:444.90px;top:189.66px;font:normal 4.95px/5.94px 'Liberation Sans',sans-serif;color:#222;">StringProcessorShould.cs</b>
<svg style="position:absolute;left:436.30px;top:196.82px" width="6" height="5" viewBox="0 0 6 5"><text x="0" y="4" font-family="Liberation Sans" font-size="4" font-weight="bold" fill="#6a8a78">C#</text></svg>
<b style="left:444.90px;top:197.15px;font:normal 4.95px/5.94px 'Liberation Sans',sans-serif;color:#222;">StructEqualityPerformance.cs</b>
<i style="left:0.00px;top:276.90px;width:533.33px;height:12.80px;background:#5d6b99;"></i>
<i style="left:0.00px;top:276.90px;width:533.33px;height:0.90px;background:#4f5a88;"></i>
<b style="left:2.60px;top:281.38px;font:normal 4.7px/5.64px 'Liberation Sans',sans-serif;color:#eef0f8;">Test Explorer</b>
<b style="left:34.50px;top:281.38px;font:normal 4.7px/5.64px 'Liberation Sans',sans-serif;color:#eef0f8;">Error List</b>
<b style="left:58.40px;top:281.38px;font:normal 4.7px/5.64px 'Liberation Sans',sans-serif;color:#eef0f8;">Output</b>
<i style="left:0.00px;top:289.70px;width:533.33px;height:9.97px;background:#42508c;"></i>
<i style="left:0.00px;top:298.30px;width:533.33px;height:1.37px;background:#384276;"></i>
<svg style="position:absolute;left:2.50px;top:291.20px" width="6" height="6" viewBox="0 0 6 6"><path d="M1 5.5 L1 1 L5 1 L5 5 M0.2 4.3 L1 5.5 L1.8 4.3" stroke="#eef" stroke-width="0.7" fill="none"/></svg>
<b style="left:11.50px;top:292.55px;font:normal 4.75px/5.7px 'Liberation Sans',sans-serif;color:#f2f3f8;">Ready</b>
<b style="left:202.00px;top:292.60px;font:normal 4.5px/5.4px 'Liberation Sans',sans-serif;color:#f2f3f8;">Ln 15</b>
<b style="left:241.00px;top:292.60px;font:normal 4.5px/5.4px 'Liberation Sans',sans-serif;color:#f2f3f8;">Col 17</b>
<b style="left:280.00px;top:292.60px;font:normal 4.5px/5.4px 'Liberation Sans',sans-serif;color:#f2f3f8;">Ch 17</b>
<b style="left:336.00px;top:292.60px;font:normal 4.5px/5.4px 'Liberation Sans',sans-serif;color:#f2f3f8;">INS</b>
<svg style="position:absolute;left:449.00px;top:291.60px" width="4" height="5" viewBox="0 0 4 5"><path d="M2 0.3 L3.8 2.3 L2.6 2.3 L2.6 4.8 L1.4 4.8 L1.4 2.3 L0.2 2.3 Z" fill="#f2f3f8"/></svg>
<b style="left:455.50px;top:292.40px;font:normal 5.0px/6.0px 'Liberation Sans',sans-serif;color:#f2f3f8;">Add to Source Control</b>
<svg style="position:absolute;left:507.00px;top:293.50px" width="3" height="2" viewBox="0 0 3 2"><path d="M0 0 L3 0 L1.5 1.8 Z" fill="#f2f3f8"/></svg>
<svg style="position:absolute;left:519.00px;top:291.00px" width="5" height="6" viewBox="0 0 5 6"><path d="M2.5 0.3 Q4.3 0.8 4.3 3 L4.8 4.5 L0.2 4.5 L0.7 3 Q0.7 0.8 2.5 0.3 Z M1.8 5 L3.2 5 L2.5 5.8 Z" fill="#f2f3f8"/></svg>
<div style="left:3.0px;top:47.6px;width:402.20px;height:221.20px;overflow:hidden">
<b style="left:30.30px;top:1.59px;font:normal 6.62px/9.42px 'Liberation Mono',monospace" class="cd"><span style="color:#a8a8ac">using System;</span></b>
<b style="left:30.30px;top:11.01px;font:normal 6.62px/9.42px 'Liberation Mono',monospace" class="cd"><span style="color:#1e1e1e">using System.Collections.Generic;</span></b>
<b style="left:30.30px;top:20.43px;font:normal 6.62px/9.42px 'Liberation Mono',monospace" class="cd"><span style="color:#a8a8ac">using System.Linq;</span></b>
<b style="left:30.30px;top:29.85px;font:normal 6.62px/9.42px 'Liberation Mono',monospace" class="cd"><span style="color:#a8a8ac">using System.Text;</span></b>
<b style="left:30.30px;top:39.27px;font:normal 6.62px/9.42px 'Liberation Mono',monospace" class="cd"><span style="color:#a8a8ac">using System.Threading.Tasks;</span></b>
<b style="left:30.30px;top:48.69px;font:normal 6.62px/9.42px 'Liberation Mono',monospace" class="cd"></b>
<b style="left:30.30px;top:58.11px;font:normal 6.62px/9.42px 'Liberation Mono',monospace" class="cd"><span style="color:#262a40">namespace</span> <span style="color:#202020">ClassLibrary</span><span style="color:#202020">.</span><span style="color:#202020">Enums</span></b>
<i style="left:21.00px;top:65.93px;width:1.9px;height:9.42px;background:#8fd48f"></i>
<b style="left:30.30px;top:67.53px;font:normal 6.62px/9.42px 'Liberation Mono',monospace" class="cd"><span style="color:#202020">{</span></b>
<b style="left:46.18px;top:78.06px;font:normal 4.6px/6px 'Liberation Sans',sans-serif;letter-spacing:0.5px;color:#a2a2aa">4 references</b>
<i style="left:21.00px;top:75.35px;width:1.9px;height:16.62px;background:#8fd48f"></i>
<b style="left:30.30px;top:84.15px;font:normal 6.62px/9.42px 'Liberation Mono',monospace" class="cd">    <span style="color:#262a40">public</span> <span style="color:#262a40">enum</span> <span style="color:#93acb0">StringProcessingOptionsV2</span></b>
<i style="left:21.00px;top:91.97px;width:1.9px;height:9.42px;background:#8fd48f"></i>
<b style="left:30.30px;top:93.57px;font:normal 6.62px/9.42px 'Liberation Mono',monospace" class="cd">    <span style="color:#202020">{</span></b>
<i style="left:21.00px;top:101.39px;width:1.9px;height:9.42px;background:#8fd48f"></i>
<b style="left:30.30px;top:102.99px;font:normal 6.62px/9.42px 'Liberation Mono',monospace" class="cd">        <span style="color:#202020">None</span> <span style="color:#202020">=</span> <span style="color:#202020">0</span><span style="color:#202020">,</span></b>
<i style="left:21.00px;top:110.81px;width:1.9px;height:9.42px;background:#8fd48f"></i>
<b style="left:30.30px;top:112.41px;font:normal 6.62px/9.42px 'Liberation Mono',monospace" class="cd">        <span style="color:#202020">ConvertToUppercase</span> <span style="color:#202020">=</span> <span style="color:#202020">1</span><span style="color:#202020">,</span></b>
<i style="left:21.00px;top:120.23px;width:1.9px;height:9.42px;background:#8fd48f"></i>
<b style="left:30.30px;top:121.83px;font:normal 6.62px/9.42px 'Liberation Mono',monospace" class="cd">        <span style="color:#202020">AddLength</span> <span style="color:#202020">=</span> <span style="color:#202020">2</span></b>
<i style="left:21.00px;top:129.65px;width:1.9px;height:9.42px;background:#8fd48f"></i>
<b style="left:30.30px;top:131.25px;font:normal 6.62px/9.42px 'Liberation Mono',monospace" class="cd">    <span style="color:#202020">}</span></b>
<b style="left:46.18px;top:141.78px;font:normal 4.6px/6px 'Liberation Sans',sans-serif;letter-spacing:0.5px;color:#a2a2aa">0 references</b>
<i style="left:21.00px;top:139.07px;width:1.9px;height:16.62px;background:#8fd48f"></i>
<b style="left:30.30px;top:147.87px;font:normal 6.62px/9.42px 'Liberation Mono',monospace" class="cd">    <span style="color:#262a40">public</span> <span style="color:#262a40">class</span> <span style="color:#93acb0">AdvancedStringProcessorV2</span></b>
<i style="left:21.00px;top:155.69px;width:1.9px;height:9.42px;background:#8fd48f"></i>
<b style="left:30.30px;top:157.29px;font:normal 6.62px/9.42px 'Liberation Mono',monospace" class="cd">    <span style="color:#202020">{</span></b>
<b style="left:62.06px;top:167.82px;font:normal 4.6px/6px 'Liberation Sans',sans-serif;letter-spacing:0.5px;color:#a2a2aa">0 references</b>
<i style="left:21.00px;top:165.11px;width:1.9px;height:16.62px;background:#8fd48f"></i>
<b style="left:30.30px;top:173.91px;font:normal 6.62px/9.42px 'Liberation Mono',monospace" class="cd">        <span style="color:#262a40">public</span> <span style="color:#93acb0">List</span><span style="color:#202020">&lt;</span><span style="color:#262a40">string</span><span style="color:#202020">&gt;</span> <span style="color:#6a6054">Process</span><span style="color:#202020">(</span><span style="color:#93acb0">List</span><span style="color:#202020">&lt;</span><span style="color:#262a40">string</span><span style="color:#202020">&gt;</span> <span style="color:#3c4156">stringsToProcess</span><span style="color:#202020">,</span></b>
<i style="left:21.00px;top:181.73px;width:1.9px;height:9.42px;background:#8fd48f"></i>
<b style="left:30.30px;top:183.33px;font:normal 6.62px/9.42px 'Liberation Mono',monospace" class="cd">                                    <span style="color:#93acb0">StringProcessingOptionsV2</span> <span style="color:#3c4156">options</span><span style="color:#202020">)</span></b>
<i style="left:21.00px;top:191.15px;width:1.9px;height:9.42px;background:#8fd48f"></i>
<b style="left:30.30px;top:192.75px;font:normal 6.62px/9.42px 'Liberation Mono',monospace" class="cd">        <span style="color:#202020">{</span></b>
<i style="left:21.00px;top:200.57px;width:1.9px;height:9.42px;background:#8fd48f"></i>
<b style="left:30.30px;top:202.17px;font:normal 6.62px/9.42px 'Liberation Mono',monospace" class="cd">            <span style="color:#262a40">bool</span> <span style="color:#3c4156">noProcessingIsRequired</span> <span style="color:#202020">=</span> <span style="color:#3c4156">options</span> <span style="color:#202020">=</span><span style="color:#202020">=</span> <span style="color:#93acb0">StringProcessingOptionsV2</span><span style="color:#202020">.</span><span style="color:#202020">None</span><span style="color:#202020">;</span></b>
<i style="left:21.00px;top:209.99px;width:1.9px;height:9.42px;background:#8fd48f"></i>
<b style="left:30.30px;top:211.59px;font:normal 6.62px/9.42px 'Liberation Mono',monospace" class="cd">            <span style="color:#262a40">bool</span> <span style="color:#3c4156">conversionToUppercaseIsRequired</span> <span style="color:#202020">=</span></b>
<i style="left:21.00px;top:219.41px;width:1.9px;height:9.42px;background:#8fd48f"></i>
<b style="left:30.30px;top:221.01px;font:normal 6.62px/9.42px 'Liberation Mono',monospace" class="cd">                <span style="color:#202020">(</span><span style="color:#3c4156">options</span> <span style="color:#202020">&amp;</span> <span style="color:#93acb0">StringProcessingOptionsV2</span><span style="color:#202020">.</span><span style="color:#202020">ConvertToUppercase</span><span style="color:#202020">)</span> <span style="color:#202020">!</span><span style="color:#202020">=</span> <span style="color:#202020">0</span><span style="color:#202020">;</span></b>
</div>
<i style="left:30.00px;top:52.30px;width:0.60px;height:41.68px;background:#b0b0b8;"></i>
<i style="left:30.00px;top:93.58px;width:1.80px;height:0.60px;background:#b0b0b8;"></i>
<i style="left:30.00px;top:108.82px;width:0.60px;height:159.98px;background:#b0b0b8;"></i>
<i style="left:28.3px;top:50.30px;width:4px;height:4px;background:#fff;border:0.6px solid #a0a0a8;box-sizing:border-box"></i>
<i style="left:29.30px;top:52.00px;width:2.00px;height:0.60px;background:#777;"></i>
<i style="left:28.3px;top:106.82px;width:4px;height:4px;background:#fff;border:0.6px solid #a0a0a8;box-sizing:border-box"></i>
<i style="left:29.30px;top:108.52px;width:2.00px;height:0.60px;background:#777;"></i>
<i style="left:28.3px;top:132.86px;width:4px;height:4px;background:#fff;border:0.6px solid #a0a0a8;box-sizing:border-box"></i>
<i style="left:29.30px;top:134.56px;width:2.00px;height:0.60px;background:#777;"></i>
<i style="left:28.3px;top:196.58px;width:4px;height:4px;background:#fff;border:0.6px solid #a0a0a8;box-sizing:border-box"></i>
<i style="left:29.30px;top:198.28px;width:2.00px;height:0.60px;background:#777;"></i>
<i style="left:28.3px;top:222.62px;width:4px;height:4px;background:#fff;border:0.6px solid #a0a0a8;box-sizing:border-box"></i>
<i style="left:29.30px;top:224.32px;width:2.00px;height:0.60px;background:#777;"></i>
<svg style="position:absolute;left:295.50px;top:109.80px" width="3" height="8.4" viewBox="0 0 3 8.4"><path d="M0.3 0.4 L1.2 0.4 L1.5 0.8 L1.8 0.4 L2.7 0.4 M1.5 0.8 L1.5 7.6 M0.3 8.0 L1.2 8.0 L1.5 7.6 L1.8 8.0 L2.7 8.0" stroke="#555" stroke-width="0.6" fill="none"/></svg>
<i style="left:405.20px;top:47.60px;width:7.80px;height:221.20px;background:#f4f4f6;"></i>
<i style="left:405.20px;top:47.60px;width:0.50px;height:221.20px;background:#e4e4ea;"></i>
<svg style="position:absolute;left:406.60px;top:49.20px" width="5.5" height="5.5" viewBox="0 0 5.5 5.5"><path d="M2.75 0.3 L2.75 5.2 M0.3 2.75 L5.2 2.75" stroke="#222" stroke-width="1.0"/></svg>
<i style="left:405.70px;top:55.20px;width:7.30px;height:0.50px;background:#999;"></i>
<svg style="position:absolute;left:407.70px;top:57.40px" width="3" height="2" viewBox="0 0 3 2"><path d="M0 1.8 L3 1.8 L1.5 0 Z" fill="#888"/></svg>
<i style="left:408.50px;top:63.80px;width:3.60px;height:50.20px;background:#c6c7cc;"></i>
<svg style="position:absolute;left:407.70px;top:264.30px" width="3" height="2" viewBox="0 0 3 2"><path d="M0 0 L3 0 L1.5 1.8 Z" fill="#888"/></svg>
<i style="left:405.80px;top:77.50px;width:2.60px;height:119.00px;background:#bfe6bf;"></i>
<i style="left:405.80px;top:193.40px;width:6.80px;height:1.00px;background:#555;"></i>
<i style="left:3.00px;top:268.80px;width:410.00px;height:8.10px;background:#eeeff3;"></i>
<b style="left:4.80px;top:270.89px;font:normal 4.6px/5.52px 'Liberation Sans',sans-serif;color:#444;">133 %</b>
<svg style="position:absolute;left:24.00px;top:271.20px" width="2.5" height="1.6" viewBox="0 0 2.5 1.6"><path d="M0 0 L2.5 0 L1.25 1.5 Z" fill="#555"/></svg>
<i style="left:30.00px;top:269.40px;width:0.50px;height:6.90px;background:#d6d8e0;"></i>
<svg style="position:absolute;left:37.50px;top:270.20px" width="4" height="4" viewBox="0 0 4 4"><circle cx="2" cy="2" r="1.7" fill="#5aa55a"/><path d="M1 2 L1.8 2.8 L3 1.2" stroke="#fff" stroke-width="0.5" fill="none"/></svg>
<b style="left:44.50px;top:270.77px;font:normal 4.8px/5.76px 'Liberation Sans',sans-serif;color:#222;">No issues found</b>
<svg style="position:absolute;left:111.00px;top:270.00px" width="4" height="4" viewBox="0 0 4 4"><circle cx="2" cy="2" r="1.5" fill="none" stroke="#555" stroke-width="0.6"/></svg>
<svg style="position:absolute;left:117.50px;top:271.20px" width="2.5" height="1.6" viewBox="0 0 2.5 1.6"><path d="M0 0 L2.5 0 L1.25 1.5 Z" fill="#555"/></svg>
<i style="left:124.50px;top:269.40px;width:0.50px;height:6.90px;background:#d6d8e0;"></i>
<svg style="position:absolute;left:131.00px;top:270.80px" width="2" height="2.5" viewBox="0 0 2 2.5"><path d="M2 0 L0 1.25 L2 2.5 Z" fill="#777"/></svg>
<i style="left:137.00px;top:270.20px;width:220.70px;height:3.40px;background:#c4c5cb;"></i>
<svg style="position:absolute;left:400.00px;top:270.80px" width="2" height="2.5" viewBox="0 0 2 2.5"><path d="M0 0 L2 1.25 L0 2.5 Z" fill="#777"/></svg>
<i style="left:505.0px;top:267.0px;width:14px;height:14px;border-radius:50%;background:rgba(140,140,150,0.28)"></i>
</div>
</body></html>
